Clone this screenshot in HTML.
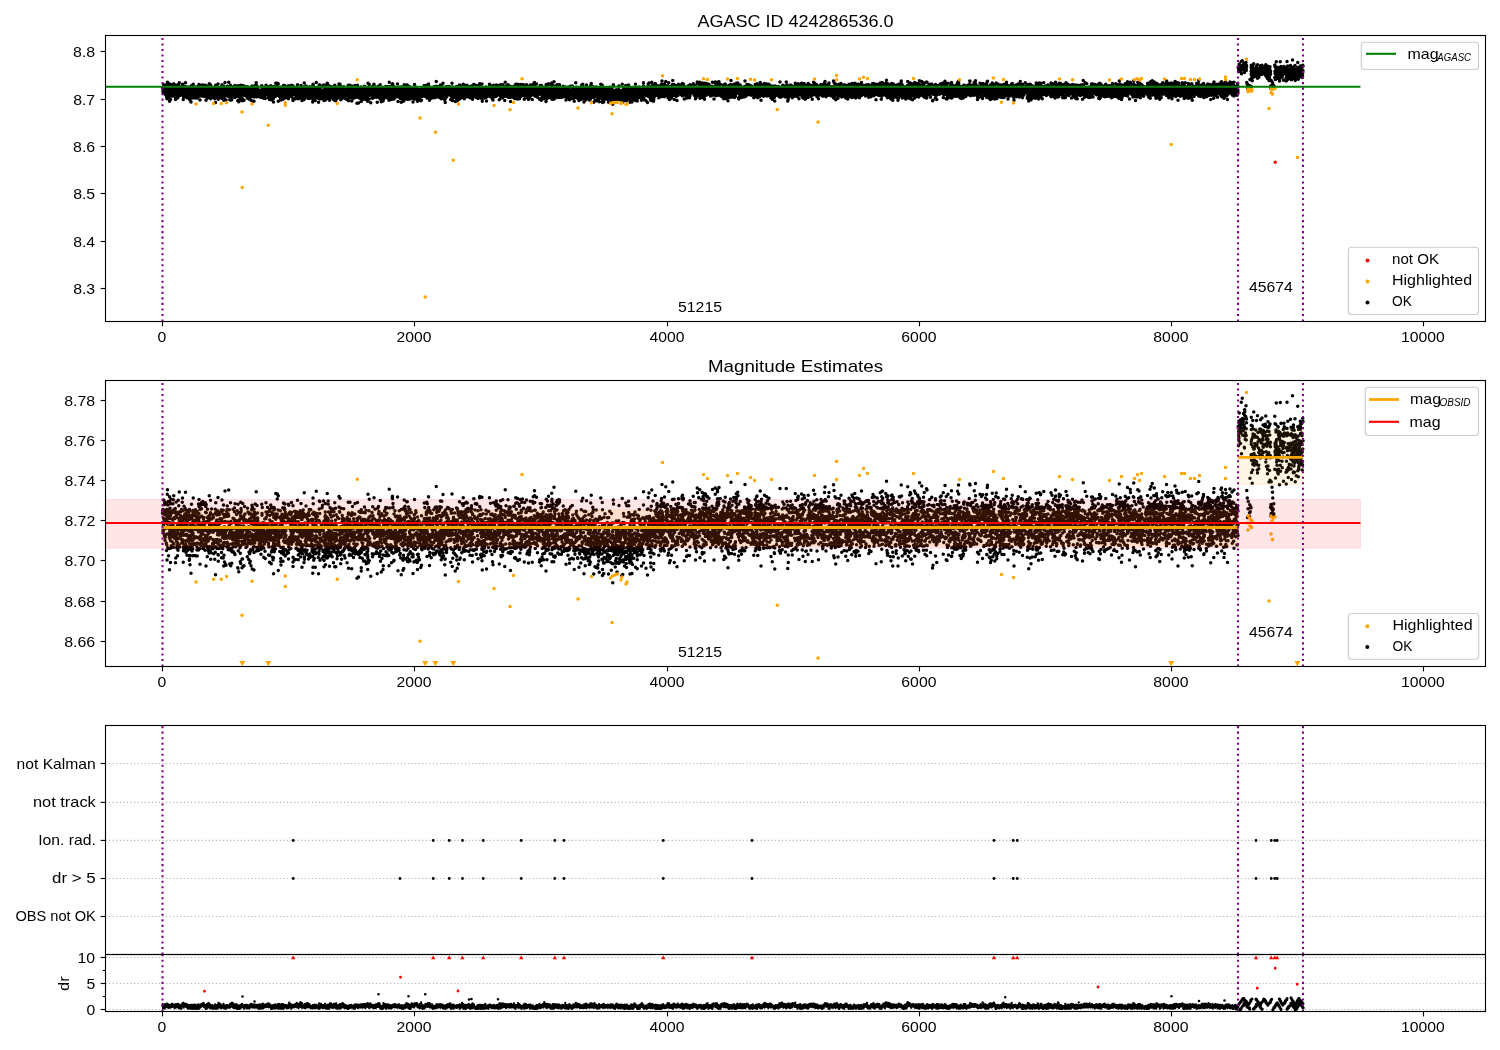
<!DOCTYPE html><html><head><meta charset="utf-8"><title>AGASC 424286536</title><style>html,body{margin:0;padding:0;background:#fff;overflow:hidden}svg{display:block;will-change:transform}text{font-family:"Liberation Sans",sans-serif}</style></head><body>
<svg width="1500" height="1050" viewBox="0 0 1500 1050">
<rect width="1500" height="1050" fill="#fff"/>
<defs>
<clipPath id="c1"><rect x="105.5" y="35.5" width="1380.0" height="286.0"/></clipPath>
<clipPath id="c2"><rect x="105.5" y="380.5" width="1380.0" height="286.0"/></clipPath>
<clipPath id="c3"><rect x="105.5" y="725.5" width="1380.0" height="229.0"/></clipPath>
<clipPath id="c4"><rect x="105.5" y="954.5" width="1380.0" height="57.0"/></clipPath>
</defs>
<g clip-path="url(#c1)">
<path transform="scale(0.25)" d="M1602 394h0m3499 255h0" stroke="#ff0000" stroke-width="14" stroke-linecap="round" fill="none"/>
<path transform="scale(0.25)" d="M650 351h0m1-2h0m1 19h0m0-20h0m0 12h0m1 9h0m0-6h0m0 7h0m1-8h0m0-6h0m1-17h0m1 18h0m1 2h0m1 14h0m0-30h0m1 9h0m0-3h0m0-8h0m0 11h0m1-3h0m0 25h0m0 3h0m0-3h0m1 0h0m0-8h0m0 8h0m2-16h0m2-16h0m0 38h0m0-19h0m1 26h0m0-16h0m1-23h0m0 33h0m0-31h0m0 4h0m0 3h0m1-1h0m0 2h0m0 37h0m0-36h0m0-3h0m1-23h0m0 32h0m0-4h0m1-10h0m0-22h0m0 42h0m1-7h0m0-21h0m0 6h0m0 35h0m2-44h0m1 9h0m0 12h0m0 31h0m0-27h0m0-15h0m2 10h0m0 25h0m0-20h0m1 9h0m0-14h0m0-4h0m0-8h0m1 24h0m0-2h0m0-16h0m0-18h0m0 69h0m1-65h0m0 28h0m1 2h0m0-18h0m0-4h0m0 28h0m0-30h0m0 23h0m1-5h0m0-8h0m0 11h0m0 0h0m1-13h0m0 23h0m0 21h0m0-27h0m1-5h0m0-24h0m0 9h0m0-13h0m0 23h0m1 23h0m1-2h0m2-32h0m0 19h0m0 1h0m0-2h0m0-17h0m1 17h0m0 5h0m0-6h0m1 11h0m0 6h0m0-15h0m0 5h0m1-6h0m1-10h0m1-16h0m0 21h0m0-6h0m1-18h0m1 27h0m0-5h0m0-5h0m1 16h0m0 12h0m0-13h0m0-23h0m0 32h0m0-45h0m1 21h0m2 19h0m0-6h0m1-20h0m0 7h0m0 15h0m0-20h0m2-4h0m1 20h0m0 7h0m0 24h0m1-32h0m0 28h0m1-18h0m1-35h0m0 24h0m0-11h0m1 1h0m0 23h0m1-28h0m1 28h0m0 6h0m0-13h0m0 11h0m2-7h0m0-13h0m0 30h0m0-18h0m1-5h0m0-6h0m0 16h0m0-15h0m1 3h0m0 19h0m0-5h0m1-42h0m0 24h0m0-11h0m2-8h0m0 17h0m1 10h0m0-10h0m0-4h0m0 24h0m1-50h0m0 26h0m0 5h0m0-4h0m1 5h0m0-7h0m0 6h0m1-12h0m0 33h0m1-24h0m0 7h0m0-2h0m1 2h0m1-12h0m0 19h0m0-19h0m0 10h0m1-4h0m0 16h0m0-16h0m0-10h0m1 15h0m0-1h0m1-5h0m1-3h0m0-8h0m0 23h0m0-4h0m1 2h0m0 10h0m0-16h0m1 9h0m1-31h0m0 35h0m0 1h0m1 3h0m0-43h0m1 22h0m0 8h0m1-18h0m0 21h0m1 1h0m0-7h0m0 34h0m1-15h0m0-20h0m0 9h0m0 15h0m0-23h0m0-9h0m1 30h0m0-31h0m1 7h0m0 17h0m0-33h0m1 10h0m0 27h0m0-14h0m1-11h0m1-5h0m1 4h0m0-9h0m1 20h0m1-36h0m0 47h0m1 3h0m0-9h0m0-17h0m0 30h0m1-34h0m0-3h0m0 40h0m1-29h0m0 3h0m1 9h0m0-14h0m0 7h0m1-6h0m0 1h0m0 25h0m1-1h0m0 0h0m0-29h0m0-5h0m0 24h0m0 4h0m0 14h0m0-27h0m1-4h0m0-2h0m1 29h0m1-38h0m0 18h0m0-9h0m1 15h0m1-6h0m0-14h0m0 25h0m1-10h0m0-15h0m0 25h0m0-24h0m1 22h0m0-22h0m0 0h0m1-4h0m0 6h0m0 21h0m0-24h0m0 20h0m1 23h0m0-30h0m1-18h0m0 29h0m0-9h0m0-11h0m0 28h0m0-10h0m0 20h0m0-4h0m0-37h0m0 21h0m1 17h0m0-19h0m0 7h0m0-15h0m0-16h0m0 20h0m1 31h0m0-28h0m0 19h0m0-27h0m0 0h0m0 0h0m0-2h0m0 21h0m2-17h0m0 2h0m0 16h0m1-11h0m0-18h0m1 21h0m0-2h0m0 34h0m1-53h0m0 6h0m0 24h0m1-2h0m0-40h0m0 38h0m0-1h0m1-26h0m0 29h0m0-27h0m0 19h0m0-6h0m1-13h0m0 0h0m0 6h0m0 25h0m0-32h0m0 13h0m1 3h0m0 6h0m0-24h0m0 11h0m2-4h0m0 32h0m0-7h0m0-22h0m1 14h0m0 4h0m0-10h0m0 0h0m0-12h0m0-9h0m0-1h0m0 21h0m1-33h0m1 29h0m0 15h0m0-18h0m1 12h0m1-22h0m0 22h0m1-2h0m1 7h0m1 11h0m1-16h0m0-17h0m1 16h0m0-21h0m1 39h0m0-28h0m0 3h0m0-19h0m1 2h0m1 5h0m1 26h0m0 0h0m1-7h0m0-15h0m1 15h0m0-15h0m1 15h0m0 12h0m0-3h0m0-34h0m0 12h0m1 31h0m0-13h0m0-19h0m0-4h0m1-2h0m0 13h0m0-7h0m1-3h0m0 4h0m1-10h0m0 10h0m0-6h0m1 11h0m1 20h0m0-17h0m0-10h0m0 9h0m0-25h0m1 18h0m0-3h0m1 9h0m0-15h0m0-7h0m0-7h0m0 26h0m2 3h0m0 9h0m0-2h0m0 11h0m0-22h0m1 17h0m0-19h0m0 7h0m1 32h0m0-52h0m0 33h0m0-26h0m0 9h0m0 2h0m1 7h0m0-30h0m1 17h0m0 4h0m0 4h0m0 12h0m1-5h0m1 7h0m0-12h0m0-27h0m1-2h0m0 31h0m0 8h0m1-2h0m0-31h0m0 19h0m0 14h0m1-11h0m0-15h0m0 8h0m0 19h0m1-10h0m1-6h0m2 20h0m0-14h0m0-31h0m3 28h0m0-25h0m0 13h0m0 10h0m0 2h0m0 16h0m0-21h0m0 13h0m0-17h0m1 22h0m0-4h0m1-1h0m0-21h0m1 9h0m2 2h0m0-5h0m1 6h0m0 19h0m1-14h0m0 3h0m0-34h0m0 26h0m1 7h0m0-24h0m0 10h0m1 17h0m0 3h0m0-35h0m1 56h0m1-58h0m0 8h0m0 24h0m0 7h0m0-15h0m1-8h0m0 18h0m0-17h0m1 6h0m0 1h0m0 7h0m0 8h0m1-4h0m1-9h0m0 3h0m0 21h0m1-46h0m0 9h0m0 28h0m2-29h0m0 12h0m1 2h0m0 18h0m1-11h0m0-6h0m0 7h0m1-19h0m0 26h0m0-14h0m1 0h0m0 19h0m1-54h0m0 32h0m0-9h0m0 0h0m1 17h0m0-13h0m0 2h0m0 19h0m1-20h0m0-10h0m1 4h0m1 30h0m0-31h0m1-17h0m0 12h0m0 23h0m1 21h0m1-27h0m0 21h0m0-24h0m1 19h0m0-21h0m0 6h0m1-22h0m0 16h0m0-1h0m1-5h0m0 8h0m2 0h0m1 15h0m0 1h0m1-19h0m1 14h0m0-23h0m0 32h0m0-18h0m0 9h0m0-20h0m1 13h0m1 12h0m0-26h0m0 13h0m1 22h0m0-8h0m1-4h0m1-10h0m0 9h0m0 6h0m1-21h0m1 2h0m0 31h0m1-17h0m0-12h0m0-5h0m1 27h0m0-9h0m0-32h0m0 19h0m1-15h0m0 59h0m1-69h0m0 35h0m1 7h0m0-16h0m1-3h0m0-12h0m0 27h0m0-20h0m2-1h0m0 0h0m1 27h0m0-1h0m0-19h0m0-3h0m0-9h0m0 14h0m1-8h0m0 8h0m0-1h0m0 10h0m1-4h0m0-23h0m0 23h0m1-1h0m0-2h0m0 0h0m1 10h0m0-43h0m0 54h0m1 1h0m0-31h0m0 37h0m0-16h0m0-15h0m0 3h0m1-17h0m0 13h0m0 0h0m1-1h0m0 14h0m1-17h0m1 11h0m0-19h0m1 8h0m0 24h0m0-16h0m1-12h0m0 24h0m0-4h0m0-26h0m1 32h0m3-26h0m0 9h0m0-1h0m0 13h0m1-8h0m0-10h0m0 23h0m0-23h0m1-11h0m0-1h0m1 11h0m0 30h0m0 4h0m1-36h0m1-18h0m2 35h0m0 8h0m0-10h0m0-4h0m1 17h0m0-20h0m1-13h0m1 17h0m0 11h0m0-31h0m0 45h0m1-50h0m0 21h0m0 6h0m1-12h0m0 42h0m0-19h0m1 9h0m1-16h0m0-2h0m0-18h0m0 9h0m0 6h0m0 9h0m1-26h0m0 45h0m1-33h0m1-35h0m0 35h0m1 2h0m0-8h0m1 11h0m0 30h0m1-21h0m0-27h0m1 48h0m1-32h0m0 5h0m0-19h0m1 14h0m1 7h0m0 8h0m0-34h0m1 5h0m0-6h0m0 35h0m0-3h0m1-1h0m0-34h0m0 37h0m1-9h0m1-7h0m1-6h0m1 26h0m0-34h0m1 1h0m1 31h0m0-55h0m0 25h0m1 9h0m0 18h0m1-33h0m1 22h0m1 29h0m0-28h0m1-6h0m0-3h0m0 5h0m0 8h0m1-14h0m1 6h0m0 5h0m0-31h0m1 60h0m0-15h0m1 1h0m0-17h0m0-11h0m1 7h0m1 15h0m0-20h0m1 38h0m0-29h0m0-4h0m0 18h0m1 4h0m1-14h0m2-3h0m0 6h0m0-2h0m1-27h0m0 8h0m0 31h0m1-21h0m0 4h0m0-5h0m0 11h0m0 7h0m1-3h0m0-9h0m1 4h0m1-18h0m1 32h0m0-9h0m0-4h0m1-30h0m0 4h0m1 9h0m0 11h0m0-11h0m1-17h0m0 28h0m0-10h0m0 30h0m1-15h0m0-2h0m0-15h0m1 15h0m1 2h0m0 8h0m0 0h0m1-7h0m1-1h0m0 4h0m0-6h0m0-11h0m0 15h0m1-11h0m0-13h0m0 17h0m0 1h0m1-4h0m1-1h0m0 14h0m0-5h0m1-11h0m0-15h0m0 13h0m0-2h0m1 21h0m1-12h0m0 34h0m1-60h0m0 60h0m0-34h0m0-10h0m1 13h0m0-22h0m0 15h0m0 22h0m0-6h0m1-22h0m0 9h0m0-10h0m0 16h0m1-8h0m0 41h0m0-26h0m0-30h0m1 27h0m0-5h0m1-14h0m0-1h0m1 9h0m0-1h0m0-5h0m1 9h0m0-6h0m0 11h0m1-18h0m0 27h0m1-14h0m0 19h0m0-7h0m0 15h0m0-29h0m1-14h0m0 14h0m1 31h0m0-58h0m0 10h0m1 31h0m0-35h0m1 22h0m0-20h0m0 23h0m0-6h0m0-2h0m1-9h0m0 19h0m1-11h0m0-8h0m1 40h0m0 8h0m0-30h0m0 5h0m1-6h0m0 9h0m0-3h0m0-5h0m1 22h0m0-25h0m1-28h0m0 38h0m0 0h0m1 22h0m0-45h0m0 0h0m1 9h0m0 7h0m1-7h0m0-9h0m0 7h0m1-8h0m0 4h0m0 3h0m0 4h0m1 13h0m0 21h0m0-20h0m0-25h0m0-3h0m1 5h0m1-13h0m0 27h0m1 4h0m0 0h0m1-24h0m0 23h0m0 3h0m2-20h0m2 8h0m0 18h0m0-13h0m0 3h0m1 6h0m0 1h0m0-14h0m1-8h0m0 1h0m1 21h0m0-13h0m0-9h0m1 24h0m1 9h0m0-17h0m1-28h0m1 13h0m0-2h0m0 9h0m1-17h0m0 20h0m0-12h0m1 9h0m0 6h0m0-5h0m1 12h0m0-3h0m1-3h0m0-10h0m0 31h0m1-7h0m1-37h0m0 1h0m0 26h0m1-5h0m0 17h0m0-32h0m0 11h0m1-13h0m0 42h0m1-19h0m0 10h0m0-12h0m1-19h0m0 39h0m1-11h0m0 1h0m0-7h0m1-14h0m1 6h0m0 29h0m1-42h0m0 6h0m0-13h0m0 9h0m0 4h0m2-17h0m0 7h0m0 5h0m0 11h0m1-24h0m0-3h0m1 30h0m0 6h0m0 24h0m0-59h0m1 28h0m1-1h0m0 14h0m0-32h0m1 13h0m0 10h0m0 2h0m1-7h0m0 12h0m0-12h0m0 0h0m2-12h0m0 2h0m0 5h0m0-5h0m1-9h0m0 4h0m0-9h0m0 35h0m0-9h0m0 31h0m0-49h0m0 32h0m1-33h0m1 3h0m0 16h0m0-24h0m0 17h0m0-8h0m1 14h0m0-16h0m0 16h0m0 5h0m0 1h0m2-4h0m0-23h0m0-10h0m1 29h0m0-5h0m1-7h0m1 17h0m0-13h0m1-32h0m1 34h0m0 22h0m1-12h0m1-19h0m0 28h0m0-17h0m0 17h0m0-40h0m1 32h0m0-3h0m0-14h0m1-8h0m0 18h0m1 4h0m0-6h0m0-9h0m0-2h0m1 10h0m0 19h0m0-17h0m1-8h0m0 11h0m1-8h0m0 8h0m1 5h0m0 11h0m0-12h0m0 1h0m1 1h0m0-11h0m0 3h0m1 11h0m1-5h0m1 7h0m0-20h0m1 3h0m1 6h0m0 2h0m0-4h0m1 6h0m0-8h0m0 2h0m1 5h0m1 3h0m0-3h0m0-11h0m0 13h0m0 14h0m1-5h0m0-6h0m0-18h0m0 22h0m0-9h0m1 4h0m0-10h0m1 11h0m0 3h0m0-39h0m1 18h0m0-8h0m0 0h0m0-1h0m1-6h0m0 37h0m1-18h0m0-2h0m1 7h0m0 1h0m0-4h0m0-2h0m0 8h0m1-13h0m1 14h0m0-8h0m0 1h0m2 1h0m0 1h0m0-8h0m0 32h0m0-9h0m1-7h0m0-2h0m1-10h0m0 13h0m1 2h0m1-15h0m0-8h0m0 22h0m0-9h0m0 3h0m0-12h0m1 26h0m0-23h0m1 30h0m1-32h0m1 0h0m0 15h0m0-6h0m1-30h0m0 9h0m0 6h0m1-1h0m0 23h0m1-5h0m1-5h0m1-6h0m1-9h0m0 12h0m0 10h0m0-2h0m1-27h0m0 23h0m0-7h0m1 5h0m0-5h0m0 13h0m0-3h0m2-8h0m1 18h0m0-15h0m0 24h0m0-11h0m1-30h0m1 33h0m1-11h0m1-24h0m0 50h0m0-21h0m1-24h0m0 20h0m0 18h0m0-33h0m1 14h0m1-2h0m0 4h0m1-3h0m1 0h0m0-10h0m0 3h0m0 10h0m0-31h0m0 23h0m0 6h0m1-4h0m0 9h0m0-6h0m1 28h0m0-53h0m0 0h0m1 42h0m1-38h0m0 16h0m1-4h0m0 1h0m0-2h0m0 25h0m0-20h0m1 17h0m0-24h0m0 10h0m0-17h0m0 15h0m1 9h0m0 17h0m0-26h0m1 18h0m0-18h0m1 8h0m0 20h0m0-32h0m1-11h0m0 25h0m1 16h0m0-13h0m0 28h0m1-29h0m0-24h0m0 15h0m1 5h0m0-29h0m0 8h0m0-6h0m1 40h0m0-5h0m0-3h0m0-5h0m1-5h0m0-23h0m1 21h0m0 3h0m1 3h0m1-6h0m0 9h0m0-4h0m0-11h0m0 5h0m1 18h0m0-9h0m0-24h0m0 2h0m1 3h0m0 13h0m0 1h0m0-38h0m0 35h0m0 1h0m1 5h0m1 7h0m2-12h0m0 12h0m0-20h0m1 4h0m0 3h0m0-3h0m0-10h0m1-17h0m0 14h0m0-19h0m1 37h0m0 11h0m1-12h0m1 4h0m0-25h0m0 7h0m0 23h0m0-5h0m1-38h0m0 29h0m0 41h0m0-70h0m1 35h0m0 8h0m1 3h0m0-6h0m0 4h0m1 3h0m1-10h0m0 3h0m0-10h0m1 8h0m1-5h0m0 7h0m0 12h0m1-15h0m1 2h0m0-11h0m0 0h0m0 9h0m0-23h0m0 23h0m1-17h0m0 8h0m1 34h0m0-40h0m0 37h0m1-20h0m0 26h0m0-39h0m0 23h0m1-16h0m0-7h0m0-4h0m0 1h0m1 31h0m2-17h0m0-20h0m0 0h0m0 19h0m0 16h0m0-32h0m1 9h0m0 7h0m0-4h0m1 4h0m0-6h0m0-12h0m0 16h0m1-8h0m0-15h0m1 51h0m1-13h0m0 5h0m1-1h0m0-46h0m0 17h0m0 19h0m0-12h0m0 20h0m0 4h0m2-3h0m0-45h0m0 26h0m0-14h0m1-6h0m0 27h0m0-20h0m1 14h0m0-23h0m1 2h0m0 31h0m1-26h0m0-10h0m1 31h0m0-2h0m0-22h0m0 42h0m1-32h0m0 18h0m1-10h0m0 18h0m0-7h0m1-7h0m0-7h0m0-5h0m0 0h0m2 17h0m0 2h0m1-24h0m1 35h0m0-25h0m0-9h0m0 23h0m1 10h0m1-2h0m1-22h0m1 11h0m0-24h0m0 4h0m0 3h0m2-16h0m0 46h0m0-8h0m0 14h0m1-38h0m0 26h0m0 0h0m0-39h0m1 33h0m1-11h0m0-15h0m1 34h0m0-6h0m0-2h0m1-3h0m0 0h0m1-22h0m0-2h0m1 27h0m0-11h0m0 8h0m0-16h0m1 4h0m1 23h0m1-25h0m0-7h0m0 16h0m1 3h0m0-5h0m0 11h0m1-10h0m0-17h0m0 30h0m0-2h0m0-38h0m0 28h0m0 0h0m1-7h0m1-4h0m0 13h0m1 6h0m0-21h0m1 17h0m0 5h0m0-11h0m1 4h0m1 26h0m0 5h0m0-58h0m0 34h0m0-4h0m0 19h0m1-15h0m1-9h0m1-14h0m0 21h0m1-1h0m0-8h0m1 29h0m0-34h0m0 12h0m1-17h0m0 19h0m0-27h0m1 16h0m0 0h0m0-11h0m0 5h0m0-1h0m1 10h0m0-6h0m0 0h0m0 12h0m1-7h0m1 28h0m0-42h0m0 10h0m1-4h0m0-3h0m0 18h0m1-22h0m0 33h0m1-9h0m1 5h0m0 3h0m1-34h0m0 27h0m0-26h0m1 27h0m1-14h0m0-9h0m1-16h0m0 30h0m0-16h0m1 21h0m1 11h0m0-9h0m0-9h0m0 19h0m1-18h0m0 8h0m0-17h0m0 32h0m0 4h0m1-43h0m0 28h0m0-26h0m0 0h0m0 22h0m1 5h0m1-30h0m0 4h0m1 7h0m0 5h0m0-1h0m0 15h0m2-20h0m0 20h0m0-17h0m0 9h0m1-2h0m0-3h0m0 21h0m1-38h0m0 17h0m0 19h0m0-38h0m0 16h0m1 5h0m0 16h0m0-8h0m1-16h0m0 10h0m0 0h0m0 21h0m1-38h0m0-3h0m0-10h0m1 44h0m0-6h0m1-13h0m0 3h0m0-13h0m1-4h0m0 36h0m0-5h0m0-31h0m0 13h0m1 18h0m0-20h0m0-7h0m0 45h0m1-28h0m0-3h0m1-22h0m0 17h0m0-1h0m1 25h0m0-4h0m0-31h0m0 17h0m2-24h0m1 23h0m0 0h0m0 10h0m1-11h0m1 28h0m0-29h0m0-17h0m0 11h0m1 24h0m0-55h0m0 22h0m1 12h0m0 29h0m0-2h0m1-25h0m0-8h0m0 26h0m0-14h0m2-3h0m0 9h0m1-5h0m0-18h0m2 24h0m0-3h0m0-1h0m0 0h0m0 13h0m0-44h0m1 38h0m0-7h0m1 14h0m0 1h0m0-18h0m1-18h0m0 6h0m0-5h0m1 31h0m0-9h0m0-9h0m1-15h0m0 12h0m1-1h0m0-7h0m0 9h0m1-5h0m0 5h0m0 4h0m1-9h0m1-2h0m0 13h0m0 10h0m0-6h0m0-16h0m0 8h0m1 14h0m0 12h0m0-43h0m1 22h0m0-6h0m0-1h0m0-8h0m0 33h0m1-15h0m1-22h0m0-6h0m0 26h0m0-7h0m1 5h0m1 18h0m1 1h0m0 2h0m1-23h0m0-22h0m1 23h0m1 11h0m0-5h0m0-29h0m2 9h0m0 16h0m0-3h0m1 10h0m1-4h0m0-11h0m0-5h0m0 17h0m1-17h0m0 12h0m0-15h0m0 30h0m1-19h0m0 17h0m0-19h0m0-2h0m1 28h0m0-20h0m0-20h0m1 16h0m0 40h0m0-44h0m1-2h0m0-4h0m0-1h0m0-20h0m0 66h0m1-21h0m0-40h0m0 47h0m0-7h0m0-18h0m1 22h0m0 3h0m1-39h0m0 46h0m0-20h0m1-23h0m0-1h0m1 38h0m0 4h0m0-28h0m0 20h0m0-24h0m0 25h0m0-1h0m1-24h0m0-1h0m1 7h0m1 10h0m1 24h0m1-17h0m0-34h0m0 2h0m0 12h0m0 25h0m1-30h0m0 21h0m0-8h0m0-18h0m0 22h0m1-21h0m0 17h0m1-43h0m0 45h0m0 14h0m0-26h0m0 6h0m1-14h0m1-3h0m0 6h0m0 15h0m0-7h0m3-12h0m1 25h0m1 1h0m0 4h0m1-1h0m0 10h0m0-24h0m1-3h0m0 43h0m2-19h0m0-32h0m0 23h0m0 6h0m1-28h0m0-19h0m0 7h0m1 12h0m0 11h0m0 5h0m1-35h0m0 11h0m0 24h0m0-5h0m1 15h0m0-14h0m0 13h0m0 12h0m0-15h0m1 1h0m1-4h0m2 6h0m0-16h0m0 7h0m1-12h0m0-2h0m0 21h0m1-15h0m1-3h0m0 1h0m1 29h0m0-26h0m0-22h0m0 32h0m0-16h0m2 4h0m0 11h0m0-33h0m2 43h0m0-22h0m0 2h0m1 1h0m0 18h0m0-21h0m0 3h0m0 24h0m0-31h0m1 0h0m0 12h0m0-33h0m1 31h0m1-12h0m0 43h0m0-6h0m1-17h0m1-6h0m0 6h0m0 1h0m0 6h0m1-15h0m1 5h0m0-21h0m0 35h0m0-8h0m0 0h0m1-4h0m0 2h0m0-26h0m0-4h0m0 27h0m0-16h0m0 2h0m1 19h0m0-28h0m0-12h0m0 32h0m0-13h0m0 39h0m1-9h0m0-36h0m0 9h0m0 17h0m0-17h0m0-7h0m0-2h0m1 16h0m0 22h0m0-8h0m1-4h0m1-5h0m0-21h0m0 32h0m0 5h0m2-30h0m0 8h0m0 14h0m1-51h0m0 30h0m0 31h0m0-25h0m0 16h0m1-27h0m0 31h0m1-8h0m1-22h0m0 21h0m0-6h0m0-2h0m0 14h0m0-30h0m1-13h0m0-3h0m0 47h0m0-24h0m0 1h0m0 10h0m0-16h0m1 29h0m0-37h0m0 23h0m1 11h0m0-17h0m1-5h0m0 16h0m1 10h0m0-17h0m0 21h0m0-22h0m0-5h0m0 6h0m1 30h0m0-27h0m0-6h0m0 6h0m0 7h0m0-5h0m1 5h0m1-35h0m0 19h0m0 25h0m0-18h0m0 16h0m1-35h0m0 31h0m1-21h0m2-13h0m0-3h0m0 44h0m1-3h0m0-38h0m0 34h0m0-16h0m0 7h0m1-1h0m0-19h0m0 24h0m1-20h0m0 17h0m0-6h0m0-10h0m2 32h0m0-30h0m0 2h0m1 19h0m1-35h0m0 34h0m1-17h0m0 20h0m1-9h0m0-4h0m0 9h0m1-16h0m0 33h0m0-44h0m0-7h0m0 15h0m1 23h0m0-12h0m0-2h0m1-21h0m1 16h0m0 6h0m0 2h0m0 14h0m0-3h0m1-18h0m0 4h0m1 31h0m0-61h0m1 20h0m0 5h0m0 12h0m0 10h0m1-6h0m0-5h0m1-5h0m0-14h0m0 15h0m0-26h0m1 27h0m0 28h0m1-32h0m0-6h0m1-11h0m0 10h0m1 26h0m0-14h0m1-4h0m1 23h0m0-27h0m0 16h0m1-6h0m0 7h0m1-29h0m0 17h0m0 20h0m1-7h0m1 2h0m1-2h0m1 3h0m0-7h0m0-15h0m1-10h0m0 28h0m1-39h0m0-9h0m1 36h0m1 16h0m0-17h0m0 0h0m0-21h0m1 0h0m0 18h0m1 11h0m0-8h0m0-34h0m0 46h0m0-6h0m2 6h0m0-19h0m0 11h0m0 16h0m1 8h0m0-32h0m0 15h0m1-35h0m0 24h0m0 19h0m0-22h0m2 27h0m0-20h0m0-10h0m1-5h0m0 11h0m0 8h0m0 0h0m1-1h0m0-11h0m1-10h0m0 13h0m0-17h0m1 11h0m0 1h0m0 15h0m0-21h0m1 28h0m0-27h0m0 27h0m1-22h0m0-5h0m0 18h0m0 0h0m2-22h0m0 31h0m0-19h0m0 9h0m1-30h0m0 21h0m1 8h0m0 4h0m0-14h0m1-8h0m0 15h0m0-6h0m0 6h0m0 18h0m1-6h0m0 0h0m0-12h0m2-5h0m0 0h0m0 26h0m0-12h0m1-15h0m0 13h0m0-5h0m0-12h0m3 15h0m0-16h0m0 9h0m2-10h0m0 3h0m0 2h0m0-9h0m1 11h0m0 0h0m1-6h0m0 12h0m0 24h0m1-43h0m0 29h0m1-8h0m0-1h0m1 0h0m0-3h0m1-7h0m0-8h0m1 25h0m0-30h0m0 7h0m0-18h0m0 25h0m1-7h0m0 13h0m0 31h0m0-52h0m0 26h0m1 6h0m1-21h0m0 24h0m0-14h0m0 9h0m1 10h0m1-34h0m0 0h0m0 10h0m1 23h0m0-20h0m0 1h0m1-7h0m0-23h0m1 28h0m0 9h0m0 6h0m1-20h0m0-1h0m0 2h0m1-13h0m0 32h0m0-19h0m0 3h0m2 23h0m0-25h0m0-14h0m0 1h0m1 18h0m0-17h0m0 6h0m0 14h0m1 12h0m0 18h0m0-33h0m1 5h0m0-24h0m0-1h0m1 34h0m0 1h0m1-41h0m1 30h0m1-2h0m0 2h0m1 13h0m1-24h0m0 1h0m0 28h0m0-34h0m0 18h0m1 12h0m0-32h0m0 12h0m0 11h0m0-17h0m1 2h0m0 21h0m1 3h0m0-12h0m0-25h0m0 11h0m1-11h0m0 8h0m0 11h0m0 2h0m0 11h0m1-32h0m0 11h0m0 11h0m1-32h0m1 44h0m0 4h0m2-26h0m1 10h0m0 8h0m1-1h0m0-16h0m1 4h0m1 19h0m1-26h0m0 26h0m0-28h0m0 53h0m1-32h0m0-25h0m1 2h0m0 10h0m0-27h0m0 24h0m0 9h0m1-8h0m0 10h0m1-10h0m2 46h0m0-22h0m0-29h0m1 3h0m0 10h0m0-19h0m0 7h0m0 12h0m0-9h0m1-15h0m0 22h0m1-3h0m1 18h0m1-31h0m0 16h0m1-4h0m0-13h0m0 38h0m0-4h0m0-13h0m1 0h0m0 0h0m0 0h0m1-6h0m0 16h0m0-35h0m2 36h0m1-25h0m0 10h0m0 16h0m0-40h0m0 17h0m0 38h0m0 3h0m1-31h0m0-16h0m0 26h0m1-18h0m0-3h0m0 2h0m1 13h0m1 15h0m1-19h0m1-2h0m0 7h0m0-6h0m0 8h0m1 4h0m0-35h0m0 6h0m1 19h0m0-4h0m0-8h0m0 11h0m1 9h0m0-25h0m0 38h0m3-12h0m1-40h0m1 51h0m1-6h0m0-33h0m0 13h0m1-3h0m0 10h0m0-8h0m0-18h0m0 18h0m1-8h0m0 30h0m0-28h0m1 1h0m0-5h0m1 2h0m0 15h0m0-27h0m0 34h0m1-16h0m0 32h0m1-1h0m1-14h0m0 7h0m0-21h0m0-2h0m1 16h0m0 6h0m0-2h0m1-20h0m1 22h0m1 15h0m0-24h0m0 4h0m0 2h0m0-14h0m0 21h0m0 3h0m0-39h0m0 34h0m1-14h0m0-17h0m0-28h0m0 33h0m0 4h0m1-10h0m0 5h0m0 33h0m0-37h0m1 17h0m0-18h0m0 14h0m1 0h0m0 7h0m0-25h0m1-7h0m0 32h0m1-43h0m0 58h0m0-30h0m0-11h0m0 6h0m2 7h0m0 7h0m1 4h0m1-25h0m1 5h0m0 3h0m0 0h0m1 49h0m1-45h0m0 15h0m3-21h0m0 8h0m0-9h0m1-8h0m1 39h0m0-8h0m0-14h0m0 1h0m1-8h0m0 31h0m0 1h0m1-48h0m0 25h0m0-14h0m0 26h0m1-25h0m0 14h0m0-17h0m1 8h0m1 9h0m0 11h0m0-16h0m2-2h0m0-27h0m0 53h0m1-10h0m0 3h0m1-26h0m0 18h0m0 6h0m0-6h0m1-2h0m1-25h0m1 22h0m0-8h0m1 8h0m0 13h0m1-14h0m0-4h0m0 5h0m0-6h0m1 8h0m0-1h0m0 13h0m0-2h0m0-11h0m0 2h0m0-12h0m1 18h0m0-21h0m0 7h0m0 8h0m1 15h0m0 1h0m1-16h0m0-5h0m0 4h0m0 0h0m1-3h0m0 2h0m0-9h0m1 9h0m0 38h0m1-24h0m0-5h0m0-18h0m0 18h0m0-19h0m0 18h0m1-15h0m0-17h0m1 19h0m0 4h0m0 9h0m0-18h0m1 0h0m0 11h0m1 9h0m0-29h0m0-7h0m0 28h0m0-5h0m0 21h0m0-8h0m1-22h0m0 9h0m1 4h0m0-1h0m0 2h0m0-23h0m0 7h0m1 15h0m1 20h0m1-29h0m0 20h0m0-18h0m0 25h0m0-32h0m0 6h0m1-10h0m0 15h0m1-2h0m0 7h0m0-35h0m0 37h0m0 1h0m1-4h0m0 5h0m0 19h0m1-10h0m1-11h0m0-4h0m0-3h0m1 38h0m0-42h0m1-12h0m1-1h0m0 27h0m1-9h0m0 24h0m0-26h0m0 14h0m1-23h0m0 14h0m1-5h0m0 3h0m1-3h0m0 4h0m1 19h0m0 13h0m0-34h0m0-11h0m1 8h0m0 5h0m0 29h0m0-34h0m1 18h0m0-24h0m1 1h0m0 7h0m0-15h0m1 18h0m0 4h0m2-27h0m0 8h0m0 21h0m0-20h0m2 2h0m0-12h0m0 43h0m1-20h0m0-1h0m0 0h0m0 9h0m1-3h0m1 2h0m0-15h0m0-17h0m1 42h0m0-35h0m1-1h0m0 28h0m1-5h0m1 8h0m0-9h0m1 17h0m0-23h0m0-5h0m0 12h0m0-24h0m0-5h0m1 44h0m0-32h0m1 1h0m2 11h0m0 11h0m0-21h0m1 4h0m0 21h0m0-14h0m0-11h0m0 8h0m1 3h0m1-15h0m0 8h0m0 27h0m0-21h0m0-10h0m1 12h0m0 29h0m0-40h0m1 12h0m0-7h0m0 8h0m0-45h0m0 57h0m0-17h0m1-2h0m0-7h0m1-14h0m1 24h0m0 13h0m1-25h0m0 25h0m0-25h0m0 2h0m2 21h0m0 4h0m0-27h0m0 9h0m1 8h0m0-6h0m1 16h0m0-2h0m0-13h0m1 3h0m0-14h0m0 1h0m0 38h0m1-36h0m0 10h0m0 16h0m2-52h0m0 23h0m1 15h0m0 0h0m0-36h0m0-3h0m1 39h0m0-15h0m1 24h0m0 0h0m0-37h0m0 18h0m0-18h0m0-4h0m0 31h0m0-10h0m1 26h0m0-25h0m1 6h0m1 26h0m0-27h0m0 5h0m1 22h0m0-44h0m0 9h0m0 15h0m0-1h0m0-12h0m1 12h0m0-4h0m3-2h0m0-20h0m1 36h0m0-6h0m0-9h0m0-3h0m0 2h0m0-2h0m1 6h0m0-6h0m0-12h0m0 33h0m0-14h0m1-12h0m0 18h0m1 1h0m0-10h0m0-7h0m0-3h0m1-7h0m0 9h0m1 20h0m0-6h0m0-15h0m0 3h0m1 14h0m0-10h0m0 6h0m0 12h0m1 0h0m0-14h0m0 2h0m0-21h0m1 4h0m0 0h0m1 12h0m0-34h0m0 40h0m2-12h0m0 42h0m0-50h0m0 4h0m1 1h0m1-4h0m0 14h0m0 3h0m1 4h0m0-3h0m1 10h0m0 2h0m0-24h0m1-6h0m0 7h0m0-15h0m0 12h0m1 13h0m1-6h0m0 23h0m0-31h0m1 9h0m0-8h0m0-6h0m0-1h0m1 19h0m0 16h0m1-13h0m1 18h0m1-25h0m0-10h0m0 15h0m0 7h0m1-17h0m0-7h0m0-9h0m0 61h0m1-36h0m0 0h0m1-3h0m0-12h0m0 10h0m1-5h0m1 16h0m0 3h0m1-11h0m0-1h0m0 4h0m2 8h0m0 23h0m0-23h0m0-13h0m0 27h0m1-31h0m1-3h0m0-15h0m0 44h0m0-18h0m0-17h0m1 38h0m0-19h0m0 29h0m1-26h0m0 8h0m0 8h0m0-14h0m0-34h0m1-7h0m0 26h0m1-7h0m0-3h0m1 11h0m0-11h0m0 17h0m0 3h0m1-30h0m0 23h0m1 5h0m0-24h0m0 22h0m0-5h0m1-18h0m1 33h0m0-20h0m0 6h0m0 28h0m1-19h0m1-21h0m0 0h0m1 31h0m0-34h0m1-12h0m1 41h0m1-41h0m1 23h0m0-13h0m0 47h0m0-4h0m0-33h0m2-1h0m0 26h0m0-7h0m1-4h0m0 23h0m0-33h0m0 27h0m0-9h0m0-31h0m0 30h0m1-17h0m0-19h0m1 30h0m1-16h0m1-11h0m0 14h0m0-8h0m1 35h0m0-20h0m0 26h0m1-24h0m0-3h0m1-20h0m0 14h0m0 34h0m1-23h0m0 15h0m0 0h0m0-11h0m0-17h0m1 22h0m0-3h0m1-16h0m0 3h0m0 12h0m0-22h0m0 22h0m1-3h0m0 7h0m1-22h0m0-9h0m1 32h0m0-11h0m0 1h0m1-7h0m0 15h0m1-17h0m0-4h0m0 32h0m1-10h0m0-23h0m1 33h0m0-35h0m1 33h0m0-27h0m1 28h0m0-24h0m0 41h0m0-15h0m1-18h0m1 6h0m0-18h0m0-2h0m1 24h0m0-18h0m1 5h0m0 25h0m0 0h0m1-18h0m0-19h0m0-7h0m1-15h0m0 22h0m0-4h0m0-3h0m0 4h0m1 14h0m1-9h0m0 20h0m2 4h0m1-37h0m1 16h0m0-14h0m1 9h0m0 36h0m0-34h0m1 8h0m0 9h0m1-7h0m1 1h0m1-2h0m0 27h0m0-32h0m1 39h0m0-34h0m0-12h0m0 25h0m0-29h0m0 6h0m0 29h0m1-26h0m0 32h0m1-20h0m0-15h0m0 14h0m1 15h0m1 3h0m0-29h0m1 13h0m0-19h0m0 13h0m0 2h0m1-14h0m0 8h0m0 13h0m2-13h0m0-2h0m0 30h0m0-16h0m0 16h0m1-30h0m1 1h0m0 15h0m0-7h0m1-6h0m0-3h0m2 6h0m0 32h0m0-22h0m1-15h0m0 16h0m0-21h0m1 14h0m0 2h0m1-23h0m0 31h0m0 16h0m1-27h0m0-11h0m0 5h0m0 13h0m1 4h0m0 1h0m0-22h0m1 19h0m1-8h0m2-8h0m0 0h0m1 2h0m0 0h0m0 13h0m0-22h0m1 19h0m0-19h0m0 0h0m1 12h0m0 5h0m2-21h0m0 24h0m0-9h0m0-29h0m1 26h0m1 15h0m0-10h0m0-27h0m0 39h0m0-18h0m1-6h0m0 16h0m0 2h0m0-21h0m1 12h0m0 4h0m0-14h0m1 9h0m0-4h0m0-4h0m1 21h0m1-18h0m1-5h0m0 6h0m0-13h0m0-2h0m1 17h0m1 15h0m0-41h0m1 51h0m0-12h0m0-24h0m0 7h0m1-21h0m0 35h0m0-28h0m0 2h0m0 15h0m0-4h0m0 7h0m1-3h0m0 8h0m1 0h0m0 2h0m0-1h0m0 6h0m1-20h0m0-11h0m0 21h0m0 5h0m1 9h0m0 0h0m1-49h0m0 21h0m0 4h0m1-15h0m1 28h0m1 8h0m0-10h0m1-16h0m0 45h0m0-10h0m0-42h0m1 39h0m0-11h0m0-28h0m1 23h0m0-23h0m0 15h0m0-5h0m2 12h0m0-9h0m0 20h0m1-4h0m0-27h0m1 32h0m1 10h0m1-20h0m0-1h0m1-20h0m0 22h0m1-7h0m0 14h0m0 3h0m1-11h0m0-1h0m1 1h0m0 0h0m0-8h0m1 1h0m0-8h0m0 13h0m0-13h0m0 11h0m0-6h0m1 26h0m1-33h0m0 10h0m0-6h0m1 25h0m1-12h0m0 18h0m0-43h0m0 18h0m0 13h0m1 0h0m3-2h0m0-10h0m1 8h0m0-3h0m0-5h0m1 10h0m0 13h0m0-44h0m0 27h0m1-14h0m0-1h0m0 25h0m0-27h0m1 33h0m0-30h0m1 12h0m0 2h0m0-12h0m1 10h0m0-45h0m0 56h0m0 5h0m1-23h0m0 5h0m0-15h0m0 20h0m1-24h0m0-5h0m0 26h0m0-11h0m1-10h0m0 6h0m0 21h0m1-20h0m0 6h0m0 24h0m0-39h0m3 13h0m0-1h0m1 11h0m1 2h0m0 0h0m0-19h0m0 21h0m0 5h0m0 2h0m2 2h0m0-24h0m0-10h0m0 29h0m1-5h0m1 16h0m0-42h0m1 11h0m0 20h0m0-34h0m0 27h0m1 19h0m0-23h0m0 19h0m0-34h0m0 24h0m1-4h0m0 3h0m1-6h0m0 0h0m0 11h0m0-41h0m0 37h0m0-16h0m0 28h0m1-10h0m1-24h0m0 21h0m0-4h0m0-14h0m1-12h0m0 49h0m1-30h0m0-10h0m1-15h0m0 27h0m0 19h0m0-5h0m0-10h0m1 8h0m0-18h0m0 32h0m1-20h0m1-5h0m0 25h0m0-32h0m0 9h0m1-19h0m0 13h0m0 9h0m0-1h0m1-1h0m0-7h0m0 2h0m0 8h0m0-41h0m0 36h0m0 20h0m1-35h0m0 9h0m1 29h0m0-17h0m1 10h0m0 0h0m1-20h0m0 17h0m0-7h0m1-25h0m2 50h0m1-33h0m0 28h0m0-23h0m0-12h0m0-8h0m1 43h0m0 15h0m1-62h0m1 21h0m0 13h0m1-12h0m0-19h0m0 28h0m1-8h0m0 7h0m1-8h0m0-14h0m0 31h0m0 1h0m1-2h0m1-20h0m0-13h0m0 6h0m0-6h0m0 31h0m1-20h0m1-18h0m0 21h0m0-8h0m0 11h0m0-15h0m1 6h0m0 17h0m1-19h0m0 13h0m2 1h0m0-9h0m0-8h0m1 11h0m0-20h0m1-1h0m1 24h0m0 6h0m0-14h0m1 9h0m0-11h0m0 5h0m1 1h0m0 2h0m0-8h0m1 17h0m0 0h0m1-17h0m1 12h0m0 5h0m1 7h0m0-16h0m0 30h0m1-49h0m0 18h0m0 2h0m0 7h0m0-15h0m1 8h0m0-18h0m0 34h0m2-25h0m0-9h0m1 14h0m0-32h0m0 26h0m0 0h0m1 43h0m0-30h0m0-24h0m1 16h0m0 7h0m0-1h0m1-8h0m0 3h0m0 29h0m1-24h0m1-10h0m1 29h0m0-32h0m0 29h0m0-27h0m0-4h0m1 12h0m0 9h0m1-16h0m0 4h0m1 25h0m0-10h0m0-13h0m2-9h0m0-6h0m1 9h0m0 4h0m0 19h0m0-12h0m1 7h0m0 12h0m0 16h0m1-39h0m0 18h0m1-10h0m1-15h0m1 2h0m0 8h0m1 5h0m0-16h0m0-13h0m1 26h0m0 1h0m0 19h0m0-27h0m0 30h0m1-29h0m1-19h0m0 26h0m0-15h0m0 45h0m1-43h0m0 21h0m0-10h0m1 7h0m0 5h0m0-34h0m0 23h0m1 5h0m1-24h0m0-2h0m1 48h0m3-13h0m0-1h0m0-24h0m0 14h0m1-7h0m0-4h0m0 10h0m0-34h0m1 15h0m0 11h0m0 29h0m0-11h0m0-18h0m0-11h0m0 14h0m1-8h0m0-11h0m1 44h0m0-30h0m2-2h0m0 8h0m1 0h0m1-20h0m0 25h0m0-7h0m1 12h0m0-27h0m0 25h0m1-26h0m0 8h0m0 29h0m1-11h0m0-18h0m0-4h0m1-14h0m0 12h0m2 2h0m0 23h0m2-5h0m0-11h0m0-19h0m0 43h0m0-50h0m0 36h0m0 13h0m1-25h0m0 11h0m0 7h0m0-26h0m1 22h0m0-7h0m0 16h0m0-29h0m2 40h0m0-45h0m0 37h0m0-16h0m0 1h0m1-15h0m0-15h0m0 13h0m1 14h0m0 17h0m0-33h0m1 28h0m0-11h0m0 12h0m1-28h0m1 4h0m0 29h0m1-16h0m0 0h0m1-20h0m0 19h0m0-5h0m0-17h0m1 6h0m0 33h0m0-46h0m0 37h0m1 5h0m0-16h0m1-8h0m0 14h0m0-18h0m2 11h0m0-6h0m0-18h0m2 26h0m0-8h0m0-14h0m1 4h0m0-1h0m0 18h0m0-5h0m1 14h0m0 6h0m2-22h0m0 28h0m0-32h0m0 11h0m1 5h0m0-3h0m0 3h0m1-13h0m0 22h0m1-10h0m1-10h0m1-1h0m0 31h0m0-44h0m0 33h0m1 6h0m0-12h0m0-3h0m1 4h0m0-19h0m0 23h0m0-4h0m0-3h0m1 10h0m2-8h0m0-24h0m1-3h0m0 10h0m0 2h0m0 19h0m0-10h0m0-24h0m1 21h0m0-6h0m0-12h0m0 24h0m1-9h0m1 3h0m0 5h0m0 21h0m1-10h0m0-22h0m0 38h0m0-44h0m0-1h0m0 25h0m0-6h0m1 15h0m0-34h0m0 23h0m0 6h0m2 5h0m0-26h0m2 27h0m0 0h0m0-49h0m1 30h0m0-30h0m1 24h0m0 12h0m0 0h0m1-18h0m1-1h0m1-7h0m1-6h0m1 44h0m0-24h0m0 0h0m2 20h0m1-3h0m0 11h0m1-23h0m0 18h0m0-43h0m0 22h0m1-1h0m0 5h0m1-25h0m0 25h0m0-11h0m0 5h0m0 20h0m0-14h0m1-3h0m0-2h0m0-7h0m1 8h0m0-8h0m0 17h0m1 7h0m0 2h0m0-23h0m1-10h0m0 27h0m0 18h0m1-28h0m1 12h0m1-24h0m1 11h0m0 12h0m0-17h0m0 2h0m1-1h0m0 19h0m1-43h0m0 41h0m0-17h0m1-16h0m0-10h0m1 30h0m0-13h0m1 15h0m1 3h0m0-7h0m0 18h0m0-24h0m0 34h0m0-10h0m1-19h0m1-14h0m0 21h0m0 21h0m0-36h0m1 39h0m0 0h0m0-27h0m1 1h0m0 6h0m0 1h0m0-14h0m0 2h0m1 12h0m0 11h0m0-27h0m1 7h0m0 25h0m0-54h0m0 36h0m0 24h0m0-18h0m1 5h0m0 22h0m0-47h0m0 21h0m1 0h0m0-16h0m1 2h0m0 6h0m1-19h0m0 7h0m0 26h0m1-20h0m0 12h0m1-10h0m0-6h0m1 2h0m0-1h0m0 26h0m0-15h0m0-4h0m0 12h0m2 3h0m0 8h0m1-11h0m0-18h0m1 8h0m0 6h0m0 6h0m1-21h0m0 18h0m0 0h0m1-24h0m0 9h0m0 1h0m1-4h0m1 12h0m1-26h0m0 24h0m1-20h0m0 37h0m0-29h0m1 44h0m1-33h0m0 16h0m1-6h0m0-17h0m1 5h0m0-5h0m1 3h0m0 9h0m1-11h0m1-5h0m1-3h0m1 27h0m0-34h0m0 24h0m0-8h0m0 3h0m1-19h0m0 23h0m0-3h0m1-7h0m0 8h0m0 0h0m0 0h0m1-6h0m1-28h0m0 23h0m1 15h0m1-2h0m0-3h0m1 5h0m0-3h0m0-4h0m0-11h0m0 23h0m1-38h0m0 45h0m0-11h0m1-17h0m0-6h0m0 17h0m1-6h0m2-5h0m1 2h0m0-3h0m0 22h0m1 10h0m1-38h0m0 18h0m0-4h0m1 31h0m0-23h0m0-11h0m1 12h0m0 8h0m1 17h0m0-47h0m1 9h0m0 9h0m1 6h0m0-36h0m1 42h0m1-11h0m0-15h0m0 24h0m1-22h0m1 28h0m0-33h0m1 10h0m0 4h0m0 4h0m0 8h0m0-19h0m0 22h0m1 2h0m1-11h0m0-21h0m1-9h0m1 14h0m0-17h0m0 29h0m1-15h0m0-11h0m0 16h0m1 13h0m0-24h0m0 28h0m0-29h0m0 37h0m0-45h0m1 39h0m0-7h0m0-30h0m2 41h0m0-18h0m0-5h0m1-3h0m0 15h0m0 5h0m1-11h0m0 10h0m1-7h0m1 1h0m1 1h0m0-28h0m1 3h0m0 26h0m1-18h0m1 6h0m0 3h0m1 3h0m0-21h0m0 54h0m0-31h0m0-11h0m1-3h0m0 13h0m1-3h0m0 7h0m0-14h0m1 23h0m0-11h0m1 5h0m0-14h0m0 22h0m1-2h0m0-18h0m0-23h0m0 46h0m1-35h0m0 6h0m0-4h0m0-2h0m0-5h0m1 46h0m0-38h0m0 28h0m1 11h0m0-44h0m1 8h0m0 6h0m0 20h0m2-19h0m0-4h0m0 25h0m0-31h0m0 24h0m1-10h0m0 7h0m0-17h0m1 34h0m1-8h0m0 5h0m0-49h0m1 20h0m0 15h0m0 7h0m1-12h0m1-16h0m0 20h0m1-3h0m0-17h0m1 9h0m0 9h0m0-22h0m0 37h0m1-22h0m2 7h0m0 31h0m0-35h0m1 18h0m1-24h0m0-7h0m0-25h0m0 26h0m1-5h0m0 0h0m1 11h0m0 8h0m0 11h0m1-36h0m0 16h0m1 9h0m1 16h0m2-20h0m1 4h0m0-18h0m0 21h0m3-22h0m0 8h0m0-19h0m1 50h0m1-13h0m0-3h0m1-10h0m0-15h0m0 5h0m1 6h0m0 7h0m0 2h0m0 3h0m1 13h0m0-39h0m1 44h0m1-9h0m0 1h0m0-29h0m0-1h0m0 10h0m1 2h0m0-16h0m0 15h0m0 1h0m1 5h0m0-9h0m0-14h0m1 28h0m0 33h0m0-44h0m0 27h0m0 0h0m1-24h0m0 9h0m0 13h0m1-18h0m0-11h0m1-8h0m0 0h0m0 3h0m1 5h0m0 26h0m0-27h0m2-4h0m0 7h0m0 13h0m1-13h0m0 28h0m1-35h0m0 2h0m2 11h0m0 15h0m0-3h0m0-14h0m0 14h0m0-12h0m0-3h0m1 4h0m0-1h0m0 13h0m0-2h0m0-24h0m1 9h0m0 12h0m1-12h0m0-17h0m1 8h0m1 29h0m0 2h0m0-39h0m1 33h0m0 1h0m0 15h0m0-26h0m1-13h0m0 18h0m1-6h0m1 14h0m0 4h0m0-31h0m0 0h0m0 39h0m2-51h0m0 52h0m0-38h0m0-19h0m1 29h0m0 18h0m1-22h0m0 11h0m0-1h0m0-25h0m1 26h0m1-2h0m0-1h0m1 10h0m0 3h0m0-14h0m1-7h0m0-21h0m1-4h0m1 34h0m0-12h0m0 37h0m1-30h0m0 4h0m0-6h0m1-6h0m0 4h0m0 1h0m1-12h0m0 29h0m0-24h0m1 2h0m0 23h0m1-38h0m0 16h0m1 22h0m1-22h0m0-14h0m0 50h0m0-27h0m0-12h0m0-1h0m0 15h0m1 14h0m1 5h0m1-51h0m0 18h0m1 15h0m1 5h0m1-13h0m0-12h0m0 10h0m0 24h0m1-31h0m0 1h0m0 23h0m0 2h0m0-31h0m0 25h0m1-8h0m0 8h0m0-25h0m1-1h0m0-7h0m1 36h0m1-19h0m0 25h0m1-45h0m0 34h0m0 9h0m1 1h0m1-24h0m0 7h0m1 2h0m1-2h0m0 9h0m0-27h0m1 35h0m0-20h0m1-5h0m1 25h0m0 15h0m1-30h0m0 6h0m0-15h0m0 25h0m1-2h0m0-40h0m1 34h0m0 8h0m1-21h0m2 0h0m0 21h0m0-12h0m0 8h0m0-28h0m1 28h0m0-23h0m0 6h0m0 3h0m1 0h0m0-6h0m0-11h0m0 3h0m0 31h0m1-43h0m0 31h0m0-6h0m1 9h0m0 0h0m1-3h0m0 20h0m0-26h0m2 14h0m0 11h0m2-31h0m0 23h0m0-35h0m0 41h0m1-14h0m0-25h0m1 17h0m0-5h0m0 38h0m2-32h0m0 12h0m0-17h0m1 30h0m0-5h0m0-26h0m1 9h0m0-1h0m0-12h0m1 30h0m0 2h0m0-12h0m1-30h0m0 19h0m0-16h0m0 26h0m1 5h0m0-40h0m1 19h0m0 24h0m0-3h0m0-16h0m2 10h0m0-12h0m0-7h0m2 11h0m0 0h0m0 6h0m1-1h0m0-5h0m0-17h0m1 19h0m1 30h0m0-23h0m1 1h0m0-36h0m1 23h0m0-4h0m0 1h0m1-3h0m0 4h0m0 11h0m0-2h0m1 10h0m0-38h0m0-6h0m2 25h0m2 1h0m0-4h0m0-4h0m0 25h0m1-49h0m0 27h0m0-22h0m0 40h0m0-26h0m1 17h0m0-25h0m0 24h0m1-7h0m1-9h0m0 36h0m0-5h0m1-6h0m0 2h0m1-13h0m0 8h0m2 9h0m0-25h0m0 11h0m1 9h0m0-1h0m0-38h0m3 15h0m0 4h0m0 8h0m0 10h0m1-20h0m0 29h0m0 7h0m0-15h0m0-18h0m1-3h0m0 8h0m0-7h0m0 13h0m0 10h0m2-5h0m0-12h0m0 6h0m1-3h0m0 8h0m1 4h0m0-3h0m2-3h0m1-14h0m0 42h0m0-45h0m1 2h0m0 41h0m0-35h0m1 14h0m0-12h0m1-20h0m0 16h0m1 6h0m1 14h0m1-23h0m0-9h0m0 50h0m0-36h0m0 15h0m1-8h0m0 34h0m0-48h0m0 14h0m1-13h0m0-8h0m0-4h0m1 25h0m0-12h0m1-3h0m0 41h0m1-16h0m0 8h0m1-27h0m0 8h0m0-1h0m1 25h0m0-21h0m1 6h0m0-18h0m0-6h0m1 21h0m0-9h0m0 21h0m0-34h0m0 30h0m0-25h0m1 3h0m0 3h0m0 23h0m1 11h0m1-37h0m1 13h0m0 8h0m1-18h0m0 1h0m0 12h0m0 15h0m1-13h0m1-5h0m0 11h0m0-21h0m1 22h0m1-29h0m1-8h0m0 30h0m0-4h0m1-17h0m0 0h0m0 32h0m0-2h0m0-16h0m0 37h0m1-49h0m0 10h0m0-4h0m0-25h0m0 15h0m1 28h0m0-11h0m1 6h0m0-5h0m0-5h0m0-13h0m1 6h0m0 13h0m0 23h0m0-40h0m0 25h0m2-9h0m0-2h0m0 3h0m0-13h0m0-15h0m0-4h0m1 4h0m1 17h0m0-7h0m0 2h0m1 30h0m0-1h0m0 1h0m0-26h0m0 3h0m1 12h0m0 3h0m0-4h0m0 1h0m0-40h0m1 33h0m0 4h0m0-23h0m1 5h0m1 28h0m0-6h0m0-18h0m0-5h0m0 28h0m1-17h0m0-19h0m1 34h0m1-12h0m0 6h0m0 17h0m3-18h0m0-17h0m0 6h0m0 12h0m0-30h0m0 6h0m0 8h0m0 23h0m0-21h0m0-5h0m1 14h0m0-16h0m3-12h0m0-8h0m0 58h0m0-36h0m1 15h0m0-24h0m0-7h0m0 48h0m0 11h0m0-32h0m2 10h0m0-4h0m0-25h0m0 38h0m1-16h0m0-22h0m0 39h0m1-25h0m0 12h0m1 7h0m0-6h0m0-30h0m1 31h0m1 18h0m0-24h0m0 29h0m1-41h0m0 17h0m0 1h0m0-47h0m1 57h0m0-37h0m1 30h0m0-9h0m0 24h0m0-38h0m0-4h0m1 33h0m0-10h0m1-7h0m0 27h0m0-41h0m1 40h0m1-8h0m0-4h0m1-9h0m1-23h0m0 14h0m0 6h0m1-24h0m0 32h0m0-9h0m1-26h0m0 40h0m0-24h0m1 20h0m0-4h0m1-9h0m0 5h0m0-21h0m0 16h0m1 7h0m0 1h0m0-33h0m1 44h0m0-24h0m0-16h0m1 46h0m0-27h0m0-3h0m2 2h0m0 0h0m0-4h0m1-18h0m0 20h0m0-17h0m1 10h0m0 33h0m1 5h0m0-28h0m0 14h0m1-19h0m1 10h0m0-26h0m0 14h0m0-16h0m1 35h0m1-14h0m1-2h0m0 10h0m1 6h0m0 11h0m1-9h0m1-2h0m0 9h0m0-23h0m0 7h0m0-5h0m1 6h0m0-5h0m1 27h0m0-34h0m0 20h0m1-9h0m1-7h0m0 18h0m1-26h0m0 35h0m0-12h0m0-2h0m1-18h0m0 19h0m1-21h0m1 29h0m0-18h0m0 18h0m1-37h0m0 36h0m0 2h0m1-34h0m0 23h0m1-14h0m1 29h0m1-1h0m1-15h0m0 4h0m0 10h0m0-13h0m1 8h0m0-8h0m1-10h0m1 4h0m0-18h0m0 7h0m0 31h0m1-9h0m0-12h0m0-8h0m0 3h0m1 15h0m0 0h0m1-4h0m0 5h0m0 24h0m1-13h0m0-12h0m0-24h0m1 33h0m0-22h0m1 9h0m0-19h0m0 10h0m1-2h0m0 0h0m0 10h0m0 9h0m0-13h0m0 13h0m1-5h0m0-24h0m1 37h0m0-28h0m0 0h0m1 10h0m0-9h0m1-9h0m0 40h0m0-36h0m1 14h0m0-15h0m0 5h0m0-4h0m0 6h0m1 17h0m0-22h0m0 6h0m0 3h0m0 5h0m1-1h0m0-2h0m0 11h0m0-1h0m0-11h0m0 3h0m0-3h0m0 6h0m1-24h0m0 38h0m1-21h0m1 19h0m0 15h0m0-20h0m0-15h0m0 31h0m1-10h0m2-24h0m1 4h0m0 2h0m0-5h0m0-17h0m1 23h0m0 13h0m0-3h0m2-6h0m0-6h0m1-3h0m0 14h0m0-18h0m0 12h0m0-4h0m0-6h0m0 16h0m1-6h0m0 8h0m0 15h0m1-33h0m0 3h0m1-7h0m0 24h0m0-37h0m1 24h0m0 12h0m1-27h0m0 19h0m1-2h0m1-3h0m0-2h0m0-5h0m1 13h0m0-17h0m0 38h0m1-15h0m0-7h0m0 15h0m1-3h0m0-2h0m1 23h0m1-33h0m1-1h0m0 16h0m1 0h0m0-29h0m0 6h0m0 15h0m0 11h0m1-16h0m0 12h0m2-12h0m0-10h0m0-4h0m0-29h0m1 46h0m0-25h0m1 26h0m1-29h0m0 17h0m0-17h0m0 13h0m0 8h0m1 16h0m0-18h0m0 16h0m1-30h0m0 10h0m1-1h0m1 30h0m0-17h0m1 18h0m1-19h0m0 10h0m1-21h0m0-9h0m1 10h0m0-4h0m1-5h0m0 18h0m1 28h0m0-20h0m1-17h0m0-4h0m1 0h0m0 28h0m1-14h0m0 15h0m0-29h0m1 25h0m1-13h0m0-15h0m0 10h0m1-3h0m1 5h0m0 28h0m0-36h0m1-3h0m1 28h0m0-39h0m0 25h0m1 20h0m0-11h0m0-9h0m1-7h0m0-9h0m0-17h0m1 26h0m0 13h0m1 1h0m0-23h0m1 30h0m0-28h0m1-22h0m1 47h0m1-18h0m0 29h0m0-37h0m1 2h0m0 9h0m1 18h0m0-12h0m0 10h0m1 23h0m0-53h0m0-6h0m0 13h0m1 15h0m1 17h0m0-5h0m1-24h0m0 25h0m0-15h0m1-9h0m0 19h0m0 0h0m1-12h0m0-19h0m0 47h0m2-51h0m0 26h0m0 18h0m0-34h0m1 18h0m0-13h0m0 16h0m0 11h0m1-4h0m0-12h0m0 10h0m1-28h0m0-18h0m0 21h0m1 6h0m0 13h0m0-13h0m2 21h0m2 6h0m0-32h0m0 26h0m1 1h0m0-11h0m1-3h0m0-5h0m0 9h0m0 17h0m0-10h0m1-7h0m0 2h0m0 6h0m1-34h0m0 16h0m1 12h0m0 8h0m0-10h0m0-11h0m1 2h0m0 16h0m0 10h0m0 4h0m1-32h0m0-10h0m1 35h0m0-31h0m0 38h0m0-14h0m1-10h0m0-5h0m1-9h0m0 5h0m0-10h0m0 5h0m0 18h0m0 17h0m1-33h0m0 15h0m0-12h0m1 14h0m0-39h0m0 44h0m0-26h0m1 5h0m0 14h0m0-2h0m0 7h0m1-10h0m0 16h0m0-38h0m0-18h0m1 31h0m0 8h0m0 11h0m1 0h0m0-9h0m0-2h0m1 7h0m0-19h0m0-7h0m0 9h0m1 16h0m1-15h0m1 24h0m0-42h0m0 24h0m1-20h0m0 0h0m1-2h0m1 13h0m0 9h0m0 15h0m1-4h0m0-23h0m0 23h0m0 28h0m0-23h0m1-1h0m0-20h0m0 25h0m1-5h0m0-17h0m0 5h0m0-13h0m1 8h0m0 6h0m0-6h0m0 15h0m1-21h0m0 14h0m0 0h0m1 26h0m0-23h0m2 2h0m0-5h0m0 8h0m0-11h0m0-4h0m1-12h0m0 9h0m0 20h0m1-25h0m1 42h0m0-24h0m0-31h0m0 17h0m1 10h0m0 6h0m0-3h0m0-2h0m0 3h0m2 7h0m0 3h0m1-18h0m0 18h0m1-30h0m0 25h0m0 0h0m0-6h0m0-8h0m0 15h0m1 18h0m0-43h0m1 31h0m0-3h0m0 12h0m0-30h0m1 17h0m0-13h0m1 19h0m0-36h0m0 19h0m1 3h0m0 17h0m0-6h0m1-34h0m0 19h0m0 6h0m0-16h0m0 20h0m0-10h0m1 15h0m0 17h0m0-43h0m0 4h0m1 20h0m1-33h0m2 24h0m0-22h0m0 26h0m0-5h0m2-41h0m0 34h0m0-15h0m0 30h0m1-14h0m1 7h0m0-14h0m0 15h0m1-7h0m1-17h0m1 39h0m0-5h0m1-49h0m0 34h0m1-13h0m0 13h0m0 4h0m0 26h0m0-57h0m0 62h0m1-35h0m0 21h0m1-22h0m0 2h0m1-5h0m0 9h0m0-9h0m0 4h0m1 9h0m0 14h0m0-24h0m1 34h0m0-21h0m0-8h0m0 1h0m0-11h0m1-14h0m1 26h0m0-5h0m0 17h0m0 5h0m1-36h0m0 4h0m1 17h0m0-22h0m1 27h0m0-6h0m0-30h0m1 14h0m1 12h0m1-3h0m1 19h0m1-24h0m0 25h0m1-17h0m2 19h0m0-11h0m0-5h0m1-12h0m0 28h0m0-37h0m0 21h0m0 11h0m0-12h0m1 10h0m0-34h0m0 26h0m0-11h0m0 0h0m1 1h0m0 15h0m0-14h0m1-5h0m0 29h0m0-20h0m0 5h0m1-18h0m0 2h0m0 21h0m0-9h0m0 8h0m1-9h0m0 32h0m0-32h0m1-22h0m0 13h0m1 16h0m0-21h0m0 29h0m1-6h0m0 5h0m2 3h0m0-23h0m0 23h0m0-45h0m2 13h0m1 24h0m0-2h0m0-9h0m1 3h0m0 15h0m1 5h0m1 7h0m0-43h0m0 17h0m1-27h0m1 9h0m1 26h0m0 12h0m2-14h0m0-16h0m0 13h0m0-7h0m1 6h0m0 36h0m0-45h0m1-12h0m0 7h0m0 32h0m1-60h0m0 48h0m0-2h0m1-2h0m0 8h0m0-16h0m0-32h0m2 48h0m1-9h0m0-16h0m1 12h0m0 10h0m0 0h0m1 1h0m1-4h0m0-5h0m0-5h0m1 1h0m0 1h0m0 25h0m1-25h0m0 19h0m1-7h0m1-16h0m0 16h0m0 10h0m0-14h0m0-10h0m1-3h0m0-3h0m0-10h0m0 35h0m1-27h0m0 19h0m0-3h0m0 4h0m1 3h0m1-8h0m0 25h0m1-23h0m0-15h0m0 5h0m0 4h0m1 8h0m1 5h0m0-24h0m0 7h0m0-1h0m1-6h0m1 8h0m0-11h0m0 9h0m1 10h0m0 14h0m0-8h0m1-13h0m0-18h0m0 12h0m0-3h0m0 16h0m0 3h0m0 13h0m1-1h0m0-29h0m0-25h0m0 20h0m0 6h0m1 18h0m1-14h0m0 10h0m0 14h0m0-4h0m0-22h0m1 2h0m0 4h0m1 10h0m0 0h0m1-12h0m0 13h0m0-7h0m1 15h0m1-14h0m0 3h0m0-7h0m0-5h0m0 22h0m1-33h0m0 10h0m0 19h0m1-11h0m0 6h0m1-7h0m0-8h0m0-3h0m1-5h0m0 46h0m1-24h0m1 4h0m0-53h0m0 30h0m1 15h0m1-22h0m0 49h0m0-44h0m1 24h0m1-1h0m0-7h0m0 14h0m0-16h0m0 3h0m0 15h0m1-7h0m0-38h0m1 9h0m1-7h0m0 30h0m0-14h0m0 19h0m0-21h0m1-8h0m0 1h0m1 12h0m0 1h0m0 27h0m1-31h0m0 5h0m1 0h0m0 4h0m1-11h0m1 9h0m0 16h0m0-6h0m0 2h0m1 6h0m0-8h0m0-15h0m0-30h0m1 32h0m1 18h0m0 7h0m1-11h0m0 15h0m1-59h0m1 50h0m0-10h0m0-9h0m1 18h0m0-23h0m0-15h0m0 11h0m1-1h0m1 18h0m0-3h0m1-4h0m1 10h0m1-46h0m1 51h0m0-40h0m0-7h0m1 27h0m0 14h0m0 5h0m0-37h0m1 42h0m1-17h0m0 3h0m1 18h0m0-30h0m0 28h0m0-24h0m0 12h0m0-4h0m0-26h0m0 13h0m1 0h0m0 41h0m0-47h0m0 12h0m1 18h0m0-5h0m1-19h0m0 17h0m0-11h0m0 1h0m1-2h0m0 11h0m0-3h0m1 9h0m0-7h0m0-8h0m0-1h0m1-21h0m0 28h0m0-9h0m0 23h0m0-19h0m0-18h0m0 16h0m1 24h0m0-39h0m0 5h0m1 1h0m0 7h0m0 21h0m0-25h0m0 14h0m0 11h0m1-2h0m0 17h0m0-25h0m0-4h0m1-13h0m0 7h0m0-1h0m0 7h0m0-7h0m1-12h0m0 40h0m0-29h0m0-14h0m1 3h0m1 26h0m0-10h0m1-12h0m1 23h0m0-26h0m0 3h0m1-11h0m0 41h0m0-42h0m1 25h0m0-14h0m1 22h0m0-25h0m1-3h0m0 29h0m0-1h0m0-25h0m0 15h0m0 14h0m0-8h0m1-11h0m1-20h0m0 25h0m1 2h0m1 25h0m0-31h0m0-34h0m0 33h0m0 9h0m1-13h0m0 20h0m2 0h0m1-2h0m1 0h0m0-11h0m0 1h0m1 4h0m0-13h0m0-12h0m0 19h0m1-1h0m0 33h0m0-12h0m0-16h0m0 12h0m0 7h0m0-5h0m1-15h0m2-7h0m0-12h0m0 15h0m1-15h0m1 28h0m0-30h0m1 23h0m0 8h0m0-4h0m0-9h0m1 12h0m1-3h0m0-33h0m0 24h0m1 5h0m1-16h0m0 11h0m0-13h0m0 3h0m1 10h0m0 7h0m0 8h0m1 4h0m1-11h0m0 5h0m0-1h0m0-12h0m0 0h0m1-15h0m0 30h0m1-12h0m0-10h0m0-1h0m2 26h0m0-2h0m0-4h0m0-9h0m0 26h0m1-33h0m1 20h0m0-7h0m0-15h0m2-5h0m0 15h0m1-20h0m0 30h0m0 0h0m0-6h0m1-12h0m0 7h0m0-3h0m0-4h0m2 9h0m0-33h0m0 27h0m0 2h0m0-42h0m0 67h0m1-25h0m0 5h0m1 13h0m1-15h0m0-19h0m0 5h0m1 12h0m0-7h0m1-11h0m1 1h0m0 17h0m1-9h0m0 8h0m0-3h0m0-11h0m0 8h0m3 36h0m1-27h0m0 5h0m1-13h0m0 6h0m0-6h0m0 5h0m1 1h0m0-19h0m1 0h0m1-7h0m1 62h0m0-31h0m1-8h0m0-5h0m1 19h0m0-9h0m0-29h0m0 19h0m1 8h0m0 11h0m0-8h0m0 5h0m0-6h0m0-2h0m0-38h0m1 27h0m0 7h0m0-8h0m1-5h0m1 6h0m0 3h0m0-34h0m1 40h0m0-12h0m0 8h0m0-12h0m1-2h0m0 27h0m0-10h0m0-1h0m0-4h0m1-9h0m0 32h0m0-6h0m1-8h0m0-16h0m1-3h0m0 5h0m0 8h0m0 9h0m0-9h0m1 29h0m0-40h0m0 20h0m0-13h0m1-7h0m0 24h0m0 11h0m0-34h0m1 27h0m0 16h0m0-53h0m1-4h0m1 23h0m0-9h0m1 13h0m0-43h0m0 38h0m1 13h0m0-8h0m1 10h0m0-20h0m0-2h0m0 29h0m1-19h0m0 8h0m1-13h0m1-3h0m0 11h0m0-33h0m0 19h0m1 18h0m0-21h0m1 49h0m1-6h0m1-32h0m0 23h0m1-33h0m0 12h0m1 2h0m0-9h0m1 10h0m0 2h0m0-25h0m0 22h0m0 3h0m1-14h0m0 3h0m0 20h0m0 1h0m1-50h0m0 26h0m1 1h0m0-1h0m1 14h0m0 8h0m0-17h0m0 0h0m0-13h0m0 15h0m0 11h0m1-19h0m0 3h0m0-2h0m1 13h0m0-19h0m0 5h0m0 6h0m1 4h0m0-18h0m0-3h0m1-4h0m0 34h0m1-36h0m0 5h0m0 16h0m1-8h0m0 5h0m1 6h0m0 13h0m0-26h0m0 5h0m1-14h0m0 30h0m0-8h0m1 2h0m1 11h0m0-10h0m1 6h0m0-17h0m0 0h0m0-5h0m1 38h0m0-40h0m1 16h0m1-11h0m0 1h0m0 11h0m1 0h0m0-1h0m0-9h0m0-8h0m0 28h0m1-34h0m0 30h0m0-16h0m0-2h0m1 15h0m0-8h0m0-8h0m1 30h0m0-3h0m0-20h0m1-13h0m0 7h0m0 0h0m1 31h0m0-44h0m1 28h0m0 9h0m0-34h0m0 20h0m1-26h0m0 20h0m0-9h0m0 18h0m1 6h0m0-38h0m0 23h0m0 0h0m1 0h0m0-7h0m0-4h0m1-25h0m1 48h0m0-13h0m0-5h0m0-3h0m0 34h0m1-30h0m0-2h0m0 32h0m0-42h0m1 35h0m0-34h0m1 18h0m0 22h0m1-27h0m0 10h0m0 3h0m0-15h0m1 23h0m0-14h0m1 22h0m0 0h0m0-1h0m0-43h0m1 3h0m1 42h0m0-24h0m0 5h0m1 14h0m0-6h0m0-40h0m2 29h0m0-19h0m0 32h0m0-3h0m1-8h0m1-5h0m0 6h0m1 0h0m0-42h0m0 52h0m1-28h0m0 8h0m0 9h0m1-23h0m0 32h0m0-20h0m1-3h0m1 11h0m0-9h0m0 23h0m1-26h0m0 13h0m0 17h0m1-35h0m0 31h0m0 1h0m1-36h0m1 15h0m0 1h0m0 20h0m0 0h0m1 12h0m0-37h0m0 15h0m0-19h0m2 39h0m1-23h0m0-35h0m0 39h0m1 16h0m0-25h0m1 4h0m1 7h0m0 26h0m0-36h0m1 5h0m0-14h0m0 10h0m1-9h0m0 19h0m1-3h0m0 26h0m1-22h0m0-7h0m1 6h0m0-28h0m0 15h0m1-5h0m0 11h0m0 18h0m1-17h0m0-5h0m0-14h0m1 43h0m1-9h0m0-31h0m0 8h0m1 15h0m0 1h0m0-24h0m0 9h0m0 4h0m0-14h0m1 6h0m0 10h0m1 11h0m0-3h0m0-36h0m0 45h0m0-22h0m0 16h0m0-11h0m1-44h0m0 46h0m0-8h0m1-7h0m0 9h0m0 10h0m1 10h0m1-6h0m0-29h0m2-9h0m0 11h0m1 49h0m0-43h0m0 14h0m0-5h0m0 5h0m1 0h0m1-4h0m0 1h0m0-2h0m0-7h0m1 4h0m0 21h0m0-4h0m1-25h0m1 27h0m1-15h0m0-2h0m0-10h0m1 14h0m0-3h0m0-16h0m0-5h0m0 0h0m1 43h0m0-35h0m0 11h0m1-3h0m1-12h0m1 14h0m0 17h0m0 24h0m0-50h0m0 6h0m0 16h0m1-26h0m0 18h0m0 0h0m0-16h0m0 0h0m1 14h0m0-19h0m0 34h0m1-3h0m0-14h0m0-12h0m1 14h0m0-8h0m0 25h0m1-21h0m0-2h0m0-12h0m1-9h0m0 17h0m0-12h0m0 23h0m0-6h0m2 16h0m0-11h0m1 7h0m1 3h0m1-21h0m0 9h0m1-4h0m0-12h0m1 0h0m0 8h0m0 11h0m1 5h0m0-16h0m1 3h0m0-4h0m1 15h0m1 10h0m0-21h0m1 19h0m1 0h0m0-30h0m1-11h0m0 3h0m0 27h0m0-3h0m1 7h0m0 14h0m0-24h0m0 8h0m1-33h0m0 43h0m0-28h0m0 23h0m0-20h0m0-6h0m0 10h0m1 4h0m1-6h0m0-15h0m2 19h0m0-21h0m1 15h0m0 0h0m1 0h0m0 16h0m0 1h0m0-5h0m0 16h0m1-31h0m0 3h0m0 7h0m0 37h0m1-34h0m1 11h0m0-22h0m1 1h0m0 26h0m0-18h0m0-12h0m0 18h0m1-7h0m0 22h0m0-14h0m0 6h0m0-10h0m3-15h0m1 19h0m1 25h0m0-5h0m0-11h0m0-15h0m2 6h0m0 0h0m1-16h0m1 17h0m0 7h0m0 2h0m1-6h0m0-14h0m0 34h0m0-19h0m0-6h0m1-14h0m0 16h0m2-9h0m0-16h0m1 12h0m0 21h0m2-25h0m1 5h0m0 12h0m0 23h0m0-48h0m1 26h0m0-6h0m1 2h0m0-26h0m0 29h0m0 15h0m1-24h0m1 14h0m0-30h0m1 25h0m0 5h0m0-16h0m0-3h0m1 4h0m0-5h0m1-9h0m1 4h0m0 20h0m2 3h0m0-7h0m0-12h0m0 14h0m1 2h0m0 1h0m1-24h0m0 15h0m0 12h0m0-20h0m2 12h0m0 6h0m1-17h0m0-18h0m0 26h0m1 2h0m0 8h0m0 1h0m0-10h0m1 12h0m0-29h0m1 17h0m0-7h0m1 21h0m0 3h0m0-38h0m0 8h0m0 32h0m1-23h0m0 8h0m0-11h0m0 23h0m2 1h0m0-24h0m0-10h0m0 3h0m1 8h0m0 11h0m0 0h0m0-10h0m0-16h0m0 43h0m1-23h0m0 23h0m0 11h0m1-30h0m0 20h0m0-10h0m0-2h0m1-1h0m0-10h0m1 20h0m0-23h0m0-3h0m0 4h0m0-7h0m1 35h0m1-32h0m0 13h0m1-15h0m1-26h0m0 50h0m0-5h0m0-19h0m0 20h0m1-42h0m1 32h0m1-5h0m1 0h0m0 20h0m1-15h0m1-27h0m0-1h0m1 34h0m0-10h0m1-5h0m0-7h0m1 25h0m0-5h0m0 15h0m0-31h0m0 11h0m1-3h0m0-31h0m0 24h0m0 9h0m1 31h0m0-37h0m0-5h0m2-1h0m0 7h0m1-2h0m0 4h0m0-8h0m1 2h0m2 14h0m0-3h0m0-12h0m0 7h0m0-21h0m1 46h0m0-23h0m0-10h0m1 13h0m1-5h0m0 31h0m0-2h0m0-25h0m0-31h0m0 44h0m0-14h0m1-23h0m0 12h0m1-4h0m0-1h0m0 14h0m1-24h0m0 25h0m1 9h0m0-4h0m0 15h0m0-33h0m1 29h0m0-18h0m0-20h0m0 19h0m1-20h0m0 15h0m0 16h0m0-6h0m1-5h0m0 4h0m0-10h0m0 37h0m0-20h0m0 13h0m1-48h0m0 26h0m0 10h0m0-27h0m0 22h0m1-10h0m0 5h0m0 37h0m0-45h0m0 16h0m0 10h0m1-23h0m0-3h0m0-19h0m0 45h0m1-24h0m0-1h0m1-5h0m0 24h0m1 1h0m0-9h0m0-12h0m0-9h0m0 20h0m0-30h0m1 11h0m0 2h0m1 27h0m0-7h0m0 13h0m1-25h0m0 27h0m1-22h0m0-7h0m0-5h0m1-7h0m0 9h0m0 16h0m1-29h0m1 0h0m0 24h0m1 6h0m0 3h0m1-10h0m0-11h0m0 11h0m0 3h0m0-11h0m1 12h0m0 4h0m0-12h0m1 20h0m0-23h0m0 5h0m0 2h0m1 13h0m0-9h0m0 13h0m1-17h0m1-22h0m0 9h0m0 5h0m1 25h0m0-6h0m1-10h0m1-2h0m1-6h0m0 10h0m1-3h0m0-2h0m0 7h0m0-11h0m1 31h0m0-25h0m1-8h0m0 4h0m0 14h0m0-20h0m1 11h0m1 2h0m0 16h0m0-4h0m1-14h0m0 17h0m0-8h0m0 1h0m1-10h0m1-15h0m0 27h0m0-19h0m1 18h0m1-13h0m0 8h0m0 15h0m0-52h0m1 42h0m1-9h0m1-3h0m0 3h0m0 5h0m0 13h0m0-31h0m0-2h0m1 22h0m0 1h0m0-17h0m0 20h0m1-23h0m0 3h0m0 18h0m1 25h0m0-17h0m0-11h0m1 8h0m1-18h0m0-11h0m3 8h0m0-27h0m0 5h0m0 41h0m0-5h0m1-10h0m0 17h0m0-9h0m1-4h0m1-10h0m0 5h0m0-10h0m0 35h0m1-21h0m0 4h0m0-10h0m0 9h0m0 7h0m1-20h0m0 9h0m0 3h0m0 15h0m1-13h0m0-19h0m0-3h0m0 9h0m0 6h0m1-17h0m0 30h0m0-1h0m0 2h0m0-8h0m1-24h0m0 35h0m1-47h0m0 48h0m0-14h0m0-6h0m0-19h0m0-7h0m0 41h0m2-6h0m0-4h0m1-18h0m0 19h0m0 1h0m1-21h0m0 32h0m0 3h0m0-20h0m1 15h0m0-3h0m0-16h0m0-11h0m0 26h0m0-29h0m0 41h0m1-54h0m0 38h0m2-10h0m0 8h0m1-8h0m0-1h0m0 23h0m1-14h0m0-8h0m0 10h0m0-7h0m0 6h0m1-5h0m0-22h0m0 23h0m0-5h0m0 23h0m0-24h0m1 4h0m0-2h0m1 0h0m0-4h0m0-1h0m0 16h0m0 7h0m0-23h0m1 33h0m0-18h0m1-9h0m0-2h0m1 0h0m1 7h0m1 25h0m0-8h0m0-2h0m2-26h0m0 2h0m0 29h0m0-17h0m1-7h0m0-1h0m0 5h0m0-14h0m0 9h0m1 5h0m1-10h0m0 28h0m0-29h0m0-11h0m1 34h0m1 21h0m1-50h0m0 13h0m0-3h0m1 7h0m0 7h0m0-24h0m1 13h0m0 34h0m0-32h0m0 2h0m1 8h0m1-6h0m0-23h0m0 17h0m1-22h0m1 43h0m0-27h0m1 3h0m0 39h0m1-10h0m0-3h0m1-6h0m0-1h0m1-8h0m0-15h0m0 12h0m0 19h0m1-19h0m1-8h0m0-2h0m1 18h0m0-22h0m1 3h0m0-1h0m0-4h0m0 28h0m0-23h0m1 24h0m0 0h0m1 0h0m0 11h0m0 16h0m1-20h0m1-13h0m0-25h0m0 31h0m0 12h0m0-43h0m0 36h0m1-27h0m0 17h0m0-29h0m0 29h0m1-18h0m0 37h0m1-24h0m1-5h0m0-20h0m1 24h0m1-1h0m0-16h0m0 4h0m0 19h0m0 12h0m0-37h0m0 33h0m2-19h0m0 18h0m0-40h0m1 17h0m0 10h0m1-4h0m0 13h0m0-52h0m1 36h0m0 10h0m1 3h0m0 2h0m0-22h0m0 38h0m1-5h0m0-35h0m0 25h0m0-3h0m1 0h0m0-14h0m0-3h0m0 4h0m0-14h0m2 24h0m0-2h0m0-15h0m1 10h0m1 25h0m0-46h0m0 17h0m0 12h0m2-8h0m0-3h0m1 1h0m0 23h0m0-20h0m0-25h0m0 22h0m1 2h0m1 6h0m0-14h0m1 15h0m0 17h0m0 5h0m1-10h0m0-15h0m0 3h0m0-16h0m1 8h0m0-22h0m0 15h0m1 29h0m0-3h0m0-16h0m1-27h0m0 42h0m0 7h0m1-28h0m1-15h0m0-2h0m1 15h0m0-9h0m0 14h0m0-27h0m1 5h0m0 30h0m1-7h0m0-12h0m1 15h0m0-8h0m0 10h0m2-9h0m0 9h0m0 5h0m0-15h0m1 3h0m0-10h0m0 11h0m0-28h0m0 11h0m1 18h0m0-8h0m0 6h0m0-24h0m1 23h0m0 9h0m1 7h0m0 18h0m1-49h0m0 53h0m0-40h0m0-3h0m1 3h0m0-7h0m0 22h0m0-14h0m0 12h0m0-1h0m1-6h0m0-6h0m0-1h0m1 22h0m0-9h0m0 19h0m0-28h0m1-6h0m0 14h0m0 4h0m1 0h0m0-15h0m1-16h0m0 47h0m1-32h0m0 1h0m0-4h0m1 20h0m0-13h0m0 20h0m1-29h0m0 16h0m0-3h0m0-1h0m1 5h0m0-16h0m1 9h0m0 30h0m0-24h0m1 21h0m0-38h0m0 15h0m1 23h0m0-14h0m1 11h0m0-22h0m0 16h0m1-6h0m0-15h0m0 17h0m0-7h0m1 0h0m0-2h0m1 20h0m0-28h0m1 18h0m1-13h0m0-12h0m0 37h0m0-10h0m0-21h0m0 14h0m1 5h0m0-5h0m0 4h0m0-4h0m1-14h0m0-6h0m0 15h0m1-14h0m1 13h0m0-17h0m0-1h0m1 12h0m0 9h0m0-2h0m0 22h0m1-63h0m1 26h0m0 25h0m0 0h0m1 2h0m0-17h0m0 0h0m1 5h0m0 5h0m0-21h0m1 2h0m0 18h0m0 15h0m0-17h0m1-9h0m1 6h0m0-12h0m0 12h0m0-9h0m1 10h0m0-4h0m0-15h0m1 7h0m0-15h0m2 23h0m0-6h0m0-4h0m0 17h0m0-3h0m1 14h0m0-9h0m0 7h0m1-11h0m0-25h0m0 0h0m1 8h0m0-1h0m0 3h0m1 0h0m1 20h0m0-14h0m0-13h0m0 21h0m0-6h0m1-6h0m0-9h0m0 9h0m0-14h0m0 11h0m1-5h0m0 22h0m0 0h0m1-7h0m0 12h0m0-5h0m0 5h0m1-28h0m0 11h0m0-4h0m0 2h0m2-6h0m0 18h0m1 14h0m0-31h0m1-4h0m1 37h0m1-37h0m0 7h0m0 20h0m0-18h0m1 14h0m0-14h0m0 3h0m1 4h0m1 14h0m0-18h0m1-9h0m0 21h0m2 10h0m0-5h0m0 3h0m1-14h0m0 7h0m0 2h0m2-8h0m0 10h0m0 1h0m1-4h0m0 11h0m0 10h0m0-15h0m2-19h0m1 0h0m0-2h0m0 17h0m1-21h0m0 21h0m1 8h0m0-24h0m0 17h0m0-20h0m1 34h0m0-35h0m0 20h0m0-34h0m1 25h0m0-19h0m0 7h0m0 13h0m0-4h0m0-12h0m1-4h0m0 34h0m0-35h0m0 11h0m0 13h0m1-14h0m0 12h0m0 20h0m0-1h0m1-41h0m0 36h0m0 2h0m1-14h0m0-13h0m0-18h0m1 4h0m0 21h0m0-10h0m0 1h0m0 17h0m0 6h0m1-6h0m0-23h0m0 15h0m0-5h0m0-21h0m0 36h0m1-11h0m0-3h0m0 0h0m0-3h0m1 4h0m1 17h0m0 16h0m0-10h0m1-34h0m0 34h0m0-18h0m1-4h0m0-19h0m0 26h0m0-2h0m1 1h0m0-13h0m0 22h0m1-10h0m0-18h0m0 16h0m0-10h0m1-4h0m0 35h0m1 3h0m1-24h0m0-19h0m0 33h0m0-21h0m1 26h0m0-27h0m0 25h0m0 7h0m0-2h0m1-31h0m1 18h0m0-7h0m0-34h0m1 27h0m0 22h0m1-12h0m0-19h0m1 53h0m0-61h0m1 10h0m0-6h0m0-2h0m1 5h0m0 12h0m0 5h0m0-26h0m0 36h0m2-28h0m0 35h0m1-33h0m0 25h0m0-10h0m1-19h0m0 15h0m1-10h0m0 30h0m0-31h0m0 4h0m1 18h0m0 4h0m1-15h0m0-13h0m0 2h0m0 5h0m0-9h0m0 30h0m1-2h0m0 10h0m0-20h0m0 23h0m1-19h0m0 6h0m0-6h0m0-13h0m1 3h0m0 10h0m0 18h0m0-7h0m2-31h0m0 16h0m0-13h0m0 18h0m0-8h0m0-25h0m1 28h0m0-1h0m0 14h0m1-23h0m0 12h0m1-7h0m0 15h0m1-8h0m0 4h0m0-2h0m1 7h0m0-6h0m0-2h0m0-7h0m1-13h0m0 26h0m0-29h0m0 22h0m1-17h0m0 28h0m1-4h0m0-12h0m1 22h0m0-45h0m1 42h0m0 6h0m0-28h0m1 13h0m0-10h0m1-20h0m0 8h0m1 19h0m0 0h0m0 0h0m0-3h0m1-16h0m1 27h0m0-13h0m0 12h0m1-16h0m0 11h0m1-4h0m0-5h0m0 9h0m1 6h0m0 0h0m0-18h0m0-19h0m0 6h0m1 21h0m1 2h0m0 13h0m0 4h0m1 1h0m1-26h0m0 2h0m1-2h0m0-12h0m0 16h0m0 2h0m0 1h0m1 5h0m0-15h0m0 10h0m0-13h0m1 18h0m1-11h0m0 18h0m0-4h0m0 19h0m0-41h0m2 22h0m0-29h0m0 4h0m1 20h0m0-2h0m1-1h0m1 32h0m1-32h0m0-14h0m0-5h0m1 11h0m0 11h0m0 15h0m1-29h0m1 13h0m1-22h0m1 38h0m0-23h0m0 13h0m1-7h0m0-8h0m0 3h0m1 13h0m0 15h0m0-26h0m1-3h0m0 5h0m0 24h0m1-27h0m0 0h0m0-1h0m0 43h0m0-20h0m1-32h0m0 16h0m1-24h0m1 25h0m0-12h0m1-4h0m1 13h0m0-20h0m0 4h0m1 7h0m0 9h0m1 15h0m0-14h0m1 6h0m0-2h0m0-2h0m1 9h0m0-2h0m1-8h0m1 0h0m1-6h0m0 11h0m0-4h0m2-17h0m1 17h0m0-17h0m0-6h0m0 24h0m1-7h0m0 14h0m0-13h0m0 3h0m1-4h0m0-8h0m1 32h0m1-4h0m0-13h0m0 16h0m0-29h0m1 18h0m1-47h0m1 35h0m1 25h0m0 1h0m1-17h0m1-17h0m1 22h0m1-11h0m1 5h0m0-16h0m1 14h0m0-6h0m1-16h0m0 9h0m0 23h0m0-24h0m0 31h0m0-23h0m0 18h0m1-24h0m1-16h0m0 21h0m0-9h0m0 26h0m1-5h0m1-5h0m1-15h0m0 4h0m0-12h0m1 10h0m1-13h0m1 22h0m1-10h0m0 20h0m1 1h0m0-9h0m0-1h0m1 17h0m1-23h0m1 6h0m0 12h0m0 10h0m2-20h0m0-22h0m0 35h0m0-8h0m1 3h0m0-14h0m0-34h0m0 37h0m0 5h0m1-6h0m0-9h0m0 12h0m1 9h0m0-3h0m0-20h0m1-13h0m0 34h0m1 1h0m0-27h0m2 22h0m0 34h0m0-39h0m0 18h0m0-22h0m1 16h0m0-33h0m0 35h0m0-30h0m1 49h0m0-16h0m0 9h0m1-36h0m0 17h0m0-8h0m0 4h0m0-19h0m2 11h0m1-10h0m0 1h0m1 20h0m0 11h0m0-11h0m2-1h0m0-8h0m0-5h0m1-11h0m0 16h0m0 10h0m1-3h0m0 11h0m0-8h0m0 9h0m0-16h0m0-25h0m1 4h0m0 37h0m0-30h0m2 7h0m0 2h0m1 22h0m0-25h0m0 10h0m1 20h0m0-15h0m0 8h0m2-36h0m0 7h0m0 6h0m0 8h0m0-1h0m0 27h0m1-31h0m1-13h0m0 8h0m0-7h0m1 18h0m1-3h0m0-9h0m0 32h0m0-23h0m1-5h0m3-12h0m1 39h0m0-34h0m0 24h0m1-5h0m1-8h0m0 6h0m0-5h0m0 8h0m1-10h0m0-28h0m0 44h0m1-16h0m1-14h0m0 4h0m1 33h0m0-45h0m1 26h0m0-16h0m1 14h0m0 13h0m0-14h0m0 0h0m1-4h0m2-9h0m0 32h0m0-14h0m0 19h0m0-34h0m0 23h0m0-19h0m0-7h0m1 22h0m1-33h0m0-1h0m0 16h0m1-1h0m0 18h0m0-33h0m0 13h0m0 19h0m1-5h0m0 17h0m0-46h0m0 17h0m0 26h0m1-3h0m0-7h0m2-14h0m0 21h0m0 20h0m1-32h0m1-8h0m0 7h0m1 3h0m0 14h0m0-31h0m1 7h0m0 21h0m0-13h0m0 8h0m0 3h0m1-12h0m0 0h0m0-3h0m0 15h0m0-30h0m0 10h0m2-9h0m0 29h0m0 6h0m1-19h0m2-3h0m0 0h0m0-25h0m0 12h0m1 7h0m0 4h0m1 17h0m0-13h0m0 12h0m1-26h0m0-8h0m0 48h0m1-43h0m0 10h0m1 8h0m0 12h0m1 2h0m0-27h0m0 44h0m1-29h0m0 19h0m0-25h0m1-7h0m0-4h0m2 23h0m0-4h0m0-31h0m1 46h0m0-8h0m1-9h0m0 5h0m0 4h0m0 6h0m0-41h0m1 11h0m1 25h0m1 24h0m0-39h0m1 16h0m0-31h0m0 25h0m0-2h0m1 21h0m0-46h0m2 36h0m0 10h0m1-16h0m0-7h0m1-7h0m2 24h0m0-18h0m0 9h0m1-33h0m0 18h0m1 6h0m0 16h0m1-16h0m0-8h0m0-2h0m0 37h0m0-9h0m1-16h0m0-31h0m1 28h0m0-1h0m0 13h0m1-9h0m0-1h0m0-2h0m0-17h0m0 36h0m2-33h0m0 0h0m0 3h0m1 30h0m0-28h0m0 9h0m0-8h0m0 9h0m0 18h0m1-37h0m0 9h0m0-1h0m0 9h0m0-3h0m0 18h0m1-18h0m1-17h0m2 14h0m1 31h0m1-36h0m1 29h0m0-22h0m0 18h0m1-21h0m0 18h0m1 3h0m0-6h0m1 28h0m1-54h0m0 36h0m0-10h0m0-5h0m1 13h0m1-13h0m1-16h0m0 27h0m0-3h0m0-17h0m0 14h0m1-40h0m0 23h0m0 14h0m0-11h0m0 15h0m1 0h0m0 6h0m0 3h0m0-19h0m0 15h0m1 1h0m0-36h0m0 13h0m0 26h0m1-10h0m0-13h0m1-10h0m1 2h0m0-15h0m0 13h0m1 17h0m0-6h0m0-4h0m1 10h0m0 15h0m1-12h0m0-17h0m1 10h0m0-5h0m0-10h0m0-1h0m1 25h0m0-7h0m1-4h0m0 6h0m1-5h0m0 7h0m0-10h0m0 13h0m1 2h0m0-31h0m0 33h0m1 15h0m1-30h0m0 0h0m1 3h0m0-6h0m0-8h0m1 12h0m0-4h0m0 3h0m1 17h0m0-8h0m0 3h0m1-14h0m0-11h0m0 19h0m1 1h0m0 31h0m1-14h0m0-30h0m1 6h0m0 5h0m0 10h0m1-22h0m0 19h0m1-11h0m0-11h0m1 24h0m1-27h0m0 12h0m0 4h0m0-9h0m0 6h0m1 3h0m0 5h0m0 1h0m1 1h0m0-25h0m0 18h0m0-13h0m1 17h0m0 15h0m0-18h0m1-23h0m1 5h0m0 25h0m1 4h0m0-23h0m0-4h0m0 8h0m0 8h0m0 11h0m0-14h0m1-4h0m0 20h0m0-33h0m0 2h0m1 10h0m0 14h0m1 8h0m0 7h0m1-42h0m1 45h0m1-25h0m0-12h0m0 35h0m1-2h0m0-31h0m0 9h0m0 13h0m1-28h0m0 32h0m1-22h0m0 3h0m0 15h0m0-25h0m0-7h0m0 29h0m1 8h0m0-6h0m0 6h0m1-4h0m0 4h0m1-4h0m0-41h0m1 26h0m0-11h0m0 7h0m1-28h0m0 49h0m0-14h0m0-2h0m1-21h0m1 27h0m1-10h0m0 26h0m0-21h0m1 5h0m0 22h0m0-32h0m0 0h0m1-8h0m0 2h0m0-9h0m0 16h0m1 17h0m0-28h0m0 22h0m0-1h0m0 1h0m1 7h0m1-5h0m1-4h0m0 17h0m1-1h0m1-35h0m1 18h0m0-5h0m0 18h0m1-23h0m1 4h0m0 10h0m0-32h0m0 12h0m1 28h0m0-19h0m1 16h0m0-23h0m0 10h0m0-28h0m1 29h0m1-16h0m0 16h0m1 3h0m0-12h0m0 9h0m0 6h0m0 14h0m0-24h0m0 6h0m1-16h0m0 25h0m0-10h0m0 18h0m0-17h0m2-2h0m0 12h0m0-9h0m0-10h0m0 2h0m0 16h0m2-4h0m0 11h0m1 5h0m0-5h0m0-12h0m0-4h0m1 20h0m1-27h0m0 15h0m1-18h0m0-6h0m1 7h0m0 15h0m1-4h0m1-4h0m0 9h0m0-16h0m1 1h0m1 20h0m0-10h0m0-14h0m0-4h0m1-23h0m0 40h0m0-2h0m0-1h0m1-4h0m0 14h0m0 21h0m0-10h0m1-14h0m0-38h0m1 40h0m0 8h0m0 1h0m0-20h0m0 34h0m1-22h0m1-9h0m0 13h0m1-39h0m0 27h0m1-2h0m0 23h0m1-3h0m0-13h0m0 4h0m1 27h0m1-62h0m0 35h0m0-18h0m0 16h0m0-12h0m2 16h0m0-8h0m1 10h0m0-27h0m0 9h0m0 17h0m0 3h0m0-24h0m1 9h0m0-3h0m1-9h0m0 15h0m0-18h0m1 28h0m0-25h0m0-8h0m1 38h0m0-6h0m1-33h0m0 17h0m0 16h0m0-13h0m0 3h0m0 28h0m1-22h0m0-8h0m0 6h0m0 13h0m1-22h0m0 10h0m0-23h0m0 36h0m0-40h0m1 21h0m0-3h0m0 13h0m0-4h0m2-33h0m0 41h0m1-35h0m0 20h0m0 19h0m1-33h0m0 22h0m0-27h0m1 1h0m0 25h0m0-17h0m0 10h0m1-5h0m1 9h0m0 12h0m0-2h0m0-6h0m0-9h0m2-28h0m0 27h0m1 8h0m0-12h0m0 4h0m0 8h0m0 13h0m2 6h0m1-9h0m2-2h0m1 1h0m0-24h0m0 8h0m1 3h0m0 3h0m0-22h0m1 22h0m0-7h0m0 6h0m1-8h0m0-11h0m0 5h0m1 5h0m1-18h0m1 3h0m0 43h0m0-23h0m0-23h0m1 27h0m1-2h0m0-25h0m0 21h0m0-12h0m1 29h0m0-19h0m0-1h0m1 10h0m1-3h0m0-9h0m0-8h0m0 4h0m1 40h0m0-18h0m0-3h0m1 2h0m0 1h0m1-14h0m0-12h0m1 33h0m0-10h0m0-28h0m0 29h0m0 1h0m0-5h0m1-8h0m0 27h0m0-42h0m1 35h0m0-21h0m1-2h0m0-1h0m2 40h0m0-46h0m0 17h0m0 9h0m1-16h0m0 9h0m0 9h0m0-31h0m1 25h0m0-8h0m1-14h0m0 7h0m1 6h0m0 3h0m1 10h0m0-33h0m0 19h0m0-25h0m0 35h0m1-1h0m0-11h0m0 0h0m0 9h0m1-21h0m0 38h0m0-2h0m1-2h0m0-17h0m0 2h0m1-24h0m1 34h0m1-27h0m0 15h0m0 4h0m0-19h0m0 23h0m0-34h0m1 5h0m1 13h0m0 24h0m0-17h0m1 15h0m0-21h0m0 26h0m1-43h0m1 20h0m0 29h0m1-56h0m1 21h0m0 5h0m0-2h0m0 13h0m1-35h0m0 44h0m1-18h0m1 1h0m0-9h0m0-4h0m1 13h0m1-5h0m0 18h0m1-11h0m0-25h0m1 48h0m0-51h0m0 20h0m0 9h0m2 22h0m0-22h0m0-5h0m0-4h0m0 2h0m0 11h0m0-7h0m1-2h0m0 6h0m0-34h0m0 40h0m1 0h0m0 2h0m1-33h0m0 7h0m0 12h0m0-16h0m0 31h0m2-33h0m0 16h0m0 33h0m0-24h0m1 4h0m0 3h0m0-3h0m0-16h0m0 33h0m0-19h0m1-14h0m0 31h0m0-29h0m0 17h0m1 6h0m0-44h0m0 20h0m0 8h0m1-19h0m0 12h0m1-1h0m0 4h0m0 3h0m0 8h0m1-14h0m0 11h0m0-11h0m1-9h0m1 15h0m1-9h0m0 22h0m0 10h0m1-50h0m0 12h0m1-7h0m0 31h0m1-22h0m0 11h0m0 12h0m0 4h0m0-30h0m1 11h0m0 14h0m1-35h0m0 16h0m1-2h0m0 39h0m0-32h0m0 9h0m1-14h0m0 6h0m1-3h0m0 16h0m0-6h0m0-2h0m1 3h0m0 16h0m0-10h0m1-6h0m0 8h0m0-34h0m0-1h0m0 11h0m1-10h0m0 29h0m0 0h0m0 9h0m0-23h0m0 5h0m0 8h0m1-24h0m1 1h0m0 22h0m0 6h0m1-45h0m0 52h0m0-9h0m0-11h0m1 8h0m0 8h0m0-24h0m0 20h0m0-31h0m0 28h0m1 1h0m0 0h0m0-12h0m1-4h0m0-6h0m1-3h0m1-6h0m1 17h0m1 3h0m0-19h0m0 10h0m0 4h0m1 4h0m0-6h0m0 16h0m0-9h0m0-8h0m0 6h0m1 14h0m0-2h0m0-7h0m1-3h0m0 17h0m0-18h0m1 9h0m1-15h0m1 19h0m1 1h0m0 0h0m1-16h0m0-3h0m0 0h0m0 13h0m1 16h0m0-43h0m2 39h0m0 1h0m0-17h0m0-16h0m0 20h0m2-12h0m0-16h0m0 29h0m0-10h0m1 2h0m0-14h0m0 10h0m0-1h0m1-16h0m0 20h0m0-16h0m1 8h0m0 2h0m0 6h0m0 9h0m0-19h0m1 7h0m0 17h0m0-20h0m1 18h0m0-13h0m0-2h0m0 1h0m2-2h0m0 14h0m1-31h0m1 50h0m0-26h0m1-5h0m1 7h0m0-23h0m0 32h0m0 8h0m1 4h0m0-40h0m1 16h0m0 11h0m1-9h0m0 7h0m2-25h0m0 11h0m2-11h0m0 41h0m0-36h0m0-4h0m1 1h0m1 5h0m0 15h0m0-8h0m0-7h0m1 12h0m0-5h0m1 9h0m0-16h0m0 22h0m0-25h0m1 27h0m0-41h0m1 15h0m0 27h0m2-26h0m0-18h0m0 20h0m2-5h0m0 24h0m0-8h0m0 5h0m1-5h0m0-1h0m0-24h0m0 23h0m1 20h0m0-31h0m0-8h0m1 23h0m0-13h0m0 8h0m0 16h0m0 2h0m0-12h0m0-8h0m0-2h0m0-8h0m2 16h0m0-30h0m1 31h0m0-4h0m0-8h0m0-4h0m1 12h0m0 4h0m0 11h0m0-3h0m1-7h0m1-11h0m0-5h0m1 14h0m0 33h0m0-45h0m1 6h0m0 7h0m0 5h0m0-8h0m1-22h0m0 28h0m1 2h0m0-26h0m0 23h0m0-6h0m0 8h0m1 6h0m0-21h0m1 15h0m0-34h0m0 41h0m0-16h0m1 17h0m0-15h0m1-18h0m1 6h0m0 1h0m0 10h0m1 8h0m0-31h0m1 37h0m2 5h0m0-25h0m1 13h0m0-1h0m1-28h0m0 15h0m1-1h0m0 19h0m0-5h0m1-11h0m0 8h0m1 15h0m0-26h0m0 12h0m0-15h0m0-5h0m0-15h0m1 24h0m0-9h0m0 13h0m1 11h0m0-3h0m1 8h0m1 21h0m0-25h0m0-18h0m1 14h0m0 9h0m1-10h0m0-25h0m0-6h0m0 31h0m0 18h0m1-15h0m0-40h0m0 41h0m0-32h0m1 26h0m0-5h0m1 3h0m0-16h0m0-16h0m0 20h0m0 6h0m0-11h0m0 35h0m1-15h0m0-29h0m0 33h0m1-24h0m0 13h0m0 7h0m0-9h0m1-15h0m1 9h0m1 4h0m0-8h0m0 22h0m0-12h0m0 3h0m1-1h0m0-14h0m0 16h0m1-16h0m0 9h0m0 12h0m1 5h0m0 6h0m0 0h0m1-5h0m0-15h0m1-1h0m0-12h0m1 21h0m1 11h0m1-43h0m0 49h0m0-3h0m1-21h0m0-2h0m1 5h0m1-15h0m0-10h0m0-15h0m1 31h0m0 22h0m0-25h0m0 5h0m1 16h0m0-1h0m0 18h0m0-10h0m1 12h0m0-53h0m0 42h0m1 13h0m1-50h0m0-2h0m0-4h0m0 54h0m1-41h0m0 21h0m1-24h0m0 24h0m1-9h0m0-4h0m0 12h0m0-8h0m1 19h0m0-39h0m0 41h0m1-6h0m0-15h0m0-18h0m1 10h0m1 5h0m0 22h0m0 3h0m3-29h0m0 39h0m0-28h0m2-14h0m0-2h0m0 31h0m0-29h0m1 20h0m0 26h0m0-34h0m1 8h0m0-35h0m0 35h0m1-27h0m0 33h0m1-11h0m0-27h0m0 38h0m0 8h0m0-17h0m1 3h0m0-15h0m0-21h0m0 15h0m1 6h0m0-13h0m1 15h0m1 44h0m0-52h0m0-3h0m0 18h0m0-5h0m0-1h0m0 30h0m0-31h0m0-4h0m1 21h0m0 2h0m0-12h0m1-12h0m0 40h0m0-18h0m0-38h0m1 28h0m0-25h0m1 25h0m0-11h0m1 12h0m0-16h0m0 24h0m1-9h0m1-5h0m1-1h0m0 15h0m0-20h0m0-12h0m1 20h0m1 20h0m1-11h0m1 12h0m0-1h0m1-16h0m1 22h0m0-16h0m0-21h0m0 39h0m1-28h0m0-14h0m1 19h0m0-11h0m1-15h0m0 27h0m1 10h0m1-28h0m0 1h0m1 24h0m1-23h0m0 15h0m0 35h0m1-7h0m0-32h0m0 4h0m1 2h0m0 6h0m0-19h0m1-12h0m0 6h0m0-6h0m2-7h0m0 45h0m0-9h0m0-7h0m1 14h0m0-23h0m1 23h0m1-2h0m0-16h0m0-9h0m1-16h0m0 33h0m1 15h0m1-21h0m0-10h0m0 2h0m1 20h0m0-11h0m0 8h0m1 8h0m0-29h0m0-27h0m1 37h0m0-26h0m1 13h0m0 13h0m1 0h0m0-15h0m1 13h0m0 33h0m1-51h0m1 16h0m0-5h0m2 19h0m0 7h0m0-19h0m1 13h0m0-10h0m0 12h0m1-16h0m0 1h0m0 9h0m1-20h0m0 1h0m0 37h0m0-6h0m1-20h0m0 8h0m0-3h0m1 15h0m0-32h0m0 10h0m0 15h0m0-5h0m0-9h0m0 12h0m1-12h0m0 31h0m0-8h0m1 6h0m0-13h0m0-23h0m0 11h0m0 2h0m1-3h0m0-3h0m0 30h0m0-30h0m1 12h0m0 7h0m0 0h0m0 5h0m0-26h0m1 15h0m0 24h0m0-41h0m0 16h0m1-4h0m0-19h0m0 13h0m0-5h0m1 12h0m0 3h0m1-14h0m0 3h0m1-5h0m0 23h0m0-2h0m0-14h0m1 8h0m0 12h0m0-26h0m1 14h0m0 5h0m0 12h0m1-42h0m0 25h0m0-23h0m1 24h0m0-20h0m0-10h0m0 14h0m0-29h0m0 24h0m0 13h0m0-15h0m1 21h0m1-15h0m0 38h0m1-41h0m0 26h0m0-8h0m0-1h0m1-1h0m0-9h0m0-15h0m2 39h0m1 6h0m0-21h0m1-33h0m0 41h0m0-2h0m0-15h0m0 11h0m0-2h0m2-35h0m0 32h0m1 8h0m0-11h0m0 34h0m1-19h0m0-28h0m0 0h0m0-15h0m1 54h0m0-28h0m1 5h0m0 31h0m0-27h0m0-28h0m2 26h0m0-9h0m0-2h0m1-1h0m0 16h0m1-11h0m0-17h0m0-5h0m0 41h0m0-7h0m1-26h0m0 54h0m0-58h0m1 24h0m0 5h0m0-10h0m1-4h0m1 10h0m0-4h0m0-9h0m0-1h0m1 10h0m0 20h0m1-25h0m0 3h0m1-8h0m0 10h0m1 8h0m0 14h0m0-21h0m1-17h0m0 31h0m0-34h0m0-13h0m0 24h0m1 13h0m0 25h0m0-27h0m1-13h0m0 20h0m1 8h0m1-48h0m0 25h0m0-7h0m1-5h0m0 19h0m0 13h0m0-23h0m1-2h0m0 33h0m0-17h0m0-25h0m1 43h0m0-37h0m0 24h0m0 8h0m2-6h0m1 8h0m0-8h0m1-13h0m0-13h0m0 6h0m1 22h0m1-37h0m0 15h0m0 5h0m0-26h0m1 2h0m0 28h0m0-6h0m1 17h0m1-13h0m0 24h0m0-7h0m0-7h0m1 16h0m0-17h0m0 4h0m0-19h0m0-13h0m0 10h0m1 4h0m1 6h0m0-24h0m0 6h0m0-8h0m1 9h0m0 18h0m0 9h0m0-35h0m0-15h0m1 54h0m0 5h0m0-17h0m1-9h0m0 7h0m0 1h0m1-22h0m1 20h0m0 2h0m1-14h0m1 19h0m1 11h0m1-17h0m0-22h0m1 20h0m0 16h0m0-51h0m1 21h0m0 27h0m0-19h0m0 7h0m1 4h0m0-26h0m0 20h0m0-5h0m1 27h0m0-31h0m0 20h0m0-3h0m1-23h0m0 27h0m1-5h0m0-13h0m0 16h0m0-3h0m1-17h0m0 13h0m1 23h0m0-50h0m0 13h0m1 3h0m0-9h0m1-2h0m0 4h0m0 10h0m0-3h0m0 2h0m1 28h0m0-50h0m0 39h0m2 1h0m0 0h0m0 6h0m1 12h0m0-36h0m0 11h0m1 12h0m0-11h0m0-11h0m0 23h0m2-15h0m0-3h0m0 0h0m0-3h0m0-1h0m1 16h0m0-13h0m1 17h0m0 5h0m0-24h0m0 15h0m0-22h0m1 15h0m0-37h0m0 58h0m1 6h0m0-31h0m1 2h0m0-34h0m0 42h0m1-20h0m0 0h0m0 31h0m1-17h0m0-16h0m0-1h0m1-4h0m1 10h0m0 14h0m1-1h0m2-4h0m0-5h0m0 16h0m0-21h0m1 1h0m0-11h0m2-5h0m0 31h0m1-21h0m0 11h0m0 19h0m0-40h0m1 35h0m0-5h0m0 5h0m0-2h0m0-15h0m1-8h0m1 41h0m0-26h0m1-4h0m0-10h0m0 21h0m1-7h0m0-14h0m0 24h0m0-14h0m0 3h0m2 7h0m0-14h0m1-19h0m0 37h0m0-4h0m1-25h0m1 5h0m1 19h0m0 35h0m0-27h0m1-21h0m0 0h0m1 8h0m0 10h0m0 28h0m2-27h0m0-6h0m1-24h0m0 30h0m1 4h0m0-25h0m0-8h0m1 30h0m0-20h0m0 23h0m3-28h0m1 17h0m1-7h0m0-22h0m0 21h0m0-20h0m0 53h0m1-32h0m0 7h0m0-7h0m1-8h0m0 18h0m0-5h0m0-12h0m1 11h0m0 12h0m0-20h0m0 25h0m1-12h0m0-16h0m0-5h0m1 32h0m0-4h0m0 3h0m0-10h0m0 29h0m1-19h0m0-30h0m1 24h0m0-30h0m1 25h0m0 1h0m0-19h0m1 5h0m0 12h0m0-19h0m1 7h0m0 11h0m0-8h0m1-10h0m0 13h0m1 14h0m0-25h0m0 11h0m1-18h0m1 7h0m0 0h0m1 27h0m0-17h0m1 12h0m0 5h0m0-5h0m1-10h0m2-16h0m0 16h0m0-26h0m0 25h0m0-9h0m0-12h0m2 2h0m0 32h0m1-8h0m0 3h0m1-30h0m0-4h0m1 25h0m0 11h0m1-14h0m1-14h0m0 18h0m0-13h0m1 4h0m1-9h0m0 30h0m1-12h0m1-5h0m0 9h0m1-1h0m0-32h0m0 58h0m1-28h0m0-11h0m0 9h0m1 19h0m1-31h0m0 9h0m0-9h0m1 19h0m1-27h0m0 34h0m1-26h0m1-23h0m0 18h0m0 8h0m0 4h0m0 4h0m1 15h0m0-12h0m0-1h0m0-12h0m0 4h0m0-1h0m0 2h0m0 21h0m1-28h0m0 15h0m1-8h0m0 21h0m1-24h0m0 19h0m1-35h0m0 14h0m0 46h0m2-49h0m0 28h0m0-7h0m1 14h0m0 15h0m2-34h0m0-5h0m0 11h0m0 16h0m0-33h0m0 11h0m0-12h0m1 9h0m1-26h0m0 29h0m0-4h0m1 11h0m1 22h0m0-30h0m0 21h0m1-10h0m1 5h0m0-26h0m0 10h0m1-12h0m1 1h0m0 16h0m1-20h0m0 22h0m0 11h0m1-32h0m0 9h0m1-11h0m0 31h0m1-1h0m1-6h0m0 6h0m0-9h0m1-15h0m0-14h0m1 28h0m0 5h0m1 6h0m0-20h0m0 36h0m0-62h0m1 62h0m0-29h0m0 21h0m0-29h0m1 10h0m1 0h0m0-4h0m0-9h0m0-12h0m1 36h0m0 12h0m0-18h0m1-4h0m0-9h0m0 7h0m0-6h0m1 15h0m0-16h0m0 6h0m1 3h0m0-19h0m0 12h0m1 13h0m0-14h0m1 0h0m0-1h0m0 1h0m1 24h0m0-16h0m0 6h0m1-28h0m0 17h0m1 19h0m0 5h0m0-33h0m1 25h0m0-5h0m0-27h0m0 0h0m1 30h0m0-20h0m0 16h0m1-16h0m0 14h0m0-5h0m0-14h0m0 31h0m1-19h0m1-3h0m0 11h0m0-15h0m0 25h0m1 5h0m0-15h0m0-11h0m0-12h0m0 28h0m0-3h0m1-23h0m0 22h0m0-15h0m0-2h0m1 5h0m0 24h0m0-43h0m1 7h0m0 38h0m0-9h0m0 5h0m0-37h0m0 14h0m2 12h0m0-15h0m0 1h0m1 5h0m0-30h0m1 17h0m0 18h0m1-18h0m0 24h0m1 3h0m1 6h0m0-56h0m0 27h0m0-4h0m1-7h0m0 36h0m0-44h0m0 13h0m0 6h0m1 10h0m0 9h0m0 13h0m1-19h0m1-17h0m0 7h0m0 27h0m1-30h0m1-2h0m0 7h0m0 34h0m0-23h0m0-11h0m1-7h0m0 16h0m0 15h0m0-15h0m1 14h0m1-30h0m0 5h0m0 6h0m1 23h0m0-38h0m0 10h0m0 8h0m1 30h0m2-30h0m2 13h0m0-3h0m0-7h0m0-9h0m1 33h0m1-28h0m0 5h0m0-7h0m1-11h0m0 42h0m0-10h0m0-19h0m0 24h0m1-33h0m0 18h0m0 15h0m1-35h0m0 23h0m0 15h0m1-47h0m0-1h0m0 9h0m0 6h0m0-16h0m1 31h0m0 10h0m0-18h0m1-7h0m0-16h0m0 14h0m0 17h0m0 0h0m1 8h0m0-5h0m0 10h0m0-38h0m1 10h0m0 16h0m0-3h0m0-9h0m1 0h0m1 9h0m0 3h0m0 13h0m0-22h0m0 15h0m1-1h0m0-24h0m0 5h0m1 27h0m0-3h0m0-16h0m1-15h0m0 9h0m1-2h0m1-4h0m0-4h0m0 14h0m0-3h0m1 17h0m1-30h0m0 17h0m0-14h0m0-5h0m2-5h0m0 1h0m1 22h0m0-14h0m0 26h0m0-15h0m2 1h0m0-5h0m0-5h0m0-1h0m1 10h0m0 17h0m0-9h0m1-19h0m0 0h0m0 4h0m1 3h0m0 17h0m0-3h0m1-35h0m0 34h0m1-7h0m0 10h0m1-3h0m0-47h0m0 40h0m1 15h0m0-6h0m0-14h0m0-34h0m0 54h0m1-16h0m0-9h0m0 6h0m0 2h0m0 19h0m0 0h0m1-39h0m0 41h0m0-25h0m1-14h0m1 13h0m0 5h0m0-3h0m1 0h0m0 3h0m1 5h0m0-12h0m0 11h0m1 15h0m0-21h0m0-19h0m0 23h0m0 16h0m0-22h0m1-1h0m0 19h0m0-11h0m0 5h0m1-1h0m1-10h0m1-18h0m0 6h0m1 29h0m2 0h0m0-17h0m0-10h0m1 28h0m0-22h0m0 3h0m1 23h0m0-35h0m1 28h0m0-24h0m0-20h0m1 49h0m1-24h0m0 13h0m1 4h0m0-1h0m1-11h0m0-21h0m0 9h0m1-25h0m0 12h0m2 22h0m1 7h0m1 5h0m0-10h0m1 1h0m0 0h0m0-11h0m0-5h0m0 36h0m0-37h0m1 8h0m0 12h0m1 3h0m0-14h0m1 46h0m0-10h0m1-28h0m0-9h0m0 3h0m0-2h0m0 24h0m1-6h0m0-25h0m1 32h0m0-22h0m0 1h0m1 7h0m0 13h0m1 14h0m2-27h0m1-2h0m0-3h0m0-1h0m1 15h0m1-10h0m0-10h0m0-4h0m0 3h0m0-18h0m1 31h0m1-9h0m0 22h0m0 9h0m1-31h0m0 6h0m0-4h0m1 21h0m0-5h0m1-1h0m1-28h0m0 9h0m0-17h0m0 32h0m2 2h0m1-3h0m0-19h0m1 19h0m0-25h0m0 27h0m0 25h0m1-60h0m1 12h0m0 10h0m0-2h0m1 13h0m0-12h0m0-11h0m0 12h0m1 6h0m0-11h0m0-5h0m0 11h0m1 26h0m1-1h0m0-29h0m1 13h0m1-18h0m0 4h0m1 21h0m0-5h0m1-15h0m0-3h0m0 8h0m0 2h0m0 9h0m1-25h0m0 25h0m0-13h0m1-19h0m0 10h0m1 3h0m1 4h0m0 20h0m0-16h0m1 14h0m0 10h0m1-17h0m0-31h0m0 34h0m1-30h0m0 30h0m0-1h0m0 23h0m0-23h0m1-9h0m0-14h0m0 22h0m0 14h0m1-53h0m0 38h0m1-14h0m0-6h0m0-20h0m0 32h0m0 6h0m1 1h0m0-15h0m1 3h0m0 21h0m1-13h0m0-10h0m0 9h0m1-12h0m1 9h0m0 21h0m1-21h0m0 17h0m0-9h0m1 18h0m0-21h0m0 25h0m0 7h0m1-30h0m1 30h0m0-42h0m1-6h0m0 26h0m0-13h0m0 14h0m1-23h0m0 20h0m0 19h0m0-35h0m0 28h0m0-38h0m0 22h0m1 33h0m0-58h0m1 32h0m1-9h0m0 17h0m0-38h0m1 54h0m0-27h0m1-24h0m0 31h0m0 3h0m0 7h0m0-19h0m1-8h0m0-2h0m0 24h0m1-30h0m0 23h0m1-8h0m0-34h0m0 43h0m0 11h0m1-17h0m0-17h0m1 41h0m0-32h0m1-7h0m0 38h0m0-7h0m0-15h0m1 4h0m0-36h0m0 12h0m1 12h0m1-9h0m0 4h0m0-3h0m0 4h0m0-6h0m0 33h0m0-38h0m1 15h0m0-6h0m0-1h0m1 27h0m0-22h0m0 30h0m0-47h0m1 42h0m0-19h0m1-25h0m0 55h0m0-33h0m0-9h0m2-1h0m1 10h0m0-8h0m0 1h0m0 32h0m0-7h0m0-10h0m1-36h0m0 40h0m0 8h0m1-47h0m1-4h0m0 36h0m0-12h0m1 15h0m0-13h0m1 3h0m0 5h0m0 13h0m0 15h0m0-2h0m1-22h0m0-6h0m0 7h0m0-5h0m0-10h0m1 16h0m1 0h0m1 3h0m0 14h0m1-29h0m1-23h0m1 25h0m1-17h0m0 16h0m0 1h0m1 6h0m0-1h0m0-15h0m1 26h0m0-28h0m1 15h0m0 7h0m1-10h0m0 14h0m1 12h0m0-3h0m0-5h0m1 2h0m1-36h0m0-4h0m0 36h0m1-38h0m0 14h0m1-4h0m0 14h0m0 8h0m0-17h0m2 20h0m0-6h0m1-20h0m0 2h0m0 20h0m0 7h0m1-25h0m0 37h0m0-22h0m0-23h0m0 12h0m0 13h0m1-7h0m0 12h0m0 2h0m0 4h0m0-19h0m1-9h0m1-6h0m0 10h0m0-10h0m0 1h0m1 14h0m0-4h0m0 18h0m0 9h0m0-37h0m1 19h0m1 13h0m0-42h0m0 26h0m0 4h0m1 15h0m0-36h0m0 16h0m0 14h0m1-17h0m0 8h0m0 2h0m0 20h0m1-16h0m0-2h0m0-26h0m1 35h0m0-21h0m0-1h0m0 1h0m0-17h0m1 8h0m0 9h0m0 1h0m0-16h0m0-7h0m2 17h0m1-10h0m1 4h0m0-2h0m0 19h0m0 5h0m0-24h0m2 6h0m0-18h0m1 23h0m0-1h0m0-6h0m0 32h0m0-27h0m0-27h0m0 44h0m0 8h0m1-21h0m1 9h0m1-8h0m0-10h0m1 6h0m0-2h0m0 8h0m1-21h0m1 41h0m0 13h0m1-35h0m0 11h0m0-5h0m1 6h0m0-7h0m0-16h0m1-3h0m1 11h0m0 23h0m0-18h0m0-19h0m1 22h0m0 11h0m1-8h0m0-4h0m0 19h0m1-10h0m1-4h0m1 8h0m0-25h0m1 16h0m0-6h0m1-12h0m2-13h0m1 40h0m1-33h0m0 1h0m0-5h0m0 36h0m1 6h0m1-49h0m1 11h0m0 31h0m1-35h0m0 16h0m1 1h0m1-12h0m1 16h0m0 0h0m0-3h0m1-17h0m0 22h0m0 12h0m0 14h0m0-44h0m0 20h0m0-14h0m0 35h0m1-18h0m0-6h0m0 38h0m1-42h0m2 2h0m1 18h0m0-27h0m0 7h0m0-10h0m2 2h0m1 30h0m0-26h0m0 3h0m0 18h0m1-36h0m0 6h0m1 18h0m0 23h0m1-19h0m0 9h0m0-4h0m0-18h0m1-7h0m0 22h0m1-24h0m1 24h0m0-4h0m0 4h0m1 2h0m0-34h0m1 4h0m0 7h0m1 27h0m1-40h0m1 25h0m0 10h0m0 8h0m0-5h0m1-22h0m1 15h0m0 14h0m1-22h0m0 21h0m0 8h0m1-13h0m0-26h0m0 19h0m1 9h0m1-19h0m0 8h0m1-40h0m1 44h0m0-15h0m0 5h0m1 23h0m0-27h0m1-10h0m0 25h0m1-10h0m0-3h0m0 20h0m0-40h0m1 24h0m0 2h0m0 1h0m1 11h0m0-24h0m0-7h0m0 8h0m0 17h0m1-5h0m0 7h0m0 1h0m0-4h0m0 8h0m2-39h0m0 18h0m0 25h0m0-19h0m0 29h0m1-53h0m0 42h0m1-28h0m0 25h0m0-12h0m0-20h0m1 8h0m0 10h0m0 9h0m1 9h0m1-15h0m0 0h0m0 14h0m1-27h0m0 22h0m0-8h0m0 0h0m0-11h0m1 8h0m0-16h0m1 12h0m1-4h0m0 1h0m1-8h0m0-2h0m0 2h0m1-2h0m0 17h0m0-33h0m1 34h0m0-11h0m1 15h0m0-20h0m0 14h0m0 8h0m1-2h0m0-7h0m0 7h0m0-17h0m1 13h0m1-7h0m0-6h0m0-3h0m0-5h0m1 3h0m0-9h0m0 16h0m0 17h0m2-9h0m0 31h0m0-51h0m1 3h0m0 41h0m1-23h0m0 21h0m0-20h0m0-17h0m0-3h0m1 19h0m1-15h0m0 37h0m0-3h0m0-40h0m1 36h0m0-33h0m0 30h0m1-17h0m0 46h0m0-32h0m0-33h0m1 30h0m0 2h0m0-25h0m0 15h0m1 20h0m0 4h0m0-16h0m1-4h0m0 3h0m0 14h0m1-20h0m0-6h0m0-19h0m0 21h0m1-11h0m0 47h0m1-57h0m0 22h0m1 21h0m0-19h0m0 0h0m1-6h0m0-5h0m0 22h0m0-9h0m1-3h0m0 39h0m0-31h0m0-3h0m1 0h0m0-4h0m1 9h0m0-12h0m1-9h0m0 24h0m0-1h0m1-27h0m1 0h0m0 20h0m0 20h0m0-30h0m0 38h0m0-50h0m1 21h0m0-12h0m0 22h0m1-18h0m0-2h0m0 11h0m0 20h0m1-2h0m0-9h0m1-18h0m1-7h0m1 0h0m0 22h0m1-18h0m0 20h0m1 7h0m1-21h0m0-3h0m1 12h0m0-16h0m0 12h0m1-17h0m1 6h0m0 26h0m0-3h0m0 17h0m1-28h0m1 1h0m0-6h0m0 6h0m0-15h0m0 18h0m1 10h0m0-37h0m1 19h0m0 17h0m0-32h0m0 38h0m0-52h0m1 11h0m0 33h0m0 14h0m0-4h0m0-12h0m0 9h0m1-17h0m0-22h0m1 25h0m1-7h0m0 12h0m0 2h0m0-30h0m0 33h0m1 7h0m1-19h0m0 7h0m0-29h0m0-6h0m0 12h0m1-4h0m0 38h0m0-22h0m1-3h0m1-14h0m0-4h0m0 15h0m0 39h0m1-50h0m0 31h0m0-3h0m0 0h0m0-13h0m1-9h0m0 37h0m1-57h0m0 27h0m0 14h0m0-2h0m1-10h0m0 23h0m1-22h0m1 6h0m0-21h0m1 6h0m0 24h0m0-23h0m0 3h0m0-11h0m1 9h0m0-9h0m0 20h0m0-32h0m0 16h0m0 2h0m1 4h0m0 33h0m0-26h0m0 16h0m0-8h0m0-38h0m1 13h0m0 17h0m0 3h0m1 15h0m0-8h0m1-24h0m1 21h0m0 10h0m0-20h0m0 0h0m0-4h0m1 2h0m0-13h0m1 50h0m0-15h0m2-7h0m0 6h0m0-5h0m1-12h0m1 3h0m0-18h0m1 6h0m1-4h0m0 5h0m0 17h0m0-40h0m1 34h0m0-7h0m1 9h0m0 10h0m1-4h0m0-27h0m0 14h0m1-7h0m1 19h0m0-8h0m1 11h0m2-22h0m1 5h0m0 18h0m0-21h0m1 9h0m0 18h0m0-38h0m1 34h0m0-15h0m0 5h0m0-25h0m1 18h0m0 19h0m0-1h0m1-17h0m0 8h0m0-14h0m2 20h0m0-8h0m0-9h0m0 15h0m1-12h0m0 13h0m0 1h0m0-32h0m1-4h0m0 12h0m0-5h0m0 16h0m0-5h0m1 12h0m0-25h0m0 27h0m0-8h0m0 7h0m1-8h0m0 5h0m0-5h0m1-5h0m1 0h0m1 19h0m1-32h0m2 16h0m1-3h0m0 6h0m0-8h0m0-8h0m0-2h0m0 13h0m0-3h0m1 27h0m0-25h0m1 8h0m0-8h0m1-26h0m1 55h0m0-33h0m0 15h0m1 1h0m0-13h0m1 1h0m0 13h0m1-37h0m1 20h0m1 18h0m0 9h0m0-22h0m1 8h0m0-26h0m0 34h0m0-3h0m1 6h0m0-26h0m1-4h0m0 23h0m1 2h0m0-16h0m0-9h0m1 24h0m0-34h0m0 33h0m0-19h0m0-2h0m0 28h0m1 1h0m0-21h0m0 28h0m0-24h0m0 11h0m0-14h0m1-1h0m1 15h0m0-21h0m0 5h0m1 3h0m0 14h0m0-16h0m0 6h0m0-1h0m1 6h0m0 8h0m0 15h0m1-41h0m0-8h0m0 24h0m0-23h0m0 13h0m1 7h0m0 1h0m0-29h0m0 33h0m0-40h0m0 46h0m1-14h0m0-8h0m0-18h0m0 17h0m1 12h0m0 10h0m1-21h0m0 1h0m0 15h0m0-16h0m0 11h0m1 1h0m0-26h0m0 19h0m0-4h0m0 28h0m1-2h0m0-4h0m0-19h0m0 24h0m1-23h0m0 5h0m0 5h0m1-18h0m0 38h0m0-33h0m1 0h0m0 0h0m0 12h0m0-21h0m0 23h0m1-7h0m0-5h0m1-7h0m0 25h0m1-24h0m0 7h0m0-18h0m0 10h0m1 17h0m0-23h0m0 19h0m0-24h0m1 36h0m0 12h0m0-33h0m0-6h0m0 20h0m0 9h0m1-14h0m0-1h0m0-7h0m0 9h0m0-7h0m0-13h0m1 16h0m0-14h0m0-13h0m0 31h0m1-28h0m0 39h0m0-8h0m0-6h0m0 5h0m0 2h0m0-17h0m1 1h0m2 21h0m0-13h0m0-6h0m1-10h0m0-10h0m0 18h0m1 15h0m0 6h0m1-11h0m0 16h0m0-17h0m0 2h0m1-5h0m2 22h0m0-22h0m1-1h0m0 5h0m0-5h0m0-7h0m1-7h0m0 27h0m1-16h0m0-8h0m0 12h0m0 6h0m1-15h0m0 42h0m0-30h0m1 1h0m1 18h0m0 2h0m1-22h0m0-22h0m1 50h0m0-31h0m0 9h0m1 18h0m1-15h0m1-3h0m1 25h0m1-26h0m0-3h0m1-12h0m0 15h0m1-10h0m0 35h0m1-31h0m0-15h0m1 5h0m0 3h0m0-21h0m1 22h0m1 2h0m0 6h0m0-15h0m0 28h0m1 4h0m0-23h0m1 6h0m0-14h0m0-12h0m0 26h0m1 2h0m0-2h0m0-8h0m0 8h0m1 11h0m0 7h0m0-30h0m0 24h0m1-29h0m1-5h0m0 19h0m0-10h0m1-7h0m0 13h0m0 24h0m1-27h0m0 14h0m0-2h0m1-15h0m0 34h0m1-6h0m0 4h0m0-22h0m0 13h0m0-6h0m1-7h0m1-18h0m0 12h0m0 23h0m0-30h0m1 29h0m0-5h0m1 0h0m0-13h0m0 7h0m1 10h0m0-25h0m1 8h0m0 7h0m1 12h0m0-27h0m0-6h0m1 20h0m0 13h0m0-23h0m0 4h0m1-10h0m0 18h0m0-10h0m0 3h0m1 7h0m0 28h0m0-37h0m0 9h0m1-4h0m1-9h0m0 4h0m2-1h0m0-16h0m1 31h0m1 1h0m0 4h0m1-1h0m0-16h0m0 24h0m0-8h0m1-15h0m0-6h0m0 15h0m2-23h0m0 31h0m0-15h0m0-12h0m0 11h0m1 28h0m1-23h0m0-16h0m0 13h0m0-20h0m1 11h0m0 3h0m0-7h0m0 15h0m0-13h0m1 16h0m0 3h0m0-25h0m1 47h0m0-27h0m0 1h0m1-21h0m0 15h0m1 1h0m0-20h0m0 26h0m0 3h0m1-7h0m0 22h0m0 10h0m1-44h0m0 39h0m0-37h0m1-3h0m0 3h0m0-2h0m1-1h0m0 6h0m0 12h0m0-20h0m0-2h0m1 12h0m1 24h0m0 14h0m0-45h0m1 14h0m0 16h0m1-7h0m0-13h0m0-6h0m1-4h0m0 5h0m0-14h0m1 6h0m2 6h0m0 1h0m0-5h0m0 27h0m1-20h0m0 0h0m0 15h0m1-5h0m0 6h0m0-26h0m1 31h0m0-29h0m0 5h0m1 8h0m1 15h0m0-15h0m1 1h0m0 20h0m0-18h0m0 6h0m1-29h0m1 25h0m0-10h0m0 25h0m1-11h0m0-11h0m0 7h0m1-6h0m0 6h0m1 3h0m0-9h0m0-6h0m1 17h0m0-7h0m1-25h0m1 10h0m1 21h0m0 2h0m0 25h0m0-21h0m1-28h0m1 10h0m1 15h0m0-51h0m1 56h0m0-37h0m0 25h0m1-5h0m0 10h0m0-8h0m0-7h0m1-1h0m0 11h0m1-4h0m0 13h0m0-9h0m1 14h0m0 6h0m0 3h0m1-40h0m0 7h0m0 25h0m0-17h0m2 9h0m0-42h0m0 21h0m0 20h0m1-8h0m0-5h0m0 2h0m2 5h0m0-6h0m1 8h0m0-2h0m0 18h0m1-25h0m1 15h0m0 11h0m0-50h0m0 30h0m1-4h0m0 20h0m0-16h0m2-12h0m1 2h0m0-3h0m1 14h0m0-6h0m1 29h0m0-17h0m2-5h0m2-1h0m0-2h0m0-16h0m0 34h0m1-7h0m0-6h0m0 15h0m0-26h0m1-7h0m0 15h0m1 24h0m1-29h0m0-9h0m0 11h0m0-3h0m1 20h0m0-6h0m0-10h0m2-3h0m0-9h0m1 20h0m0 10h0m0-25h0m0 25h0m0-22h0m1-24h0m0 48h0m0-16h0m0-22h0m1 12h0m1-11h0m0 8h0m0-15h0m0 46h0m1-9h0m0-14h0m1-10h0m0-17h0m0 35h0m1-1h0m0-27h0m0 17h0m1-14h0m0-3h0m0 45h0m0-15h0m1-21h0m1 14h0m1-10h0m0 5h0m1-8h0m0 10h0m1-25h0m0 29h0m1-21h0m0 5h0m0 9h0m1-5h0m0 14h0m2-12h0m0-19h0m1 6h0m0 32h0m1-10h0m1-11h0m0-1h0m2 25h0m0-15h0m1-12h0m1 21h0m0-2h0m1-10h0m0 9h0m1 1h0m1-22h0m1 7h0m1-1h0m0-13h0m1-5h0m0 28h0m1 14h0m0 15h0m1-15h0m0-30h0m1 9h0m0 9h0m0 20h0m0-39h0m1-15h0m0 35h0m0-19h0m0 46h0m1-30h0m0 3h0m1-10h0m1-21h0m1 53h0m0-18h0m0-8h0m1-28h0m0 29h0m1 9h0m0-2h0m0 14h0m0-15h0m0 4h0m0-13h0m1-16h0m0 29h0m0-13h0m1-13h0m0 6h0m1 19h0m0-10h0m0 15h0m0-15h0m0-3h0m2-18h0m0 14h0m2-6h0m0 15h0m0-6h0m0-2h0m2-11h0m0 19h0m0 2h0m1 2h0m0 13h0m1-33h0m0-5h0m0 26h0m0 6h0m1-4h0m0-11h0m0-2h0m1 19h0m0-2h0m0-2h0m0-13h0m0 16h0m0-33h0m1 42h0m0-28h0m0-3h0m0 31h0m1-20h0m0 4h0m1 2h0m0 8h0m1-27h0m0 24h0m1-19h0m1-22h0m0 33h0m1-16h0m0-4h0m0 9h0m0 27h0m1-40h0m0 26h0m0-15h0m0 2h0m2-9h0m1 8h0m1-4h0m0 17h0m0-28h0m0 13h0m1 21h0m0-25h0m1 1h0m0 12h0m1-3h0m0 8h0m0 15h0m1-32h0m0 12h0m0 2h0m0-11h0m0 14h0m0-6h0m1 12h0m0 1h0m0-17h0m0-9h0m1 5h0m0-2h0m0 10h0m0-8h0m1 28h0m0-41h0m0 10h0m0 1h0m0 19h0m0-6h0m0-20h0m1 20h0m1 6h0m0-24h0m0-1h0m0 15h0m0-2h0m1-14h0m0 30h0m1-31h0m1-3h0m0 41h0m2-30h0m0-9h0m0 23h0m0 0h0m1 5h0m0-10h0m1-16h0m1 26h0m0 3h0m0 15h0m1-42h0m0 5h0m0-2h0m0 1h0m1 28h0m1-21h0m0 5h0m1-3h0m0-28h0m0 23h0m0-13h0m2 30h0m1-11h0m1 15h0m0-29h0m0 30h0m1-27h0m0 8h0m0 26h0m1-5h0m1 5h0m0-10h0m0-18h0m1 11h0m0-8h0m0 14h0m1-8h0m0-2h0m1-15h0m1 3h0m0 27h0m0-31h0m2-14h0m1 17h0m0-9h0m1 7h0m0 27h0m0-16h0m1-7h0m0-14h0m1 21h0m0 26h0m0-34h0m0 8h0m1-23h0m0 33h0m0-30h0m1 14h0m0 15h0m1-16h0m0-13h0m2 26h0m0-11h0m1 10h0m0 2h0m1-19h0m0 32h0m0-35h0m0-4h0m1 16h0m0 17h0m0-20h0m1 7h0m0 12h0m0-23h0m0 43h0m1-31h0m0-17h0m0-22h0m1 36h0m0-19h0m0 15h0m0 7h0m1-10h0m2 29h0m0-11h0m0-34h0m0 41h0m1-16h0m0 2h0m0-20h0m0 16h0m1-8h0m0 12h0m1 4h0m0-3h0m1-3h0m1-7h0m0 43h0m0-55h0m1 22h0m0-16h0m0 18h0m0-9h0m1 33h0m0-24h0m1 6h0m0 11h0m1-7h0m0-3h0m0-29h0m0-4h0m0 2h0m0 0h0m1 15h0m1 14h0m1-5h0m0-5h0m0 17h0m1-37h0m0 28h0m0 9h0m0-15h0m0-17h0m1 32h0m1-16h0m1 8h0m1-29h0m0 14h0m0 6h0m1 4h0m0 15h0m0-29h0m1 13h0m0 1h0m0-11h0m0-4h0m0-5h0m0 2h0m0 23h0m1-22h0m0-4h0m0 13h0m0-23h0m1 37h0m0-21h0m0 8h0m1-7h0m0-12h0m1 41h0m0-29h0m1 4h0m3-2h0m1 11h0m0-6h0m0-22h0m0 27h0m1 18h0m0-14h0m0-41h0m0 57h0m0-20h0m0-21h0m0 26h0m1-2h0m0-3h0m0 6h0m1-8h0m0 15h0m0-21h0m0 5h0m0-13h0m1 11h0m0 10h0m1-22h0m0 16h0m1-26h0m0 10h0m0-1h0m1 0h0m0-1h0m0 5h0m0 14h0m1-10h0m1 42h0m0-38h0m1-7h0m0 5h0m1 11h0m0-2h0m1-36h0m0 35h0m1-13h0m0-19h0m0 16h0m1 25h0m1-11h0m0-7h0m0 9h0m1 2h0m0-13h0m1 13h0m0 4h0m1 8h0m1-34h0m0 23h0m0 11h0m1-12h0m0-2h0m1-9h0m0-4h0m0 11h0m0-1h0m1-4h0m0 9h0m0-9h0m0-2h0m1 33h0m0-16h0m1-36h0m0 14h0m1 20h0m0-6h0m0 20h0m1-48h0m0 50h0m0-32h0m0 21h0m0-26h0m0-26h0m1 48h0m0-9h0m1-22h0m0 11h0m0 16h0m1-17h0m0-10h0m0 17h0m0-5h0m1 26h0m0-16h0m0 4h0m0-18h0m0 29h0m1-4h0m0-19h0m1-1h0m0-1h0m0 35h0m1-21h0m0 9h0m0-13h0m0 40h0m1-35h0m0-17h0m1-7h0m0 27h0m0-20h0m1 27h0m0-8h0m1-17h0m0 9h0m0-7h0m0 17h0m1-2h0m0-10h0m0 9h0m0 3h0m1-6h0m1 14h0m0 9h0m1-12h0m0-17h0m0-6h0m0 8h0m1 2h0m0-34h0m1 26h0m0 4h0m1 13h0m0-16h0m0 10h0m1-10h0m0-3h0m0 1h0m0-17h0m0 3h0m1 19h0m1-29h0m0 43h0m0 1h0m0-6h0m1-19h0m0 38h0m0-32h0m2-13h0m0 12h0m0 17h0m1-24h0m0 14h0m0-13h0m0 16h0m1 27h0m0-15h0m0-23h0m0 24h0m2-3h0m0-16h0m0-22h0m0 20h0m1 11h0m0 9h0m0-20h0m1-3h0m0 22h0m1 4h0m1-27h0m0 20h0m0-33h0m0 34h0m0-11h0m1 19h0m1-15h0m0-24h0m1 35h0m1-7h0m0-14h0m2 7h0m0-18h0m0 17h0m1 23h0m1-17h0m2 9h0m0-19h0m2 14h0m1-12h0m2-8h0m1 17h0m0-19h0m1 7h0m0 4h0m1-8h0m0-6h0m0 2h0m0 13h0m2 2h0m0-15h0m0 16h0m1-16h0m0 20h0m0-8h0m0-4h0m0 6h0m0-2h0m1 16h0m0-13h0m0-18h0m0 18h0m1-3h0m0 14h0m0-41h0m0 44h0m0-15h0m1-3h0m0 21h0m2-16h0m0 4h0m0-17h0m0 12h0m0 6h0m0-9h0m1-5h0m0-15h0m0 34h0m0-14h0m0-16h0m0 19h0m1 8h0m0-21h0m0-6h0m0 13h0m1-11h0m0 14h0m0-5h0m0 4h0m0 5h0m0 25h0m0-42h0m2 11h0m0 7h0m0 10h0m1-10h0m0 13h0m0-20h0m1-30h0m1 64h0m0-50h0m1 36h0m0-23h0m0 26h0m0-6h0m0-8h0m1 3h0m0-19h0m0 6h0m0-6h0m0 6h0m1-32h0m0 24h0m0-13h0m0 20h0m1-12h0m0 26h0m1-11h0m0-15h0m1 34h0m0-4h0m0-27h0m0 31h0m2-56h0m0 40h0m0-5h0m1 4h0m0-19h0m1 21h0m0 16h0m0-8h0m1-20h0m1 0h0m0-7h0m1 14h0m1-10h0m0 12h0m0-27h0m0 23h0m0 15h0m1-13h0m0-11h0m0 6h0m1-19h0m0-7h0m0 28h0m0-2h0m1-9h0m0 2h0m0-6h0m1 26h0m0 4h0m0-4h0m0 12h0m1-36h0m1 15h0m1 0h0m0-19h0m0 29h0m0-17h0m0 25h0m1 11h0m0-16h0m0 9h0m0-15h0m0 7h0m1 2h0m0-18h0m0 37h0m1-42h0m0 5h0m0 19h0m1-40h0m0 9h0m0 11h0m0 11h0m0-33h0m0 47h0m0-17h0m1 9h0m1-12h0m0-4h0m0-11h0m0 27h0m0-14h0m1-2h0m0-4h0m0 18h0m0 21h0m1-44h0m1-9h0m0 26h0m0 21h0m1-7h0m0-6h0m1 17h0m0-51h0m0 29h0m0-24h0m2 17h0m0 25h0m1-37h0m0-3h0m0 33h0m0-26h0m2 24h0m0-19h0m0-11h0m0 26h0m1 25h0m0-43h0m0-6h0m0-3h0m1 41h0m0-34h0m0 16h0m1-5h0m1-22h0m1 34h0m0-5h0m0-7h0m0 0h0m1 11h0m0-28h0m0 13h0m1 31h0m0-29h0m1-18h0m0-1h0m0 5h0m0 12h0m1-22h0m1 29h0m1 9h0m1-10h0m0-12h0m1-22h0m0 46h0m0-26h0m0 6h0m1 3h0m1-12h0m1-3h0m0 11h0m0 15h0m1-14h0m0-2h0m1-5h0m0 15h0m0-5h0m1 12h0m1-25h0m0 18h0m0-1h0m0 11h0m1-10h0m0-6h0m0 2h0m0 0h0m1 9h0m0-12h0m1-1h0m0 12h0m0-5h0m1 4h0m0-21h0m0 15h0m0-2h0m1-25h0m0 28h0m1 1h0m0 2h0m0-22h0m1 36h0m0-6h0m0-27h0m1 31h0m0-54h0m0 58h0m1-41h0m1 34h0m0-18h0m0 16h0m0-21h0m0-16h0m1 16h0m0 7h0m1-2h0m0 4h0m1-29h0m1 44h0m0-8h0m0 0h0m0-7h0m2-1h0m0 0h0m0-25h0m0 33h0m1-1h0m0 24h0m0-34h0m0 14h0m1-14h0m0 4h0m0-16h0m0 11h0m0-4h0m1 28h0m0-7h0m1 0h0m0-38h0m0 17h0m1-7h0m0 20h0m1-7h0m0-2h0m1 10h0m0-16h0m0 8h0m0-2h0m0 11h0m1 5h0m0-24h0m1 26h0m1-18h0m0-8h0m0 3h0m1 8h0m0 13h0m0-19h0m0-13h0m0-8h0m0 13h0m1 17h0m0 9h0m0-24h0m0 25h0m0-19h0m1 7h0m0 3h0m0-7h0m1 39h0m0 0h0m0-38h0m0 31h0m1-21h0m0-8h0m0-9h0m0 0h0m0 27h0m1-11h0m0 17h0m1-37h0m0-11h0m0 13h0m2 14h0m0-3h0m0 23h0m0-35h0m0-6h0m1-4h0m0 28h0m0-22h0m0 27h0m0-15h0m0 14h0m1-11h0m0-5h0m1 12h0m0-23h0m2 4h0m0 13h0m0-15h0m0 37h0m1-5h0m1-29h0m0-21h0m0 34h0m0-20h0m1 30h0m0-13h0m1 20h0m0 6h0m1-22h0m0 4h0m0 21h0m0-32h0m0 5h0m1-7h0m0 1h0m0 18h0m1-5h0m0 1h0m1-14h0m0-23h0m1 23h0m0 11h0m0-22h0m1-10h0m1 27h0m0 11h0m0-28h0m0 4h0m1 21h0m0-7h0m1 9h0m0 11h0m0-15h0m0 12h0m1-23h0m0 8h0m0 39h0m0-61h0m1 41h0m1-25h0m1 22h0m0 1h0m0-47h0m1 31h0m0 9h0m0-15h0m1-1h0m0-14h0m0 32h0m0-21h0m0 26h0m0-9h0m0-9h0m1-2h0m0-1h0m1-11h0m0 4h0m0 20h0m0-5h0m0 7h0m0-17h0m1-5h0m0 14h0m0-8h0m1-8h0m0 36h0m0-35h0m1 1h0m1-6h0m0 26h0m0-17h0m0 12h0m1-23h0m0 11h0m1 5h0m0 11h0m0-18h0m0 22h0m0-23h0m0 5h0m1 14h0m0 9h0m1 3h0m0-12h0m0-22h0m0 15h0m0-10h0m1 16h0m0 0h0m1-3h0m0-23h0m0-12h0m1 20h0m0 15h0m0 0h0m0 3h0m1-4h0m0-2h0m0-17h0m0 20h0m1-4h0m0-6h0m0 3h0m0-18h0m1 36h0m0-3h0m1-29h0m0 25h0m0-23h0m0 36h0m1-5h0m0-18h0m0 2h0m0-3h0m1-7h0m0 26h0m0-9h0m1-29h0m0 15h0m0 39h0m1-6h0m1-33h0m0 31h0m0-33h0m1-5h0m1-17h0m0 50h0m1-31h0m0 35h0m1-6h0m0-4h0m0-28h0m0 34h0m0-24h0m1 33h0m1-12h0m0-8h0m1-15h0m0 29h0m0-26h0m1 11h0m0-11h0m1-1h0m0 29h0m0-38h0m0 23h0m0-16h0m2-1h0m0 28h0m2-17h0m0 1h0m0-10h0m1 37h0m0-59h0m1 50h0m0-31h0m1-17h0m0 34h0m0-30h0m1 24h0m0-16h0m0 0h0m1 25h0m0-14h0m1 27h0m0-19h0m1 0h0m0 17h0m0-6h0m0 4h0m1-14h0m0-13h0m1-1h0m0 25h0m1 5h0m0-19h0m1-17h0m0 15h0m0-22h0m0 16h0m1-7h0m1 22h0m0 21h0m2-47h0m0 12h0m0-5h0m0-18h0m1 20h0m0-11h0m0 33h0m1 24h0m1-53h0m0 25h0m0-7h0m0 0h0m1-22h0m0 36h0m0-9h0m1-16h0m0 10h0m0 11h0m1-10h0m0 7h0m1 7h0m1-9h0m1-8h0m0-13h0m0 36h0m0-26h0m0 8h0m1-20h0m0 18h0m1 3h0m1-21h0m0 8h0m0 20h0m2-31h0m1 6h0m0 9h0m0 5h0m0-15h0m0 1h0m1 19h0m0-19h0m0 9h0m0 1h0m1-2h0m0 10h0m1-1h0m0 7h0m0-1h0m1 1h0m1-14h0m0-28h0m0 26h0m0 1h0m1 18h0m1-11h0m0 1h0m0-8h0m1 1h0m0 17h0m1-17h0m0-9h0m0 19h0m0-25h0m1 18h0m0 6h0m1-13h0m0-25h0m1 10h0m0 30h0m0-3h0m0-5h0m0-8h0m1-35h0m0 20h0m0 18h0m0 25h0m0-15h0m0-6h0m0-5h0m0 11h0m1 14h0m0-5h0m1 4h0m0-15h0m0-20h0m0 6h0m0 0h0m1 26h0m0-26h0m1 8h0m0 13h0m1-21h0m0 25h0m0-34h0m1 31h0m0-9h0m0-23h0m0 42h0m0-23h0m0 1h0m0 7h0m1 16h0m0-34h0m0 8h0m0-16h0m2 8h0m1 15h0m1-25h0m0 33h0m1 4h0m0-39h0m0 22h0m0-21h0m0 6h0m1 31h0m0-39h0m0 19h0m0 5h0m0 1h0m1-25h0m0 41h0m1-4h0m1-14h0m0-1h0m0-24h0m0 9h0m1 7h0m0 17h0m1-8h0m0 13h0m1-23h0m0-18h0m0 1h0m0 26h0m1 12h0m0-14h0m0 8h0m0 23h0m0-18h0m1-10h0m0 28h0m0-33h0m0-5h0m1 26h0m0-5h0m0-29h0m0 10h0m1 6h0m0-7h0m0 19h0m1-24h0m0 20h0m0-2h0m0-15h0m1 7h0m0-1h0m0-14h0m0 2h0m0 0h0m1 0h0m0 15h0m1-11h0m3 20h0m0-4h0m0-17h0m0 37h0m1-4h0m0 6h0m0-37h0m2 9h0m0-7h0m1-1h0m0-4h0m0 4h0m1 10h0m1-9h0m0-16h0m0 5h0m0 3h0m1 0h0m2 31h0m0-36h0m0 19h0m0 2h0m0-5h0m1 25h0m0-38h0m0 40h0m0-41h0m0 36h0m1-22h0m0 2h0m1-11h0m0 22h0m0-12h0m1-15h0m0-3h0m0 18h0m1-6h0m0 18h0m0-28h0m1 23h0m0 7h0m0-7h0m1 3h0m0 7h0m1-26h0m0-3h0m1 27h0m0-7h0m0 13h0m0 21h0m1-34h0m0-4h0m1 11h0m0 9h0m0-26h0m1 3h0m0 24h0m0-33h0m2-9h0m0 34h0m0 6h0m0-5h0m1-5h0m0-22h0m0 16h0m1 11h0m0 3h0m0-31h0m1 7h0m0 16h0m0-19h0m0-9h0m0 8h0m0-3h0m2 19h0m0-4h0m1-4h0m0-2h0m0 3h0m0 16h0m1-42h0m0 48h0m0 13h0m1-65h0m1 46h0m2-16h0m0 2h0m0-1h0m1-15h0m0 8h0m0 23h0m0-1h0m0-35h0m1 12h0m0-2h0m0 0h0m1 25h0m0-31h0m0 12h0m1 6h0m0 12h0m1-11h0m0-10h0m0 5h0m0 1h0m0-2h0m1-15h0m0 42h0m1-17h0m0-28h0m0 18h0m1-10h0m0 9h0m0 4h0m0 24h0m1-32h0m0 25h0m0-23h0m0 15h0m1-19h0m0 8h0m1 15h0m0 17h0m0-42h0m2-8h0m0 11h0m0-13h0m0 25h0m1-6h0m0 10h0m1 7h0m0-36h0m0 1h0m0 18h0m1 14h0m0-10h0m0-16h0m1 5h0m1-2h0m1 16h0m0 5h0m0-17h0m2 10h0m0-6h0m0 18h0m1-20h0m0-3h0m0 3h0m0 13h0m0-15h0m0 8h0m0-17h0m1 35h0m0-2h0m1 6h0m0-19h0m1-33h0m0 37h0m0-2h0m2-28h0m0 8h0m0 23h0m0-40h0m1 25h0m0 16h0m0-21h0m0 40h0m0-10h0m0-6h0m1-6h0m1-14h0m0 3h0m0-19h0m1 28h0m0-3h0m0-28h0m0 22h0m1 16h0m1-23h0m0-2h0m0 22h0m1-30h0m1 34h0m0 12h0m0-33h0m0-8h0m1 25h0m0-6h0m1-23h0m0 55h0m1-43h0m0 9h0m0 7h0m0-14h0m0-7h0m1 23h0m0 22h0m0-29h0m1 12h0m0 3h0m0-14h0m0 3h0m1 18h0m1-20h0m0-26h0m1 26h0m0 1h0m0-27h0m0 17h0m0-25h0m1 52h0m0-42h0m1-7h0m1 37h0m0 8h0m0-17h0m0 8h0m1 0h0m0 4h0m1-21h0m0-6h0m0 12h0m0 26h0m1-15h0m1 5h0m0-15h0m0 12h0m1 28h0m0-38h0m0-24h0m1 18h0m0 3h0m0-10h0m0 7h0m0 0h0m1 15h0m0 8h0m1-21h0m0-1h0m0-14h0m1 21h0m1 0h0m1 5h0m0-24h0m0 1h0m1-5h0m0 22h0m0-9h0m1 5h0m0-22h0m2 8h0m0 29h0m0-12h0m0-7h0m0-25h0m0 25h0m1-18h0m0 28h0m0-14h0m1 10h0m1-6h0m0-10h0m3 18h0m1 1h0m0 12h0m0-29h0m1-14h0m0 40h0m1 9h0m0-28h0m0-1h0m0-1h0m0-9h0m1 8h0m1 21h0m0-24h0m1 20h0m0-7h0m1 2h0m0 8h0m0-2h0m1-20h0m0 31h0m0-37h0m1 31h0m0-30h0m0 36h0m1 6h0m0-55h0m1 22h0m0 6h0m2-7h0m0 20h0m1-10h0m0-13h0m1 6h0m1-3h0m0 19h0m1-13h0m0-6h0m0 23h0m0-7h0m2-8h0m1-14h0m0 20h0m1-12h0m0 14h0m1-20h0m0 35h0m0-27h0m0 16h0m1-8h0m0 6h0m1-21h0m1-3h0m0-11h0m1 29h0m0 10h0m0-23h0m1-78h0m0-2h0m1 18h0m1-13h0m0 4h0m1 5h0m0-3h0m0-16h0m0 7h0m1-5h0m0-10h0m0 15h0m0 4h0m0 1h0m1-8h0m2 6h0m1-4h0m0-4h0m1 4h0m0 15h0m1-22h0m0 9h0m0 3h0m0-5h0m2-2h0m0-22h0m1 26h0m0 23h0m0-27h0m0 4h0m1-8h0m0 9h0m2-30h0m0 28h0m1-9h0m0 5h0m0-5h0m1 16h0m1-5h0m0 5h0m0-12h0m1-2h0m1-7h0m0 15h0m0 6h0m0-15h0m2 5h0m1 21h0m1-36h0m0 6h0m0 31h0m1-20h0m0-14h0m0-3h0m2 25h0m0 3h0m1-6h0m1-15h0m0 1h0m1-11h0m1 28h0m0 4h0m0-11h0m1-5h0m0-4h0m1 68h0m2 7h0m1 18h0m2-8h0m1-7h0m4 15h0m1-4h0m0 4h0m1-12h0m1-25h0m1 32h0m2-5h0m1 1h0m1-74h0m0 14h0m0 11h0m0 0h0m0-29h0m0 15h0m0-22h0m0 35h0m1 17h0m0-12h0m1-20h0m2-12h0m0 54h0m2-44h0m0 26h0m0 5h0m0-46h0m0 25h0m1-13h0m1-4h0m0 32h0m2-14h0m0-35h0m0 49h0m1-9h0m0 10h0m0-4h0m1 5h0m0-16h0m1 16h0m0-29h0m1 24h0m0-16h0m0-6h0m0 9h0m0 9h0m4 7h0m0 0h0m0-31h0m0 15h0m3-1h0m0 15h0m0-38h0m0 34h0m0 7h0m0-26h0m2 7h0m1 24h0m1-30h0m0 33h0m0-54h0m1 47h0m1-22h0m0-9h0m2 15h0m1 16h0m0-12h0m0 15h0m2-27h0m0 0h0m1 9h0m1 6h0m0-25h0m2 0h0m0 27h0m0-25h0m1 9h0m0 12h0m0-21h0m0-11h0m3 22h0m1 7h0m2-31h0m1 14h0m0 22h0m2-24h0m0 8h0m0-4h0m1 11h0m0-6h0m0-14h0m0 26h0m1-15h0m0 10h0m1-16h0m0 21h0m1-8h0m5 0h0m0-9h0m0-8h0m0 6h0m1-8h0m2 31h0m0-39h0m0 44h0m0-17h0m0 0h0m0 1h0m1 0h0m1 13h0m0-7h0m1-23h0m0 37h0m0-25h0m1-2h0m0 0h0m1 6h0m0 2h0m0-14h0m1 22h0m0-18h0m0 6h0m0 1h0m0-15h0m1 40h0m0 4h0m2-49h0m0 42h0m0-26h0m1-11h0m1 14h0m1 10h0m1-20h0m0 48h0m1-53h0m1 42h0m1-34h0m0 9h0m1 12h0m0 22h0m0-53h0m1 32h0m0-2h0m1-9h0m0-4h0m0 13h0m0 49h0m1 8h0m0-8h0m1-3h0m1-21h0m0 30h0m1-5h0m1 0h0m0-2h0m0 8h0m1-26h0m2 4h0m0 18h0m1-12h0m1 10h0m1 1h0m1 5h0m1-1h0m0-10h0m4-82h0m0 50h0m1-16h0m0-9h0m0-18h0m1 26h0m0-6h0m0 9h0m0-7h0m1-1h0m0 30h0m1-26h0m0-25h0m0 20h0m1-14h0m0 10h0m0 3h0m0-1h0m0 6h0m0-17h0m1-27h0m0 45h0m1-10h0m0 28h0m0-12h0m0-7h0m0 12h0m1-15h0m1 18h0m0-32h0m0 27h0m2-9h0m1-18h0m0-5h0m0 44h0m0-17h0m0-7h0m1 7h0m0-3h0m1-23h0m0 4h0m0 7h0m0 33h0m1-22h0m0 6h0m0-21h0m0 33h0m1-34h0m0 1h0m1 14h0m0 10h0m0 10h0m0-19h0m1 4h0m0-2h0m1 30h0m0-46h0m0 3h0m0-6h0m0 4h0m1-4h0m2 31h0m0-59h0m0 36h0m1-5h0m0 34h0m0-25h0m1-2h0m0 0h0m1-18h0m0-1h0m0 21h0m1 6h0m1-16h0m1 9h0m0-3h0m1 19h0m1-25h0m0 31h0m1-14h0m0-6h0m1-3h0m1 5h0m0 8h0m1-20h0m0 6h0m0-12h0m1 49h0m0-36h0m1 3h0m1-10h0m0-12h0m0 28h0m1-10h0m0-15h0m1 6h0m0 1h0m5-5h0m1 6h0m0 35h0m1-34h0m0 11h0m0 35h0m1-22h0m1-24h0m0 33h0m0 1h0m1-66h0m0 25h0m1 18h0m1 8h0m0-5h0m0-17h0m1-11h0m1 21h0m1 32h0m0-6h0m0-3h0m1-19h0m0 19h0m0-16h0m1 6h0m0-12h0m1 0h0m1 19h0m1-28h0m2 11h0m1 3h0m1-29h0m0 16h0m1 7h0m0 15h0m1-15h0m0-15h0m0 28h0m0 12h0m1-34h0m0 30h0m1 13h0m0-23h0m1 5h0m1-29h0m0 20h0m0 8h0m0-6h0m1-8h0m1-46h0m0 32h0m1 24h0m1-16h0m0 10h0m0 13h0m0-26h0m1-7h0m0 43h0m1-26h0m0 25h0m0-44h0m0 16h0m0 10h0m0 9h0m1-11h0m1 15h0m1-5h0m0-23h0m0 12h0m0-18h0m1 26h0m0 13h0m1-8h0m1-42h0m0 30h0m1 30h0m0-32h0m0-13h0m1 6h0m2 13h0m0-8h0m1-9h0m0 37h0m0-16h0m1-14h0m1 4h0m0-10h0m1 15h0m0-1h0m0 7h0m0-5h0m1 6h0m1-10h0m0 4h0m1-46h0m0 20h0m0 41h0m1-15h0m0-10h0m0 5h0m0 7h0m1-20h0m0 39h0m1-45h0m0 32h0m1 6h0m0-28h0m0 27h0m0-5h0m0 3h0m1-22h0m0 0h0m0 10h0m1 5h0m0-10h0m1-2h0m0 9h0m0 9h0m2-23h0m0-15h0m1-4h0m1 6h0m0 2h0m0 21h0m0-17h0m0 28h0m1-6h0m0-32h0m1 36h0m1-3h0m0-13h0m0 9h0m1-11h0m0 21h0m0-30h0m0 2h0m1 25h0m0 1h0m0-37h0m0 37h0m1-25h0m0 8h0m1 6h0m0 18h0m0-17h0m1 12h0m0-3h0m1-41h0m0 30h0m1-26h0m0 18h0" stroke="#000" stroke-width="14" stroke-linecap="round" fill="none"/>
<path transform="scale(0.25)" d="M784 416h0m70-2h0m31 0h0m21-3h0m102 5h0m133-5h0m0 10h0m208-7h0m80-95h0m-461 129h0m712 24h0m154-56h0m142 6h0m64 17h0m14-29h0m34-95h0m224 117h0m54-21h0m76 2h0m8-2h0m10-1h0m10-1h0m18 3h0m-4 2h0m24 2h0m-4 2h0m-56 37h0m202-152h0m164 12h0m16 3h0m80-2h0m40-2h0m52 3h0m16 3h0m68-1h0m23 119h0m149-122h0m14 172h0m74-186h0m0 17h0m92-3h0m16-7h0m16 5h0m184 0h0m184 5h0m136-7h0m40 6h0m-8 91h0m48 3h0m184-96h0m52 3h0m148 1h0m48-4h0m52 2h0m12-3h0m16-1h0m-8 6h0m100-4h0m68-2h0m12 0h0m24 4h0m16 0h0m20-2h0m104-8h0m0 10h0m84-81h0m6 117h0m6 2h0m6 2h0m-12 3h0m8 2h0m-8 4h0m14-2h0m2-6h0m76-5h0m8 2h0m8-1h0m-12 4h0m-4 12h0m6 5h0m-14 58h0m-4107 316h0m104-249h0m628 687h0m41-659h0m71 112h0m2872-63h0m505 52h0" stroke="#ffa500" stroke-width="14" stroke-linecap="round" fill="none"/>
<line x1="105.5" y1="86.72" x2="1360.45" y2="86.72" stroke="#008000" stroke-width="2.08"/>
<line x1="162.5" y1="321.5" x2="162.5" y2="35.5" stroke="#800080" stroke-width="2.08" stroke-dasharray="2.08 3.44"/>
<line x1="1238.0" y1="321.5" x2="1238.0" y2="35.5" stroke="#800080" stroke-width="2.08" stroke-dasharray="2.08 3.44"/>
<line x1="1303.0" y1="321.5" x2="1303.0" y2="35.5" stroke="#800080" stroke-width="2.08" stroke-dasharray="2.08 3.44"/>
</g>
<g clip-path="url(#c2)">
<path transform="scale(0.25)" d="M650 2053h0m1-10h0m1 79h0m0-84h0m0 51h0m1 38h0m0-25h0m0 31h0m1-33h0m0-27h0m1-73h0m1 76h0m1 10h0m1 58h0m0-126h0m1 40h0m0-13h0m0-37h0m0 46h0m1-11h0m0 104h0m0 14h0m0-13h0m1 1h0m0-34h0m0 34h0m2-68h0m2-67h0m0 158h0m0-79h0m1 109h0m0-65h0m1-99h0m0 141h0m0-130h0m0 15h0m0 11h0m1-2h0m0 7h0m0 160h0m0-154h0m0-14h0m1-95h0m0 132h0m0-16h0m1-41h0m0-93h0m0 177h0m1-29h0m0-87h0m0 23h0m0 148h0m2-185h0m1 35h0m0 51h0m0 131h0m0-110h0m0-66h0m2 44h0m0 103h0m0-82h0m1 37h0m0-59h0m0-17h0m0-34h0m1 103h0m0-10h0m0-68h0m0-77h0m0 292h0m1-272h0m0 118h0m1 8h0m0-76h0m0-18h0m0 117h0m0-123h0m0 93h0m1-21h0m0-31h0m0 45h0m0 1h0m1-58h0m0 101h0m0 87h0m0-113h0m1-23h0m0-99h0m0 35h0m0-54h0m0 97h0m1 99h0m1-9h0m2-136h0m0 79h0m0 6h0m0-9h0m0-71h0m1 71h0m0 21h0m0-23h0m1 46h0m0 22h0m0-61h0m0 19h0m1-24h0m1-43h0m1-65h0m0 86h0m0-24h0m1-78h0m1 116h0m0-22h0m0-20h0m1 68h0m0 48h0m0-52h0m0-98h0m0 136h0m0-192h0m1 88h0m2 82h0m0-26h0m1-85h0m0 32h0m0 62h0m0-85h0m2-17h0m1 83h0m0 30h0m0 104h0m1-137h0m0 118h0m1-76h0m1-148h0m0 101h0m0-46h0m1 7h0m0 96h0m1-117h0m1 119h0m0 25h0m0-55h0m0 44h0m2-27h0m0-57h0m0 125h0m0-72h0m1-23h0m0-26h0m0 70h0m0-63h0m1 12h0m0 80h0m0-21h0m1-179h0m0 102h0m0-48h0m2-32h0m0 70h0m1 42h0m0-42h0m0-18h0m0 105h0m1-212h0m0 107h0m0 21h0m0-14h0m1 22h0m0-32h0m0 24h0m1-49h0m0 141h0m1-104h0m0 31h0m0-9h0m1 11h0m1-51h0m0 79h0m0-83h0m0 46h0m1-20h0m0 68h0m0-64h0m0-45h0m1 63h0m0-2h0m1-23h0m1-12h0m0-35h0m0 97h0m0-17h0m1 10h0m0 44h0m0-69h0m1 38h0m1-132h0m0 149h0m0 4h0m1 11h0m0-181h0m1 92h0m0 35h0m1-76h0m0 91h0m1 1h0m0-27h0m0 141h0m1-61h0m0-87h0m0 40h0m0 62h0m0-97h0m0-39h0m1 126h0m0-127h0m1 27h0m0 71h0m0-139h0m1 43h0m0 116h0m0-62h0m1-47h0m1-18h0m1 16h0m0-40h0m1 88h0m1-152h0m0 195h0m1 13h0m0-36h0m0-71h0m0 126h0m1-144h0m0-13h0m0 170h0m1-123h0m0 14h0m1 37h0m0-59h0m0 27h0m1-23h0m0 5h0m0 104h0m1-4h0m0-1h0m0-122h0m0-19h0m0 98h0m0 18h0m0 60h0m0-115h0m1-15h0m0-10h0m1 121h0m1-158h0m0 74h0m0-37h0m1 64h0m1-25h0m0-59h0m0 105h0m1-43h0m0-63h0m0 105h0m0-101h0m1 92h0m0-90h0m0-4h0m1-15h0m0 27h0m0 89h0m0-104h0m0 84h0m1 98h0m0-128h0m1-75h0m0 122h0m0-37h0m0-45h0m0 119h0m0-42h0m0 81h0m0-14h0m0-159h0m0 90h0m1 70h0m0-79h0m0 32h0m0-64h0m0-69h0m0 83h0m1 133h0m0-117h0m0 80h0m0-116h0m0-1h0m0 3h0m0-11h0m0 92h0m2-73h0m0 6h0m0 68h0m1-44h0m0-76h0m1 88h0m0-9h0m0 144h0m1-226h0m0 27h0m0 103h0m1-10h0m0-170h0m0 162h0m0-4h0m1-111h0m0 123h0m0-112h0m0 77h0m0-24h0m1-54h0m0-1h0m0 26h0m0 105h0m0-137h0m0 56h0m1 14h0m0 26h0m0-103h0m0 46h0m2-15h0m0 132h0m0-28h0m0-91h0m1 56h0m0 20h0m0-44h0m0 0h0m0-50h0m0-37h0m0-7h0m0 90h0m1-140h0m1 124h0m0 62h0m0-76h0m1 51h0m1-92h0m0 92h0m1-7h0m1 28h0m1 48h0m1-70h0m0-71h0m1 67h0m0-87h0m1 162h0m0-117h0m0 12h0m0-79h0m1 10h0m1 18h0m1 112h0m0-2h0m1-29h0m0-62h0m1 63h0m0-63h0m1 64h0m0 50h0m0-12h0m0-143h0m0 47h0m1 132h0m0-52h0m0-84h0m0-14h0m1-8h0m0 53h0m0-28h0m1-15h0m0 19h0m1-43h0m0 41h0m0-25h0m1 49h0m1 83h0m0-73h0m0-40h0m0 37h0m0-108h0m1 79h0m0-14h0m1 37h0m0-63h0m0-29h0m0-28h0m0 107h0m2 13h0m0 39h0m0-8h0m0 46h0m0-93h0m1 73h0m0-81h0m0 28h0m1 135h0m0-219h0m0 140h0m0-109h0m0 38h0m0 8h0m1 29h0m0-125h0m1 73h0m0 16h0m0 17h0m0 50h0m1-21h0m1 28h0m0-51h0m0-111h0m1-9h0m0 131h0m0 31h0m1-6h0m0-132h0m0 82h0m0 59h0m1-47h0m0-64h0m0 33h0m0 78h0m1-42h0m1-23h0m2 83h0m0-58h0m0-130h0m3 116h0m0-104h0m0 57h0m0 40h0m0 9h0m0 67h0m0-90h0m0 54h0m0-68h0m1 91h0m0-15h0m1-6h0m0-87h0m1 35h0m2 11h0m0-20h0m1 25h0m0 80h0m1-60h0m0 14h0m0-144h0m0 108h0m1 28h0m0-98h0m0 39h0m1 74h0m0 12h0m0-148h0m1 238h0m1-246h0m0 33h0m0 102h0m0 31h0m0-64h0m1-34h0m0 77h0m0-74h0m1 27h0m0 5h0m0 30h0m0 33h0m1-17h0m1-41h0m0 17h0m0 84h0m1-190h0m0 34h0m0 119h0m2-123h0m0 50h0m1 10h0m0 75h0m1-46h0m0-22h0m0 29h0m1-82h0m0 109h0m0-57h0m1-1h0m0 80h0m1-229h0m0 137h0m0-40h0m0 2h0m1 73h0m0-55h0m0 6h0m0 80h0m1-83h0m0-43h0m1 16h0m1 127h0m0-132h0m1-70h0m0 50h0m0 99h0m1 87h0m1-115h0m0 89h0m0-101h0m1 79h0m0-86h0m0 24h0m1-91h0m0 67h0m0-5h0m1-22h0m0 36h0m2 1h0m1 61h0m0 3h0m1-77h0m1 58h0m0-99h0m0 136h0m0-74h0m0 38h0m0-87h0m1 57h0m1 50h0m0-110h0m0 54h0m1 92h0m0-33h0m1-17h0m1-42h0m0 39h0m0 26h0m1-90h0m1 9h0m0 130h0m1-72h0m0-50h0m0-21h0m1 115h0m0-41h0m0-131h0m0 77h0m1-63h0m0 248h0m1-288h0m0 148h0m1 29h0m0-67h0m1-16h0m0-48h0m0 113h0m0-83h0m2-7h0m0 0h0m1 114h0m0-1h0m0-82h0m0-11h0m0-40h0m0 59h0m1-32h0m0 34h0m0-5h0m0 42h0m1-19h0m0-96h0m0 96h0m1-2h0m0-8h0m0 0h0m1 40h0m0-179h0m0 228h0m1 2h0m0-129h0m0 154h0m0-68h0m0-60h0m0 11h0m1-72h0m0 56h0m0-1h0m1-4h0m0 57h0m1-72h0m1 48h0m0-81h0m1 35h0m0 100h0m0-67h0m1-51h0m0 104h0m0-20h0m0-110h0m1 138h0m3-113h0m0 41h0m0-6h0m0 54h0m1-33h0m0-40h0m0 95h0m0-97h0m1-44h0m0-5h0m1 47h0m0 123h0m0 21h0m1-155h0m1-76h0m2 150h0m0 31h0m0-42h0m0-17h0m1 73h0m0-82h0m1-57h0m1 70h0m0 48h0m0-133h0m0 191h0m1-212h0m0 93h0m0 25h0m1-50h0m0 176h0m0-81h0m1 38h0m1-67h0m0-8h0m0-78h0m0 39h0m0 27h0m0 36h0m1-108h0m0 186h0m1-138h0m1-146h0m0 145h0m1 11h0m0-34h0m1 45h0m0 126h0m1-86h0m0-114h0m1 204h0m1-139h0m0 21h0m0-79h0m1 58h0m1 31h0m0 34h0m0-142h0m1 21h0m0-27h0m0 146h0m0-10h0m1-6h0m0-145h0m0 159h0m1-39h0m1-31h0m1-25h0m1 111h0m0-143h0m1 6h0m1 128h0m0-230h0m0 104h0m1 40h0m0 74h0m1-139h0m1 93h0m1 124h0m0-120h0m1-24h0m0-15h0m0 23h0m0 33h0m1-58h0m1 26h0m0 20h0m0-130h0m1 252h0m0-62h0m1 1h0m0-72h0m0-44h0m1 31h0m1 59h0m0-83h0m1 160h0m0-123h0m0-13h0m0 76h0m1 14h0m1-60h0m2-11h0m0 23h0m0-7h0m1-115h0m0 36h0m0 132h0m1-90h0m0 17h0m0-19h0m0 43h0m0 31h0m1-14h0m0-37h0m1 16h0m1-77h0m1 137h0m0-37h0m0-16h0m1-127h0m0 15h0m1 37h0m0 47h0m0-47h0m1-69h0m0 116h0m0-41h0m0 128h0m1-66h0m0-6h0m0-65h0m1 63h0m1 9h0m0 34h0m0 0h0m1-28h0m1-7h0m0 17h0m0-24h0m0-46h0m0 62h0m1-47h0m0-56h0m0 73h0m0 5h0m1-17h0m1-4h0m0 60h0m0-20h0m1-48h0m0-64h0m0 57h0m0-9h0m1 89h0m1-50h0m0 141h0m1-254h0m0 256h0m0-144h0m0-43h0m1 56h0m0-93h0m0 62h0m0 92h0m0-24h0m1-96h0m0 40h0m0-41h0m0 68h0m1-36h0m0 173h0m0-109h0m0-127h0m1 114h0m0-19h0m1-62h0m0-4h0m1 37h0m0-2h0m0-23h0m1 41h0m0-28h0m0 46h0m1-75h0m0 115h0m1-57h0m0 79h0m0-29h0m0 63h0m0-125h0m1-59h0m0 62h0m1 129h0m0-245h0m0 41h0m1 132h0m0-148h0m1 93h0m0-85h0m0 96h0m0-23h0m0-8h0m1-37h0m0 81h0m1-47h0m0-34h0m1 166h0m0 35h0m0-128h0m0 23h0m1-25h0m0 36h0m0-11h0m0-20h0m1 90h0m0-106h0m1-116h0m0 159h0m0 3h0m1 90h0m0-189h0m0-1h0m1 39h0m0 29h0m1-31h0m0-34h0m0 26h0m1-33h0m0 18h0m0 14h0m0 16h0m1 56h0m0 87h0m0-86h0m0-102h0m0-13h0m1 21h0m1-57h0m0 116h0m1 14h0m0 3h0m1-103h0m0 96h0m0 12h0m2-85h0m2 37h0m0 74h0m0-54h0m0 11h0m1 28h0m0 1h0m0-57h0m1-32h0m0 3h0m1 87h0m0-53h0m0-38h0m1 99h0m1 42h0m0-72h0m1-122h0m1 57h0m0-7h0m0 37h0m1-72h0m0 85h0m0-51h0m1 36h0m0 25h0m0-20h0m1 51h0m0-11h0m1-16h0m0-40h0m0 131h0m1-30h0m1-156h0m0 4h0m0 110h0m1-20h0m0 69h0m0-132h0m0 45h0m1-53h0m0 177h0m1-83h0m0 41h0m0-49h0m1-81h0m0 165h0m1-46h0m0 4h0m0-28h0m1-61h0m1 28h0m0 121h0m1-178h0m0 25h0m0-54h0m0 39h0m0 16h0m2-71h0m0 28h0m0 22h0m0 46h0m1-102h0m0-13h0m1 130h0m0 23h0m0 102h0m0-250h0m1 119h0m1-6h0m0 60h0m0-134h0m1 55h0m0 40h0m0 11h0m1-29h0m0 47h0m0-48h0m0 0h0m2-50h0m0 5h0m0 23h0m0-20h0m1-41h0m0 18h0m0-39h0m0 149h0m0-38h0m0 132h0m0-205h0m0 135h0m1-142h0m1 12h0m0 67h0m0-98h0m0 72h0m0-37h0m1 60h0m0-68h0m0 67h0m0 24h0m0 5h0m2-19h0m0-95h0m0-42h0m1 119h0m0-18h0m1-33h0m1 74h0m0-57h0m1-134h0m1 144h0m0 93h0m1-49h0m1-83h0m0 117h0m0-68h0m0 71h0m0-170h0m1 137h0m0-14h0m0-59h0m1-34h0m0 74h0m1 21h0m0-30h0m0-35h0m0-10h0m1 44h0m0 77h0m0-70h0m1-32h0m0 47h0m1-37h0m0 37h0m1 18h0m0 46h0m0-50h0m0 6h0m1 5h0m0-50h0m0 16h0m1 47h0m1-23h0m1 28h0m0-84h0m1 14h0m1 26h0m0 9h0m0-19h0m1 27h0m0-35h0m0 11h0m1 18h0m1 12h0m0-10h0m0-49h0m0 58h0m0 58h0m1-20h0m0-28h0m0-75h0m0 95h0m0-41h0m1 17h0m0-41h0m1 44h0m0 15h0m0-166h0m1 79h0m0-35h0m0 0h0m0-7h0m1-24h0m0 156h0m1-74h0m0-12h0m1 34h0m0 3h0m0-17h0m0-10h0m0 36h0m1-55h0m1 59h0m0-36h0m0 4h0m2 6h0m0 5h0m0-37h0m0 137h0m0-37h0m1-32h0m0-9h0m1-39h0m0 55h0m1 9h0m1-66h0m0-34h0m0 94h0m0-39h0m0 14h0m0-52h0m1 112h0m0-99h0m1 128h0m1-135h0m1 1h0m0 60h0m0-26h0m1-123h0m0 37h0m0 26h0m1-5h0m0 96h0m1-18h0m1-22h0m1-26h0m1-41h0m0 54h0m0 43h0m0-9h0m1-117h0m0 99h0m0-29h0m1 20h0m0-20h0m0 54h0m0-14h0m2-34h0m1 76h0m0-60h0m0 99h0m0-47h0m1-127h0m1 142h0m1-47h0m1-101h0m0 209h0m0-90h0m1-97h0m0 82h0m0 77h0m0-141h0m1 63h0m1-11h0m0 17h0m1-12h0m1-1h0m0-44h0m0 15h0m0 41h0m0-128h0m0 95h0m0 25h0m1-17h0m0 38h0m0-23h0m1 117h0m0-223h0m0-3h0m1 179h0m1-159h0m0 68h0m1-18h0m0 3h0m0-8h0m0 107h0m0-85h0m1 71h0m0-100h0m0 41h0m0-71h0m0 61h0m1 37h0m0 74h0m0-110h0m1 78h0m0-76h0m1 30h0m0 89h0m0-137h0m1-48h0m0 105h0m1 71h0m0-55h0m0 119h0m1-125h0m0-100h0m0 60h0m1 23h0m0-123h0m0 36h0m0-26h0m1 167h0m0-21h0m0-13h0m0-20h0m1-21h0m0-97h0m1 89h0m0 12h0m1 14h0m1-25h0m0 36h0m0-17h0m0-45h0m0 19h0m1 78h0m0-41h0m0-99h0m0 8h0m1 13h0m0 54h0m0 6h0m0-163h0m0 148h0m0 7h0m1 22h0m1 28h0m2-50h0m0 51h0m0-86h0m1 19h0m0 9h0m0-12h0m0-41h0m1-73h0m0 60h0m0-80h0m1 157h0m0 46h0m1-50h0m1 15h0m0-104h0m0 29h0m0 99h0m0-24h0m1-161h0m0 124h0m0 175h0m0-299h0m1 149h0m0 33h0m1 12h0m0-22h0m0 15h0m1 12h0m1-40h0m0 10h0m0-41h0m1 34h0m1-21h0m0 27h0m0 55h0m1-67h0m1 8h0m0-43h0m0-3h0m0 40h0m0-98h0m0 98h0m1-74h0m0 36h0m1 143h0m0-171h0m0 159h0m1-85h0m0 111h0m0-165h0m0 95h0m1-65h0m0-32h0m0-15h0m0 4h0m1 130h0m2-71h0m0-84h0m0 0h0m0 81h0m0 67h0m0-135h0m1 36h0m0 30h0m0-17h0m1 16h0m0-25h0m0-49h0m0 68h0m1-35h0m0-63h0m1 214h0m1-56h0m0 23h0m1-2h0m0-198h0m0 72h0m0 80h0m0-50h0m0 84h0m0 19h0m2-14h0m0-189h0m0 109h0m0-57h0m1-28h0m0 114h0m0-81h0m1 58h0m0-97h0m1 5h0m0 133h0m1-112h0m0-42h0m1 132h0m0-10h0m0-90h0m0 176h0m1-134h0m0 78h0m1-44h0m0 75h0m0-31h0m1-26h0m0-31h0m0-21h0m0 1h0m2 72h0m0 5h0m1-101h0m1 148h0m0-104h0m0-39h0m0 100h0m1 41h0m1-8h0m1-94h0m1 46h0m0-100h0m0 15h0m0 14h0m2-69h0m0 194h0m0-33h0m0 58h0m1-161h0m0 113h0m0 0h0m0-167h0m1 141h0m1-49h0m0-61h0m1 145h0m0-28h0m0-10h0m1-10h0m0 2h0m1-94h0m0-9h0m1 113h0m0-44h0m0 33h0m0-70h0m1 17h0m1 97h0m1-103h0m0-31h0m0 66h0m1 13h0m0-20h0m0 46h0m1-41h0m0-74h0m0 127h0m0-7h0m0-160h0m0 118h0m0 0h0m1-30h0m1-15h0m0 52h0m1 25h0m0-87h0m1 71h0m0 22h0m0-45h0m1 14h0m1 113h0m0 18h0m0-243h0m0 144h0m0-18h0m0 80h0m1-62h0m1-38h0m1-60h0m0 90h0m1-7h0m0-33h0m1 121h0m0-144h0m0 51h0m1-69h0m0 81h0m0-114h0m1 66h0m0 0h0m0-47h0m0 20h0m0-1h0m1 39h0m0-25h0m0 2h0m0 50h0m1-30h0m1 119h0m0-178h0m0 41h0m1-14h0m0-16h0m0 77h0m1-94h0m0 140h0m1-38h0m1 21h0m0 15h0m1-145h0m0 114h0m0-111h0m1 116h0m1-58h0m0-39h0m1-68h0m0 126h0m0-68h0m1 89h0m1 49h0m0-40h0m0-38h0m0 82h0m1-76h0m0 33h0m0-71h0m0 133h0m0 19h0m1-183h0m0 119h0m0-111h0m0-1h0m0 95h0m1 20h0m1-128h0m0 20h0m1 28h0m0 20h0m0-2h0m0 61h0m2-81h0m0 83h0m0-72h0m0 37h0m1-7h0m0-13h0m0 87h0m1-158h0m0 69h0m0 83h0m0-162h0m0 69h0m1 19h0m0 67h0m0-32h0m1-68h0m0 41h0m0 0h0m0 89h0m1-160h0m0-14h0m0-40h0m1 186h0m0-25h0m1-55h0m0 13h0m0-55h0m1-19h0m0 155h0m0-25h0m0-127h0m0 52h0m1 77h0m0-83h0m0-30h0m0 191h0m1-120h0m0-12h0m1-92h0m0 71h0m0-6h0m1 105h0m0-14h0m0-131h0m0 72h0m2-102h0m1 97h0m0-2h0m0 45h0m1-48h0m1 118h0m0-124h0m0-71h0m0 46h0m1 101h0m0-231h0m0 91h0m1 53h0m0 122h0m0-9h0m1-104h0m0-32h0m0 107h0m0-57h0m2-12h0m0 34h0m1-20h0m0-77h0m2 104h0m0-12h0m0-7h0m0 1h0m0 57h0m0-186h0m1 159h0m0-31h0m1 62h0m0 3h0m0-78h0m1-74h0m0 27h0m0-23h0m1 132h0m0-41h0m0-37h0m1-65h0m0 53h0m1-6h0m0-28h0m0 39h0m1-23h0m0 20h0m0 17h0m1-37h0m1-6h0m0 53h0m0 41h0m0-23h0m0-68h0m0 35h0m1 56h0m0 55h0m0-185h0m1 95h0m0-28h0m0-5h0m0-32h0m0 142h0m1-67h0m1-94h0m0-24h0m0 111h0m0-28h0m1 18h0m1 77h0m1 4h0m0 10h0m1-96h0m0-94h0m1 95h0m1 49h0m0-21h0m0-124h0m2 40h0m0 65h0m0-14h0m1 46h0m1-19h0m0-45h0m0-20h0m0 71h0m1-74h0m0 50h0m0-62h0m0 128h0m1-84h0m0 76h0m0-83h0m0-6h0m1 118h0m0-84h0m0-87h0m1 70h0m0 168h0m0-187h0m1-9h0m0-16h0m0-2h0m0-87h0m0 277h0m1-88h0m0-166h0m0 196h0m0-26h0m0-77h0m1 93h0m0 10h0m1-162h0m0 192h0m0-86h0m1-96h0m0-2h0m1 158h0m0 19h0m0-121h0m0 87h0m0-104h0m0 109h0m0-6h0m1-103h0m0 0h0m1 27h0m1 42h0m1 104h0m1-73h0m0-143h0m0 7h0m0 51h0m0 104h0m1-125h0m0 90h0m0-36h0m0-76h0m0 93h0m1-87h0m0 69h0m1-178h0m0 187h0m0 59h0m0-108h0m0 24h0m1-59h0m1-14h0m0 26h0m0 66h0m0-31h0m3-49h0m1 103h0m1 6h0m0 16h0m1-4h0m0 43h0m0-104h0m1-10h0m0 179h0m2-78h0m0-135h0m0 99h0m0 25h0m1-121h0m0-81h0m0 32h0m1 51h0m0 43h0m0 23h0m1-147h0m0 48h0m0 101h0m0-22h0m1 63h0m0-58h0m0 53h0m0 50h0m0-62h0m1 5h0m1-19h0m2 27h0m0-70h0m0 30h0m1-52h0m0-5h0m0 89h0m1-65h0m1-14h0m0 7h0m1 122h0m0-112h0m0-91h0m0 133h0m0-67h0m2 17h0m0 49h0m0-142h0m2 185h0m0-95h0m0 6h0m1 6h0m0 78h0m0-89h0m0 10h0m0 104h0m0-133h0m1-1h0m0 55h0m0-143h0m1 132h0m1-52h0m0 183h0m0-25h0m1-70h0m1-29h0m0 29h0m0 2h0m0 25h0m1-64h0m1 24h0m0-92h0m0 148h0m0-32h0m0-1h0m1-16h0m0 10h0m0-114h0m0-14h0m0 113h0m0-69h0m0 8h0m1 83h0m0-117h0m0-52h0m0 135h0m0-55h0m0 165h0m1-38h0m0-152h0m0 37h0m0 74h0m0-73h0m0-32h0m0-6h0m1 69h0m0 93h0m0-38h0m1-16h0m1-21h0m0-88h0m0 136h0m0 22h0m2-128h0m0 33h0m0 59h0m1-216h0m0 127h0m0 131h0m0-102h0m0 63h0m1-110h0m0 128h0m1-33h0m1-93h0m0 90h0m0-26h0m0-8h0m0 61h0m0-129h0m1-56h0m0-13h0m0 199h0m0-102h0m0 6h0m0 41h0m0-68h0m1 122h0m0-154h0m0 98h0m1 45h0m0-74h0m1-20h0m0 68h0m1 42h0m0-69h0m0 86h0m0-92h0m0-20h0m0 24h0m1 129h0m0-114h0m0-26h0m0 23h0m0 30h0m0-19h0m1 20h0m1-149h0m0 81h0m0 106h0m0-76h0m0 68h0m1-150h0m0 132h0m1-91h0m2-51h0m0-14h0m0 184h0m1-10h0m0-163h0m0 146h0m0-67h0m0 29h0m1-7h0m0-79h0m0 103h0m1-87h0m0 75h0m0-28h0m0-39h0m2 135h0m0-127h0m0 7h0m1 81h0m1-148h0m0 143h0m1-71h0m0 84h0m1-40h0m0-16h0m0 38h0m1-67h0m0 140h0m0-188h0m0-27h0m0 64h0m1 97h0m0-54h0m0-5h0m1-91h0m1 70h0m0 25h0m0 5h0m0 60h0m0-12h0m1-76h0m0 15h0m1 133h0m0-256h0m1 85h0m0 21h0m0 50h0m0 41h0m1-26h0m0-22h0m1-18h0m0-61h0m0 63h0m0-111h0m1 115h0m0 119h0m1-133h0m0-26h0m1-49h0m0 43h0m1 110h0m0-59h0m1-16h0m1 98h0m0-115h0m0 66h0m1-25h0m0 32h0m1-124h0m0 71h0m0 83h0m1-28h0m1 11h0m1-12h0m1 14h0m0-28h0m0-66h0m1-40h0m0 115h0m1-161h0m0-42h0m1 153h0m1 70h0m0-71h0m0-3h0m0-89h0m1 3h0m0 74h0m1 46h0m0-35h0m0-141h0m0 194h0m0-25h0m2 27h0m0-82h0m0 45h0m0 68h0m1 35h0m0-134h0m0 61h0m1-149h0m0 103h0m0 80h0m0-93h0m2 114h0m0-86h0m0-39h0m1-22h0m0 44h0m0 34h0m0 2h0m1-4h0m0-45h0m1-46h0m0 56h0m0-69h0m1 43h0m0 8h0m0 62h0m0-90h0m1 118h0m0-111h0m0 114h0m1-97h0m0-19h0m0 74h0m0 3h0m2-93h0m0 128h0m0-80h0m0 39h0m1-126h0m0 90h0m1 31h0m0 17h0m0-58h0m1-34h0m0 65h0m0-25h0m0 22h0m0 79h0m1-28h0m0 2h0m0-52h0m2-20h0m0 0h0m0 108h0m0-51h0m1-60h0m0 54h0m0-24h0m0-50h0m3 64h0m0-67h0m0 38h0m2-44h0m0 16h0m0 6h0m0-37h0m1 48h0m0-1h0m1-24h0m0 50h0m0 101h0m1-181h0m0 119h0m1-32h0m0-4h0m1 1h0m0-15h0m1-27h0m0-35h0m1 106h0m0-126h0m0 29h0m0-77h0m0 107h0m1-30h0m0 56h0m0 131h0m0-221h0m0 109h0m1 24h0m1-86h0m0 100h0m0-57h0m0 35h0m1 44h0m1-144h0m0 2h0m0 42h0m1 96h0m0-87h0m0 7h0m1-30h0m0-98h0m1 120h0m0 35h0m0 29h0m1-85h0m0-6h0m0 7h0m1-51h0m0 134h0m0-82h0m0 12h0m2 99h0m0-106h0m0-59h0m0 6h0m1 73h0m0-73h0m0 27h0m0 59h0m1 54h0m0 73h0m0-137h0m1 20h0m0-104h0m0-3h0m1 143h0m0 7h0m1-175h0m1 126h0m1-6h0m0 7h0m1 57h0m1-105h0m0 4h0m0 121h0m0-143h0m0 74h0m1 51h0m0-137h0m0 53h0m0 47h0m0-74h0m1 12h0m0 88h0m1 12h0m0-51h0m0-105h0m0 45h0m1-46h0m0 32h0m0 47h0m0 11h0m0 44h0m1-133h0m0 45h0m0 46h0m1-134h0m1 185h0m0 17h0m2-111h0m1 46h0m0 31h0m1-5h0m0-66h0m1 17h0m1 81h0m1-112h0m0 112h0m0-121h0m0 225h0m1-136h0m0-103h0m1 8h0m0 43h0m0-115h0m0 101h0m0 38h0m1-34h0m0 44h0m1-44h0m2 193h0m0-90h0m0-124h0m1 14h0m0 40h0m0-80h0m0 29h0m0 51h0m0-36h0m1-66h0m0 92h0m1-11h0m1 77h0m1-132h0m0 70h0m1-21h0m0-52h0m0 161h0m0-16h0m0-57h0m1 0h0m0 2h0m0-2h0m1-25h0m0 68h0m0-150h0m2 156h0m1-109h0m0 45h0m0 68h0m0-171h0m0 73h0m0 159h0m0 13h0m1-130h0m0-71h0m0 111h0m1-73h0m0-16h0m0 10h0m1 55h0m1 63h0m1-82h0m1-5h0m0 27h0m0-24h0m0 35h0m1 15h0m0-149h0m0 27h0m1 80h0m0-18h0m0-34h0m0 49h0m1 37h0m0-104h0m0 157h0m3-47h0m1-169h0m1 216h0m1-26h0m0-140h0m0 54h0m1-13h0m0 41h0m0-31h0m0-78h0m0 78h0m1-35h0m0 125h0m0-118h0m1 5h0m0-20h0m1 6h0m0 65h0m0-116h0m0 147h0m1-68h0m0 135h0m1-4h0m1-59h0m0 29h0m0-87h0m0-11h0m1 69h0m0 26h0m0-10h0m1-85h0m1 95h0m1 60h0m0-100h0m0 17h0m0 10h0m0-61h0m0 89h0m0 14h0m0-167h0m0 145h0m1-58h0m0-74h0m0-116h0m0 139h0m0 15h0m1-43h0m0 24h0m0 139h0m0-155h0m1 68h0m0-73h0m0 58h0m1-2h0m0 31h0m0-106h0m1-29h0m0 137h0m1-183h0m0 246h0m0-129h0m0-45h0m0 25h0m2 28h0m0 32h0m1 14h0m1-104h0m1 20h0m0 16h0m0-3h0m1 208h0m1-189h0m0 61h0m3-86h0m0 32h0m0-37h0m1-36h0m1 165h0m0-34h0m0-57h0m0 3h0m1-33h0m0 133h0m0 0h0m1-200h0m0 105h0m0-57h0m0 108h0m1-108h0m0 61h0m0-73h0m1 36h0m1 38h0m0 47h0m0-68h0m2-10h0m0-115h0m0 225h0m1-43h0m0 12h0m1-109h0m0 75h0m0 28h0m0-27h0m1-6h0m1-109h0m1 94h0m0-35h0m1 36h0m0 55h0m1-59h0m0-16h0m0 18h0m0-25h0m1 35h0m0-3h0m0 54h0m0-9h0m0-45h0m0 6h0m0-51h0m1 79h0m0-89h0m0 29h0m0 34h0m1 62h0m0 7h0m1-69h0m0-22h0m0 16h0m0 3h0m1-16h0m0 11h0m0-40h0m1 39h0m0 159h0m1-102h0m0-17h0m0-76h0m0 75h0m0-82h0m0 77h0m1-65h0m0-72h0m1 82h0m0 19h0m0 36h0m0-76h0m1-1h0m0 49h0m1 37h0m0-124h0m0-29h0m0 118h0m0-23h0m0 93h0m0-37h0m1-93h0m0 41h0m1 17h0m0-4h0m0 7h0m0-99h0m0 33h0m1 62h0m1 85h0m1-122h0m0 84h0m0-77h0m0 105h0m0-137h0m0 26h0m1-39h0m0 63h0m1-11h0m0 31h0m0-147h0m0 155h0m0 4h0m1-16h0m0 19h0m0 81h0m1-41h0m1-45h0m0-18h0m0-11h0m1 158h0m0-175h0m1-52h0m1-6h0m0 117h0m1-41h0m0 103h0m0-112h0m0 63h0m1-101h0m0 60h0m1-20h0m0 13h0m1-12h0m0 15h0m1 80h0m0 58h0m0-145h0m0-48h0m1 35h0m0 22h0m0 121h0m0-145h0m1 76h0m0-100h0m1 6h0m0 29h0m0-65h0m1 77h0m0 15h0m2-111h0m0 32h0m0 87h0m0-81h0m2 6h0m0-50h0m0 183h0m1-87h0m0-2h0m0-2h0m0 40h0m1-14h0m1 7h0m0-62h0m0-72h0m1 177h0m0-147h0m1-4h0m0 119h0m1-23h0m1 36h0m0-40h0m1 75h0m0-99h0m0-22h0m0 52h0m0-101h0m0-22h0m1 184h0m0-134h0m1 4h0m2 48h0m0 47h0m0-91h0m1 16h0m0 89h0m0-58h0m0-46h0m0 35h0m1 13h0m1-64h0m0 35h0m0 113h0m0-90h0m0-41h0m1 51h0m0 121h0m0-169h0m1 49h0m0-30h0m0 37h0m0-193h0m0 243h0m0-72h0m1-7h0m0-32h0m1-57h0m1 101h0m0 53h0m1-107h0m0 107h0m0-105h0m0 7h0m2 91h0m0 17h0m0-114h0m0 36h0m1 36h0m0-28h0m1 71h0m0-11h0m0-56h0m1 15h0m0-58h0m0 3h0m0 161h0m1-154h0m0 44h0m0 68h0m2-220h0m0 97h0m1 64h0m0-3h0m0-152h0m0-10h0m1 163h0m0-61h0m1 100h0m0-1h0m0-158h0m0 79h0m0-76h0m0-17h0m0 132h0m0-42h0m1 109h0m0-107h0m1 26h0m1 112h0m0-117h0m0 21h0m1 93h0m0-185h0m0 40h0m0 61h0m0-2h0m0-52h0m1 52h0m0-19h0m3-8h0m0-85h0m1 151h0m0-24h0m0-39h0m0-13h0m0 10h0m0-10h0m1 29h0m0-29h0m0-51h0m0 140h0m0-58h0m1-51h0m0 78h0m1 4h0m0-44h0m0-31h0m0-12h0m1-27h0m0 36h0m1 86h0m0-26h0m0-66h0m0 14h0m1 59h0m0-40h0m0 25h0m0 51h0m1-3h0m0-59h0m0 11h0m0-90h0m1 18h0m0 0h0m1 49h0m0-143h0m0 170h0m2-52h0m0 177h0m0-212h0m0 18h0m1 6h0m1-17h0m0 59h0m0 13h0m1 14h0m0-11h0m1 41h0m0 8h0m0-98h0m1-29h0m0 30h0m0-62h0m0 52h0m1 53h0m1-26h0m0 98h0m0-129h0m1 39h0m0-35h0m0-25h0m0-6h0m1 82h0m0 68h0m1-55h0m1 73h0m1-106h0m0-42h0m0 65h0m0 28h0m1-72h0m0-28h0m0-39h0m0 261h0m1-154h0m0-1h0m1-14h0m0-51h0m0 44h0m1-19h0m1 68h0m0 9h0m1-47h0m0-1h0m0 16h0m2 32h0m0 100h0m0-97h0m0-58h0m0 115h0m1-129h0m1-12h0m0-64h0m0 185h0m0-75h0m0-72h0m1 158h0m0-78h0m0 120h0m1-107h0m0 32h0m0 34h0m0-60h0m0-142h0m1-31h0m0 111h0m1-30h0m0-12h0m1 47h0m0-46h0m0 72h0m0 12h0m1-129h0m0 97h0m1 24h0m0-102h0m0 92h0m0-20h0m1-78h0m1 139h0m0-82h0m0 25h0m0 116h0m1-77h0m1-90h0m0 0h0m1 132h0m0-145h0m1-49h0m1 173h0m1-173h0m1 96h0m0-56h0m0 199h0m0-16h0m0-142h0m2-1h0m0 107h0m0-27h0m1-18h0m0 98h0m0-142h0m0 114h0m0-37h0m0-131h0m0 126h0m1-69h0m0-80h0m1 126h0m1-68h0m1-49h0m0 63h0m0-36h0m1 150h0m0-86h0m0 111h0m1-105h0m0-9h0m1-87h0m0 62h0m0 144h0m1-98h0m0 61h0m0 0h0m0-46h0m0-70h0m1 90h0m0-11h0m1-68h0m0 12h0m0 53h0m0-94h0m0 93h0m1-11h0m0 27h0m1-93h0m0-39h0m1 136h0m0-46h0m0 7h0m1-32h0m0 62h0m1-72h0m0-14h0m0 136h0m1-46h0m0-96h0m1 141h0m0-147h0m1 137h0m0-114h0m1 117h0m0-100h0m0 175h0m0-66h0m1-76h0m1 28h0m0-77h0m0-11h0m1 103h0m0-76h0m1 22h0m0 106h0m0 1h0m1-80h0m0-78h0m0-31h0m1-61h0m0 90h0m0-16h0m0-14h0m0 18h0m1 61h0m1-39h0m0 84h0m2 16h0m1-155h0m1 70h0m0-63h0m1 41h0m0 150h0m0-144h0m1 34h0m0 40h0m1-31h0m1 5h0m1-11h0m0 116h0m0-134h0m1 162h0m0-141h0m0-51h0m0 103h0m0-121h0m0 27h0m0 123h0m1-112h0m0 138h0m1-86h0m0-62h0m0 57h0m1 64h0m1 12h0m0-121h0m1 52h0m0-78h0m0 55h0m0 6h0m1-59h0m0 36h0m0 52h0m2-51h0m0-12h0m0 130h0m0-69h0m0 69h0m1-130h0m1 5h0m0 66h0m0-32h0m1-25h0m0-12h0m2 24h0m0 135h0m0-91h0m1-63h0m0 67h0m0-89h0m1 59h0m0 7h0m1-97h0m0 132h0m0 66h0m1-113h0m0-47h0m0 21h0m0 56h0m1 16h0m0 5h0m0-91h0m1 79h0m1-34h0m2-32h0m0-3h0m1 10h0m0 1h0m0 54h0m0-95h0m1 83h0m0-79h0m0-3h0m1 53h0m0 20h0m2-88h0m0 102h0m0-42h0m0-122h0m1 114h0m1 60h0m0-40h0m0-116h0m0 163h0m0-73h0m1-26h0m0 67h0m0 9h0m0-87h0m1 50h0m0 18h0m0-60h0m1 36h0m0-16h0m0-16h0m1 89h0m1-76h0m1-21h0m0 25h0m0-54h0m0-9h0m1 72h0m1 60h0m0-172h0m1 217h0m0-54h0m0-99h0m0 27h0m1-85h0m0 145h0m0-118h0m0 9h0m0 63h0m0-18h0m0 31h0m1-14h0m0 35h0m1 2h0m0 9h0m0-4h0m0 25h0m1-88h0m0-45h0m0 89h0m0 20h0m1 40h0m0-2h0m1-207h0m0 90h0m0 19h0m1-66h0m1 120h0m1 31h0m0-42h0m1-67h0m0 190h0m0-41h0m0-180h0m1 169h0m0-49h0m0-116h0m1 96h0m0-98h0m0 62h0m0-21h0m2 54h0m0-38h0m0 81h0m1-13h0m0-115h0m1 135h0m1 43h0m1-86h0m0-6h0m1-85h0m0 96h0m1-32h0m0 62h0m0 13h0m1-47h0m0-7h0m1 6h0m0-2h0m0-31h0m1 4h0m0-35h0m0 56h0m0-55h0m0 46h0m0-25h0m1 110h0m1-141h0m0 45h0m0-25h0m1 104h0m1-53h0m0 76h0m0-180h0m0 77h0m0 54h0m1-2h0m3-5h0m0-44h0m1 35h0m0-16h0m0-19h0m1 40h0m0 57h0m0-187h0m0 117h0m1-59h0m0-4h0m0 103h0m0-113h0m1 139h0m0-127h0m1 51h0m0 9h0m0-51h0m1 41h0m0-189h0m0 238h0m0 20h0m1-97h0m0 23h0m0-65h0m0 84h0m1-100h0m0-21h0m0 109h0m0-46h0m1-42h0m0 22h0m0 90h0m1-86h0m0 29h0m0 101h0m0-165h0m3 52h0m0 0h0m1 42h0m1 9h0m0 4h0m0-84h0m0 91h0m0 21h0m0 8h0m2 9h0m0-100h0m0-47h0m0 125h0m1-22h0m1 67h0m0-176h0m1 47h0m0 86h0m0-145h0m0 112h0m1 81h0m0-96h0m0 82h0m0-144h0m0 100h0m1-19h0m0 16h0m1-28h0m0 2h0m0 47h0m0-176h0m0 156h0m0-65h0m0 117h0m1-42h0m1-103h0m0 92h0m0-19h0m0-59h0m1-52h0m0 210h0m1-129h0m0-43h0m1-62h0m0 114h0m0 80h0m0-22h0m0-42h0m1 33h0m0-74h0m0 134h0m1-82h0m1-23h0m0 107h0m0-134h0m0 36h0m1-79h0m0 54h0m0 40h0m0-8h0m1-4h0m0-30h0m0 12h0m0 32h0m0-171h0m0 148h0m0 85h0m1-149h0m0 40h0m1 121h0m0-68h0m1 38h0m0 3h0m1-83h0m0 69h0m0-30h0m1-104h0m2 211h0m1-140h0m0 118h0m0-96h0m0-50h0m0-35h0m1 180h0m0 64h0m1-260h0m1 88h0m0 53h0m1-50h0m0-78h0m0 115h0m1-30h0m0 29h0m1-36h0m0-60h0m0 133h0m0 6h0m1-12h0m1-85h0m0-52h0m0 25h0m0-25h0m0 131h0m1-84h0m1-78h0m0 89h0m0-34h0m0 49h0m0-65h0m1 26h0m0 69h0m1-77h0m0 53h0m2 3h0m0-38h0m0-31h0m1 46h0m0-85h0m1-2h0m1 99h0m0 27h0m0-61h0m1 38h0m0-48h0m0 22h0m1 3h0m0 11h0m0-36h0m1 75h0m0-1h0m1-72h0m1 51h0m0 21h0m1 29h0m0-69h0m0 127h0m1-205h0m0 77h0m0 8h0m0 27h0m0-60h0m1 30h0m0-73h0m0 143h0m2-106h0m0-38h0m1 58h0m0-134h0m0 111h0m0-2h0m1 181h0m0-125h0m0-103h0m1 69h0m0 29h0m0-4h0m1-35h0m0 14h0m0 122h0m1-100h0m1-44h0m1 122h0m0-136h0m0 124h0m0-112h0m0-18h0m1 49h0m0 40h0m1-68h0m0 17h0m1 106h0m0-43h0m0-57h0m2-34h0m0-27h0m1 39h0m0 18h0m0 78h0m0-49h0m1 28h0m0 52h0m0 66h0m1-164h0m0 73h0m1-39h0m1-66h0m1 11h0m0 31h0m1 23h0m0-67h0m0-54h0m1 107h0m0 8h0m0 78h0m0-112h0m0 127h0m1-124h0m1-82h0m0 110h0m0-64h0m0 193h0m1-185h0m0 92h0m0-43h0m1 27h0m0 23h0m0-144h0m0 96h0m1 22h0m1-101h0m0-7h0m1 203h0m3-58h0m0-2h0m0-100h0m0 56h0m1-29h0m0-15h0m0 40h0m0-141h0m1 62h0m0 45h0m0 123h0m0-47h0m0-77h0m0-43h0m0 57h0m1-33h0m0-46h0m1 184h0m0-126h0m2-9h0m0 34h0m1 2h0m1-86h0m0 108h0m0-30h0m1 50h0m0-117h0m0 106h0m1-109h0m0 33h0m0 123h0m1-46h0m0-75h0m0-19h0m1-56h0m0 50h0m2 8h0m0 95h0m2-17h0m0-47h0m0-82h0m0 182h0m0-213h0m0 155h0m0 54h0m1-108h0m0 47h0m0 29h0m0-106h0m1 93h0m0-30h0m0 66h0m0-124h0m2 172h0m0-192h0m0 158h0m0-70h0m0 4h0m1-60h0m0-65h0m0 54h0m1 60h0m0 73h0m0-141h0m1 119h0m0-49h0m0 52h0m1-116h0m1 16h0m0 122h0m1-70h0m0 1h0m1-84h0m0 82h0m0-21h0m0-73h0m1 24h0m0 140h0m0-194h0m0 156h0m1 20h0m0-64h0m1-37h0m0 62h0m0-77h0m2 45h0m0-25h0m0-77h0m2 112h0m0-35h0m0-56h0m1 13h0m0-4h0m0 75h0m0-17h0m1 56h0m0 25h0m2-92h0m0 117h0m0-132h0m0 45h0m1 22h0m0-15h0m0 13h0m1-52h0m0 92h0m1-41h0m1-44h0m1-5h0m0 132h0m0-186h0m0 139h0m1 25h0m0-51h0m0-13h0m1 19h0m0-83h0m0 101h0m0-19h0m0-15h0m1 46h0m2-36h0m0-101h0m1-12h0m0 40h0m0 12h0m0 79h0m0-41h0m0-102h0m1 86h0m0-25h0m0-49h0m0 103h0m1-39h0m1 12h0m0 21h0m0 90h0m1-45h0m0-90h0m0 161h0m0-190h0m0-3h0m0 105h0m0-24h0m1 63h0m0-141h0m0 96h0m0 25h0m2 22h0m0-113h0m2 114h0m0 0h0m0-207h0m1 127h0m0-127h0m1 103h0m0 52h0m0 1h0m1-78h0m1-6h0m1-27h0m1-25h0m1 183h0m0-99h0m0-2h0m2 84h0m1-10h0m0 46h0m1-96h0m0 76h0m0-183h0m0 91h0m1-5h0m0 22h0m1-105h0m0 107h0m0-45h0m0 21h0m0 84h0m0-59h0m1-13h0m0-11h0m0-29h0m1 35h0m0-35h0m0 71h0m1 32h0m0 7h0m0-94h0m1-45h0m0 115h0m0 77h0m1-120h0m1 51h0m1-103h0m1 50h0m0 49h0m0-70h0m0 6h0m1-4h0m0 79h0m1-182h0m0 174h0m0-70h0m1-68h0m0-41h0m1 124h0m0-52h0m1 62h0m1 13h0m0-31h0m0 76h0m0-100h0m0 141h0m0-41h0m1-82h0m1-57h0m0 91h0m0 87h0m0-155h0m1 166h0m0 1h0m0-113h0m1 5h0m0 25h0m0 3h0m0-58h0m0 6h0m1 50h0m0 50h0m0-114h0m1 27h0m0 108h0m0-229h0m0 152h0m0 102h0m0-78h0m1 23h0m0 92h0m0-200h0m0 89h0m1 3h0m0-71h0m1 9h0m0 25h0m1-80h0m0 30h0m0 109h0m1-82h0m0 51h0m1-43h0m0-27h0m1 11h0m0-5h0m0 108h0m0-62h0m0-17h0m0 51h0m2 14h0m0 30h0m1-46h0m0-76h0m1 34h0m0 26h0m0 24h0m1-86h0m0 74h0m0 2h0m1-101h0m0 36h0m0 7h0m1-19h0m1 52h0m1-109h0m0 97h0m1-82h0m0 154h0m0-120h0m1 186h0m1-141h0m0 70h0m1-28h0m0-69h0m1 20h0m0-20h0m1 10h0m0 37h0m1-43h0m1-23h0m1-13h0m1 114h0m0-144h0m0 103h0m0-36h0m0 15h0m1-82h0m0 99h0m0-14h0m1-30h0m0 34h0m0 3h0m0-2h0m1-26h0m1-119h0m0 100h0m1 63h0m1-7h0m0-17h0m1 21h0m0-13h0m0-14h0m0-49h0m0 101h0m1-163h0m0 191h0m0-47h0m1-71h0m0-28h0m0 72h0m1-24h0m2-19h0m1 7h0m0-13h0m0 91h0m1 46h0m1-162h0m0 77h0m0-18h0m1 132h0m0-99h0m0-47h0m1 51h0m0 37h0m1 70h0m0-197h0m1 37h0m0 37h0m1 27h0m0-152h0m1 176h0m1-46h0m0-64h0m0 103h0m1-93h0m1 119h0m0-141h0m1 40h0m0 20h0m0 17h0m0 31h0m0-80h0m0 96h0m1 6h0m1-45h0m0-91h0m1-39h0m1 63h0m0-72h0m0 119h0m1-60h0m0-46h0m0 64h0m1 57h0m0-104h0m0 119h0m0-119h0m0 153h0m0-190h0m1 168h0m0-32h0m0-125h0m2 170h0m0-73h0m0-22h0m1-14h0m0 65h0m0 21h0m1-46h0m0 42h0m1-29h0m1 2h0m1 7h0m0-118h0m1 12h0m0 107h0m1-76h0m1 27h0m0 13h0m1 10h0m0-86h0m0 229h0m0-133h0m0-47h0m1-12h0m0 54h0m1-13h0m0 29h0m0-56h0m1 97h0m0-46h0m1 20h0m0-59h0m0 93h0m1-11h0m0-75h0m0-94h0m0 194h0m1-151h0m0 29h0m0-21h0m0-6h0m0-22h0m1 196h0m0-164h0m0 121h0m1 48h0m0-189h0m1 34h0m0 25h0m0 85h0m2-82h0m0-13h0m0 103h0m0-132h0m0 103h0m1-43h0m0 32h0m0-72h0m1 144h0m1-33h0m0 18h0m0-208h0m1 87h0m0 64h0m0 30h0m1-53h0m1-69h0m0 86h0m1-13h0m0-72h0m1 40h0m0 36h0m0-92h0m0 155h0m1-93h0m2 33h0m0 128h0m0-147h0m1 77h0m1-100h0m0-32h0m0-105h0m0 111h0m1-24h0m0 2h0m1 48h0m0 33h0m0 47h0m1-153h0m0 67h0m1 36h0m1 69h0m2-85h0m1 19h0m0-77h0m0 87h0m3-91h0m0 33h0m0-82h0m1 212h0m1-55h0m0-12h0m1-42h0m0-63h0m0 22h0m1 23h0m0 32h0m0 8h0m0 13h0m1 54h0m0-163h0m1 182h0m1-36h0m0 3h0m0-121h0m0-3h0m0 41h0m1 10h0m0-71h0m0 65h0m0 5h0m1 19h0m0-37h0m0-57h0m1 115h0m0 139h0m0-184h0m0 116h0m0 0h0m1-103h0m0 38h0m0 57h0m1-80h0m0-47h0m1-32h0m0 1h0m0 13h0m1 22h0m0 108h0m0-112h0m2-18h0m0 31h0m0 51h0m1-54h0m0 118h0m1-145h0m0 8h0m2 47h0m0 60h0m0-11h0m0-61h0m0 59h0m0-47h0m0-15h0m1 16h0m0-1h0m0 53h0m0-9h0m0-99h0m1 37h0m0 50h0m1-50h0m0-74h0m1 36h0m1 121h0m0 10h0m0-167h0m1 141h0m0 5h0m0 61h0m0-108h0m1-55h0m0 77h0m1-26h0m1 58h0m0 16h0m0-131h0m0-1h0m0 168h0m2-217h0m0 221h0m0-161h0m0-82h0m1 125h0m0 77h0m1-94h0m0 44h0m0-2h0m0-104h0m1 106h0m1-7h0m0-6h0m1 43h0m0 15h0m0-61h0m1-29h0m0-87h0m1-17h0m1 141h0m0-50h0m0 157h0m1-125h0m0 14h0m0-26h0m1-25h0m0 20h0m0 4h0m1-51h0m0 120h0m0-100h0m1 7h0m0 98h0m1-161h0m0 67h0m1 95h0m1-93h0m0-61h0m0 213h0m0-115h0m0-52h0m0-3h0m0 64h0m1 57h0m1 23h0m1-214h0m0 74h0m1 64h0m1 22h0m1-56h0m0-51h0m0 45h0m0 101h0m1-131h0m0 1h0m0 101h0m0 5h0m0-132h0m0 110h0m1-36h0m0 32h0m0-102h0m1-5h0m0-31h0m1 151h0m1-80h0m0 106h0m1-190h0m0 142h0m0 41h0m1 5h0m1-104h0m0 31h0m1 9h0m1-9h0m0 36h0m0-114h0m1 149h0m0-85h0m1-21h0m1 108h0m0 64h0m1-127h0m0 22h0m0-62h0m0 108h0m1-10h0m0-169h0m1 144h0m0 31h0m1-85h0m2-1h0m0 88h0m0-52h0m0 35h0m0-120h0m1 119h0m0-97h0m0 26h0m0 14h0m1-1h0m0-26h0m0-45h0m0 10h0m0 132h0m1-182h0m0 133h0m0-25h0m1 36h0m0 1h0m1-14h0m0 85h0m0-108h0m2 58h0m0 46h0m2-130h0m0 97h0m0-148h0m0 173h0m1-58h0m0-105h0m1 69h0m0-20h0m0 162h0m2-136h0m0 48h0m0-68h0m1 123h0m0-18h0m0-110h0m1 37h0m0-5h0m0-49h0m1 124h0m0 10h0m0-50h0m1-127h0m0 78h0m0-66h0m0 109h0m1 21h0m0-168h0m1 79h0m0 104h0m0-13h0m0-68h0m2 43h0m0-51h0m0-29h0m2 47h0m0-3h0m0 26h0m1-6h0m0-19h0m0-71h0m1 80h0m1 125h0m0-97h0m1 5h0m0-151h0m1 98h0m0-17h0m0 1h0m1-12h0m0 16h0m0 50h0m0-11h0m1 42h0m0-160h0m0-26h0m2 105h0m2 5h0m0-17h0m0-17h0m0 106h0m1-206h0m0 116h0m0-96h0m0 170h0m0-112h0m1 73h0m0-104h0m0 102h0m1-31h0m1-40h0m0 153h0m0-18h0m1-25h0m0 4h0m1-51h0m0 30h0m2 41h0m0-104h0m0 42h0m1 39h0m0-2h0m0-161h0m3 64h0m0 16h0m0 35h0m0 40h0m1-84h0m0 123h0m0 28h0m0-63h0m0-76h0m1-13h0m0 34h0m0-30h0m0 58h0m0 42h0m2-21h0m0-54h0m0 28h0m1-12h0m0 33h0m1 16h0m0-11h0m2-14h0m1-61h0m0 181h0m0-190h0m1 5h0m0 176h0m0-150h0m1 61h0m0-50h0m1-86h0m0 67h0m1 27h0m1 56h0m1-94h0m0-39h0m0 211h0m0-151h0m0 63h0m1-36h0m0 145h0m0-204h0m0 62h0m1-56h0m0-35h0m0-15h0m1 106h0m0-51h0m1-12h0m0 171h0m1-66h0m0 31h0m1-113h0m0 34h0m0-3h0m1 104h0m0-87h0m1 26h0m0-78h0m0-25h0m1 87h0m0-35h0m0 85h0m0-141h0m0 127h0m0-107h0m1 13h0m0 13h0m0 96h0m1 49h0m1-158h0m1 55h0m0 33h0m1-76h0m0 3h0m0 54h0m0 63h0m1-55h0m1-20h0m0 44h0m0-89h0m1 92h0m1-122h0m1-33h0m0 128h0m0-18h0m1-73h0m0 0h0m0 136h0m0-6h0m0-71h0m0 158h0m1-207h0m0 43h0m0-18h0m0-105h0m0 62h0m1 121h0m0-48h0m1 24h0m0-20h0m0-21h0m0-54h0m1 24h0m0 57h0m0 97h0m0-170h0m0 106h0m2-38h0m0-7h0m0 10h0m0-54h0m0-65h0m0-17h0m1 20h0m1 69h0m0-29h0m0 10h0m1 126h0m0-4h0m0 4h0m0-111h0m0 11h0m1 54h0m0 10h0m0-16h0m0 4h0m0-167h0m1 136h0m0 20h0m0-98h0m1 20h0m1 120h0m0-25h0m0-75h0m0-23h0m0 121h0m1-74h0m0-82h0m1 146h0m1-53h0m0 26h0m0 71h0m3-76h0m0-71h0m0 27h0m0 48h0m0-123h0m0 22h0m0 35h0m0 98h0m0-89h0m0-21h0m1 58h0m0-66h0m3-52h0m0-32h0m0 243h0m0-152h0m1 64h0m0-101h0m0-30h0m0 202h0m0 48h0m0-136h0m2 44h0m0-19h0m0-105h0m0 159h0m1-65h0m0-92h0m0 163h0m1-106h0m0 51h0m1 30h0m0-26h0m0-129h0m1 135h0m1 76h0m0-105h0m0 125h0m1-173h0m0 72h0m0 1h0m0-198h0m1 244h0m0-160h0m1 130h0m0-40h0m0 102h0m0-159h0m0-20h0m1 141h0m0-42h0m1-31h0m0 115h0m0-173h0m1 168h0m1-32h0m0-19h0m1-35h0m1-98h0m0 57h0m0 25h0m1-100h0m0 135h0m0-36h0m1-113h0m0 172h0m0-102h0m1 83h0m0-17h0m1-37h0m0 20h0m0-87h0m0 67h0m1 28h0m0 6h0m0-139h0m1 183h0m0-99h0m0-69h0m1 195h0m0-115h0m0-12h0m2 8h0m0 1h0m0-18h0m1-77h0m0 88h0m0-74h0m1 43h0m0 140h0m1 21h0m0-120h0m0 59h0m1-80h0m1 41h0m0-109h0m0 59h0m0-67h0m1 150h0m1-62h0m1-7h0m0 42h0m1 24h0m0 49h0m1-40h0m1-6h0m0 36h0m0-96h0m0 30h0m0-20h0m1 23h0m0-22h0m1 116h0m0-144h0m0 83h0m1-38h0m1-26h0m0 76h0m1-114h0m0 152h0m0-54h0m0-7h0m1-79h0m0 85h0m1-93h0m1 124h0m0-75h0m0 78h0m1-161h0m0 153h0m0 10h0m1-144h0m0 98h0m1-62h0m1 126h0m1-5h0m1-64h0m0 16h0m0 45h0m0-58h0m1 37h0m0-36h0m1-40h0m1 17h0m0-78h0m0 29h0m0 130h0m1-36h0m0-53h0m0-30h0m0 9h0m1 67h0m0 0h0m1-17h0m0 20h0m0 99h0m1-55h0m0-50h0m0-100h0m1 141h0m0-94h0m1 37h0m0-79h0m0 40h0m1-6h0m0 1h0m0 41h0m0 36h0m0-55h0m0 55h0m1-21h0m0-103h0m1 157h0m0-116h0m0-1h0m1 41h0m0-35h0m1-41h0m0 171h0m0-151h0m1 59h0m0-64h0m0 21h0m0-17h0m0 23h0m1 73h0m0-93h0m0 27h0m0 14h0m0 19h0m1-3h0m0-8h0m0 44h0m0-5h0m0-44h0m0 13h0m0-12h0m0 21h0m1-100h0m0 162h0m1-91h0m1 80h0m0 64h0m0-83h0m0-62h0m0 129h0m1-43h0m2-98h0m1 16h0m0 5h0m0-20h0m0-69h0m1 94h0m0 58h0m0-15h0m2-25h0m0-26h0m1-10h0m0 59h0m0-79h0m0 52h0m0-16h0m0-26h0m0 67h0m1-24h0m0 31h0m0 65h0m1-141h0m0 14h0m1-30h0m0 104h0m0-158h0m1 103h0m0 51h0m1-116h0m0 79h0m1-5h0m1-15h0m0-7h0m0-22h0m1 56h0m0-72h0m0 162h0m1-65h0m0-30h0m0 62h0m1-12h0m0-7h0m1 94h0m1-138h0m1-4h0m0 66h0m1 2h0m0-122h0m0 24h0m0 64h0m0 47h0m1-69h0m0 50h0m2-49h0m0-42h0m0-15h0m0-127h0m1 195h0m0-106h0m1 111h0m1-120h0m0 71h0m0-71h0m0 55h0m0 30h0m1 70h0m0-75h0m0 65h0m1-127h0m0 42h0m1-5h0m1 131h0m0-72h0m1 75h0m1-79h0m0 42h0m1-92h0m0-35h0m1 43h0m0-18h0m1-22h0m0 74h0m1 122h0m0-86h0m1-71h0m0-20h0m1 3h0m0 116h0m1-57h0m0 62h0m0-120h0m1 104h0m1-56h0m0-61h0m0 41h0m1-12h0m1 20h0m0 120h0m0-153h0m1-15h0m1 119h0m0-164h0m0 105h0m1 87h0m0-48h0m0-38h0m1-30h0m0-39h0m0-72h0m1 110h0m0 54h0m1 6h0m0-98h0m1 129h0m0-122h0m1-90h0m1 200h0m1-79h0m0 122h0m0-154h0m1 9h0m0 39h0m1 74h0m0-52h0m0 44h0m1 99h0m0-228h0m0-22h0m0 54h0m1 65h0m1 71h0m0-24h0m1-99h0m0 103h0m0-63h0m1-37h0m0 81h0m0-1h0m1-50h0m0-82h0m0 200h0m2-217h0m0 111h0m0 75h0m0-141h0m1 73h0m0-53h0m0 66h0m0 47h0m1-14h0m0-53h0m0 42h0m1-119h0m0-77h0m0 91h0m1 24h0m0 57h0m0-58h0m2 89h0m2 28h0m0-137h0m0 111h0m1 5h0m0-48h0m1-11h0m0-20h0m0 35h0m0 74h0m0-44h0m1-28h0m0 9h0m0 23h0m1-144h0m0 70h0m1 50h0m0 34h0m0-44h0m0-46h0m1 8h0m0 68h0m0 43h0m0 16h0m1-133h0m0-42h0m1 145h0m0-129h0m0 158h0m0-58h0m1-40h0m0-22h0m1-40h0m0 21h0m0-39h0m0 19h0m0 75h0m0 75h0m1-143h0m0 64h0m0-50h0m1 61h0m0-168h0m0 188h0m0-108h0m1 17h0m0 63h0m0-12h0m0 29h0m1-38h0m0 66h0m0-162h0m0-74h0m1 128h0m0 38h0m0 43h0m1 3h0m0-41h0m0-6h0m1 29h0m0-82h0m0-27h0m0 38h0m1 65h0m1-61h0m1 99h0m0-178h0m0 101h0m1-81h0m0-2h0m1-8h0m1 53h0m0 42h0m0 62h0m1-18h0m0-97h0m0 96h0m0 119h0m0-96h0m1-4h0m0-85h0m0 107h0m1-24h0m0-70h0m0 21h0m0-54h0m1 31h0m0 26h0m0-24h0m0 63h0m1-88h0m0 59h0m0-3h0m1 112h0m0-97h0m2 10h0m0-23h0m0 33h0m0-45h0m0-17h0m1-52h0m0 41h0m0 81h0m1-106h0m1 178h0m0-99h0m0-131h0m0 69h0m1 45h0m0 23h0m0-13h0m0-7h0m0 14h0m2 27h0m0 15h0m1-75h0m0 75h0m1-128h0m0 106h0m0 2h0m0-29h0m0-30h0m0 61h0m1 77h0m0-183h0m1 132h0m0-14h0m0 52h0m0-127h0m1 71h0m0-53h0m1 78h0m0-150h0m0 81h0m1 12h0m0 73h0m0-26h0m1-143h0m0 77h0m0 29h0m0-70h0m0 83h0m0-42h0m1 66h0m0 71h0m0-183h0m0 16h0m1 86h0m1-141h0m2 105h0m0-96h0m0 109h0m0-19h0m2-174h0m0 145h0m0-63h0m0 125h0m1-58h0m1 28h0m0-57h0m0 63h0m1-28h0m1-73h0m1 163h0m0-21h0m1-206h0m0 143h0m1-53h0m0 51h0m0 20h0m0 107h0m0-239h0m0 263h0m1-150h0m0 88h0m1-90h0m0 8h0m1-22h0m0 38h0m0-37h0m0 18h0m1 38h0m0 59h0m0-101h0m1 143h0m0-90h0m0-33h0m0 2h0m0-45h0m1-59h0m1 112h0m0-25h0m0 74h0m0 22h0m1-153h0m0 14h0m1 73h0m0-90h0m1 113h0m0-24h0m0-130h0m1 61h0m1 51h0m1-15h0m1 81h0m1-101h0m0 104h0m1-72h0m2 82h0m0-45h0m0-24h0m1-49h0m0 116h0m0-154h0m0 90h0m0 46h0m0-50h0m1 42h0m0-147h0m0 111h0m0-47h0m0 1h0m1 3h0m0 65h0m0-61h0m1-19h0m0 122h0m0-83h0m0 19h0m1-76h0m0 9h0m0 88h0m0-38h0m0 34h0m1-37h0m0 134h0m0-136h0m1-90h0m0 54h0m1 69h0m0-92h0m0 122h0m1-24h0m0 22h0m2 14h0m0-98h0m0 95h0m0-187h0m2 55h0m1 101h0m0-10h0m0-40h0m1 16h0m0 61h0m1 23h0m1 30h0m0-182h0m0 71h0m1-116h0m1 38h0m1 111h0m0 51h0m2-59h0m0-67h0m0 54h0m0-28h0m1 23h0m0 154h0m0-189h0m1-50h0m0 27h0m0 136h0m1-255h0m0 205h0m0-11h0m1-8h0m0 35h0m0-68h0m0-137h0m2 203h0m1-35h0m0-69h0m1 50h0m0 45h0m0-2h0m1 6h0m1-17h0m0-23h0m0-20h0m1 5h0m0 2h0m0 107h0m1-105h0m0 80h0m1-33h0m1-67h0m0 70h0m0 40h0m0-56h0m0-46h0m1-12h0m0-9h0m0-46h0m0 150h0m1-114h0m0 81h0m0-12h0m0 16h0m1 13h0m1-36h0m0 106h0m1-98h0m0-61h0m0 19h0m0 17h0m1 33h0m1 21h0m0-98h0m0 28h0m0-5h0m1-27h0m1 37h0m0-46h0m0 38h0m1 41h0m0 61h0m0-35h0m1-54h0m0-76h0m0 51h0m0-13h0m0 65h0m0 13h0m0 55h0m1-5h0m0-122h0m0-105h0m0 86h0m0 24h0m1 74h0m1-59h0m0 42h0m0 62h0m0-16h0m0-93h0m1 9h0m0 16h0m1 40h0m0-1h0m1-50h0m0 55h0m0-27h0m1 62h0m1-58h0m0 12h0m0-31h0m0-19h0m0 91h0m1-140h0m0 44h0m0 80h0m1-45h0m0 25h0m1-29h0m0-38h0m0-9h0m1-21h0m0 195h0m1-105h0m1 17h0m0-221h0m0 125h0m1 62h0m1-91h0m0 208h0m0-187h0m1 101h0m1-5h0m0-30h0m0 62h0m0-68h0m0 11h0m0 66h0m1-33h0m0-161h0m1 39h0m1-28h0m0 127h0m0-60h0m0 79h0m0-89h0m1-31h0m0 4h0m1 49h0m0 5h0m0 115h0m1-133h0m0 22h0m1-2h0m0 19h0m1-45h0m1 37h0m0 65h0m0-21h0m0 5h0m1 27h0m0-33h0m0-64h0m0-129h0m1 136h0m1 79h0m0 27h0m1-46h0m0 62h0m1-247h0m1 211h0m0-44h0m0-36h0m1 77h0m0-98h0m0-64h0m0 47h0m1-5h0m1 76h0m0-12h0m1-16h0m1 42h0m1-196h0m1 214h0m0-169h0m0-27h0m1 115h0m0 58h0m0 21h0m0-155h0m1 177h0m1-72h0m0 11h0m1 74h0m0-125h0m0 119h0m0-102h0m0 51h0m0-15h0m0-111h0m0 56h0m1-3h0m0 174h0m0-197h0m0 52h0m1 75h0m0-20h0m1-83h0m0 71h0m0-46h0m0 5h0m1-7h0m0 44h0m0-14h0m1 40h0m0-28h0m0-35h0m0-2h0m1-92h0m0 119h0m0-39h0m0 98h0m0-80h0m0-75h0m0 68h0m1 101h0m0-165h0m0 22h0m1 3h0m0 28h0m0 91h0m0-107h0m0 59h0m0 46h0m1-9h0m0 75h0m0-106h0m0-18h0m1-57h0m0 31h0m0-5h0m0 30h0m0-28h0m1-51h0m0 168h0m0-120h0m0-60h0m1 10h0m1 111h0m0-40h0m1-51h0m1 95h0m0-110h0m0 13h0m1-45h0m0 172h0m0-176h0m1 106h0m0-62h0m1 96h0m0-108h0m1-13h0m0 123h0m0-5h0m0-103h0m0 63h0m0 57h0m0-34h0m1-45h0m1-84h0m0 104h0m1 10h0m1 107h0m0-132h0m0-144h0m0 140h0m0 36h0m1-54h0m0 85h0m2-1h0m1-10h0m1 3h0m0-47h0m0 2h0m1 17h0m0-52h0m0-52h0m0 79h0m1-2h0m0 138h0m0-51h0m0-66h0m0 51h0m0 30h0m0-22h0m1-62h0m2-33h0m0-49h0m0 62h0m1-62h0m1 118h0m0-127h0m1 98h0m0 33h0m0-16h0m0-39h0m1 51h0m1-14h0m0-139h0m0 104h0m1 21h0m1-68h0m0 46h0m0-57h0m0 12h0m1 45h0m0 29h0m0 33h0m1 16h0m1-45h0m0 21h0m0-6h0m0-47h0m0-1h0m1-64h0m0 125h0m1-47h0m0-44h0m0-6h0m2 110h0m0-8h0m0-18h0m0-36h0m0 111h0m1-141h0m1 86h0m0-30h0m0-62h0m2-23h0m0 64h0m1-87h0m0 129h0m0-2h0m0-24h0m1-51h0m0 32h0m0-13h0m0-20h0m2 40h0m0-142h0m0 117h0m0 8h0m0-178h0m0 285h0m1-108h0m0 22h0m1 56h0m1-65h0m0-82h0m0 23h0m1 50h0m0-27h0m1-49h0m1 4h0m0 75h0m1-41h0m0 36h0m0-12h0m0-48h0m0 32h0m3 155h0m1-114h0m0 19h0m1-53h0m0 24h0m0-26h0m0 21h0m1 7h0m0-84h0m1 3h0m1-32h0m1 262h0m0-132h0m1-31h0m0-24h0m1 81h0m0-38h0m0-120h0m0 78h0m1 36h0m0 44h0m0-32h0m0 19h0m0-22h0m0-12h0m0-157h0m1 111h0m0 32h0m0-34h0m1-23h0m1 26h0m0 12h0m0-142h0m1 168h0m0-51h0m0 33h0m0-51h0m1-6h0m0 115h0m0-44h0m0-4h0m0-16h0m1-37h0m0 132h0m0-24h0m1-35h0m0-65h0m1-12h0m0 19h0m0 33h0m0 37h0m0-36h0m1 124h0m0-172h0m0 84h0m0-51h0m1-32h0m0 102h0m0 45h0m0-142h0m1 113h0m0 69h0m0-227h0m1-16h0m1 99h0m0-40h0m1 56h0m0-180h0m0 161h0m1 55h0m0-37h0m1 45h0m0-84h0m0-9h0m0 121h0m1-79h0m0 31h0m1-54h0m1-14h0m0 50h0m0-142h0m0 83h0m1 76h0m0-91h0m1 207h0m1-25h0m1-133h0m0 95h0m1-137h0m0 47h0m1 10h0m0-38h0m1 43h0m0 9h0m0-106h0m0 90h0m0 16h0m1-58h0m0 9h0m0 86h0m0 2h0m1-207h0m0 107h0m1 6h0m0-4h0m1 60h0m0 30h0m0-70h0m0-1h0m0-55h0m0 63h0m0 47h0m1-79h0m0 12h0m0-8h0m1 54h0m0-80h0m0 21h0m0 28h0m1 13h0m0-74h0m0-14h0m1-17h0m0 147h0m1-154h0m0 19h0m0 68h0m1-34h0m0 24h0m1 23h0m0 54h0m0-110h0m0 24h0m1-58h0m0 126h0m0-34h0m1 9h0m1 44h0m0-41h0m1 25h0m0-70h0m0-2h0m0-22h0m1 162h0m0-171h0m1 69h0m1-47h0m0 6h0m0 46h0m1 0h0m0-5h0m0-37h0m0-34h0m0 119h0m1-143h0m0 123h0m0-66h0m0-9h0m1 65h0m0-35h0m0-32h0m1 127h0m0-15h0m0-83h0m1-56h0m0 31h0m0-1h0m1 131h0m0-185h0m1 119h0m0 37h0m0-147h0m0 85h0m1-109h0m0 84h0m0-35h0m0 73h0m1 25h0m0-157h0m0 96h0m0-2h0m1 1h0m0-31h0m0-13h0m1-107h0m1 202h0m0-54h0m0-21h0m0-15h0m0 144h0m1-126h0m0-9h0m0 134h0m0-177h0m1 148h0m0-142h0m1 78h0m0 92h0m1-113h0m0 42h0m0 12h0m0-66h0m1 100h0m0-59h0m1 92h0m0-1h0m0-2h0m0-184h0m1 13h0m1 178h0m0-103h0m0 24h0m1 57h0m0-26h0m0-168h0m2 124h0m0-83h0m0 139h0m0-17h0m1-32h0m1-22h0m0 26h0m1-2h0m0-174h0m0 218h0m1-119h0m0 35h0m0 36h0m1-95h0m0 134h0m0-85h0m1-11h0m1 45h0m0-35h0m0 94h0m1-110h0m0 58h0m0 69h0m1-145h0m0 129h0m0 3h0m1-150h0m1 65h0m0 2h0m0 83h0m0 2h0m1 51h0m0-156h0m0 63h0m0-81h0m2 165h0m1-99h0m0-147h0m0 164h0m1 68h0m0-103h0m1 16h0m1 30h0m0 110h0m0-154h0m1 24h0m0-60h0m0 42h0m1-39h0m0 79h0m1-10h0m0 109h0m1-93h0m0-28h0m1 24h0m0-119h0m0 62h0m1-19h0m0 45h0m0 79h0m1-72h0m0-22h0m0-60h0m1 182h0m1-38h0m0-133h0m0 34h0m1 64h0m0 7h0m0-103h0m0 38h0m0 17h0m0-59h0m1 25h0m0 40h0m1 51h0m0-14h0m0-152h0m0 190h0m0-93h0m0 65h0m0-44h0m1-188h0m0 196h0m0-35h0m1-30h0m0 40h0m0 40h0m1 45h0m1-25h0m0-124h0m2-38h0m0 48h0m1 205h0m0-183h0m0 63h0m0-24h0m0 21h0m1 3h0m1-19h0m0 6h0m0-12h0m0-29h0m1 17h0m0 89h0m0-17h0m1-107h0m1 117h0m1-63h0m0-8h0m0-45h0m1 60h0m0-14h0m0-65h0m0-22h0m0-1h0m1 182h0m0-146h0m0 44h0m1-11h0m1-51h0m1 58h0m0 73h0m0 101h0m0-210h0m0 23h0m0 68h0m1-108h0m0 77h0m0-3h0m0-68h0m0 3h0m1 56h0m0-77h0m0 141h0m1-10h0m0-61h0m0-52h0m1 61h0m0-33h0m0 105h0m1-89h0m0-11h0m0-50h0m1-34h0m0 67h0m0-48h0m0 96h0m0-22h0m2 64h0m0-44h0m1 26h0m1 16h0m1-89h0m0 36h0m1-16h0m0-52h0m1 1h0m0 33h0m0 46h0m1 23h0m0-69h0m1 16h0m0-19h0m1 62h0m1 44h0m0-90h0m1 81h0m1-1h0m0-126h0m1-44h0m0 9h0m0 118h0m0-16h0m1 31h0m0 57h0m0-98h0m0 32h0m1-138h0m0 181h0m0-120h0m0 98h0m0-84h0m0-25h0m0 43h0m1 15h0m1-24h0m0-66h0m2 81h0m0-87h0m1 63h0m0-1h0m1 3h0m0 64h0m0 8h0m0-21h0m0 66h0m1-132h0m0 13h0m0 29h0m0 158h0m1-144h0m1 44h0m0-90h0m1 5h0m0 109h0m0-77h0m0-50h0m0 73h0m1-27h0m0 91h0m0-58h0m0 25h0m0-43h0m3-62h0m1 82h0m1 105h0m0-24h0m0-46h0m0-64h0m2 29h0m0 0h0m1-71h0m1 75h0m0 28h0m0 10h0m1-27h0m0-59h0m0 145h0m0-83h0m0-26h0m1-58h0m0 68h0m2-36h0m0-71h0m1 52h0m0 89h0m2-104h0m1 20h0m0 50h0m0 99h0m0-205h0m1 112h0m0-26h0m1 9h0m0-109h0m0 119h0m0 66h0m1-104h0m1 60h0m0-128h0m1 106h0m0 25h0m0-69h0m0-12h0m1 16h0m0-24h0m1-34h0m1 17h0m0 83h0m2 13h0m0-30h0m0-52h0m0 60h0m1 7h0m0 7h0m1-103h0m0 62h0m0 54h0m0-88h0m2 54h0m0 24h0m1-71h0m0-76h0m0 110h0m1 7h0m0 32h0m0 5h0m0-39h0m1 50h0m0-123h0m1 71h0m0-30h0m1 87h0m0 17h0m0-162h0m0 34h0m0 133h0m1-95h0m0 32h0m0-47h0m0 99h0m2 3h0m0-102h0m0-39h0m0 12h0m1 32h0m0 48h0m0-2h0m0-40h0m0-68h0m0 180h0m1-96h0m0 98h0m0 48h0m1-128h0m0 82h0m0-42h0m0-6h0m1-4h0m0-45h0m1 84h0m0-94h0m0-14h0m0 18h0m0-31h0m1 147h0m1-136h0m0 58h0m1-66h0m1-111h0m0 214h0m0-20h0m0-83h0m0 88h0m1-180h0m1 136h0m1-20h0m1-2h0m0 85h0m1-63h0m1-116h0m0-1h0m1 142h0m0-42h0m1-22h0m0-30h0m1 106h0m0-19h0m0 60h0m0-130h0m0 47h0m1-13h0m0-130h0m0 101h0m0 37h0m1 134h0m0-157h0m0-22h0m2-5h0m0 29h0m1-6h0m0 15h0m0-35h0m1 9h0m2 62h0m0-15h0m0-50h0m0 28h0m0-86h0m1 193h0m0-99h0m0-42h0m1 56h0m1-20h0m0 130h0m0-6h0m0-107h0m0-133h0m0 187h0m0-59h0m1-98h0m0 52h0m1-19h0m0-1h0m0 58h0m1-104h0m0 108h0m1 39h0m0-19h0m0 65h0m0-139h0m1 122h0m0-77h0m0-83h0m0 78h0m1-85h0m0 66h0m0 66h0m0-27h0m1-19h0m0 16h0m0-43h0m0 157h0m0-85h0m0 57h0m1-202h0m0 110h0m0 43h0m0-117h0m0 95h0m1-43h0m0 22h0m0 153h0m0-189h0m0 68h0m0 42h0m1-97h0m0-10h0m0-83h0m0 192h0m1-102h0m0-3h0m1-25h0m0 102h0m1 7h0m0-40h0m0-48h0m0-40h0m0 86h0m0-128h0m1 44h0m0 12h0m1 112h0m0-28h0m0 54h0m1-107h0m0 115h0m1-90h0m0-30h0m0-21h0m1-32h0m0 40h0m0 65h0m1-123h0m1-1h0m0 106h0m1 22h0m0 16h0m1-44h0m0-45h0m0 45h0m0 10h0m0-46h0m1 54h0m0 15h0m0-49h0m1 82h0m0-97h0m0 22h0m0 10h0m1 55h0m0-40h0m0 54h0m1-68h0m1-95h0m0 39h0m0 20h0m1 104h0m0-23h0m1-44h0m1-10h0m1-25h0m0 45h0m1-15h0m0-7h0m0 31h0m0-49h0m1 132h0m0-106h0m1-33h0m0 18h0m0 59h0m0-86h0m1 45h0m1 12h0m0 67h0m0-19h0m1-58h0m0 72h0m0-33h0m0 4h0m1-43h0m1-65h0m0 115h0m0-78h0m1 74h0m1-57h0m0 36h0m0 64h0m0-221h0m1 178h0m1-39h0m1-10h0m0 12h0m0 22h0m0 54h0m0-131h0m0-10h0m1 95h0m0 4h0m0-71h0m0 82h0m1-98h0m0 15h0m0 77h0m1 102h0m0-71h0m0-44h0m1 32h0m1-74h0m0-49h0m3 35h0m0-117h0m0 25h0m0 173h0m0-22h0m1-44h0m0 74h0m0-40h0m1-17h0m1-39h0m0 21h0m0-44h0m0 148h0m1-91h0m0 20h0m0-44h0m0 38h0m0 29h0m1-83h0m0 38h0m0 14h0m0 63h0m1-57h0m0-80h0m0-12h0m0 40h0m0 25h0m1-72h0m0 127h0m0-5h0m0 8h0m0-32h0m1-104h0m0 149h0m1-199h0m0 204h0m0-61h0m0-25h0m0-82h0m0-28h0m0 174h0m2-25h0m0-16h0m1-78h0m0 82h0m0 4h0m1-91h0m0 135h0m0 16h0m0-88h0m1 64h0m0-13h0m0-66h0m0-48h0m0 110h0m0-120h0m0 170h0m1-227h0m0 163h0m2-43h0m0 32h0m1-34h0m0-2h0m0 97h0m1-63h0m0-32h0m0 41h0m0-28h0m0 26h0m1-22h0m0-91h0m0 96h0m0-22h0m0 98h0m0-103h0m1 20h0m0-10h0m1-2h0m0-13h0m0-8h0m0 71h0m0 30h0m0-100h0m1 140h0m0-78h0m1-35h0m0-8h0m1-1h0m1 28h0m1 107h0m0-33h0m0-10h0m2-110h0m0 11h0m0 120h0m0-69h0m1-31h0m0-5h0m0 20h0m0-57h0m0 38h0m1 20h0m1-43h0m0 119h0m0-123h0m0-47h0m1 145h0m1 89h0m1-214h0m0 56h0m0-12h0m1 29h0m0 31h0m0-100h0m1 55h0m0 142h0m0-137h0m0 11h0m1 34h0m1-25h0m0-100h0m0 73h0m1-92h0m1 182h0m0-114h0m1 13h0m0 161h0m1-39h0m0-16h0m1-23h0m0-2h0m1-38h0m0-60h0m0 51h0m0 79h0m1-80h0m1-33h0m0-11h0m1 78h0m0-94h0m1 12h0m0-3h0m0-19h0m0 121h0m0-97h0m1 101h0m0-1h0m1 0h0m0 45h0m0 69h0m1-83h0m1-57h0m0-104h0m0 129h0m0 54h0m0-184h0m0 152h0m1-113h0m0 71h0m0-121h0m0 122h0m1-78h0m0 157h0m1-99h0m1-24h0m0-83h0m1 102h0m1-7h0m0-65h0m0 15h0m0 80h0m0 52h0m0-158h0m0 139h0m2-76h0m0 73h0m0-169h0m1 74h0m0 40h0m1-18h0m0 57h0m0-220h0m1 152h0m0 44h0m1 9h0m0 10h0m0-91h0m0 161h0m1-24h0m0-147h0m0 107h0m0-13h0m1-3h0m0-55h0m0-13h0m0 13h0m0-58h0m2 101h0m0-6h0m0-64h0m1 40h0m1 106h0m0-193h0m0 71h0m0 52h0m2-36h0m0-9h0m1 2h0m0 96h0m0-81h0m0-110h0m0 95h0m1 7h0m1 27h0m0-59h0m1 65h0m0 70h0m0 22h0m1-41h0m0-64h0m0 14h0m0-71h0m1 33h0m0-90h0m0 61h0m1 124h0m0-12h0m0-69h0m1-112h0m0 177h0m0 27h0m1-118h0m1-64h0m0-8h0m1 63h0m0-38h0m0 61h0m0-115h0m1 20h0m0 127h0m1-27h0m0-51h0m1 62h0m0-35h0m0 44h0m2-38h0m0 40h0m0 20h0m0-66h0m1 13h0m0-40h0m0 44h0m0-119h0m0 50h0m1 74h0m0-31h0m0 21h0m0-100h0m1 97h0m0 38h0m1 30h0m0 76h0m1-207h0m0 224h0m0-170h0m0-12h0m1 13h0m0-27h0m0 89h0m0-56h0m0 49h0m0-3h0m1-25h0m0-28h0m0-4h0m1 93h0m0-35h0m0 80h0m0-118h0m1-26h0m0 57h0m0 19h0m1-3h0m0-61h0m1-67h0m0 197h0m1-135h0m0 6h0m0-18h0m1 86h0m0-58h0m0 86h0m1-122h0m0 69h0m0-15h0m0-4h0m1 21h0m0-66h0m1 36h0m0 128h0m0-103h0m1 89h0m0-160h0m0 65h0m1 95h0m0-60h0m1 49h0m0-96h0m0 69h0m1-25h0m0-63h0m0 71h0m0-30h0m1 1h0m0-8h0m1 86h0m0-120h0m1 77h0m1-54h0m0-52h0m0 155h0m0-42h0m0-88h0m0 60h0m1 19h0m0-21h0m0 16h0m0-14h0m1-59h0m0-25h0m0 61h0m1-56h0m1 55h0m0-74h0m0-7h0m1 55h0m0 36h0m0-9h0m0 93h0m1-265h0m1 110h0m0 105h0m0-1h0m1 11h0m0-72h0m0 0h0m1 20h0m0 21h0m0-87h0m1 5h0m0 76h0m0 64h0m0-72h0m1-36h0m1 25h0m0-52h0m0 52h0m0-39h0m1 45h0m0-20h0m0-62h0m1 29h0m0-63h0m2 96h0m0-26h0m0-14h0m0 68h0m0-11h0m1 59h0m0-36h0m0 30h0m1-47h0m0-105h0m0-3h0m1 36h0m0-6h0m0 16h0m1-4h0m1 88h0m0-61h0m0-53h0m0 88h0m0-25h0m1-27h0m0-40h0m0 40h0m0-57h0m0 45h0m1-22h0m0 92h0m0 1h0m1-29h0m0 51h0m0-21h0m0 21h0m1-120h0m0 48h0m0-19h0m0 10h0m2-24h0m0 74h0m1 62h0m0-132h0m1-18h0m1 155h0m1-154h0m0 29h0m0 85h0m0-79h0m1 62h0m0-61h0m0 13h0m1 17h0m1 60h0m0-75h0m1-38h0m0 88h0m2 43h0m0-21h0m0 12h0m1-59h0m0 30h0m0 6h0m2-32h0m0 41h0m0 5h0m1-18h0m0 46h0m0 44h0m0-64h0m2-79h0m1 1h0m0-12h0m0 72h0m1-88h0m0 89h0m1 36h0m0-104h0m0 72h0m0-82h0m1 141h0m0-148h0m0 87h0m0-144h0m1 104h0m0-82h0m0 31h0m0 56h0m0-19h0m0-50h0m1-16h0m0 145h0m0-149h0m0 48h0m0 51h0m1-55h0m0 48h0m0 87h0m0-5h0m1-173h0m0 150h0m0 10h0m1-61h0m0-54h0m0-77h0m1 20h0m0 88h0m0-41h0m0 3h0m0 69h0m0 25h0m1-24h0m0-95h0m0 61h0m0-21h0m0-88h0m0 154h0m1-48h0m0-14h0m0 2h0m0-13h0m1 17h0m1 70h0m0 70h0m0-43h0m1-143h0m0 144h0m0-79h0m1-17h0m0-78h0m0 107h0m0-7h0m1 5h0m0-55h0m0 91h0m1-39h0m0-79h0m0 68h0m0-41h0m1-18h0m0 150h0m1 10h0m1-99h0m0-80h0m0 138h0m0-90h0m1 111h0m0-115h0m0 106h0m0 29h0m0-7h0m1-133h0m1 79h0m0-30h0m0-143h0m1 115h0m0 90h0m1-49h0m0-81h0m1 225h0m0-259h0m1 42h0m0-25h0m0-7h0m1 21h0m0 49h0m0 23h0m0-111h0m0 152h0m2-117h0m0 145h0m1-139h0m0 107h0m0-41h0m1-83h0m0 63h0m1-41h0m0 125h0m0-129h0m0 18h0m1 76h0m0 14h0m1-62h0m0-54h0m0 8h0m0 21h0m0-39h0m0 127h0m1-6h0m0 39h0m0-82h0m0 94h0m1-79h0m0 28h0m0-25h0m0-56h0m1 11h0m0 44h0m0 77h0m0-32h0m2-131h0m0 70h0m0-59h0m0 78h0m0-34h0m0-104h0m1 119h0m0-7h0m0 59h0m1-98h0m0 51h0m1-27h0m0 64h0m1-37h0m0 17h0m0-6h0m1 30h0m0-29h0m0-5h0m0-31h0m1-53h0m0 107h0m0-122h0m0 93h0m1-71h0m0 119h0m1-19h0m0-48h0m1 93h0m0-193h0m1 180h0m0 24h0m0-119h0m1 57h0m0-45h0m1-81h0m0 30h0m1 82h0m0 1h0m0-2h0m0-11h0m1-69h0m1 113h0m0-54h0m0 52h0m1-69h0m0 49h0m1-17h0m0-21h0m0 35h0m1 28h0m0 0h0m0-79h0m0-78h0m0 24h0m1 90h0m1 9h0m0 53h0m0 20h0m1 2h0m1-110h0m0 8h0m1-6h0m0-51h0m0 65h0m0 9h0m0 6h0m1 20h0m0-64h0m0 44h0m0-58h0m1 77h0m1-46h0m0 75h0m0-15h0m0 81h0m0-173h0m2 92h0m0-121h0m0 14h0m1 86h0m0-8h0m1-4h0m1 135h0m1-136h0m0-61h0m0-18h0m1 45h0m0 48h0m0 63h0m1-122h0m1 54h0m1-94h0m1 160h0m0-98h0m0 55h0m1-28h0m0-33h0m0 11h0m1 54h0m0 64h0m0-109h0m1-11h0m0 21h0m0 102h0m1-115h0m0-2h0m0-3h0m0 182h0m0-84h0m1-135h0m0 67h0m1-103h0m1 106h0m0-51h0m1-17h0m1 55h0m0-82h0m0 14h0m1 30h0m0 40h0m1 62h0m0-59h0m1 27h0m0-8h0m0-10h0m1 36h0m0-9h0m1-30h0m1-3h0m1-24h0m0 49h0m0-21h0m2-68h0m1 72h0m0-73h0m0-28h0m0 102h0m1-29h0m0 59h0m0-55h0m0 11h0m1-15h0m0-32h0m1 134h0m1-17h0m0-53h0m0 67h0m0-125h0m1 77h0m1-199h0m1 148h0m1 104h0m0 7h0m1-72h0m1-74h0m1 96h0m1-50h0m1 25h0m0-68h0m1 60h0m0-27h0m1-67h0m0 36h0m0 98h0m0-100h0m0 129h0m0-98h0m0 79h0m1-102h0m1-70h0m0 88h0m0-36h0m0 109h0m1-20h0m1-21h0m1-64h0m0 18h0m0-50h0m1 42h0m1-57h0m1 92h0m1-41h0m0 83h0m1 5h0m0-38h0m0-3h0m1 70h0m1-97h0m1 28h0m0 48h0m0 44h0m2-83h0m0-93h0m0 145h0m0-31h0m1 12h0m0-61h0m0-143h0m0 155h0m0 21h0m1-23h0m0-38h0m0 51h0m1 35h0m0-9h0m0-85h0m1-55h0m0 144h0m1 2h0m0-114h0m2 94h0m0 142h0m0-164h0m0 77h0m0-92h0m1 68h0m0-142h0m0 150h0m0-130h0m1 209h0m0-69h0m0 39h0m1-150h0m0 70h0m0-33h0m0 14h0m0-79h0m2 49h0m1-43h0m0 2h0m1 88h0m0 43h0m0-44h0m2-7h0m0-31h0m0-22h0m1-45h0m0 66h0m0 42h0m1-11h0m0 45h0m0-35h0m0 41h0m0-70h0m0-105h0m1 19h0m0 153h0m0-126h0m2 29h0m0 9h0m1 92h0m0-106h0m0 42h0m1 86h0m0-62h0m0 32h0m2-153h0m0 30h0m0 28h0m0 31h0m0-3h0m0 114h0m1-130h0m1-57h0m0 37h0m0-33h0m1 78h0m1-11h0m0-38h0m0 132h0m0-95h0m1-24h0m3-48h0m1 164h0m0-145h0m0 103h0m1-19h0m1-37h0m0 27h0m0-21h0m0 32h0m1-41h0m0-120h0m0 189h0m1-71h0m1-58h0m0 17h0m1 138h0m0-187h0m1 107h0m0-65h0m1 59h0m0 53h0m0-59h0m0-1h0m1-17h0m2-37h0m0 135h0m0-56h0m0 79h0m0-145h0m0 97h0m0-79h0m0-30h0m1 91h0m1-136h0m0-7h0m0 71h0m1-7h0m0 75h0m0-139h0m0 54h0m0 81h0m1-19h0m0 72h0m0-194h0m0 70h0m0 111h0m1-15h0m0-26h0m2-63h0m0 91h0m0 85h0m1-135h0m1-35h0m0 32h0m1 12h0m0 57h0m0-130h0m1 31h0m0 88h0m0-57h0m0 34h0m0 14h0m1-50h0m0-1h0m0-13h0m0 66h0m0-129h0m0 42h0m2-38h0m0 123h0m0 26h0m1-79h0m2-15h0m0-1h0m0-104h0m0 50h0m1 31h0m0 18h0m1 69h0m0-54h0m0 51h0m1-109h0m0-36h0m0 204h0m1-182h0m0 42h0m1 35h0m0 51h0m1 6h0m0-115h0m0 188h0m1-123h0m0 81h0m0-107h0m1-27h0m0-17h0m2 94h0m0-16h0m0-128h0m1 190h0m0-33h0m1-36h0m0 20h0m0 18h0m0 23h0m0-172h0m1 49h0m1 103h0m1 102h0m0-163h0m1 67h0m0-132h0m0 104h0m0-7h0m1 90h0m0-194h0m2 151h0m0 42h0m1-67h0m0-31h0m1-30h0m2 105h0m0-79h0m0 39h0m1-139h0m0 73h0m1 27h0m0 68h0m1-67h0m0-33h0m0-9h0m0 157h0m0-40h0m1-69h0m0-128h0m1 115h0m0-4h0m0 59h0m1-41h0m0-4h0m0-9h0m0-70h0m0 151h0m2-137h0m0-2h0m0 12h0m1 128h0m0-121h0m0 39h0m0-32h0m0 39h0m0 74h0m1-157h0m0 38h0m0-3h0m0 37h0m0-13h0m0 75h0m1-72h0m1-72h0m2 57h0m1 133h0m1-153h0m1 122h0m0-95h0m0 78h0m1-90h0m0 79h0m1 13h0m0-29h0m1 120h0m1-229h0m0 154h0m0-44h0m0-18h0m1 51h0m1-55h0m1-66h0m0 113h0m0-13h0m0-68h0m0 58h0m1-168h0m0 96h0m0 59h0m0-47h0m0 64h0m1-1h0m0 23h0m0 14h0m0-79h0m0 62h0m1 4h0m0-151h0m0 55h0m0 111h0m1-42h0m0-55h0m1-42h0m1 8h0m0-63h0m0 54h0m1 73h0m0-27h0m0-16h0m1 42h0m0 62h0m1-48h0m0-76h0m1 46h0m0-22h0m0-43h0m0-3h0m1 106h0m0-29h0m1-17h0m0 24h0m1-22h0m0 29h0m0-41h0m0 56h0m1 6h0m0-132h0m0 141h0m1 64h0m1-126h0m0-3h0m1 13h0m0-26h0m0-29h0m1 49h0m0-17h0m0 13h0m1 72h0m0-34h0m0 11h0m1-58h0m0-49h0m0 82h0m1 6h0m0 131h0m1-63h0m0-126h0m1 28h0m0 22h0m0 40h0m1-93h0m0 82h0m1-50h0m0-46h0m1 104h0m1-114h0m0 48h0m0 17h0m0-37h0m0 26h0m1 13h0m0 19h0m0 7h0m1 4h0m0-106h0m0 75h0m0-54h0m1 71h0m0 64h0m0-77h0m1-95h0m1 20h0m0 106h0m1 17h0m0-98h0m0-15h0m0 32h0m0 36h0m0 43h0m0-59h0m1-14h0m0 83h0m0-141h0m0 10h0m1 42h0m0 58h0m1 36h0m0 30h0m1-180h0m1 191h0m1-107h0m0-49h0m0 148h0m1-9h0m0-132h0m0 40h0m0 56h0m1-119h0m0 135h0m1-92h0m0 10h0m0 64h0m0-105h0m0-30h0m0 124h0m1 34h0m0-28h0m0 28h0m1-19h0m0 18h0m1-19h0m0-173h0m1 110h0m0-44h0m0 30h0m1-118h0m0 204h0m0-60h0m0-8h0m1-86h0m1 112h0m1-42h0m0 110h0m0-90h0m1 24h0m0 92h0m0-135h0m0-2h0m1-31h0m0 8h0m0-40h0m0 71h0m1 71h0m0-119h0m0 92h0m0-6h0m0 8h0m1 29h0m1-23h0m1-17h0m0 71h0m1-2h0m1-147h0m1 76h0m0-22h0m0 74h0m1-96h0m1 18h0m0 44h0m0-139h0m0 52h0m1 117h0m0-79h0m1 69h0m0-97h0m0 41h0m0-120h0m1 125h0m1-69h0m0 70h0m1 12h0m0-51h0m0 36h0m0 27h0m0 59h0m0-103h0m0 28h0m1-69h0m0 104h0m0-39h0m0 73h0m0-70h0m2-10h0m0 53h0m0-40h0m0-41h0m0 10h0m0 65h0m2-15h0m0 46h0m1 21h0m0-20h0m0-54h0m0-14h0m1 81h0m1-111h0m0 60h0m1-72h0m0-25h0m1 29h0m0 62h0m1-18h0m1-17h0m0 38h0m0-67h0m1 4h0m1 86h0m0-42h0m0-62h0m0-17h0m1-94h0m0 168h0m0-9h0m0-6h0m1-17h0m0 62h0m0 86h0m0-41h0m1-57h0m0-163h0m1 170h0m0 34h0m0 5h0m0-85h0m0 145h0m1-93h0m1-41h0m0 55h0m1-165h0m0 113h0m1-5h0m0 95h0m1-11h0m0-57h0m0 19h0m1 115h0m1-264h0m0 150h0m0-77h0m0 67h0m0-50h0m2 67h0m0-32h0m1 42h0m0-117h0m0 41h0m0 68h0m0 15h0m0-100h0m1 35h0m0-9h0m1-39h0m0 62h0m0-78h0m1 120h0m0-106h0m0-32h0m1 158h0m0-22h0m1-140h0m0 70h0m0 69h0m0-55h0m0 11h0m0 118h0m1-91h0m0-35h0m0 27h0m0 56h0m1-95h0m0 44h0m0-99h0m0 150h0m0-166h0m1 86h0m0-13h0m0 59h0m0-21h0m2-136h0m0 171h0m1-147h0m0 85h0m0 82h0m1-141h0m0 93h0m0-113h0m1 1h0m0 105h0m0-68h0m0 41h0m1-23h0m1 38h0m0 53h0m0-11h0m0-23h0m0-41h0m2-115h0m0 113h0m1 32h0m0-48h0m0 17h0m0 32h0m0 54h0m2 28h0m1-38h0m2-9h0m1 5h0m0-104h0m0 37h0m1 11h0m0 12h0m0-91h0m1 91h0m0-30h0m0 28h0m1-37h0m0-45h0m0 21h0m1 20h0m1-76h0m1 12h0m0 186h0m0-100h0m0-96h0m1 114h0m1-8h0m0-107h0m0 88h0m0-49h0m1 122h0m0-80h0m0-4h0m1 42h0m1-14h0m0-39h0m0-34h0m0 19h0m1 169h0m0-74h0m0-17h0m1 11h0m0 5h0m1-61h0m0-49h0m1 140h0m0-42h0m0-118h0m0 120h0m0 5h0m0-20h0m1-36h0m0 115h0m0-177h0m1 146h0m0-89h0m1-6h0m0-6h0m2 170h0m0-195h0m0 72h0m0 38h0m1-65h0m0 35h0m0 40h0m0-131h0m1 106h0m0-36h0m1-57h0m0 28h0m1 25h0m0 11h0m1 42h0m0-136h0m0 81h0m0-107h0m0 149h0m1-7h0m0-45h0m0 0h0m0 37h0m1-89h0m0 160h0m0-6h0m1-9h0m0-72h0m0 9h0m1-104h0m1 147h0m1-115h0m0 62h0m0 19h0m0-80h0m0 95h0m0-141h0m1 20h0m1 54h0m0 104h0m0-75h0m1 64h0m0-90h0m0 111h0m1-184h0m1 85h0m0 127h0m1-239h0m1 91h0m0 19h0m0-9h0m0 53h0m1-147h0m0 188h0m1-78h0m1 7h0m0-38h0m0-21h0m1 58h0m1-20h0m0 76h0m1-48h0m0-107h0m1 203h0m0-214h0m0 84h0m0 39h0m2 90h0m0-91h0m0-20h0m0-16h0m0 8h0m0 45h0m0-29h0m1-11h0m0 26h0m0-144h0m0 170h0m1 1h0m0 7h0m1-138h0m0 28h0m0 51h0m0-65h0m0 127h0m2-138h0m0 67h0m0 141h0m0-101h0m1 15h0m0 13h0m0-11h0m0-68h0m0 140h0m0-83h0m1-57h0m0 129h0m0-120h0m0 72h0m1 25h0m0-187h0m0 85h0m0 33h0m1-80h0m0 51h0m1-5h0m0 16h0m0 13h0m0 37h0m1-59h0m0 47h0m0-49h0m1-36h0m1 60h0m1-38h0m0 95h0m0 43h0m1-211h0m0 49h0m1-29h0m0 130h0m1-93h0m0 48h0m0 48h0m0 19h0m0-125h0m1 46h0m0 56h0m1-146h0m0 67h0m1-6h0m0 164h0m0-135h0m0 36h0m1-61h0m0 27h0m1-10h0m0 66h0m0-24h0m0-9h0m1 10h0m0 67h0m0-38h0m1-26h0m0 34h0m0-146h0m0-6h0m0 51h0m1-43h0m0 119h0m0 4h0m0 36h0m0-97h0m0 21h0m0 34h0m1-101h0m1 4h0m0 94h0m0 25h0m1-190h0m0 220h0m0-38h0m0-48h0m1 35h0m0 33h0m0-101h0m0 86h0m0-133h0m0 117h0m1 7h0m0-2h0m0-48h0m1-18h0m0-27h0m1-14h0m1-22h0m1 71h0m1 14h0m0-81h0m0 43h0m0 13h0m1 17h0m0-23h0m0 65h0m0-35h0m0-34h0m0 23h0m1 60h0m0-6h0m0-32h0m1-10h0m0 70h0m0-76h0m1 38h0m1-63h0m1 80h0m1 2h0m0 1h0m1-66h0m0-12h0m0-3h0m0 55h0m1 68h0m0-183h0m2 168h0m0 4h0m0-73h0m0-69h0m0 88h0m2-51h0m0-71h0m0 124h0m0-42h0m1 9h0m0-60h0m0 44h0m0-4h0m1-69h0m0 84h0m0-65h0m1 34h0m0 5h0m0 27h0m0 39h0m0-81h0m1 29h0m0 70h0m0-84h0m1 76h0m0-54h0m0-8h0m0 3h0m2-9h0m0 62h0m1-131h0m1 212h0m0-110h0m1-21h0m1 26h0m0-95h0m0 135h0m0 36h0m1 16h0m0-171h0m1 68h0m0 47h0m1-38h0m0 28h0m2-106h0m0 48h0m2-47h0m0 176h0m0-156h0m0-17h0m1 5h0m1 20h0m0 66h0m0-36h0m0-30h0m1 53h0m0-21h0m1 39h0m0-69h0m0 95h0m0-106h0m1 111h0m0-170h0m1 60h0m0 114h0m2-108h0m0-78h0m0 85h0m2-18h0m0 101h0m0-36h0m0 22h0m1-20h0m0-7h0m0-99h0m0 95h0m1 84h0m0-128h0m0-36h0m1 99h0m0-56h0m0 33h0m0 69h0m0 8h0m0-51h0m0-34h0m0-8h0m0-32h0m2 67h0m0-128h0m1 131h0m0-18h0m0-32h0m0-19h0m1 52h0m0 15h0m0 47h0m0-9h0m1-32h0m1-46h0m0-22h0m1 60h0m0 140h0m0-189h0m1 25h0m0 27h0m0 21h0m0-34h0m1-92h0m0 120h0m1 7h0m0-111h0m0 100h0m0-26h0m0 34h0m1 23h0m0-88h0m1 65h0m0-145h0m0 176h0m0-69h0m1 70h0m0-62h0m1-75h0m1 26h0m0 2h0m0 42h0m1 36h0m0-132h0m1 155h0m2 20h0m0-104h0m1 53h0m0-4h0m1-119h0m0 64h0m1-4h0m0 80h0m0-18h0m1-47h0m0 32h0m1 66h0m0-113h0m0 54h0m0-64h0m0-23h0m0-63h0m1 104h0m0-41h0m0 55h0m1 47h0m0-12h0m1 31h0m1 92h0m0-107h0m0-75h0m1 59h0m0 37h0m1-41h0m0-105h0m0-28h0m0 134h0m0 76h0m1-66h0m0-166h0m0 173h0m0-137h0m1 108h0m0-19h0m1 12h0m0-66h0m0-71h0m0 85h0m0 29h0m0-46h0m0 144h0m1-62h0m0-122h0m0 138h0m1-101h0m0 55h0m0 29h0m0-38h0m1-63h0m1 40h0m1 17h0m0-33h0m0 90h0m0-50h0m0 14h0m1-4h0m0-60h0m0 65h0m1-64h0m0 36h0m0 52h0m1 22h0m0 24h0m0-2h0m1-21h0m0-61h0m1-4h0m0-52h0m1 88h0m1 48h0m1-184h0m0 208h0m0-13h0m1-89h0m0-6h0m1 18h0m1-62h0m0-43h0m0-62h0m1 131h0m0 91h0m0-103h0m0 18h0m1 71h0m0-4h0m0 73h0m0-41h0m1 50h0m0-223h0m0 176h0m1 57h0m1-210h0m0-11h0m0-17h0m0 230h0m1-174h0m0 90h0m1-102h0m0 101h0m1-37h0m0-17h0m0 48h0m0-32h0m1 82h0m0-168h0m0 175h0m1-28h0m0-61h0m0-75h0m1 39h0m1 21h0m0 94h0m0 15h0m3-126h0m0 168h0m0-118h0m2-61h0m0-8h0m0 132h0m0-122h0m1 81h0m0 113h0m0-145h0m1 35h0m0-150h0m0 151h0m1-116h0m0 140h0m1-46h0m0-114h0m0 161h0m0 31h0m0-71h0m1 11h0m0-59h0m0-91h0m0 61h0m1 29h0m0-55h0m1 62h0m1 187h0m0-221h0m0-11h0m0 77h0m0-22h0m0-7h0m0 129h0m0-131h0m0-17h0m1 89h0m0 7h0m0-49h0m1-52h0m0 171h0m0-78h0m0-160h0m1 117h0m0-105h0m1 107h0m0-50h0m1 53h0m0-69h0m0 105h0m1-41h0m1-21h0m1-6h0m0 65h0m0-82h0m0-52h0m1 85h0m1 85h0m1-46h0m1 50h0m0-6h0m1-69h0m1 94h0m0-67h0m0-88h0m0 166h0m1-121h0m0-57h0m1 81h0m0-50h0m1-60h0m0 111h0m1 43h0m1-118h0m0 4h0m1 102h0m1-99h0m0 64h0m0 150h0m1-32h0m0-133h0m0 15h0m1 12h0m0 23h0m0-81h0m1-50h0m0 24h0m0-23h0m2-32h0m0 192h0m0-38h0m0-29h0m1 57h0m0-96h0m1 98h0m1-8h0m0-70h0m0-39h0m1-66h0m0 139h0m1 62h0m1-86h0m0-41h0m0 6h0m1 84h0m0-44h0m0 33h0m1 34h0m0-124h0m0-111h0m1 156h0m0-112h0m1 55h0m0 55h0m1-1h0m0-60h0m1 53h0m0 138h0m1-213h0m1 68h0m0-22h0m2 78h0m0 29h0m0-79h0m1 54h0m0-41h0m0 53h0m1-69h0m0 5h0m0 34h0m1-81h0m0 3h0m0 156h0m0-25h0m1-85h0m0 36h0m0-14h0m1 65h0m0-138h0m0 45h0m0 62h0m0-23h0m0-35h0m0 47h0m1-47h0m0 128h0m0-30h0m1 22h0m0-53h0m0-98h0m0 45h0m0 11h0m1-12h0m0-15h0m0 129h0m0-128h0m1 51h0m0 31h0m0-1h0m0 20h0m0-108h0m1 61h0m0 103h0m0-175h0m0 69h0m1-20h0m0-78h0m0 55h0m0-20h0m1 50h0m0 11h0m1-59h0m0 13h0m1-20h0m0 98h0m0-11h0m0-58h0m1 35h0m0 50h0m0-108h0m1 56h0m0 24h0m0 47h0m1-175h0m0 107h0m0-98h0m1 98h0m0-82h0m0-44h0m0 59h0m0-120h0m0 102h0m0 52h0m0-64h0m1 89h0m1-60h0m0 159h0m1-175h0m0 113h0m0-36h0m0-3h0m1-6h0m0-38h0m0-63h0m2 168h0m1 24h0m0-88h0m1-141h0m0 171h0m0-6h0m0-63h0m0 47h0m0-9h0m2-150h0m0 135h0m1 34h0m0-43h0m0 140h0m1-81h0m0-117h0m0-1h0m0-62h0m1 229h0m0-118h0m1 20h0m0 131h0m0-112h0m0-121h0m2 109h0m0-36h0m0-7h0m1-7h0m0 70h0m1-48h0m0-73h0m0-18h0m0 171h0m0-29h0m1-108h0m0 228h0m0-249h0m1 105h0m0 21h0m0-44h0m1-17h0m1 43h0m0-15h0m0-40h0m0-5h0m1 41h0m0 85h0m1-104h0m0 15h0m1-38h0m0 46h0m1 32h0m0 58h0m0-87h0m1-71h0m0 131h0m0-147h0m0-52h0m0 102h0m1 54h0m0 105h0m0-115h0m1-52h0m0 83h0m1 35h0m1-203h0m0 103h0m0-31h0m1-18h0m0 78h0m0 55h0m0-94h0m1-10h0m0 140h0m0-75h0m0-105h0m1 185h0m0-156h0m0 98h0m0 34h0m2-23h0m1 33h0m0-35h0m1-52h0m0-58h0m0 28h0m1 91h0m1-154h0m0 63h0m0 19h0m0-108h0m1 5h0m0 120h0m0-25h0m1 72h0m1-56h0m0 104h0m0-33h0m0-26h0m1 65h0m0-70h0m0 18h0m0-81h0m0-57h0m0 42h0m1 17h0m1 25h0m0-101h0m0 28h0m0-36h0m1 37h0m0 77h0m0 39h0m0-148h0m0-66h0m1 233h0m0 18h0m0-73h0m1-34h0m0 26h0m0 7h0m1-95h0m1 84h0m0 9h0m1-60h0m1 84h0m1 45h0m1-73h0m0-93h0m1 86h0m0 66h0m0-217h0m1 91h0m0 113h0m0-80h0m0 32h0m1 16h0m0-110h0m0 82h0m0-21h0m1 117h0m0-132h0m0 84h0m0-14h0m1-98h0m0 117h0m1-23h0m0-53h0m0 65h0m0-10h0m1-71h0m0 55h0m1 97h0m0-212h0m0 53h0m1 15h0m0-37h0m1-12h0m0 17h0m0 42h0m0-9h0m0 6h0m1 120h0m0-214h0m0 168h0m2 0h0m0 4h0m0 23h0m1 52h0m0-152h0m0 47h0m1 50h0m0-45h0m0-48h0m0 95h0m2-61h0m0-13h0m0 1h0m0-14h0m0-5h0m1 67h0m0-51h0m1 67h0m0 25h0m0-103h0m0 62h0m0-90h0m1 64h0m0-158h0m0 246h0m1 22h0m0-129h0m1 8h0m0-142h0m0 175h0m1-82h0m0-3h0m0 132h0m1-69h0m0-69h0m0-5h0m1-18h0m1 43h0m0 58h0m1-4h0m2-14h0m0-21h0m0 68h0m0-90h0m1 5h0m0-48h0m2-19h0m0 128h0m1-89h0m0 48h0m0 82h0m0-170h0m1 145h0m0-20h0m0 22h0m0-11h0m0-62h0m1-31h0m1 169h0m0-106h0m1-21h0m0-41h0m0 92h0m1-31h0m0-62h0m0 102h0m0-59h0m0 15h0m2 28h0m0-56h0m1-82h0m0 158h0m0-21h0m1-104h0m1 22h0m1 78h0m0 150h0m0-113h0m1-91h0m0 2h0m1 33h0m0 41h0m0 117h0m2-111h0m0-25h0m1-104h0m0 126h0m1 20h0m0-108h0m0-32h0m1 125h0m0-83h0m0 97h0m3-118h0m1 72h0m1-30h0m0-95h0m0 90h0m0-85h0m0 224h0m1-135h0m0 31h0m0-28h0m1-37h0m0 76h0m0-21h0m0-49h0m1 44h0m0 50h0m0-83h0m0 108h0m1-51h0m0-68h0m0-21h0m1 135h0m0-18h0m0 12h0m0-41h0m0 122h0m1-80h0m0-127h0m1 104h0m0-129h0m1 108h0m0 3h0m0-83h0m1 22h0m0 53h0m0-83h0m1 30h0m0 48h0m0-35h0m1-40h0m0 52h0m1 59h0m0-106h0m0 48h0m1-74h0m1 29h0m0-3h0m1 116h0m0-70h0m1 47h0m0 25h0m0-24h0m1-40h0m2-68h0m0 67h0m0-111h0m0 105h0m0-38h0m0-50h0m2 9h0m0 136h0m1-36h0m0 13h0m1-125h0m0-18h0m1 107h0m0 45h0m1-60h0m1-60h0m0 80h0m0-56h0m1 15h0m1-36h0m0 126h0m1-52h0m1-18h0m0 34h0m1-2h0m0-136h0m0 246h0m1-118h0m0-45h0m0 35h0m1 81h0m1-131h0m0 36h0m0-37h0m1 80h0m1-115h0m0 147h0m1-109h0m1-99h0m0 76h0m0 34h0m0 16h0m0 18h0m1 62h0m0-50h0m0-3h0m0-53h0m0 18h0m0-5h0m0 7h0m0 93h0m1-118h0m0 62h0m1-33h0m0 87h0m1-102h0m0 81h0m1-146h0m0 55h0m0 198h0m2-209h0m0 121h0m0-31h0m1 60h0m0 62h0m2-142h0m0-25h0m0 49h0m0 66h0m0-138h0m0 48h0m0-54h0m1 40h0m1-109h0m0 123h0m0-18h0m1 45h0m1 93h0m0-124h0m0 86h0m1-42h0m1 23h0m0-110h0m0 40h0m1-51h0m1 4h0m0 68h0m1-85h0m0 94h0m0 45h0m1-132h0m0 38h0m1-48h0m0 133h0m1-6h0m1-27h0m0 29h0m0-41h0m1-61h0m0-62h0m1 118h0m0 24h0m1 26h0m0-85h0m0 152h0m0-263h0m1 261h0m0-121h0m0 88h0m0-120h0m1 38h0m1 2h0m0-18h0m0-39h0m0-49h0m1 150h0m0 55h0m0-79h0m1-17h0m0-37h0m0 31h0m0-26h0m1 62h0m0-69h0m0 25h0m1 14h0m0-81h0m0 53h0m1 55h0m0-62h0m1 4h0m0-7h0m0 7h0m1 102h0m0-71h0m0 28h0m1-119h0m0 71h0m1 81h0m0 22h0m0-140h0m1 107h0m0-23h0m0-114h0m0 0h0m1 125h0m0-84h0m0 67h0m1-68h0m0 61h0m0-23h0m0-59h0m0 134h0m1-82h0m1-12h0m0 47h0m0-66h0m0 106h0m1 21h0m0-62h0m0-48h0m0-49h0m0 118h0m0-14h0m1-98h0m0 96h0m0-66h0m0-8h0m1 24h0m0 98h0m0-181h0m1 31h0m0 162h0m0-41h0m0 22h0m0-157h0m0 59h0m2 54h0m0-65h0m0 3h0m1 23h0m0-130h0m1 74h0m0 74h0m1-74h0m0 102h0m1 10h0m1 27h0m0-238h0m0 114h0m0-14h0m1-30h0m0 151h0m0-185h0m0 56h0m0 26h0m1 41h0m0 39h0m0 53h0m1-81h0m1-71h0m0 28h0m0 117h0m1-128h0m1-9h0m0 30h0m0 145h0m0-98h0m0-48h0m1-27h0m0 66h0m0 63h0m0-62h0m1 56h0m1-125h0m0 20h0m0 25h0m1 99h0m0-162h0m0 42h0m0 36h0m1 127h0m2-127h0m2 53h0m0-11h0m0-30h0m0-39h0m1 139h0m1-116h0m0 22h0m0-32h0m1-45h0m0 176h0m0-40h0m0-81h0m0 101h0m1-139h0m0 77h0m0 61h0m1-148h0m0 96h0m0 65h0m1-199h0m0-3h0m0 39h0m0 22h0m0-65h0m1 130h0m0 44h0m0-75h0m1-34h0m0-67h0m0 60h0m0 73h0m0-1h0m1 35h0m0-24h0m0 43h0m0-161h0m1 43h0m0 70h0m0-15h0m0-37h0m1-2h0m1 42h0m0 11h0m0 55h0m0-93h0m0 62h0m1-3h0m0-103h0m0 25h0m1 112h0m0-12h0m0-70h0m1-63h0m0 38h0m1-9h0m1-16h0m0-15h0m0 56h0m0-10h0m1 71h0m1-128h0m0 74h0m0-62h0m0-18h0m2-23h0m0 7h0m1 90h0m0-59h0m0 112h0m0-64h0m2 4h0m0-23h0m0-22h0m0-3h0m1 43h0m0 73h0m0-37h0m1-84h0m0 1h0m0 19h0m1 11h0m0 74h0m0-16h0m1-145h0m0 141h0m1-30h0m0 43h0m1-11h0m0-201h0m0 171h0m1 64h0m0-24h0m0-63h0m0-144h0m0 231h0m1-67h0m0-40h0m0 24h0m0 8h0m0 83h0m0-3h0m1-162h0m0 171h0m0-103h0m1-59h0m1 54h0m0 19h0m0-12h0m1 0h0m0 16h0m1 20h0m0-53h0m0 48h0m1 65h0m0-92h0m0-78h0m0 95h0m0 70h0m0-94h0m1-3h0m0 79h0m0-45h0m0 20h0m1-3h0m1-44h0m1-75h0m0 24h0m1 122h0m2 0h0m0-69h0m0-44h0m1 121h0m0-97h0m0 15h0m1 95h0m0-148h0m1 119h0m0-100h0m0-85h0m1 208h0m1-104h0m0 55h0m1 18h0m0-4h0m1-48h0m0-87h0m0 38h0m1-105h0m0 49h0m2 93h0m1 31h0m1 19h0m0-41h0m1 5h0m0 0h0m0-48h0m0-20h0m0 154h0m0-157h0m1 31h0m0 54h0m1 10h0m0-58h0m1 193h0m0-40h0m1-118h0m0-40h0m0 15h0m0-9h0m0 99h0m1-25h0m0-103h0m1 132h0m0-90h0m0 1h0m1 31h0m0 55h0m1 59h0m2-112h0m1-8h0m0-14h0m0-6h0m1 64h0m1-40h0m0-46h0m0-14h0m0 11h0m0-74h0m1 130h0m1-40h0m0 95h0m0 40h0m1-135h0m0 27h0m0-16h0m1 88h0m0-23h0m1-4h0m1-115h0m0 36h0m0-74h0m0 137h0m2 7h0m1-12h0m0-78h0m1 79h0m0-107h0m0 118h0m0 104h0m1-255h0m1 52h0m0 40h0m0-9h0m1 58h0m0-53h0m0-44h0m0 50h0m1 26h0m0-48h0m0-19h0m0 47h0m1 107h0m1-4h0m0-122h0m1 54h0m1-75h0m0 15h0m1 92h0m0-23h0m1-61h0m0-13h0m0 31h0m0 8h0m0 41h0m1-108h0m0 109h0m0-57h0m1-81h0m0 41h0m1 13h0m1 17h0m0 84h0m0-68h0m1 63h0m0 39h0m1-69h0m0-134h0m0 147h0m1-127h0m0 126h0m0-3h0m0 97h0m0-97h0m1-40h0m0-60h0m0 96h0m0 57h0m1-224h0m0 162h0m1-59h0m0-26h0m0-86h0m0 137h0m0 25h0m1 2h0m0-62h0m1 12h0m0 89h0m1-53h0m0-44h0m0 37h0m1-49h0m1 36h0m0 92h0m1-90h0m0 71h0m0-37h0m1 74h0m0-88h0m0 106h0m0 29h0m1-126h0m1 129h0m0-177h0m1-27h0m0 111h0m0-55h0m0 57h0m1-95h0m0 81h0m0 83h0m0-148h0m0 117h0m0-159h0m0 91h0m1 140h0m0-243h0m1 134h0m1-37h0m0 70h0m0-160h0m1 227h0m0-112h0m1-102h0m0 129h0m0 13h0m0 32h0m0-81h0m1-34h0m0-7h0m0 98h0m1-125h0m0 97h0m1-35h0m0-141h0m0 182h0m0 46h0m1-74h0m0-71h0m1 171h0m0-131h0m1-31h0m0 160h0m0-29h0m0-66h0m1 21h0m0-153h0m0 48h0m1 51h0m1-36h0m0 15h0m0-10h0m0 15h0m0-26h0m0 141h0m0-159h0m1 61h0m0-27h0m0-1h0m1 112h0m0-93h0m0 126h0m0-196h0m1 175h0m0-78h0m1-106h0m0 234h0m0-141h0m0-37h0m2-6h0m1 44h0m0-36h0m0 6h0m0 133h0m0-28h0m0-43h0m1-150h0m0 169h0m0 31h0m1-199h0m1-15h0m0 153h0m0-50h0m1 59h0m0-51h0m1 12h0m0 22h0m0 52h0m0 66h0m0-11h0m1-93h0m0-24h0m0 30h0m0-24h0m0-42h0m1 71h0m1-1h0m1 10h0m0 63h0m1-122h0m1-101h0m1 109h0m1-75h0m0 68h0m0 3h0m1 26h0m0-1h0m0-63h0m1 106h0m0-118h0m1 63h0m0 33h0m1-45h0m0 61h0m1 49h0m0-11h0m0-24h0m1 11h0m1-154h0m0-13h0m0 150h0m1-160h0m0 60h0m1-20h0m0 62h0m0 32h0m0-73h0m2 85h0m0-22h0m1-87h0m0 7h0m0 84h0m0 30h0m1-105h0m0 159h0m0-95h0m0-96h0m0 48h0m0 58h0m1-31h0m0 51h0m0 7h0m0 18h0m0-78h0m1-39h0m1-28h0m0 42h0m0-40h0m0 2h0m1 62h0m0-16h0m0 76h0m0 34h0m0-152h0m1 76h0m1 59h0m0-180h0m0 109h0m0 17h0m1 66h0m0-151h0m0 66h0m0 57h0m1-71h0m0 35h0m0 7h0m0 87h0m1-70h0m0-7h0m0-111h0m1 149h0m0-91h0m0-3h0m0 5h0m0-71h0m1 31h0m0 38h0m0 7h0m0-67h0m0-30h0m2 69h0m1-41h0m1 15h0m0-7h0m0 81h0m0 22h0m0-104h0m2 28h0m0-76h0m1 96h0m0-5h0m0-24h0m0 137h0m0-115h0m0-117h0m0 186h0m0 35h0m1-89h0m1 41h0m1-36h0m0-44h0m1 25h0m0-9h0m0 36h0m1-88h0m1 173h0m0 53h0m1-144h0m0 45h0m0-22h0m1 28h0m0-33h0m0-65h0m1-14h0m1 48h0m0 95h0m0-77h0m0-78h0m1 92h0m0 46h0m1-35h0m0-14h0m0 81h0m1-42h0m1-17h0m1 30h0m0-103h0m1 67h0m0-24h0m1-52h0m2-57h0m1 170h0m1-138h0m0 2h0m0-19h0m0 150h0m1 27h0m1-206h0m1 43h0m0 134h0m1-151h0m0 71h0m1 3h0m1-50h0m1 66h0m0 0h0m0-14h0m1-68h0m0 90h0m0 51h0m0 60h0m0-186h0m0 85h0m0-60h0m0 147h0m1-74h0m0-26h0m0 162h0m1-178h0m2 8h0m1 75h0m0-115h0m0 32h0m0-41h0m2 8h0m1 124h0m0-108h0m0 11h0m0 79h0m1-154h0m0 24h0m1 76h0m0 100h0m1-82h0m0 37h0m0-13h0m0-77h0m1-33h0m0 96h0m1-101h0m1 102h0m0-21h0m0 19h0m1 8h0m0-143h0m1 18h0m0 29h0m1 113h0m1-170h0m1 106h0m0 43h0m0 36h0m0-24h0m1-91h0m1 63h0m0 60h0m1-93h0m0 89h0m0 33h0m1-55h0m0-113h0m0 84h0m1 36h0m1-80h0m0 33h0m1-168h0m1 185h0m0-62h0m0 21h0m1 99h0m0-115h0m1-45h0m0 106h0m1-41h0m0-13h0m0 85h0m0-171h0m1 104h0m0 8h0m0 5h0m1 45h0m0-101h0m0-29h0m0 35h0m0 71h0m1-24h0m0 33h0m0 3h0m0-19h0m0 37h0m2-167h0m0 78h0m0 104h0m0-80h0m0 124h0m1-224h0m0 176h0m1-119h0m0 107h0m0-53h0m0-85h0m1 37h0m0 41h0m0 40h0m1 37h0m1-65h0m0 0h0m0 62h0m1-117h0m0 95h0m0-33h0m0-1h0m0-48h0m1 35h0m0-67h0m1 48h0m1-17h0m0 6h0m1-32h0m0-8h0m0 7h0m1-8h0m0 71h0m0-140h0m1 143h0m0-47h0m1 63h0m0-82h0m0 56h0m0 35h0m1-8h0m0-31h0m0 31h0m0-71h0m1 53h0m1-26h0m0-27h0m0-13h0m0-20h0m1 13h0m0-38h0m0 65h0m0 73h0m2-37h0m0 130h0m0-215h0m1 13h0m0 174h0m1-100h0m0 88h0m0-81h0m0-72h0m0-12h0m1 78h0m1-63h0m0 156h0m0-11h0m0-172h0m1 155h0m0-141h0m0 125h0m1-68h0m0 192h0m0-134h0m0-141h0m1 127h0m0 11h0m0-107h0m0 65h0m1 81h0m0 17h0m0-67h0m1-17h0m0 13h0m0 59h0m1-84h0m0-23h0m0-83h0m0 87h0m1-46h0m0 199h0m1-238h0m0 93h0m1 87h0m0-82h0m0 1h0m1-23h0m0-22h0m0 91h0m0-38h0m1-10h0m0 164h0m0-131h0m0-12h0m1 0h0m0-20h0m1 42h0m0-51h0m1-38h0m0 100h0m0-5h0m1-115h0m1 2h0m0 85h0m0 83h0m0-127h0m0 160h0m0-209h0m1 86h0m0-47h0m0 93h0m1-78h0m0-9h0m0 47h0m0 86h0m1-12h0m0-35h0m1-79h0m1-30h0m1 4h0m0 92h0m1-78h0m0 85h0m1 29h0m1-86h0m0-14h0m1 52h0m0-70h0m0 53h0m1-72h0m1 22h0m0 111h0m0-13h0m0 71h0m1-118h0m1 5h0m0-26h0m0 26h0m0-64h0m0 79h0m1 41h0m0-156h0m1 82h0m0 69h0m0-136h0m0 164h0m0-220h0m1 44h0m0 142h0m0 58h0m0-17h0m0-53h0m0 41h0m1-73h0m0-94h0m1 106h0m1-27h0m0 47h0m0 10h0m0-128h0m0 141h0m1 30h0m1-79h0m0 30h0m0-126h0m0-26h0m0 52h0m1-15h0m0 159h0m0-93h0m1-12h0m1-59h0m0-18h0m0 62h0m0 166h0m1-212h0m0 132h0m0-13h0m0 1h0m0-56h0m1-36h0m0 156h0m1-243h0m0 116h0m0 57h0m0-5h0m1-44h0m0 96h0m1-93h0m1 25h0m0-85h0m1 21h0m0 102h0m0-97h0m0 14h0m0-47h0m1 37h0m0-38h0m0 85h0m0-135h0m0 69h0m0 7h0m1 17h0m0 140h0m0-111h0m0 69h0m0-36h0m0-158h0m1 53h0m0 74h0m0 13h0m1 61h0m0-31h0m1-101h0m1 88h0m0 43h0m0-86h0m0-2h0m0-14h0m1 8h0m0-54h0m1 210h0m0-62h0m2-30h0m0 23h0m0-22h0m1-47h0m1 10h0m0-74h0m1 22h0m1-15h0m0 22h0m0 71h0m0-170h0m1 146h0m0-29h0m1 38h0m0 39h0m1-17h0m0-112h0m0 59h0m1-29h0m1 78h0m0-31h0m1 45h0m2-94h0m1 22h0m0 74h0m0-88h0m1 39h0m0 79h0m0-164h0m1 144h0m0-61h0m0 21h0m0-107h0m1 74h0m0 80h0m0-2h0m1-72h0m0 32h0m0-57h0m2 85h0m0-33h0m0-41h0m0 67h0m1-52h0m0 56h0m0 0h0m0-134h0m1-15h0m0 50h0m0-23h0m0 70h0m0-23h0m1 53h0m0-105h0m0 113h0m0-33h0m0 28h0m1-35h0m0 24h0m0-21h0m1-21h0m1-1h0m1 81h0m1-136h0m2 65h0m1-9h0m0 23h0m0-33h0m0-34h0m0-10h0m0 57h0m0-12h0m1 113h0m0-106h0m1 35h0m0-35h0m1-110h0m1 231h0m0-139h0m0 63h0m1 7h0m0-56h0m1 5h0m0 54h0m1-155h0m1 83h0m1 75h0m0 39h0m0-91h0m1 31h0m0-108h0m0 142h0m0-11h0m1 25h0m0-112h0m1-13h0m0 97h0m1 7h0m0-67h0m0-39h0m1 102h0m0-144h0m0 140h0m0-79h0m0-13h0m0 120h0m1 5h0m0-89h0m0 119h0m0-101h0m0 47h0m0-62h0m1-3h0m1 62h0m0-86h0m0 19h0m1 12h0m0 63h0m0-69h0m0 25h0m0-5h0m1 25h0m0 36h0m0 62h0m1-175h0m0-31h0m0 99h0m0-97h0m0 58h0m1 27h0m0 5h0m0-125h0m0 144h0m0-170h0m0 193h0m1-59h0m0-32h0m0-78h0m0 73h0m1 50h0m0 44h0m1-91h0m0 4h0m0 64h0m0-66h0m0 43h0m1 4h0m0-108h0m0 81h0m0-19h0m0 120h0m1-9h0m0-17h0m0-80h0m0 100h0m1-97h0m0 23h0m0 21h0m1-76h0m0 158h0m0-137h0m1-1h0m0 0h0m0 50h0m0-88h0m0 99h0m1-31h0m0-22h0m1-30h0m0 109h0m1-104h0m0 29h0m0-75h0m0 43h0m1 70h0m0-96h0m0 82h0m0-103h0m1 151h0m0 53h0m0-139h0m0-26h0m0 85h0m0 35h0m1-57h0m0-3h0m0-30h0m0 38h0m0-33h0m0-54h0m1 69h0m0-60h0m0-53h0m0 129h0m1-119h0m0 167h0m0-33h0m0-25h0m0 19h0m0 7h0m0-72h0m1 7h0m2 86h0m0-54h0m0-23h0m1-44h0m0-41h0m0 73h0m1 64h0m0 25h0m1-44h0m0 66h0m0-71h0m0 9h0m1-23h0m2 93h0m0-90h0m1-6h0m0 22h0m0-20h0m0-31h0m1-29h0m0 114h0m1-69h0m0-34h0m0 53h0m0 22h0m1-63h0m0 177h0m0-127h0m1 5h0m1 76h0m0 10h0m1-92h0m0-96h0m1 213h0m0-132h0m0 40h0m1 77h0m1-66h0m1-12h0m1 105h0m1-111h0m0-12h0m1-49h0m0 62h0m1-43h0m0 149h0m1-131h0m0-62h0m1 21h0m0 11h0m0-89h0m1 93h0m1 10h0m0 24h0m0-65h0m0 120h0m1 18h0m0-98h0m1 26h0m0-59h0m0-53h0m0 112h0m1 7h0m0-8h0m0-33h0m0 35h0m1 45h0m0 28h0m0-125h0m0 101h0m1-121h0m1-22h0m0 80h0m0-43h0m1-29h0m0 56h0m0 103h0m1-115h0m0 58h0m0-8h0m1-65h0m0 144h0m1-23h0m0 15h0m0-92h0m0 54h0m0-27h0m1-29h0m1-73h0m0 47h0m0 100h0m0-127h0m1 121h0m0-21h0m1-1h0m0-55h0m0 31h0m1 42h0m0-104h0m1 33h0m0 30h0m1 50h0m0-114h0m0-24h0m1 84h0m0 56h0m0-99h0m0 15h0m1-40h0m0 75h0m0-43h0m0 13h0m1 31h0m0 119h0m0-156h0m0 35h0m1-17h0m1-34h0m0 16h0m2-5h0m0-68h0m1 132h0m1 5h0m0 15h0m1-3h0m0-70h0m0 103h0m0-36h0m1-62h0m0-25h0m0 62h0m2-94h0m0 128h0m0-63h0m0-52h0m0 49h0m1 119h0m1-99h0m0-67h0m0 54h0m0-85h0m1 50h0m0 9h0m0-27h0m0 61h0m0-55h0m1 69h0m0 13h0m0-108h0m1 203h0m0-117h0m0 5h0m1-90h0m0 64h0m1 4h0m0-84h0m0 111h0m0 11h0m1-27h0m0 90h0m0 42h0m1-186h0m0 165h0m0-156h0m1-13h0m0 13h0m0-7h0m1-6h0m0 28h0m0 48h0m0-82h0m0-9h0m1 51h0m1 100h0m0 61h0m0-191h0m1 58h0m0 69h0m1-32h0m0-54h0m0-25h0m1-15h0m0 20h0m0-60h0m1 25h0m2 27h0m0 3h0m0-21h0m0 115h0m1-83h0m0-1h0m0 63h0m1-24h0m0 27h0m0-111h0m1 131h0m0-119h0m0 20h0m1 32h0m1 66h0m0-66h0m1 7h0m0 85h0m0-80h0m0 28h0m1-124h0m1 106h0m0-41h0m0 106h0m1-50h0m0-43h0m0 27h0m1-24h0m0 23h0m1 15h0m0-38h0m0-26h0m1 71h0m0-29h0m1-106h0m1 44h0m1 89h0m0 6h0m0 105h0m0-85h0m1-119h0m1 40h0m1 63h0m0-212h0m1 233h0m0-154h0m0 106h0m1-22h0m0 41h0m0-32h0m0-32h0m1-1h0m0 47h0m1-20h0m0 57h0m0-40h0m1 58h0m0 28h0m0 13h0m1-168h0m0 28h0m0 105h0m0-73h0m2 40h0m0-179h0m0 89h0m0 83h0m1-30h0m0-23h0m0 9h0m2 23h0m0-29h0m1 37h0m0-11h0m0 78h0m1-106h0m1 62h0m0 46h0m0-209h0m0 127h0m1-18h0m0 87h0m0-69h0m2-53h0m1 11h0m0-14h0m1 58h0m0-24h0m1 120h0m0-71h0m2-19h0m2-7h0m0-5h0m0-68h0m0 142h0m1-31h0m0-23h0m0 64h0m0-113h0m1-29h0m0 64h0m1 101h0m1-121h0m0-38h0m0 47h0m0-12h0m1 82h0m0-25h0m0-41h0m2-11h0m0-40h0m1 86h0m0 40h0m0-107h0m0 107h0m0-92h0m1-102h0m0 204h0m0-67h0m0-93h0m1 51h0m1-48h0m0 33h0m0-64h0m0 195h0m1-37h0m0-58h0m1-43h0m0-73h0m0 149h0m1-5h0m0-115h0m0 73h0m1-61h0m0-12h0m0 189h0m0-59h0m1-91h0m1 59h0m1-42h0m0 23h0m1-36h0m0 42h0m1-104h0m0 122h0m1-88h0m0 19h0m0 40h0m1-21h0m0 57h0m2-48h0m0-83h0m1 28h0m0 132h0m1-41h0m1-48h0m0-1h0m2 104h0m0-62h0m1-52h0m1 90h0m0-8h0m1-43h0m0 39h0m1 3h0m1-95h0m1 31h0m1-3h0m0-55h0m1-22h0m0 120h0m1 57h0m0 65h0m1-63h0m0-129h0m1 39h0m0 37h0m0 86h0m0-167h0m1-60h0m0 145h0m0-82h0m0 197h0m1-128h0m0 14h0m1-41h0m1-89h0m1 221h0m0-74h0m0-33h0m1-121h0m0 122h0m1 42h0m0-11h0m0 58h0m0-61h0m0 18h0m0-58h0m1-67h0m0 121h0m0-54h0m1-55h0m0 28h0m1 81h0m0-45h0m0 65h0m0-65h0m0-14h0m2-72h0m0 57h0m2-24h0m0 60h0m0-22h0m0-9h0m2-49h0m0 81h0m0 9h0m1 7h0m0 58h0m1-140h0m0-20h0m0 108h0m0 26h0m1-16h0m0-48h0m0-9h0m1 81h0m0-10h0m0-5h0m0-59h0m0 69h0m0-139h0m1 176h0m0-118h0m0-9h0m0 131h0m1-87h0m0 15h0m1 9h0m0 34h0m1-112h0m0 99h0m1-79h0m1-91h0m0 139h0m1-71h0m0-14h0m0 36h0m0 115h0m1-170h0m0 110h0m0-60h0m0 7h0m2-39h0m1 35h0m1-16h0m0 69h0m0-116h0m0 55h0m1 87h0m0-105h0m1 4h0m0 49h0m1-13h0m0 34h0m0 65h0m1-135h0m0 51h0m0 10h0m0-50h0m0 60h0m0-25h0m1 49h0m0 7h0m0-74h0m0-35h0m1 20h0m0-8h0m0 43h0m0-36h0m1 121h0m0-174h0m0 41h0m0 5h0m0 81h0m0-25h0m0-86h0m1 85h0m1 24h0m0-102h0m0-2h0m0 61h0m0-7h0m1-58h0m0 126h0m1-131h0m1-13h0m0 172h0m2-127h0m0-39h0m0 101h0m0-2h0m1 21h0m0-40h0m1-70h0m1 110h0m0 13h0m0 63h0m1-178h0m0 23h0m0-9h0m0 4h0m1 117h0m1-89h0m0 24h0m1-13h0m0-121h0m0 100h0m0-56h0m2 125h0m1-43h0m1 60h0m0-123h0m0 131h0m1-115h0m0 34h0m0 111h0m1-23h0m1 20h0m0-43h0m0-73h0m1 43h0m0-31h0m0 57h0m1-31h0m0-9h0m1-66h0m1 13h0m0 114h0m0-128h0m2-61h0m1 74h0m0-39h0m1 27h0m0 115h0m0-67h0m1-29h0m0-60h0m1 89h0m0 112h0m0-146h0m0 34h0m1-97h0m0 138h0m0-127h0m1 59h0m0 65h0m1-66h0m0-58h0m2 110h0m0-47h0m1 43h0m0 8h0m1-78h0m0 136h0m0-149h0m0-16h0m1 66h0m0 73h0m0-84h0m1 26h0m0 53h0m0-99h0m0 181h0m1-129h0m0-70h0m0-96h0m1 155h0m0-83h0m0 66h0m0 26h0m1-39h0m2 120h0m0-45h0m0-145h0m0 173h0m1-65h0m0 9h0m0-86h0m0 68h0m1-32h0m0 49h0m1 18h0m0-15h0m1-14h0m1-26h0m0 179h0m0-230h0m1 93h0m0-69h0m0 78h0m0-41h0m1 141h0m0-100h0m1 24h0m0 48h0m1-31h0m0-13h0m0-124h0m0-17h0m0 9h0m0 0h0m1 64h0m1 60h0m1-22h0m0-21h0m0 70h0m1-154h0m0 119h0m0 37h0m0-63h0m0-71h0m1 135h0m1-69h0m1 36h0m1-124h0m0 59h0m0 23h0m1 18h0m0 65h0m0-122h0m1 55h0m0 2h0m0-44h0m0-19h0m0-22h0m0 11h0m0 97h0m1-95h0m0-16h0m0 54h0m0-95h0m1 156h0m0-90h0m0 35h0m1-29h0m0-53h0m1 177h0m0-123h0m1 13h0m3-8h0m1 47h0m0-25h0m0-91h0m0 114h0m1 74h0m0-58h0m0-174h0m0 243h0m0-86h0m0-87h0m0 106h0m1-5h0m0-13h0m0 25h0m1-34h0m0 63h0m0-88h0m0 22h0m0-57h0m1 47h0m0 41h0m1-90h0m0 66h0m1-112h0m0 43h0m0-4h0m1 3h0m0-8h0m0 23h0m0 59h0m1-41h0m1 174h0m0-159h0m1-31h0m0 23h0m1 47h0m0-8h0m1-154h0m0 147h0m1-53h0m0-82h0m0 67h0m1 110h0m1-48h0m0-29h0m0 35h0m1 8h0m0-54h0m1 58h0m0 17h0m1 30h0m1-141h0m0 95h0m0 47h0m1-49h0m0-8h0m1-39h0m0-18h0m0 47h0m0-3h0m1-19h0m0 40h0m0-37h0m0-9h0m1 140h0m0-69h0m1-154h0m0 61h0m1 84h0m0-24h0m0 82h0m1-201h0m0 210h0m0-136h0m0 90h0m0-109h0m0-112h0m1 203h0m0-36h0m1-93h0m0 44h0m0 71h0m1-72h0m0-43h0m0 70h0m0-21h0m1 110h0m0-67h0m0 17h0m0-75h0m0 122h0m1-18h0m0-79h0m1-7h0m0 0h0m0 144h0m1-88h0m0 41h0m0-57h0m0 169h0m1-147h0m0-72h0m1-30h0m0 113h0m0-82h0m1 112h0m0-34h0m1-70h0m0 37h0m0-28h0m0 69h0m1-7h0m0-42h0m0 36h0m0 15h0m1-26h0m1 58h0m0 39h0m1-51h0m0-72h0m0-25h0m0 34h0m1 8h0m0-143h0m1 108h0m0 20h0m1 54h0m0-68h0m0 44h0m1-42h0m0-15h0m0 6h0m0-73h0m0 14h0m1 80h0m1-123h0m0 179h0m0 4h0m0-22h0m1-82h0m0 163h0m0-136h0m2-58h0m0 54h0m0 69h0m1-98h0m0 56h0m0-54h0m0 66h0m1 115h0m0-64h0m0-94h0m0 101h0m2-12h0m0-71h0m0-93h0m0 88h0m1 46h0m0 38h0m0-87h0m1-11h0m0 93h0m1 17h0m1-115h0m0 85h0m0-141h0m0 144h0m0-44h0m1 78h0m1-61h0m0-102h0m1 146h0m1-29h0m0-60h0m2 32h0m0-76h0m0 70h0m1 98h0m1-72h0m2 37h0m0-78h0m2 59h0m1-52h0m2-35h0m1 71h0m0-77h0m1 26h0m0 18h0m1-32h0m0-24h0m0 4h0m0 59h0m2 6h0m0-61h0m0 67h0m1-68h0m0 86h0m0-37h0m0-16h0m0 26h0m0-10h0m1 69h0m0-57h0m0-76h0m0 78h0m1-15h0m0 61h0m0-171h0m0 186h0m0-65h0m1-15h0m0 91h0m2-68h0m0 16h0m0-71h0m0 53h0m0 23h0m0-37h0m1-21h0m0-63h0m0 143h0m0-61h0m0-67h0m0 79h0m1 36h0m0-91h0m0-22h0m0 53h0m1-47h0m0 60h0m0-21h0m0 18h0m0 20h0m0 104h0m0-178h0m2 50h0m0 26h0m0 43h0m1-43h0m0 57h0m0-85h0m1-128h0m1 273h0m0-213h0m1 152h0m0-98h0m0 114h0m0-26h0m0-36h0m1 12h0m0-79h0m0 25h0m0-24h0m0 23h0m1-134h0m0 103h0m0-57h0m0 86h0m1-53h0m0 112h0m1-46h0m0-65h0m1 144h0m0-19h0m0-111h0m0 132h0m2-238h0m0 167h0m0-20h0m1 16h0m0-80h0m1 88h0m0 69h0m0-36h0m1-84h0m1 1h0m0-28h0m1 59h0m1-45h0m0 53h0m0-112h0m0 94h0m0 66h0m1-58h0m0-44h0m0 24h0m1-81h0m0-31h0m0 122h0m0-11h0m1-37h0m0 8h0m0-25h0m1 111h0m0 15h0m0-16h0m0 52h0m1-155h0m1 67h0m1-1h0m0-79h0m0 120h0m0-70h0m0 106h0m1 43h0m0-65h0m0 37h0m0-63h0m0 30h0m1 7h0m0-76h0m0 155h0m1-177h0m0 23h0m0 78h0m1-167h0m0 38h0m0 46h0m0 45h0m0-138h0m0 201h0m0-74h0m1 36h0m1-47h0m0-17h0m0-46h0m0 114h0m0-61h0m1-7h0m0-20h0m0 78h0m0 90h0m1-189h0m1-37h0m0 110h0m0 89h0m1-30h0m0-24h0m1 70h0m0-215h0m0 124h0m0-102h0m2 70h0m0 106h0m1-156h0m0-14h0m0 142h0m0-109h0m2 102h0m0-84h0m0-44h0m0 108h0m1 107h0m0-180h0m0-26h0m0-12h0m1 170h0m0-143h0m0 67h0m1-21h0m1-93h0m1 147h0m0-22h0m0-30h0m0-1h0m1 49h0m0-122h0m0 55h0m1 134h0m0-122h0m1-80h0m0-3h0m0 24h0m0 49h0m1-95h0m1 125h0m1 38h0m1-45h0m0-47h0m1-95h0m0 193h0m0-108h0m0 27h0m1 10h0m1-51h0m1-14h0m0 50h0m0 62h0m1-59h0m0-8h0m1-21h0m0 61h0m0-18h0m1 48h0m1-103h0m0 75h0m0-5h0m0 47h0m1-40h0m0-26h0m0 7h0m0 1h0m1 38h0m0-53h0m1-2h0m0 49h0m0-20h0m1 16h0m0-87h0m0 64h0m0-9h0m1-109h0m0 122h0m1 4h0m0 7h0m0-91h0m1 149h0m0-25h0m0-112h0m1 131h0m0-229h0m0 245h0m1-174h0m1 144h0m0-76h0m0 67h0m0-90h0m0-67h0m1 68h0m0 32h0m1-12h0m0 20h0m1-125h0m1 185h0m0-33h0m0 2h0m0-30h0m2-2h0m0-4h0m0-103h0m0 137h0m1-1h0m0 99h0m0-145h0m0 63h0m1-61h0m0 19h0m0-70h0m0 47h0m0-16h0m1 117h0m0-29h0m1 2h0m0-164h0m0 73h0m1-29h0m0 84h0m1-28h0m0-9h0m1 41h0m0-68h0m0 33h0m0-7h0m0 47h0m1 21h0m0-103h0m1 109h0m1-74h0m0-35h0m0 13h0m1 36h0m0 51h0m0-76h0m0-55h0m0-37h0m0 56h0m1 72h0m0 38h0m0-101h0m0 106h0m0-80h0m1 27h0m0 15h0m0-30h0m1 163h0m0 0h0m0-161h0m0 132h0m1-86h0m0-34h0m0-41h0m0 1h0m0 116h0m1-48h0m0 74h0m1-160h0m0-45h0m0 55h0m2 59h0m0-13h0m0 96h0m0-147h0m0-24h0m1-18h0m0 120h0m0-92h0m0 113h0m0-63h0m0 58h0m1-46h0m0-21h0m1 51h0m0-98h0m2 17h0m0 53h0m0-61h0m0 157h0m1-24h0m1-123h0m0-89h0m0 144h0m0-84h0m1 127h0m0-56h0m1 88h0m0 26h0m1-95h0m0 17h0m0 88h0m0-137h0m0 22h0m1-29h0m0 7h0m0 75h0m1-22h0m0 3h0m1-58h0m0-99h0m1 98h0m0 49h0m0-93h0m1-44h0m1 115h0m0 47h0m0-118h0m0 15h0m1 90h0m0-32h0m1 39h0m0 47h0m0-65h0m0 51h0m1-97h0m0 36h0m0 165h0m0-261h0m1 174h0m1-103h0m1 93h0m0 2h0m0-196h0m1 128h0m0 39h0m0-64h0m1-5h0m0-57h0m0 135h0m0-89h0m0 112h0m0-41h0m0-35h0m1-12h0m0-1h0m1-50h0m0 20h0m0 85h0m0-24h0m0 29h0m0-71h0m1-20h0m0 58h0m0-34h0m1-34h0m0 154h0m0-149h0m1 5h0m1-26h0m0 109h0m0-72h0m0 51h0m1-98h0m0 50h0m1 21h0m0 47h0m0-79h0m0 95h0m0-96h0m0 17h0m1 62h0m0 38h0m1 13h0m0-54h0m0-91h0m0 65h0m0-44h0m1 68h0m0 0h0m1-13h0m0-96h0m0-50h0m1 84h0m0 63h0m0-3h0m0 14h0m1-15h0m0-9h0m0-72h0m0 85h0m1-18h0m0-23h0m0 10h0m0-77h0m1 153h0m0-13h0m1-122h0m0 107h0m0-99h0m0 155h0m1-22h0m0-79h0m0 12h0m0-15h0m1-28h0m0 110h0m0-38h0m1-122h0m0 60h0m0 165h0m1-25h0m1-137h0m0 130h0m0-141h0m1-18h0m1-75h0m0 211h0m1-128h0m0 148h0m1-28h0m0-15h0m0-119h0m0 145h0m0-105h0m1 143h0m1-54h0m0-34h0m1-62h0m0 121h0m0-108h0m1 47h0m0-48h0m1-4h0m0 122h0m0-159h0m0 96h0m0-68h0m2-4h0m0 120h0m2-70h0m0 0h0m0-40h0m1 156h0m0-248h0m1 209h0m0-131h0m1-72h0m0 146h0m0-128h0m1 100h0m0-67h0m0-1h0m1 106h0m0-56h0m1 114h0m0-80h0m1 0h0m0 71h0m0-26h0m0 18h0m1-59h0m0-58h0m1-4h0m0 108h0m1 22h0m0-81h0m1-72h0m0 63h0m0-92h0m0 68h0m1-31h0m1 91h0m0 88h0m2-198h0m0 51h0m0-18h0m0-78h0m1 85h0m0-46h0m0 138h0m1 102h0m1-222h0m0 104h0m0-28h0m0-2h0m1-93h0m0 154h0m0-40h0m1-67h0m0 42h0m0 48h0m1-43h0m0 30h0m1 28h0m1-37h0m1-33h0m0-56h0m0 150h0m0-108h0m0 33h0m1-84h0m0 75h0m1 14h0m1-90h0m0 34h0m0 85h0m2-131h0m1 27h0m0 37h0m0 20h0m0-64h0m0 6h0m1 80h0m0-82h0m0 38h0m0 5h0m1-6h0m0 39h0m1-3h0m0 29h0m0-4h0m1 3h0m1-55h0m0-121h0m0 110h0m0 3h0m1 79h0m1-46h0m0 4h0m0-37h0m1 8h0m0 72h0m1-76h0m0-36h0m0 82h0m0-106h0m1 73h0m0 28h0m1-58h0m0-104h0m1 43h0m0 128h0m0-16h0m0-19h0m0-35h0m1-146h0m0 83h0m0 77h0m0 107h0m0-65h0m0-24h0m0-22h0m0 44h0m1 60h0m0-22h0m1 18h0m0-61h0m0-84h0m0 24h0m0 0h0m1 108h0m0-108h0m1 33h0m0 54h0m1-87h0m0 104h0m0-142h0m1 130h0m0-38h0m0-99h0m0 178h0m0-96h0m0 5h0m0 30h0m1 67h0m0-142h0m0 32h0m0-68h0m2 36h0m1 62h0m1-105h0m0 138h0m1 16h0m0-163h0m0 90h0m0-88h0m0 28h0m1 131h0m0-165h0m0 81h0m0 21h0m0 3h0m1-107h0m0 173h0m1-14h0m1-63h0m0-4h0m0-101h0m0 41h0m1 29h0m0 69h0m1-31h0m0 53h0m1-96h0m0-78h0m0 6h0m0 111h0m1 50h0m0-60h0m0 36h0m0 97h0m0-79h0m1-42h0m0 118h0m0-139h0m0-21h0m1 109h0m0-18h0m0-123h0m0 43h0m1 23h0m0-29h0m0 80h0m1-100h0m0 82h0m0-7h0m0-62h0m1 27h0m0-2h0m0-62h0m0 11h0m0-2h0m1 3h0m0 61h0m1-46h0m3 83h0m0-14h0m0-74h0m0 156h0m1-17h0m0 27h0m0-155h0m2 37h0m0-32h0m1-1h0m0-19h0m0 20h0m1 42h0m1-42h0m0-64h0m0 21h0m0 12h0m1 0h0m2 130h0m0-153h0m0 80h0m0 11h0m0-21h0m1 106h0m0-163h0m0 171h0m0-173h0m0 150h0m1-92h0m0 10h0m1-47h0m0 91h0m0-51h0m1-64h0m0-12h0m0 79h0m1-28h0m0 75h0m0-115h0m1 94h0m0 29h0m0-30h0m1 16h0m0 29h0m1-112h0m0-12h0m1 117h0m0-33h0m0 55h0m0 91h0m1-146h0m0-15h0m1 45h0m0 41h0m0-113h0m1 14h0m0 103h0m0-142h0m2-36h0m0 144h0m0 22h0m0-17h0m1-25h0m0-93h0m0 70h0m1 46h0m0 14h0m0-134h0m1 32h0m0 68h0m0-81h0m0-38h0m0 34h0m0-12h0m2 77h0m0-14h0m1-19h0m0-6h0m0 13h0m0 64h0m1-177h0m0 203h0m0 57h0m1-276h0m1 197h0m2-70h0m0 9h0m0-3h0m1-66h0m0 33h0m0 98h0m0-3h0m0-146h0m1 47h0m0-5h0m0-2h0m1 106h0m0-130h0m0 51h0m1 25h0m0 51h0m1-47h0m0-43h0m0 19h0m0 6h0m0-6h0m1-67h0m0 177h0m1-71h0m0-115h0m0 75h0m1-44h0m0 38h0m0 16h0m0 101h0m1-132h0m0 103h0m0-94h0m0 63h0m1-84h0m0 35h0m1 63h0m0 73h0m0-179h0m2-30h0m0 45h0m0-58h0m0 110h0m1-26h0m0 41h0m1 28h0m0-149h0m0 4h0m0 76h0m1 60h0m0-44h0m0-70h0m1 24h0m1-10h0m1 69h0m0 21h0m0-73h0m2 43h0m0-25h0m0 78h0m1-87h0m0-11h0m0 12h0m0 53h0m0-63h0m0 35h0m0-73h0m1 149h0m0-10h0m1 25h0m0-79h0m1-140h0m0 155h0m0-5h0m2-121h0m0 36h0m0 94h0m0-165h0m1 106h0m0 68h0m0-91h0m0 169h0m0-43h0m0-25h0m1-26h0m1-57h0m0 10h0m0-79h0m1 117h0m0-11h0m0-119h0m0 95h0m1 64h0m1-96h0m0-7h0m0 94h0m1-127h0m1 140h0m0 55h0m0-141h0m0-36h0m1 109h0m0-28h0m1-95h0m0 232h0m1-184h0m0 40h0m0 28h0m0-59h0m0-30h0m1 98h0m0 91h0m0-120h0m1 49h0m0 12h0m0-55h0m0 10h0m1 77h0m1-87h0m0-109h0m1 112h0m0 2h0m0-111h0m0 69h0m0-105h0m1 220h0m0-178h0m1-27h0m1 157h0m0 33h0m0-74h0m0 36h0m1 0h0m0 16h0m1-90h0m0-26h0m0 50h0m0 111h0m1-61h0m1 20h0m0-65h0m0 54h0m1 116h0m0-161h0m0-101h0m1 78h0m0 10h0m0-42h0m0 31h0m0-1h0m1 62h0m0 37h0m1-92h0m0-4h0m0-58h0m1 89h0m1 0h0m1 22h0m0-103h0m0 5h0m1-20h0m0 90h0m0-35h0m1 21h0m0-96h0m2 34h0m0 125h0m0-50h0m0-32h0m0-103h0m0 102h0m1-72h0m0 116h0m0-60h0m1 45h0m1-29h0m0-40h0m3 75h0m1 5h0m0 52h0m0-122h0m1-60h0m0 167h0m1 38h0m0-118h0m0-3h0m0-3h0m0-41h0m1 36h0m1 86h0m0-98h0m1 85h0m0-32h0m1 10h0m0 32h0m0-9h0m1-81h0m0 128h0m0-154h0m1 131h0m0-129h0m0 152h0m1 28h0m0-233h0m1 90h0m0 28h0m2-29h0m0 82h0m1-41h0m0-57h0m1 27h0m1-13h0m0 80h0m1-53h0m0-27h0m0 100h0m0-32h0m2-32h0m1-62h0m0 86h0m1-52h0m0 61h0m1-87h0m0 151h0m0-114h0m0 65h0m1-35h0m0 29h0m1-90h0m1-12h0m0-47h0m1 123h0m0 43h0m0-98h0m1-333h0m0-6h0m1 78h0m1-58h0m0 19h0m1 20h0m0-12h0m0-68h0m0 31h0m1-23h0m0-40h0m0 61h0m0 18h0m0 3h0m1-32h0m2 24h0m1-19h0m0-15h0m1 16h0m0 66h0m1-95h0m0 40h0m0 12h0m0-23h0m2-9h0m0-90h0m1 110h0m0 96h0m0-115h0m0 17h0m1-31h0m0 37h0m2-130h0m0 121h0m1-37h0m0 18h0m0-21h0m1 67h0m1-18h0m0 18h0m0-48h0m1-8h0m1-31h0m0 66h0m0 22h0m0-64h0m2 22h0m1 89h0m1-150h0m0 22h0m0 131h0m1-83h0m0-61h0m0-9h0m2 106h0m0 13h0m1-26h0m1-66h0m0 3h0m1-46h0m1 119h0m0 18h0m0-45h0m1-24h0m0-15h0m1 286h0m2 30h0m1 78h0m2-35h0m1-29h0m4 63h0m1-18h0m0 16h0m1-48h0m1-106h0m1 134h0m2-20h0m1 4h0m1-313h0m0 59h0m0 47h0m0-3h0m0-120h0m0 65h0m0-97h0m0 149h0m1 72h0m0-49h0m1-84h0m2-53h0m0 229h0m2-185h0m0 109h0m0 23h0m0-198h0m0 106h0m1-52h0m1-20h0m0 137h0m2-57h0m0-148h0m0 206h0m1-40h0m0 42h0m0-17h0m1 22h0m0-65h0m1 64h0m0-121h0m1 103h0m0-68h0m0-25h0m0 35h0m0 38h0m4 31h0m0 0h0m0-133h0m0 64h0m3-1h0m0 64h0m0-165h0m0 144h0m0 32h0m0-111h0m2 31h0m1 102h0m1-130h0m0 142h0m0-229h0m1 197h0m1-93h0m0-37h0m2 62h0m1 69h0m0-51h0m0 65h0m2-116h0m0-1h0m1 42h0m1 22h0m0-105h0m2-1h0m0 116h0m0-104h0m1 34h0m0 55h0m0-90h0m0-48h0m3 93h0m1 30h0m2-130h0m1 59h0m0 91h0m2-101h0m0 33h0m0-16h0m1 47h0m0-25h0m0-60h0m0 109h0m1-64h0m0 44h0m1-66h0m0 86h0m1-32h0m5 1h0m0-37h0m0-35h0m0 24h0m1-33h0m2 132h0m0-165h0m0 184h0m0-69h0m0-1h0m0 4h0m1-1h0m1 53h0m0-27h0m1-100h0m0 159h0m0-108h0m1-8h0m0 2h0m1 23h0m0 10h0m0-60h0m1 94h0m0-76h0m0 26h0m0 5h0m0-66h0m1 169h0m0 18h0m2-208h0m0 177h0m0-107h0m1-46h0m1 58h0m1 42h0m1-85h0m0 202h0m1-224h0m1 178h0m1-142h0m0 37h0m1 51h0m0 93h0m0-225h0m1 135h0m0-9h0m1-35h0m0-18h0m0 56h0m0 204h0m1 34h0m0-34h0m1-11h0m1-91h0m0 127h0m1-20h0m1 1h0m0-7h0m0 31h0m1-110h0m2 20h0m0 73h0m1-50h0m1 43h0m1 3h0m1 22h0m1-5h0m0-40h0m4-350h0m0 212h0m1-68h0m0-35h0m0-79h0m1 109h0m0-21h0m0 38h0m0-34h0m1 0h0m0 125h0m1-108h0m0-107h0m0 85h0m1-62h0m0 46h0m0 12h0m0-7h0m0 26h0m0-69h0m1-116h0m0 189h0m1-42h0m0 121h0m0-50h0m0-33h0m0 51h0m1-62h0m1 75h0m0-137h0m0 114h0m2-37h0m1-75h0m0-20h0m0 185h0m0-74h0m0-29h0m1 33h0m0-16h0m1-97h0m0 17h0m0 30h0m0 141h0m1-94h0m0 25h0m0-86h0m0 136h0m1-143h0m0 6h0m1 57h0m0 45h0m0 42h0m0-80h0m1 17h0m0-11h0m1 129h0m0-194h0m0 9h0m0-24h0m0 16h0m1-17h0m2 132h0m0-251h0m0 155h0m1-24h0m0 144h0m0-103h0m1-12h0m0 2h0m1-78h0m0-1h0m0 88h0m1 25h0m1-69h0m1 39h0m0-11h0m1 80h0m1-107h0m0 133h0m1-60h0m0-25h0m1-13h0m1 21h0m0 34h0m1-83h0m0 23h0m0-50h0m1 207h0m0-151h0m1 10h0m1-40h0m0-51h0m0 117h0m1-40h0m0-63h0m1 25h0m0 1h0m5-20h0m1 26h0m0 150h0m1-147h0m0 50h0m0 144h0m1-91h0m1-102h0m0 137h0m0 6h0m1-277h0m0 105h0m1 75h0m1 33h0m0-19h0m0-71h0m1-47h0m1 89h0m1 136h0m0-30h0m0-10h0m1-80h0m0 80h0m0-69h0m1 28h0m0-54h0m1 2h0m1 80h0m1-118h0m2 48h0m1 13h0m1-123h0m0 64h0m1 32h0m0 64h0m1-63h0m0-65h0m0 118h0m0 49h0m1-141h0m0 125h0m1 58h0m0-98h0m1 19h0m1-121h0m0 85h0m0 34h0m0-24h0m1-35h0m1-195h0m0 137h0m1 100h0m1-70h0m0 42h0m0 55h0m0-107h0m1-29h0m0 180h0m1-110h0m0 107h0m0-188h0m0 69h0m0 43h0m0 36h0m1-47h0m1 63h0m1-17h0m0-99h0m0 50h0m0-77h0m1 112h0m0 56h0m1-37h0m1-177h0m0 128h0m1 124h0m0-134h0m0-54h0m1 26h0m2 55h0m0-34h0m1-41h0m0 158h0m0-66h0m1-61h0m1 17h0m0-40h0m1 62h0m0-4h0m0 29h0m0-21h0m1 27h0m1-43h0m0 16h0m1-194h0m0 82h0m0 176h0m1-64h0m0-41h0m0 20h0m0 28h0m1-82h0m0 163h0m1-189h0m0 134h0m1 26h0m0-116h0m0 111h0m0-22h0m0 16h0m1-96h0m0 0h0m0 42h0m1 22h0m0-42h0m1-6h0m0 38h0m0 35h0m2-96h0m0-62h0m1-17h0m1 23h0m0 9h0m0 87h0m0-70h0m0 120h0m1-25h0m0-137h0m1 152h0m1-11h0m0-56h0m0 38h0m1-47h0m0 91h0m0-127h0m0 8h0m1 105h0m0 5h0m0-156h0m0 154h0m1-105h0m0 35h0m1 23h0m0 79h0m0-72h0m1 51h0m0-14h0m1-172h0m0 123h0m1-110h0m0 77h0" stroke="#000" stroke-width="14" stroke-linecap="round" fill="none"/>
<path transform="scale(0.25)" d="M784 2328h0m70-11h0m31 0h0m21-11h0m102 19h0m133-21h0m0 42h0m208-29h0m80-400h0m-461 544h0m712 104h0m154-239h0m142 28h0m64 72h0m14-124h0m34-404h0m224 498h0m54-90h0m76 6h0m8-8h0m10-4h0m10-4h0m18 12h0m-4 12h0m24 8h0m-4 8h0m-56 154h0m202-640h0m164 48h0m16 16h0m80-12h0m40-8h0m52 16h0m16 12h0m68-4h0m23 503h0m149-519h0m14 730h0m74-786h0m0 72h0m92-16h0m16-28h0m16 20h0m184 0h0m184 24h0m136-32h0m40 28h0m-8 384h0m48 12h0m184-404h0m52 12h0m148 4h0m48-16h0m52 8h0m12-16h0m16-4h0m-8 28h0m100-16h0m68-12h0m12 0h0m24 20h0m16 0h0m20-12h0m104-32h0m0 44h0m84-344h0m6 494h0m6 8h0m6 8h0m-12 12h0m8 12h0m-8 16h0m14-10h0m2-26h0m76-20h0m8 8h0m8-4h0m-12 16h0m-4 52h0m6 22h0m-14 246h0" stroke="#ffa500" stroke-width="14" stroke-linecap="round" fill="none"/>
<path d="M239.3 660.9h6l-3 5.4zM265.3 660.9h6l-3 5.4zM422.2 660.9h6l-3 5.4zM432.4 660.9h6l-3 5.4zM450.3 660.9h6l-3 5.4zM1168.2 660.9h6l-3 5.4zM1294.4 660.9h6l-3 5.4z" fill="#ffa500"/>
<rect x="105.5" y="499.55" width="1254.95" height="48.52" fill="#ff0000" fill-opacity="0.1" stroke="#ff0000" stroke-opacity="0.1" stroke-width="1.11"/>
<rect x="162.50" y="509.9" width="1075.63" height="35.4" fill="#ffa500" fill-opacity="0.1" stroke="#ffa500" stroke-opacity="0.1" stroke-width="1.11"/>
<rect x="1238.13" y="429.5" width="64.82" height="55" fill="#ffa500" fill-opacity="0.1" stroke="#ffa500" stroke-opacity="0.1" stroke-width="1.11"/>
<line x1="105.5" y1="523" x2="1360.45" y2="523" stroke="#ff0000" stroke-width="2.08"/>
<line x1="162.50" y1="527.5" x2="1238.13" y2="527.5" stroke="#ffa500" stroke-width="2.78"/>
<line x1="1238.13" y1="457.3" x2="1302.95" y2="457.3" stroke="#ffa500" stroke-width="2.78"/>
<line x1="162.5" y1="666.5" x2="162.5" y2="380.5" stroke="#800080" stroke-width="2.08" stroke-dasharray="2.08 3.44"/>
<line x1="1238.0" y1="666.5" x2="1238.0" y2="380.5" stroke="#800080" stroke-width="2.08" stroke-dasharray="2.08 3.44"/>
<line x1="1303.0" y1="666.5" x2="1303.0" y2="380.5" stroke="#800080" stroke-width="2.08" stroke-dasharray="2.08 3.44"/>
</g>
<line x1="105.5" y1="763.5" x2="1485.5" y2="763.5" stroke="#b0b0b0" stroke-width="1.11" stroke-dasharray="1.11 2.45"/>
<line x1="105.5" y1="802.4" x2="1485.5" y2="802.4" stroke="#b0b0b0" stroke-width="1.11" stroke-dasharray="1.11 2.45"/>
<line x1="105.5" y1="840.4" x2="1485.5" y2="840.4" stroke="#b0b0b0" stroke-width="1.11" stroke-dasharray="1.11 2.45"/>
<line x1="105.5" y1="878.5" x2="1485.5" y2="878.5" stroke="#b0b0b0" stroke-width="1.11" stroke-dasharray="1.11 2.45"/>
<line x1="105.5" y1="916.5" x2="1485.5" y2="916.5" stroke="#b0b0b0" stroke-width="1.11" stroke-dasharray="1.11 2.45"/>
<line x1="105.5" y1="957.5" x2="1485.5" y2="957.5" stroke="#b0b0b0" stroke-width="1.11" stroke-dasharray="1.11 2.45"/>
<line x1="105.5" y1="983.5" x2="1485.5" y2="983.5" stroke="#b0b0b0" stroke-width="1.11" stroke-dasharray="1.11 2.45"/>
<line x1="105.5" y1="1009.5" x2="1485.5" y2="1009.5" stroke="#b0b0b0" stroke-width="1.11" stroke-dasharray="1.11 2.45"/>
<path transform="scale(0.25)" d="M1173 3362h0m560 0h0m64 0h0m53 0h0m83 0h0m152 0h0m134 0h0m37 0h0m397 0h0m355 0h0m968 0h0m77 0h0m16 0h0m955 0h0m61 0h0m14 0h0m10 0h0" stroke="#000" stroke-width="11.6" stroke-linecap="round" fill="none"/>
<path transform="scale(0.25)" d="M1173 3514h0m560 0h0m64 0h0m53 0h0m83 0h0m152 0h0m134 0h0m37 0h0m397 0h0m355 0h0m968 0h0m77 0h0m16 0h0m955 0h0m61 0h0m14 0h0m10 0h0m-3509 0h0" stroke="#000" stroke-width="11.6" stroke-linecap="round" fill="none"/>
<g clip-path="url(#c4)">
<path transform="scale(0.25)" d="M650 4024h0m1-7h0m1 17h0m0-9h0m0 2h0m1-2h0m0 0h0m0 5h0m1-4h0m0-7h0m1 2h0m1 8h0m1-2h0m1 5h0m0-5h0m1-1h0m0 4h0m0 0h0m0 4h0m1-8h0m0-1h0m0 7h0m0-13h0m1 3h0m0-5h0m0 4h0m2 8h0m2-3h0m0 2h0m0-8h0m1 7h0m0-4h0m1-1h0m0-1h0m0 4h0m0 1h0m0-8h0m1 5h0m0-3h0m0-5h0m0 3h0m0 6h0m1 4h0m0-2h0m0-8h0m1 7h0m0 0h0m0-4h0m1 1h0m0 2h0m0 3h0m0-3h0m2 7h0m1-8h0m0-1h0m0-4h0m0 6h0m0 5h0m2-8h0m0 1h0m0 7h0m1-4h0m0 2h0m0-1h0m0-1h0m1 1h0m0 2h0m0 3h0m0-3h0m0-2h0m1 1h0m0-1h0m1-1h0m0-1h0m0 5h0m0-2h0m0 2h0m0 0h0m1-3h0m0 2h0m0 1h0m0-1h0m1-5h0m0-2h0m0 4h0m0-1h0m1 1h0m0 4h0m0-8h0m0 0h0m0 1h0m1 7h0m1-2h0m2-3h0m0-8h0m0 7h0m0-3h0m0 2h0m1 4h0m0 2h0m0 0h0m1-5h0m0-7h0m0 5h0m0-1h0m1 6h0m1 1h0m1-4h0m0 4h0m0-8h0m1 2h0m1 4h0m0-3h0m0 0h0m1 1h0m0 1h0m0 0h0m0-1h0m0 2h0m0-6h0m1 2h0m2-3h0m0 10h0m1 5h0m0-13h0m0 6h0m0-7h0m2 10h0m1-7h0m0 8h0m0-4h0m1 1h0m0-2h0m1-1h0m1-3h0m0-4h0m0 6h0m1 6h0m0-2h0m1-6h0m1 1h0m0-5h0m0 3h0m0-3h0m2 6h0m0 0h0m0-3h0m0-1h0m1 1h0m0 7h0m0-11h0m0 12h0m1-6h0m0 1h0m0 3h0m1-4h0m0 3h0m0-3h0m2-4h0m0 12h0m1-2h0m0 5h0m0-8h0m0-5h0m1 2h0m0 6h0m0-6h0m0 2h0m1 10h0m0-5h0m0-8h0m1 11h0m0-7h0m1 0h0m0-2h0m0 4h0m1 0h0m1-2h0m0 2h0m0-2h0m0 2h0m1-5h0m0 1h0m0 8h0m0-1h0m1-6h0m0-3h0m1 3h0m1 1h0m0-3h0m0 13h0m0-13h0m1 2h0m0-6h0m0 8h0m1-5h0m1-6h0m0 7h0m0-1h0m1-2h0m0 6h0m1-8h0m0-2h0m1 2h0m0 0h0m1-5h0m0 12h0m0-4h0m1 1h0m0-9h0m0 4h0m0 5h0m0 2h0m0-4h0m1 11h0m0-7h0m1-3h0m0 4h0m0 2h0m1 0h0m0-6h0m0 1h0m1 5h0m1-7h0m1 2h0m0-3h0m1 7h0m1-9h0m0 2h0m1 1h0m0 6h0m0-5h0m0 6h0m1 1h0m0-1h0m0-4h0m1 2h0m0-5h0m1-3h0m0 9h0m0-6h0m1 1h0m0 0h0m0 1h0m1 4h0m0 1h0m0-1h0m0-5h0m0 3h0m0 1h0m0 4h0m0-5h0m1 7h0m0 1h0m1 2h0m1-5h0m0-4h0m0 5h0m1-3h0m1-1h0m0-5h0m0 8h0m1-6h0m0 5h0m0 2h0m0 4h0m1-6h0m0 7h0m0-3h0m1 4h0m0-6h0m0-3h0m0 0h0m0 8h0m1-1h0m0 0h0m1 0h0m0-8h0m0-3h0m0 5h0m0 2h0m0-3h0m0 8h0m0-5h0m0-2h0m0 1h0m1-6h0m0 10h0m0-3h0m0-2h0m0-2h0m0 0h0m1 7h0m0-11h0m0 9h0m0 0h0m0-1h0m0-2h0m0-1h0m0-2h0m2 8h0m0-7h0m0 9h0m1-7h0m0-4h0m1-3h0m0 4h0m0 1h0m1 3h0m0-1h0m0 2h0m1 1h0m0-1h0m0-1h0m0 1h0m1 4h0m0-1h0m0-6h0m0 9h0m0-1h0m1-2h0m0-3h0m0-2h0m0-7h0m0 4h0m0 6h0m1-7h0m0 12h0m0-8h0m0 6h0m2-2h0m0-9h0m0 8h0m0 0h0m1 3h0m0 2h0m0-7h0m0 0h0m0 0h0m0 2h0m0 0h0m0-6h0m1-2h0m1 1h0m0 7h0m0-1h0m1-3h0m1-3h0m0-4h0m1 16h0m1-13h0m1 2h0m1-5h0m0 2h0m1 7h0m0 3h0m1-5h0m0 4h0m0-6h0m0 0h0m1 11h0m1 0h0m1-5h0m0 5h0m1-8h0m0 8h0m1-4h0m0-2h0m1 2h0m0-3h0m0 7h0m0 0h0m0-13h0m1 9h0m0 4h0m0-15h0m0 14h0m1-3h0m0-8h0m0 4h0m1 0h0m0 0h0m1 0h0m0-1h0m0 4h0m1-1h0m1-3h0m0 1h0m0 8h0m0-17h0m0 5h0m1 6h0m0-3h0m1 9h0m0-4h0m0-11h0m0 11h0m0-4h0m2 7h0m0-3h0m0-1h0m0-7h0m0 3h0m1 0h0m0 5h0m0 0h0m1-6h0m0-1h0m0 6h0m0-7h0m0-1h0m0 5h0m1-5h0m0 2h0m1-1h0m0-4h0m0 1h0m0 3h0m1 5h0m1-6h0m0 5h0m0-7h0m1 2h0m0 1h0m0-3h0m1-2h0m0 8h0m0-9h0m0-1h0m1 2h0m0 4h0m0-2h0m0-1h0m1 4h0m1-5h0m2 3h0m0-4h0m0-2h0m3-3h0m0 5h0m0-2h0m0 4h0m0 0h0m0-2h0m0 0h0m0 9h0m0-5h0m1-6h0m0 8h0m1 5h0m0 0h0m1-5h0m2-3h0m0 4h0m1 4h0m0-5h0m1 4h0m0-2h0m0-4h0m0 7h0m1-2h0m0 9h0m0-10h0m1 1h0m0-2h0m0 1h0m1 7h0m1-5h0m0 1h0m0 6h0m0-6h0m0-3h0m1 4h0m0-1h0m0-3h0m1 5h0m0 5h0m0-18h0m0 9h0m1 2h0m1-2h0m0-1h0m0 1h0m1 4h0m0-5h0m0-5h0m2 2h0m0-7h0m1 3h0m0 4h0m1-10h0m0 6h0m0 1h0m1-3h0m0 5h0m0 3h0m1-8h0m0 5h0m1 4h0m0-3h0m0 1h0m0 7h0m1-2h0m0 0h0m0 3h0m0-7h0m1-7h0m0 8h0m1 1h0m1 1h0m0 0h0m1-1h0m0 4h0m0-3h0m1 6h0m1-1h0m0-8h0m0-1h0m1 1h0m0 2h0m0 3h0m1-7h0m0 11h0m0-11h0m1 6h0m0 3h0m2-4h0m1-6h0m0 8h0m1 6h0m1-3h0m0-2h0m0-1h0m0 6h0m0-1h0m0-9h0m1 2h0m1 2h0m0 2h0m0 2h0m1-7h0m0 2h0m1 1h0m1 0h0m0 4h0m0-3h0m1-1h0m1-6h0m0 11h0m1-8h0m0 8h0m0-11h0m1 4h0m0-9h0m0 16h0m0-10h0m1-4h0m0 2h0m1 2h0m0 7h0m1-5h0m0 4h0m1-1h0m0 0h0m0 6h0m0-7h0m2-1h0m0 7h0m1-6h0m0-1h0m0 1h0m0 0h0m0-3h0m0 6h0m1-7h0m0 4h0m0 2h0m0-9h0m1 1h0m0 3h0m0 1h0m1-4h0m0 12h0m0-4h0m1-5h0m0-1h0m0-1h0m1-4h0m0 0h0m0-2h0m0 4h0m0 4h0m0 1h0m1 1h0m0-15h0m0 12h0m1-5h0m0 11h0m1-6h0m1-2h0m0 1h0m1 2h0m0-2h0m0-6h0m1-2h0m0 13h0m0-7h0m0 6h0m1 1h0m3-9h0m0 5h0m0-4h0m0 4h0m1 1h0m0 8h0m0-12h0m0 3h0m1 2h0m0 7h0m1-12h0m0 5h0m0 7h0m1-9h0m1-1h0m2 5h0m0-4h0m0 2h0m0 2h0m1-1h0m0 1h0m1-3h0m1 5h0m0-9h0m0 4h0m0 2h0m1-5h0m0 8h0m0-14h0m1 10h0m0 2h0m0 2h0m1-4h0m1 6h0m0-4h0m0-6h0m0 5h0m0 1h0m0 5h0m1-10h0m0 5h0m1 1h0m1 5h0m0-2h0m1-7h0m0 3h0m1 1h0m0-6h0m1 12h0m0-11h0m1 10h0m1-7h0m0 3h0m0-1h0m1 2h0m1-10h0m0 10h0m0 0h0m1-7h0m0 5h0m0-7h0m0 3h0m1-2h0m0 1h0m0-3h0m1 6h0m1-3h0m1 0h0m1 6h0m0-5h0m1 3h0m1-3h0m0 6h0m0-4h0m1-2h0m0-3h0m1 0h0m1 3h0m1 0h0m0 4h0m1 1h0m0-7h0m0 2h0m0-8h0m1 0h0m1 8h0m0 3h0m0-3h0m1 3h0m0-10h0m1 6h0m0-4h0m0 5h0m1-4h0m1 1h0m0-10h0m1 6h0m0 5h0m0 3h0m0-4h0m1 2h0m1-4h0m2 2h0m0-10h0m0 8h0m1 2h0m0 5h0m0-3h0m1-3h0m0 4h0m0 6h0m0-5h0m0 0h0m1 1h0m0-2h0m1 4h0m1-2h0m1-8h0m0 13h0m0-5h0m1-2h0m0-7h0m1 4h0m0-2h0m0 2h0m1 7h0m0-3h0m0 0h0m0 5h0m1-11h0m0 4h0m0 1h0m1 5h0m1-7h0m0 1h0m0-4h0m1 1h0m1 2h0m0-6h0m0 14h0m0-8h0m0 2h0m1-7h0m0 17h0m0-12h0m0 7h0m1-5h0m1 1h0m0 0h0m0 8h0m1-13h0m0 5h0m0 7h0m0-4h0m1 4h0m1-8h0m0 5h0m1-4h0m0 4h0m0-6h0m0 7h0m1-8h0m0 11h0m0-9h0m0 1h0m0 9h0m1-8h0m0 8h0m0-4h0m0 2h0m1-5h0m0 7h0m0-12h0m0 7h0m1 5h0m0 0h0m1-4h0m0-2h0m1-2h0m0 2h0m0 6h0m1-4h0m0 0h0m0 0h0m1-8h0m0 9h0m1-7h0m0-4h0m0 3h0m0 6h0m0-6h0m1 9h0m0-2h0m1-4h0m0 4h0m0-3h0m1-8h0m0 4h0m1 0h0m0 2h0m0 0h0m0-6h0m0 9h0m1-7h0m0-3h0m1 2h0m0 0h0m1 1h0m0-6h0m0 5h0m0 2h0m1 1h0m0 3h0m0-5h0m0 2h0m1 0h0m0-3h0m1 4h0m0 2h0m0-1h0m1 3h0m0-3h0m0-2h0m1 3h0m0 0h0m1 1h0m0 3h0m0-2h0m1 2h0m0-6h0m0-2h0m0 4h0m1 3h0m0 5h0m0-8h0m0-2h0m0 0h0m1-1h0m1-3h0m0 12h0m1-6h0m0 1h0m1-3h0m0 3h0m0-7h0m2-1h0m2 1h0m0 6h0m0 2h0m0-7h0m1 3h0m0-4h0m0 9h0m1-4h0m0-3h0m1 5h0m0-2h0m0-1h0m1 9h0m1-14h0m0 13h0m1-6h0m1-2h0m0-3h0m0 10h0m1-9h0m0 0h0m0-1h0m1 4h0m0 1h0m0 1h0m1 0h0m0 3h0m1-7h0m0 6h0m0-5h0m1 2h0m1-3h0m0 1h0m0 2h0m1 0h0m0-1h0m0 3h0m0 5h0m1-8h0m0 5h0m1-12h0m0 3h0m0 4h0m1-3h0m0 5h0m1-5h0m0-2h0m0-3h0m1 7h0m1-2h0m0 2h0m1-3h0m0-6h0m0 5h0m0 4h0m0-8h0m2 12h0m0-5h0m0 4h0m0 0h0m1-5h0m0 6h0m1-3h0m0-1h0m0-4h0m0 1h0m1 2h0m1 3h0m0-7h0m0-2h0m1 12h0m0-4h0m0-3h0m1 1h0m0 2h0m0 2h0m0-4h0m2 2h0m0 0h0m0 1h0m0-4h0m1 2h0m0 3h0m0-1h0m0-2h0m0 2h0m0-6h0m0 1h0m0 5h0m1-1h0m1-4h0m0-1h0m0 6h0m0 2h0m0-9h0m1 10h0m0-3h0m0-3h0m0-6h0m0 13h0m2-5h0m0-2h0m0-3h0m1 0h0m0 6h0m1-6h0m1 2h0m0 3h0m1 0h0m1 3h0m0-5h0m1 4h0m1-8h0m0 7h0m0-2h0m0 1h0m0-2h0m1 7h0m0-5h0m0-2h0m1 8h0m0 1h0m1-4h0m0-4h0m0 3h0m0-4h0m1 4h0m0-3h0m0 4h0m1-3h0m0-3h0m1 3h0m0-2h0m1 1h0m0-3h0m0 1h0m0 5h0m1 1h0m0 6h0m0-16h0m1 8h0m1 0h0m1 4h0m0 4h0m1-17h0m1 10h0m0 1h0m0-4h0m1-1h0m0 2h0m0-1h0m1 0h0m1 6h0m0-1h0m0-2h0m0-3h0m0-2h0m1 5h0m0-2h0m0-4h0m0 12h0m0-14h0m1 4h0m0 3h0m1-7h0m0 5h0m0-2h0m1-3h0m0 4h0m0-6h0m0 8h0m1 1h0m0-1h0m1 6h0m0-6h0m1-1h0m0-10h0m0 9h0m0-6h0m0 10h0m1 0h0m1 5h0m0-6h0m0 1h0m2-6h0m0 8h0m0-2h0m0 2h0m0-3h0m1 2h0m0-4h0m1 1h0m0-5h0m1 8h0m1-5h0m0 2h0m0-6h0m0 6h0m0 3h0m0-10h0m1 7h0m0 0h0m1-3h0m1-1h0m1 0h0m0-2h0m0 2h0m1-4h0m0 10h0m0-4h0m1-6h0m0 2h0m1 2h0m1 0h0m1-2h0m1 5h0m0-7h0m0 8h0m0-4h0m1 0h0m0-2h0m0 7h0m1-12h0m0 11h0m0 2h0m0-3h0m2-2h0m1-6h0m0 6h0m0 2h0m0 4h0m1-15h0m1 7h0m1 2h0m1-2h0m0 0h0m0 0h0m1-1h0m0 1h0m0 0h0m0 2h0m1 5h0m1 0h0m0-7h0m1-2h0m1 11h0m0-4h0m0-1h0m0 5h0m0 1h0m0-1h0m0-6h0m1 11h0m0-9h0m0-1h0m1 1h0m0 4h0m0 3h0m1-6h0m1 2h0m0 6h0m1-5h0m0 3h0m0-6h0m0 7h0m0-2h0m1-6h0m0 9h0m0-7h0m0 4h0m0-4h0m1-2h0m0 6h0m0-7h0m1-3h0m0 3h0m1 1h0m0 0h0m0-1h0m1 4h0m0 0h0m1-7h0m0 1h0m0-1h0m1 8h0m0-4h0m0-5h0m1-1h0m0 1h0m0 7h0m0-4h0m1 2h0m0 7h0m0 0h0m0-2h0m1-5h0m0 3h0m1-9h0m0 13h0m1 1h0m1-8h0m0 0h0m0-2h0m0-1h0m0 6h0m1-1h0m0-10h0m0 10h0m0-7h0m1 10h0m0-10h0m0 8h0m0 0h0m0-9h0m0 7h0m1 5h0m1-10h0m2 2h0m0 6h0m0-9h0m1 12h0m0-11h0m0 3h0m0 7h0m1-5h0m0 1h0m0 1h0m1-1h0m0 0h0m1 2h0m1-6h0m0-4h0m0 8h0m0-2h0m0-4h0m1-6h0m0 11h0m0-1h0m0 2h0m1-5h0m0 0h0m1 12h0m0-13h0m0 1h0m1-3h0m1 11h0m0-14h0m0 13h0m1-9h0m1 2h0m0-2h0m0-1h0m1-2h0m1 4h0m0-2h0m0 8h0m0 6h0m0-9h0m0-1h0m1-1h0m0 1h0m1 3h0m0-3h0m0 3h0m1-1h0m0 4h0m0-8h0m0 4h0m1-2h0m0 1h0m0 3h0m0-6h0m1 0h0m2 2h0m0 11h0m0-18h0m0 13h0m0-3h0m0 1h0m1-3h0m0 0h0m0-1h0m1 0h0m0-3h0m0 3h0m0-1h0m1 1h0m0 1h0m1-8h0m1 7h0m0 10h0m1-5h0m0 6h0m0-6h0m0-3h0m0 5h0m0-5h0m0 0h0m2 6h0m0-3h0m0-3h0m0-2h0m1 5h0m0-4h0m0-4h0m1 3h0m0 0h0m1-3h0m0 3h0m1 3h0m0 0h0m1-3h0m0-3h0m0 8h0m0-1h0m1 0h0m0-2h0m1-3h0m0-3h0m0 3h0m1 1h0m0 3h0m0-3h0m0 3h0m2 1h0m0-1h0m1 6h0m1-1h0m0-9h0m0 4h0m0-2h0m1 3h0m1 1h0m1-6h0m1 4h0m0 0h0m0 1h0m0-1h0m2 3h0m0-8h0m0 5h0m0-5h0m1-5h0m0 15h0m0-7h0m0-2h0m1 0h0m1-4h0m0-8h0m1 9h0m0-6h0m0 7h0m1 1h0m0-4h0m1 1h0m0 5h0m1-5h0m0 8h0m0 1h0m0-5h0m1 3h0m1-9h0m1 13h0m0-10h0m0 7h0m1 2h0m0-8h0m0 14h0m1-3h0m0-6h0m0 2h0m0-4h0m0 1h0m0-1h0m0 2h0m1-1h0m1 0h0m0-3h0m1-1h0m0 3h0m1 6h0m0-6h0m0 3h0m1-6h0m1 4h0m0 3h0m0-4h0m0-3h0m0 2h0m0-3h0m1 7h0m1-2h0m1 1h0m0-6h0m1 7h0m0-1h0m1 3h0m0-5h0m0 1h0m1-6h0m0 7h0m0 2h0m1-7h0m0 5h0m0-5h0m0 4h0m0-4h0m1 5h0m0-2h0m0 2h0m0-7h0m1 1h0m1 0h0m0 1h0m0 3h0m1-3h0m0-5h0m0 4h0m1 1h0m0 3h0m1-1h0m1 6h0m0-7h0m1-10h0m0 4h0m0 7h0m1-2h0m1-6h0m0 6h0m1-2h0m0 5h0m0 1h0m1-9h0m1 8h0m0-2h0m0 6h0m0-10h0m1 4h0m0 0h0m0 0h0m0 8h0m0-3h0m1-7h0m0 4h0m0 3h0m0 5h0m0-4h0m1-2h0m1-5h0m0-1h0m1 9h0m0-10h0m0 0h0m0 4h0m2-9h0m0 8h0m0 3h0m0 2h0m1-9h0m0-3h0m0 5h0m1-2h0m0 6h0m0-3h0m0-9h0m0 9h0m1 0h0m0-12h0m0 14h0m1-7h0m0 6h0m0-1h0m0-2h0m1 6h0m0-3h0m0 4h0m1 1h0m0-5h0m1 8h0m0-2h0m0-5h0m1 1h0m0-5h0m0 5h0m0 4h0m0-8h0m1 9h0m0-16h0m0 9h0m0 1h0m1 3h0m0 5h0m1-2h0m0 1h0m0-6h0m1 3h0m0-4h0m0 5h0m0-3h0m2-1h0m1-1h0m0 2h0m0-2h0m1 4h0m1-4h0m0-2h0m0 10h0m0-8h0m1 8h0m0-5h0m0 2h0m1-11h0m0 14h0m0-4h0m1 1h0m0 2h0m0-6h0m0-1h0m2 9h0m0-10h0m1 1h0m0-1h0m2 6h0m0-2h0m0-6h0m0 3h0m0 5h0m0-7h0m1-2h0m0-4h0m1 10h0m0 5h0m0-8h0m1 0h0m0-7h0m0 8h0m1-1h0m0 4h0m0-4h0m1 5h0m0-2h0m1-6h0m0-4h0m0 9h0m1-6h0m0-5h0m0 8h0m1 6h0m1-6h0m0-1h0m0 8h0m0-6h0m0-4h0m0 11h0m1-8h0m0 3h0m0-1h0m1-1h0m0 4h0m0-4h0m0 1h0m0 3h0m1-3h0m1-3h0m0-3h0m0 9h0m0 1h0m1-7h0m1 9h0m1-6h0m0 1h0m1 0h0m0 1h0m1 3h0m1 5h0m0-9h0m0 5h0m2-3h0m0 4h0m0-6h0m1 7h0m1 1h0m0-3h0m0 3h0m0 1h0m1 0h0m0-7h0m0 2h0m0-2h0m1 7h0m0-7h0m0-2h0m0 3h0m1 2h0m0 4h0m0-7h0m1-4h0m0-1h0m0 5h0m1 1h0m0-3h0m0 3h0m0-6h0m0 5h0m1 6h0m0-8h0m0 5h0m0-6h0m0 2h0m1 3h0m0-3h0m1 3h0m0-6h0m0 0h0m1 4h0m0-3h0m1 4h0m0 1h0m0-4h0m0 5h0m0-2h0m0 6h0m0-7h0m1-3h0m0 3h0m1-7h0m1 5h0m1 8h0m1-7h0m0-3h0m0 0h0m0 4h0m0-2h0m1-1h0m0 9h0m0-7h0m0 0h0m0 1h0m1-3h0m0 5h0m1 0h0m0 0h0m0-5h0m0 0h0m0 3h0m1-3h0m1 0h0m0 8h0m0-11h0m0 6h0m3 4h0m1 1h0m1-6h0m0 5h0m1-4h0m0 0h0m0 3h0m1 6h0m0-2h0m2-9h0m0 4h0m0 3h0m0-17h0m1 11h0m0-1h0m0-3h0m1 8h0m0-7h0m0 5h0m1-3h0m0 10h0m0-6h0m0-5h0m1-3h0m0 12h0m0-4h0m0-9h0m0 11h0m1-11h0m1 9h0m2-4h0m0-2h0m0-6h0m1 8h0m0-2h0m0 4h0m1 3h0m1-6h0m0 0h0m1 8h0m0-11h0m0 6h0m0 1h0m0-4h0m2 6h0m0-6h0m0 3h0m2 0h0m0 1h0m0 5h0m1-6h0m0 5h0m0 0h0m0-9h0m0 5h0m0 1h0m1-2h0m0-3h0m0 2h0m1 4h0m1-9h0m0 7h0m0-5h0m1-2h0m1 4h0m0 0h0m0 2h0m0 4h0m1-10h0m1 9h0m0-13h0m0 0h0m0 11h0m0 0h0m1 1h0m0-12h0m0 9h0m0-5h0m0-4h0m0 5h0m0 4h0m1 9h0m0-7h0m0-4h0m0 10h0m0-6h0m0 3h0m1-2h0m0 3h0m0-2h0m0 3h0m0-4h0m0-4h0m0 1h0m1 3h0m0-1h0m0-2h0m1 0h0m1-1h0m0 8h0m0-7h0m0 6h0m2-6h0m0-3h0m0 4h0m1-4h0m0 1h0m0 2h0m0 3h0m0 1h0m1 6h0m0-8h0m1 3h0m1 0h0m0-11h0m0 10h0m0-1h0m0-2h0m0 0h0m1-5h0m0 5h0m0 1h0m0 3h0m0 0h0m0-2h0m0 5h0m1-1h0m0-5h0m0-5h0m1 10h0m0-4h0m1 7h0m0-1h0m1-8h0m0-3h0m0 2h0m0 3h0m0-2h0m0 0h0m1 5h0m0-8h0m0 0h0m0-5h0m0 6h0m0 1h0m1 0h0m1-11h0m0 10h0m0-10h0m0 5h0m0-2h0m1 8h0m0 0h0m1-4h0m2-7h0m0 8h0m0-4h0m1 8h0m0-8h0m0-1h0m0 7h0m0-3h0m1 2h0m0 2h0m0 5h0m1-3h0m0-8h0m0 7h0m0-6h0m2 7h0m0-2h0m0 2h0m1 4h0m1-8h0m0 3h0m1-5h0m0 8h0m1-5h0m0 7h0m0-1h0m1-8h0m0 3h0m0-1h0m0-2h0m0-3h0m1-2h0m0 0h0m0-1h0m1 5h0m1 1h0m0 1h0m0-7h0m0 1h0m0 6h0m1-6h0m0 6h0m1-4h0m0-2h0m1 10h0m0-2h0m0 0h0m0-8h0m1 6h0m0-1h0m1 0h0m0 5h0m0 5h0m0-11h0m1 0h0m0 5h0m1 1h0m0 5h0m1-18h0m0 13h0m1-2h0m0 2h0m1 1h0m1-3h0m0 9h0m0-12h0m1 8h0m0 3h0m1 2h0m0 0h0m0 0h0m1-13h0m1 8h0m1-2h0m1-7h0m0 0h0m0 3h0m1 0h0m0-2h0m1 5h0m0 7h0m1-10h0m1 10h0m0-1h0m0-8h0m0-6h0m1 6h0m0 3h0m1-9h0m0 0h0m0 4h0m0-6h0m0 7h0m2 3h0m0-5h0m0 0h0m0 1h0m1-4h0m0 5h0m0 9h0m1-4h0m0-2h0m0 2h0m0-3h0m2-2h0m0 1h0m0 4h0m1-6h0m0 7h0m0-5h0m0-8h0m1 8h0m0-5h0m1 6h0m0-7h0m0 9h0m1-11h0m0-4h0m0 1h0m0 0h0m1 2h0m0-3h0m0 8h0m1 5h0m0-3h0m0 0h0m0-4h0m2-2h0m0 3h0m0-1h0m0 4h0m1 4h0m0-1h0m1 4h0m0-6h0m0 0h0m1 8h0m0-10h0m0-4h0m0 5h0m0-2h0m1 6h0m0-7h0m0 9h0m2 0h0m0 2h0m0-7h0m0 3h0m1-2h0m0-1h0m0-1h0m0 8h0m3 1h0m0-2h0m0-8h0m2 4h0m0-1h0m0 5h0m0 1h0m1-4h0m0 0h0m1-2h0m0 8h0m0-4h0m1-5h0m0 11h0m1-11h0m0 6h0m1 5h0m0-7h0m1-1h0m0 4h0m1-5h0m0 6h0m0 3h0m0-5h0m0 5h0m1-4h0m0-1h0m0-5h0m0 6h0m0 4h0m1-11h0m1 5h0m0-6h0m0 3h0m0 5h0m1 1h0m1-10h0m0 8h0m0-3h0m1-2h0m0-1h0m0-2h0m1 2h0m0 4h0m1-1h0m0-1h0m0 3h0m1 3h0m0-7h0m0 2h0m1-6h0m0 3h0m0-3h0m0 1h0m2 1h0m0 3h0m0-6h0m0 4h0m1 5h0m0-4h0m0 2h0m0-4h0m1 5h0m0 1h0m0-3h0m1 0h0m0-2h0m0 0h0m1 5h0m0-4h0m1 3h0m1 1h0m1-2h0m0-2h0m1 2h0m1-4h0m0 2h0m0 5h0m0 5h0m0-10h0m1 7h0m0 0h0m0-2h0m0-2h0m0-3h0m1 3h0m0-4h0m1 3h0m0-7h0m0 9h0m0-7h0m1 8h0m0-6h0m0-2h0m0 0h0m0 1h0m1-4h0m0 7h0m0-4h0m1 12h0m1-9h0m0 3h0m2-8h0m1 4h0m0-6h0m1 6h0m0-1h0m1-1h0m1 1h0m1-4h0m0 7h0m0 2h0m0-6h0m1 5h0m0 1h0m1 3h0m0-2h0m0-9h0m0 10h0m0 0h0m1-8h0m0 10h0m1-10h0m2 3h0m0 3h0m0 2h0m1-7h0m0 3h0m0-2h0m0 1h0m0-6h0m0 5h0m1-1h0m0 6h0m1-7h0m1 0h0m1 2h0m0 4h0m1-6h0m0 5h0m0-6h0m0 3h0m0 2h0m1-1h0m0-4h0m0 9h0m1-7h0m0-3h0m0 1h0m2-3h0m1 1h0m0 1h0m0 2h0m0 0h0m0 7h0m0-9h0m0 1h0m1 2h0m0 6h0m0-4h0m1 2h0m0 1h0m0-10h0m1 10h0m1-1h0m1-1h0m1 4h0m0-4h0m0-2h0m0-3h0m1-1h0m0 7h0m0 1h0m1 2h0m0-1h0m0-12h0m0 8h0m1 1h0m0-9h0m0 8h0m3-1h0m1-2h0m1 3h0m1 2h0m0 3h0m0-7h0m1 2h0m0 2h0m0-11h0m0 7h0m0 5h0m1 4h0m0-10h0m0 6h0m1-3h0m0-7h0m1 0h0m0 6h0m0 0h0m0 4h0m1-4h0m0 0h0m1-1h0m1-6h0m0 1h0m0 7h0m0-1h0m1 1h0m0 0h0m0-7h0m1 7h0m1-11h0m1 8h0m0-3h0m0-6h0m0 10h0m0-5h0m0 3h0m0 6h0m0 0h0m0-2h0m1-3h0m0 1h0m0 4h0m0-10h0m0 7h0m1 4h0m0-9h0m0 1h0m0 0h0m1 3h0m0 6h0m0-9h0m1 7h0m0 0h0m0 3h0m1-3h0m0-2h0m1 7h0m0-5h0m0-2h0m0-1h0m0-7h0m2 9h0m0-10h0m1 5h0m1 8h0m1-14h0m0 12h0m0-13h0m1 9h0m1 2h0m0 1h0m3-2h0m0-3h0m0 7h0m1-2h0m1 4h0m0-2h0m0-3h0m0 1h0m1 4h0m0-10h0m0 0h0m1 5h0m0 5h0m0-2h0m0-7h0m1 7h0m0-3h0m0 1h0m1 5h0m1 1h0m0-8h0m0 0h0m2 3h0m0-2h0m0 6h0m1-1h0m0 2h0m1-12h0m0 3h0m0-2h0m0 5h0m1-1h0m1 2h0m1 2h0m0-8h0m1 4h0m0 2h0m1-3h0m0 8h0m0-5h0m0-4h0m1 4h0m0 0h0m0-3h0m0 4h0m0-10h0m0 5h0m0 5h0m1-4h0m0 0h0m0-5h0m0 2h0m1 1h0m0 4h0m1 2h0m0-4h0m0 4h0m0-2h0m1-4h0m0-4h0m0 6h0m1-5h0m0-2h0m1 0h0m0 0h0m0 7h0m0 3h0m0-3h0m0 0h0m1-4h0m0 2h0m1 1h0m0 0h0m0-2h0m0 2h0m1-5h0m0-4h0m1 8h0m0-1h0m0-4h0m0 7h0m0-2h0m0 6h0m0-7h0m1-2h0m0 0h0m1 1h0m0 0h0m0 1h0m0 3h0m0-11h0m1 6h0m1-4h0m1 3h0m0 3h0m0 2h0m0-5h0m0 4h0m0 4h0m1-4h0m0 3h0m1 3h0m0-2h0m0 5h0m0 2h0m0-9h0m1 2h0m0-3h0m0 12h0m1-6h0m1 3h0m0-4h0m0-4h0m1 4h0m0-2h0m1 8h0m1 0h0m0-5h0m1 0h0m0 6h0m0-8h0m0 6h0m1 0h0m0 2h0m1 0h0m0-11h0m1 11h0m0-6h0m1-7h0m0 11h0m0 0h0m0-11h0m1 6h0m0 1h0m0-4h0m0 8h0m1-8h0m0-12h0m1 13h0m0-4h0m0 5h0m1-2h0m0-5h0m2 9h0m0-6h0m0 5h0m0-6h0m2 4h0m0-5h0m0 4h0m1 2h0m0-6h0m0 7h0m0-11h0m1 6h0m1-2h0m0 1h0m0 3h0m1 10h0m0-2h0m1-9h0m0 7h0m1-12h0m1 12h0m0-8h0m1 0h0m0 2h0m0 3h0m0 0h0m0-2h0m0 1h0m1 1h0m0 2h0m1-12h0m2 10h0m0-4h0m0 3h0m1-2h0m0 6h0m0-9h0m0 2h0m0-5h0m1 6h0m1 2h0m0-8h0m0 6h0m0 8h0m0-6h0m1-5h0m0 7h0m0-1h0m1-8h0m0 9h0m0-7h0m0 6h0m0 2h0m0-1h0m1 3h0m0-2h0m1-5h0m1-1h0m0 7h0m1-5h0m0 5h0m0-4h0m0 0h0m2-5h0m0 6h0m0 6h0m0-11h0m1 5h0m0-4h0m1-2h0m0 4h0m0 3h0m1-3h0m0-1h0m0 0h0m0 8h0m1-11h0m0 3h0m0 6h0m2-9h0m0 6h0m1-5h0m0 6h0m0-5h0m0 0h0m1 1h0m0-1h0m1 1h0m0-3h0m0 0h0m0 2h0m0 5h0m0-7h0m0 5h0m0-3h0m1 4h0m0-9h0m1 5h0m1-6h0m0 7h0m0 0h0m1 1h0m0 3h0m0-1h0m0-4h0m0 1h0m0-2h0m1 3h0m0-1h0m3-4h0m0 2h0m1 2h0m0 0h0m0-8h0m0 8h0m0-6h0m0 8h0m1-3h0m0 0h0m0-3h0m0-2h0m0 0h0m1 4h0m0 6h0m1-4h0m0-3h0m0 3h0m0 4h0m1-9h0m0 6h0m1 3h0m0-5h0m0 5h0m0-4h0m1 1h0m0-3h0m0 4h0m0-1h0m1 3h0m0-6h0m0 3h0m0-1h0m1-2h0m0 4h0m1 4h0m0-7h0m0 2h0m2-7h0m0 5h0m0 2h0m0-3h0m1-3h0m1 0h0m0 3h0m0 1h0m1-2h0m0 3h0m1-1h0m0-6h0m0 9h0m1-2h0m0 3h0m0-8h0m0 4h0m1 3h0m1 1h0m0 4h0m0-4h0m1-1h0m0 3h0m0 0h0m0-1h0m1-4h0m0 2h0m1-1h0m1-3h0m1 0h0m0 1h0m0 3h0m0 1h0m1-1h0m0-3h0m0-1h0m0 2h0m1-1h0m0-1h0m1 4h0m0 0h0m0 8h0m1-7h0m1-2h0m0 3h0m1-7h0m0 12h0m0-2h0m2-1h0m0-6h0m0 5h0m0 0h0m0-2h0m1-6h0m1 13h0m0 0h0m0-3h0m0-6h0m0-1h0m1 1h0m0 2h0m0 1h0m1-3h0m0 1h0m0 4h0m0-5h0m0 6h0m1-8h0m0 5h0m1-3h0m0 3h0m1-3h0m0 3h0m0 1h0m0-5h0m1 3h0m0 2h0m1-3h0m0 0h0m0 0h0m0-8h0m1 5h0m1 3h0m0 0h0m0 0h0m0 4h0m1-9h0m1 1h0m0-4h0m1 4h0m0-10h0m1 11h0m1-4h0m1 4h0m1-4h0m0 0h0m0 0h0m0-1h0m0-2h0m2 14h0m0-7h0m0-8h0m1 6h0m0 0h0m0 9h0m0-11h0m0 4h0m0 7h0m0-4h0m1-9h0m0 13h0m1-13h0m1 9h0m1 4h0m0 3h0m0-1h0m1 2h0m0 0h0m0-9h0m1 8h0m0-1h0m1-13h0m0-1h0m0 14h0m1-6h0m0 8h0m0-2h0m0-1h0m0-6h0m1 7h0m0 0h0m1-2h0m0-4h0m0 7h0m0-6h0m0-1h0m1-1h0m0-2h0m1-2h0m0 2h0m1 4h0m0-5h0m0 3h0m1-1h0m0-11h0m1 9h0m0-1h0m0 0h0m1-5h0m0-1h0m1 7h0m0-3h0m1 2h0m0 3h0m1 2h0m0-9h0m0 4h0m0 4h0m1 1h0m1-3h0m0 1h0m0-5h0m1 1h0m0 0h0m1 9h0m0 0h0m0-13h0m1 0h0m0 12h0m0-2h0m1-2h0m0-11h0m0 7h0m0-3h0m0-1h0m1 7h0m1-2h0m0-5h0m2-1h0m1 0h0m1 0h0m0 5h0m1-7h0m0 7h0m0-8h0m1 5h0m0-3h0m1 8h0m1-2h0m1-7h0m0 4h0m0 3h0m1 3h0m0 0h0m0 0h0m0 0h0m0 5h0m0-9h0m0 9h0m1-7h0m0 3h0m1 4h0m0-8h0m0 1h0m1 0h0m1 0h0m0 7h0m1-6h0m0 3h0m0-6h0m0 3h0m1 1h0m0-4h0m0 5h0m2-6h0m0 4h0m0 1h0m0-1h0m0-3h0m1 13h0m1-17h0m0 11h0m0 0h0m1-2h0m0 6h0m2-8h0m0 5h0m0-6h0m1-9h0m0 13h0m0-16h0m1 8h0m0 6h0m1-3h0m0-5h0m0 10h0m1-3h0m0 2h0m0-1h0m0 5h0m1-3h0m0 5h0m0-8h0m1 12h0m1-3h0m2-2h0m0 0h0m1-8h0m0 12h0m0-7h0m0-4h0m1 9h0m0-1h0m0-5h0m1-2h0m0 8h0m2-9h0m0 11h0m0-8h0m0-1h0m1-3h0m1 5h0m0 1h0m0-3h0m0-2h0m0 1h0m1 1h0m0 3h0m0 3h0m0-2h0m1-3h0m0-5h0m0-1h0m1 5h0m0-4h0m0-5h0m1 9h0m1 2h0m1-10h0m0 8h0m0-6h0m0 0h0m1 3h0m1 4h0m0-5h0m1-5h0m0 6h0m0-3h0m0-3h0m1 3h0m0 3h0m0 2h0m0-6h0m0 2h0m0-2h0m0 3h0m1 6h0m0-8h0m1 7h0m0-6h0m0-5h0m0 1h0m1-3h0m0 10h0m0-5h0m0-1h0m1 3h0m0 7h0m1-4h0m0-5h0m0-1h0m1 2h0m1 0h0m1-2h0m0 7h0m1-2h0m0-9h0m0 9h0m0-2h0m1 4h0m0-2h0m0 4h0m1-1h0m0 0h0m0-7h0m0 12h0m2-6h0m0 0h0m0-1h0m1-5h0m0 4h0m1 6h0m1-5h0m1-2h0m0 2h0m1 3h0m0-2h0m1 8h0m0-14h0m0 2h0m1 8h0m0-9h0m1 3h0m0 11h0m0-8h0m1 5h0m0 5h0m0-13h0m0 8h0m0 3h0m0-4h0m1 2h0m1-2h0m0 2h0m0 1h0m1-4h0m1 0h0m0-2h0m0 8h0m0-7h0m0-2h0m1 6h0m3-3h0m0 3h0m1 1h0m0-6h0m0 2h0m1 2h0m0-2h0m0 3h0m0 1h0m1-7h0m0 0h0m0-2h0m0 6h0m1 0h0m0 3h0m1-5h0m0 3h0m0 0h0m1-7h0m0 9h0m0-12h0m0 6h0m1 5h0m0-9h0m0 0h0m0-3h0m1-2h0m0 13h0m0-5h0m0-1h0m1-3h0m0 7h0m0-3h0m1-3h0m0 1h0m0 6h0m0-8h0m3 7h0m0-2h0m1 0h0m1-7h0m0 4h0m0 6h0m0-6h0m0 1h0m0 6h0m2-10h0m0 5h0m0-5h0m0 2h0m1 4h0m1-8h0m0 6h0m1 2h0m0-2h0m0 2h0m0-4h0m1 1h0m0-3h0m0 6h0m0-4h0m0-5h0m1 8h0m0-3h0m1 8h0m0-5h0m0-1h0m0 7h0m0 0h0m0-7h0m0 3h0m1 0h0m1-1h0m0-2h0m0 1h0m0-6h0m1 9h0m0-1h0m1-5h0m0 1h0m1-5h0m0 6h0m0 4h0m0-6h0m0 2h0m1 1h0m0-5h0m0 7h0m1-3h0m1 0h0m0-5h0m0 11h0m0-10h0m1 9h0m0-8h0m0-1h0m0 0h0m1 4h0m0 3h0m0-2h0m0-2h0m0 3h0m0 4h0m0 4h0m1-2h0m0-8h0m1-1h0m0 8h0m1-1h0m0-1h0m1 3h0m0-1h0m0-2h0m1-1h0m2 6h0m1-8h0m0-4h0m0 4h0m0 6h0m0-8h0m1 5h0m0 2h0m1 4h0m1-3h0m0 3h0m1-10h0m0 0h0m0-2h0m1-2h0m0 0h0m1 0h0m0 8h0m0 1h0m0-2h0m1-7h0m1 8h0m0 2h0m0-4h0m0 0h0m0-1h0m1-2h0m1 2h0m0 0h0m0 3h0m0-7h0m0 8h0m1-13h0m0 0h0m1 10h0m0-9h0m2 8h0m0-1h0m0 1h0m1-5h0m0 7h0m1-5h0m1 6h0m0-6h0m0 1h0m1-8h0m0 10h0m0-2h0m1 1h0m0 1h0m0-4h0m1 4h0m0-12h0m1 10h0m1-5h0m0 6h0m1-6h0m0 2h0m0 11h0m1-6h0m0 1h0m0 2h0m0-7h0m0 13h0m1-7h0m0 1h0m0 0h0m2-10h0m0 5h0m1 0h0m0 4h0m0-5h0m0 1h0m1 5h0m0-6h0m0-1h0m1 9h0m0-7h0m0 9h0m1-1h0m0-8h0m0 4h0m1-2h0m1 9h0m1-7h0m0-1h0m0-8h0m0 2h0m0 8h0m1 2h0m0-7h0m1 4h0m0 4h0m1-6h0m0 5h0m0-8h0m2 2h0m0 0h0m1 5h0m0-4h0m0-2h0m0 3h0m1-1h0m0-2h0m0 6h0m1-4h0m0 0h0m1 1h0m1 0h0m1-4h0m0 5h0m1-3h0m0-2h0m0 7h0m1 1h0m0-6h0m0 7h0m0-6h0m0-3h0m1 4h0m1-4h0m0 7h0m0-7h0m0 0h0m1 2h0m0 0h0m0 1h0m1 2h0m0 1h0m0-3h0m0 0h0m1-2h0m1-2h0m0-1h0m1 5h0m3-4h0m0 8h0m0-6h0m0 0h0m1-6h0m0 8h0m0 0h0m0 6h0m1-13h0m0 8h0m0-4h0m0 11h0m0-5h0m0-3h0m0 6h0m1-6h0m0 9h0m1-8h0m0 1h0m2-1h0m0-1h0m1 0h0m1 3h0m0-8h0m0 5h0m1-3h0m0 6h0m0-11h0m1 3h0m0 0h0m0 3h0m1-3h0m0-9h0m0 10h0m1-4h0m0 9h0m2 3h0m0-5h0m2-8h0m0 11h0m0-6h0m0 11h0m0-7h0m0 0h0m0 1h0m1-1h0m0 6h0m0-7h0m0-2h0m1 12h0m0-9h0m0-1h0m0-4h0m2 4h0m0 7h0m0 3h0m0-11h0m0 2h0m1 1h0m0 2h0m0-6h0m1 4h0m0-1h0m0-2h0m1-1h0m0-3h0m0 12h0m1-10h0m1 7h0m0-1h0m1 1h0m0-6h0m1 4h0m0 8h0m0-4h0m0 0h0m1-7h0m0 7h0m0-3h0m0-2h0m1-1h0m0 4h0m1-9h0m0 2h0m0 2h0m2 4h0m0 2h0m0-4h0m2-4h0m0 0h0m0 2h0m1-1h0m0 8h0m0-3h0m0-1h0m1-8h0m0 3h0m2 8h0m0-14h0m0 14h0m0-9h0m1 3h0m0 6h0m0-8h0m1 2h0m0 0h0m1 2h0m1-2h0m1 0h0m0 5h0m0-3h0m0-5h0m1 6h0m0 3h0m0 5h0m1 0h0m0-9h0m0 4h0m0 2h0m0 0h0m1-9h0m2 10h0m0-5h0m1 4h0m0-3h0m0-3h0m0-1h0m0-7h0m0 10h0m1-3h0m0-7h0m0 9h0m0-8h0m1 10h0m1 2h0m0-2h0m0-11h0m1 11h0m0-10h0m0 3h0m0-3h0m0-5h0m0 18h0m0-7h0m1-9h0m0 12h0m0 1h0m0-6h0m2 8h0m0-6h0m2-1h0m0 3h0m0-2h0m1 0h0m0-6h0m1 4h0m0 0h0m0 1h0m1 2h0m1 6h0m1-2h0m1 5h0m1 0h0m0 0h0m0 0h0m2-5h0m1 2h0m0-4h0m1 1h0m0 5h0m0 1h0m0-2h0m1-1h0m0 2h0m1-1h0m0-4h0m0-2h0m0 1h0m0-2h0m0 3h0m1-1h0m0 7h0m0-4h0m1-9h0m0 0h0m0 3h0m1 2h0m0 0h0m0-5h0m1 1h0m0 3h0m0 2h0m1-6h0m1 1h0m1 12h0m1-13h0m0-2h0m0 4h0m0-3h0m1 8h0m0 2h0m1-8h0m0 1h0m0 4h0m1-8h0m0 3h0m1 0h0m0 1h0m1-1h0m1 3h0m0-4h0m0 0h0m0 1h0m0 1h0m0 11h0m1-5h0m1-9h0m0-1h0m0 8h0m0-2h0m1 3h0m0-6h0m0 0h0m1 4h0m0-1h0m0 4h0m0 0h0m0-7h0m1 12h0m0-5h0m0-4h0m1 2h0m0-4h0m0 2h0m0 1h0m0 4h0m0-4h0m1-5h0m0 3h0m0-5h0m0 7h0m1 3h0m0-4h0m1 8h0m0-8h0m1 7h0m0-7h0m0 7h0m1-3h0m0-7h0m1 2h0m0 8h0m1 2h0m0-11h0m0-3h0m0 10h0m0-4h0m0-5h0m2 2h0m0 3h0m1 0h0m0 8h0m1-2h0m0-7h0m0-2h0m1 1h0m0 5h0m0-10h0m1 2h0m0 0h0m0-6h0m1 15h0m1-5h0m1 6h0m0-7h0m1 0h0m0-2h0m0 3h0m1-2h0m1 5h0m0 4h0m1-9h0m0 2h0m1-3h0m0 3h0m1-2h0m0 0h0m1-2h0m1 3h0m1 0h0m1 2h0m0-3h0m0 11h0m0-6h0m0-1h0m1 2h0m0-8h0m0 8h0m1-10h0m0 4h0m0 2h0m0-2h0m1-3h0m1 6h0m0-1h0m1 0h0m1-7h0m0 5h0m1-2h0m0 4h0m0-1h0m0-2h0m0 3h0m1-3h0m0 1h0m0 4h0m1-3h0m0-1h0m0 1h0m1 3h0m2 4h0m1-11h0m0 8h0m0-1h0m1-2h0m1 5h0m0-4h0m0 1h0m1-3h0m0-3h0m0 6h0m1-3h0m0 1h0m1 2h0m0 5h0m1-9h0m0 3h0m1-2h0m0 3h0m1-1h0m1-7h0m0 6h0m0 0h0m1 1h0m1 0h0m0-3h0m1 6h0m0-3h0m0 0h0m0 0h0m0 6h0m0 0h0m1-3h0m1-4h0m0 5h0m1 1h0m1-7h0m0 5h0m0 3h0m1-3h0m0 0h0m0-3h0m1-5h0m0 6h0m0 4h0m0-4h0m0-2h0m0-2h0m1 4h0m0-2h0m0 4h0m2-3h0m0 1h0m0-2h0m1-6h0m0 13h0m0 0h0m1-10h0m0 2h0m1 3h0m1-4h0m1-1h0m0 2h0m1 10h0m0-7h0m1-6h0m1 5h0m0 2h0m1-10h0m0 5h0m0-1h0m0-8h0m0 14h0m1-5h0m0-10h0m1 7h0m0 0h0m0 3h0m1 1h0m0 1h0m1-4h0m0 1h0m0 0h0m1-3h0m0 14h0m0-13h0m0 1h0m1-3h0m0-2h0m0 2h0m0-5h0m0 3h0m1 2h0m0 3h0m0 3h0m1 4h0m0-9h0m1 2h0m0 5h0m0-6h0m2 2h0m0 1h0m0-3h0m0 4h0m0-7h0m1-2h0m0 12h0m0 2h0m1 0h0m1-10h0m0 6h0m0-12h0m1 5h0m0-1h0m0 0h0m1 3h0m1 7h0m0-4h0m1 2h0m0-5h0m1-5h0m0 5h0m0-2h0m0 3h0m1-3h0m2 3h0m0 4h0m0 1h0m1-6h0m1-1h0m0 3h0m0 5h0m0-6h0m1 2h0m0 1h0m1 1h0m0-5h0m0 1h0m1 10h0m0-15h0m1 12h0m1-2h0m2-9h0m1 4h0m0-1h0m0 1h0m3-3h0m0 10h0m0-3h0m1 2h0m1-2h0m0-3h0m1 4h0m0-8h0m0 5h0m1-1h0m0-5h0m0 6h0m0 0h0m1-2h0m0-4h0m1 2h0m1 4h0m0 6h0m0-1h0m0-2h0m0-4h0m1 2h0m0-3h0m0 8h0m0-3h0m1 2h0m0 1h0m0-1h0m1 0h0m0-5h0m0-2h0m0 7h0m0-5h0m1 3h0m0-4h0m0-6h0m1 4h0m0-5h0m1 9h0m0 1h0m0-4h0m1 7h0m0-4h0m0 2h0m2-5h0m0 2h0m0-3h0m1 3h0m0 2h0m1-2h0m0 0h0m2 0h0m0-1h0m0 5h0m0-5h0m0 0h0m0 5h0m0-2h0m1 0h0m0-6h0m0 8h0m0-10h0m0 12h0m1-3h0m0-5h0m1-1h0m0 0h0m1-7h0m1 10h0m0 3h0m0-5h0m1 5h0m0 4h0m0-1h0m0-4h0m1 5h0m0-6h0m1 0h0m1-1h0m0 3h0m0-5h0m0 13h0m0-6h0m2 4h0m0 1h0m0-6h0m0-2h0m1 2h0m0-2h0m1-4h0m0 6h0m0-6h0m0-1h0m1 5h0m1-4h0m0-1h0m1 6h0m0 0h0m0-6h0m1 2h0m0 0h0m1-1h0m1 2h0m0-6h0m0 4h0m1 3h0m0-12h0m0 14h0m1-7h0m0 3h0m0 8h0m1-5h0m0-8h0m0 9h0m1-2h0m0-6h0m1-3h0m0 6h0m1 2h0m1-4h0m0 10h0m0-4h0m0-3h0m0-1h0m0 4h0m0-3h0m1-4h0m1 6h0m1 0h0m0 3h0m1-6h0m1 2h0m1-1h0m0 1h0m0 1h0m0 0h0m1 5h0m0-3h0m0 1h0m0 7h0m0-5h0m0 3h0m1-8h0m0 0h0m0 10h0m1-9h0m0-1h0m1 1h0m1 4h0m0-2h0m1 1h0m0-4h0m0-1h0m1 2h0m1 1h0m0 3h0m1-2h0m1-2h0m0-3h0m0-2h0m1 3h0m0-5h0m1 5h0m1 11h0m0-7h0m1 2h0m0-3h0m0-11h0m0 6h0m1 3h0m0-9h0m1 8h0m0-7h0m1 3h0m2 10h0m0-5h0m0 2h0m0-9h0m0 9h0m1-10h0m0 8h0m0 5h0m0-7h0m1 0h0m0 9h0m0-7h0m0-7h0m0 7h0m1 3h0m0-4h0m0 4h0m1-1h0m0 2h0m1-5h0m0 3h0m0 5h0m2-7h0m0-3h0m2 3h0m0 0h0m0-2h0m0-2h0m1 6h0m0-1h0m1 2h0m0-2h0m0-4h0m2-3h0m0 1h0m0-1h0m1 5h0m0 1h0m0 0h0m1 6h0m0-4h0m0 1h0m1 0h0m0 0h0m0-6h0m1 2h0m0 1h0m0 4h0m0 4h0m1 2h0m0-7h0m1 1h0m0-10h0m0 13h0m0-11h0m2 10h0m0-2h0m0-7h0m2 6h0m0-2h0m0 4h0m1 1h0m0-5h0m0 7h0m1-10h0m1 2h0m0 3h0m1 2h0m0 1h0m1-5h0m0-4h0m0 7h0m1-1h0m0 1h0m0 6h0m0-1h0m1-3h0m0-1h0m0 0h0m2 3h0m2-6h0m0 3h0m0 2h0m0 3h0m1 0h0m0-3h0m0 2h0m0 1h0m0-4h0m1 3h0m0 1h0m0-1h0m1-3h0m1 1h0m0 3h0m0-5h0m1 1h0m0 4h0m1-6h0m0-5h0m2 4h0m0 0h0m0 7h0m1-12h0m0-2h0m0 2h0m3 11h0m0-10h0m0 0h0m0 6h0m1-5h0m0 0h0m0-4h0m0 5h0m0 9h0m1-3h0m0-7h0m0 3h0m0-3h0m0-3h0m2 6h0m0-6h0m0 7h0m1-6h0m0 8h0m1-3h0m0-4h0m2 0h0m1 7h0m0-15h0m0 12h0m1-1h0m0 5h0m0-12h0m1 5h0m0 1h0m1 5h0m0-7h0m1 0h0m1 2h0m1-4h0m0 0h0m0 1h0m0 4h0m0-5h0m1 9h0m0-8h0m0 6h0m0-6h0m1 5h0m0-3h0m0-2h0m1 3h0m0 2h0m1-4h0m0-3h0m1 1h0m0 6h0m1-1h0m0-9h0m0 6h0m1-5h0m0 1h0m1-3h0m0 6h0m0 3h0m1-8h0m0 4h0m0-1h0m0 6h0m0-9h0m0 1h0m1 6h0m0 5h0m0-14h0m1 2h0m1 1h0m1-10h0m0 3h0m1 10h0m0 0h0m0-5h0m0 4h0m1-6h0m1 5h0m0 0h0m0 4h0m1-6h0m1 4h0m1 5h0m0-7h0m0 0h0m1 2h0m0-2h0m0-4h0m0 4h0m0-2h0m0 12h0m1-8h0m0 4h0m0 0h0m0 4h0m0-11h0m1 3h0m0 0h0m1 6h0m0 4h0m0-15h0m0 13h0m1-12h0m0 8h0m0 0h0m0-9h0m0 2h0m2-3h0m0 2h0m0 4h0m0 1h0m0-2h0m0-3h0m1 0h0m1 3h0m0-3h0m0 0h0m1 5h0m0-6h0m0 8h0m0-2h0m0-2h0m1 6h0m0-9h0m0 3h0m0 1h0m0 3h0m1-5h0m0 9h0m0-6h0m1 6h0m1-10h0m0 11h0m0-4h0m0 1h0m0 1h0m1-2h0m0 4h0m1-12h0m1 9h0m0 4h0m0-5h0m3-2h0m0 8h0m0 0h0m0-3h0m0 3h0m0-3h0m0 6h0m0-13h0m0 13h0m0 0h0m1-6h0m0-4h0m3 2h0m0 0h0m0-3h0m0 4h0m1 2h0m0-7h0m0 9h0m0-6h0m0-4h0m0 1h0m2 1h0m0 10h0m0-10h0m0 11h0m1-18h0m0 11h0m0-3h0m1 3h0m0-4h0m1 7h0m0-4h0m0-5h0m1 10h0m1-8h0m0 4h0m0-3h0m1 9h0m0-8h0m0 0h0m0 5h0m1-6h0m0-3h0m1 3h0m0-6h0m0 11h0m0-13h0m0 14h0m1-4h0m0-7h0m1 4h0m0-1h0m0 2h0m1-3h0m1 0h0m0 5h0m1 2h0m1-7h0m0 6h0m0-9h0m1 0h0m0 12h0m0-8h0m1 0h0m0 0h0m0-1h0m1 6h0m0-3h0m1-5h0m0 7h0m0 0h0m0-8h0m1 6h0m0-2h0m0 7h0m1 1h0m0-6h0m0-2h0m1-2h0m0 4h0m0-4h0m2 12h0m0-11h0m0 1h0m1-4h0m0 2h0m0-3h0m1 5h0m0-2h0m1 4h0m0-2h0m0 6h0m1-3h0m1 2h0m0-8h0m0 11h0m0-10h0m1 5h0m1 1h0m1 6h0m0-7h0m1 1h0m0-2h0m1 5h0m1-6h0m0 10h0m0-7h0m0-2h0m0 3h0m1 1h0m0-6h0m1 0h0m0 7h0m0-2h0m1-2h0m1-2h0m0-2h0m1 1h0m0 10h0m0-13h0m0 7h0m1 3h0m0-9h0m1 10h0m1 0h0m0-1h0m0 0h0m1-1h0m0-2h0m0-6h0m1 6h0m0 1h0m1-3h0m1 0h0m1-2h0m1 4h0m0 1h0m0-1h0m0-5h0m1 2h0m0 7h0m1-8h0m1-11h0m0 11h0m0 11h0m0-9h0m1 7h0m0-4h0m0-4h0m0 3h0m1-2h0m0-1h0m1-3h0m0 5h0m0 1h0m1 1h0m0-3h0m0 4h0m1-3h0m0-5h0m1 10h0m0-6h0m0-4h0m1 13h0m0-7h0m0-1h0m0 7h0m0-5h0m0-5h0m1 5h0m0-1h0m1 6h0m0 1h0m0-2h0m1-3h0m0-2h0m1 5h0m0-6h0m0 3h0m1-6h0m0 8h0m0-3h0m0-1h0m0 1h0m1 3h0m0-10h0m0 5h0m0 5h0m0 4h0m1 0h0m0-3h0m0-5h0m0 0h0m0-8h0m0 16h0m0-10h0m0 5h0m1-10h0m0-1h0m1 2h0m1 4h0m0 0h0m0-5h0m0 6h0m0-9h0m1 7h0m2 0h0m1 5h0m0 0h0m0-5h0m0 1h0m1-3h0m0 5h0m0 3h0m2-5h0m0 1h0m1 9h0m0-7h0m0 0h0m0-1h0m0 3h0m0 3h0m0-8h0m1 5h0m0-2h0m0 2h0m1-5h0m0 5h0m1 5h0m0-7h0m0-2h0m1 8h0m0-4h0m1 3h0m0 0h0m1-8h0m1 7h0m0-1h0m0-13h0m1 4h0m0 7h0m0-9h0m1 3h0m0-1h0m0 9h0m1-9h0m0 5h0m1-6h0m1-1h0m1-2h0m0 1h0m1 6h0m0-2h0m0-4h0m0 0h0m0 4h0m1 4h0m0-7h0m2 9h0m0-17h0m0 4h0m0 7h0m1 2h0m0 0h0m1-5h0m1 1h0m0 4h0m0-7h0m0 8h0m0 2h0m1-7h0m0 1h0m0 3h0m1-4h0m0-5h0m1 14h0m1-14h0m0 7h0m1-2h0m1 5h0m0-2h0m1 2h0m0 0h0m1-2h0m0-2h0m1-6h0m0 6h0m1-1h0m0 1h0m1 7h0m0-9h0m1-1h0m0 6h0m1-2h0m0 2h0m0 6h0m1-11h0m1 7h0m0-1h0m0 0h0m1-6h0m1 2h0m0 4h0m0 6h0m1-10h0m1 4h0m0-1h0m0 3h0m1-5h0m0 0h0m0 7h0m1 1h0m0-5h0m0 2h0m1 0h0m0-3h0m1-2h0m0 3h0m1 4h0m0-4h0m1 5h0m1-10h0m1 3h0m0 6h0m0-6h0m1 5h0m0-10h0m1 13h0m0-10h0m0-1h0m1 3h0m0 3h0m0 1h0m0-7h0m1 4h0m1 6h0m0-11h0m1 5h0m0 6h0m0-2h0m1-6h0m0-6h0m0 3h0m1 1h0m0 6h0m0-7h0m2 7h0m0-8h0m0 3h0m0 8h0m1-6h0m0-2h0m0 5h0m0 1h0m1-13h0m0 12h0m0-3h0m1 9h0m0-4h0m0-4h0m1-4h0m0-1h0m0 2h0m2 6h0m2-1h0m0-1h0m0 1h0m1-4h0m0 3h0m1-2h0m0 0h0m0 1h0m0-2h0m0-4h0m1 10h0m0-9h0m0 0h0m1 3h0m0 2h0m1-3h0m0 6h0m0 1h0m0 0h0m1-6h0m0 5h0m0-4h0m0-4h0m1 11h0m0-4h0m1-4h0m0 7h0m0-7h0m0-1h0m1-2h0m0 2h0m1-5h0m0 8h0m0 2h0m0-12h0m0 7h0m0-1h0m1-1h0m0-2h0m0-4h0m1 7h0m0-3h0m0 7h0m0-7h0m1 5h0m0 2h0m0 2h0m0-4h0m1-5h0m0 3h0m0 3h0m0 1h0m1-6h0m0 8h0m0 3h0m1-16h0m0 5h0m0 5h0m1-7h0m0 5h0m0-2h0m0 9h0m1-2h0m1-3h0m1 6h0m0-5h0m0-2h0m1 5h0m0 0h0m1 0h0m1-10h0m0 4h0m0 2h0m1 7h0m0-7h0m0 2h0m0 0h0m0-4h0m1 5h0m0-10h0m0 11h0m1-5h0m0-1h0m0 6h0m0-4h0m1-11h0m0 9h0m0 1h0m0 1h0m1 4h0m0-7h0m0 3h0m1 6h0m0-10h0m2 7h0m0-7h0m0 7h0m0-7h0m0 1h0m1 2h0m0 5h0m0-8h0m1 7h0m1-7h0m0 7h0m0-2h0m0-3h0m1 11h0m0-6h0m0-6h0m0 6h0m0-5h0m2 3h0m0 4h0m1-1h0m0-6h0m1 1h0m0 5h0m0-3h0m0 9h0m0-6h0m0 4h0m1 0h0m0-4h0m1 5h0m0-2h0m0 1h0m0-3h0m1-2h0m0-1h0m1-3h0m0 0h0m0 0h0m1 2h0m0 4h0m0-5h0m1-7h0m0 17h0m0-9h0m0 5h0m0-8h0m0 9h0m1-8h0m0 9h0m0-4h0m0 2h0m1-4h0m1-3h0m2 4h0m0 0h0m0 3h0m0-6h0m2 3h0m0 1h0m0 1h0m0-4h0m1-4h0m1 1h0m0 4h0m0-5h0m1 7h0m1-4h0m1-5h0m0 7h0m1 2h0m0-2h0m1-3h0m0-2h0m0 6h0m0-5h0m0 8h0m0-10h0m1 9h0m0-7h0m1 2h0m0-1h0m1 1h0m0 8h0m0-12h0m0 4h0m1-2h0m0 1h0m0-2h0m1 9h0m0-14h0m0 2h0m0 3h0m0-5h0m1 4h0m1 0h0m0 1h0m0 5h0m0-6h0m1 6h0m0-4h0m1 3h0m0-5h0m1 4h0m0 1h0m0 0h0m1 5h0m1-3h0m1 4h0m1-8h0m1-2h0m0 3h0m1 4h0m2 1h0m0-5h0m0 3h0m1-1h0m0 1h0m0 3h0m0-8h0m0 4h0m0-3h0m1 6h0m0 0h0m0-1h0m0 2h0m0-10h0m1 4h0m0-5h0m0 4h0m1 8h0m0-3h0m0-3h0m0 6h0m1-4h0m0-2h0m0 0h0m0 1h0m0 3h0m1-3h0m0 4h0m0-8h0m1 2h0m0 1h0m1-2h0m0-2h0m0 5h0m1 1h0m0-2h0m2-5h0m0 3h0m0 6h0m0-3h0m2 1h0m1 5h0m0-9h0m0 5h0m1-6h0m0 5h0m1-9h0m1 3h0m0 1h0m0 3h0m1 0h0m1 3h0m1-8h0m0 9h0m2-4h0m0 2h0m0-9h0m0 12h0m1-2h0m0 0h0m0-6h0m1 2h0m0 5h0m0 1h0m1-7h0m0-2h0m0 8h0m1 1h0m0-1h0m0 3h0m0 1h0m2-2h0m1-7h0m0 1h0m1 7h0m0-1h0m0-2h0m1 2h0m1-2h0m0-2h0m0 8h0m1 0h0m0-11h0m0 4h0m1-8h0m0 7h0m1-8h0m1 6h0m0 2h0m0-6h0m0-1h0m0 0h0m1 7h0m0-7h0m0 5h0m0-4h0m1-4h0m0 2h0m0-4h0m0 5h0m1-4h0m1 6h0m0 0h0m1 2h0m0 0h0m0-4h0m0 5h0m1 3h0m1-7h0m0 1h0m0 3h0m0 7h0m1-8h0m1 1h0m0 0h0m0 0h0m1 7h0m0-10h0m0-3h0m1 2h0m0 0h0m0 3h0m0-2h0m0 3h0m0 4h0m0-6h0m1 6h0m0-2h0m0-1h0m0 3h0m0-4h0m1-5h0m1 1h0m0 3h0m0 6h0m0-7h0m0 4h0m1 2h0m0 2h0m1-5h0m0-6h0m1 1h0m0 5h0m0 4h0m1 4h0m1-11h0m0-3h0m0 5h0m0 2h0m0 3h0m1-8h0m0-2h0m0-1h0m1 10h0m0-7h0m1 3h0m0-1h0m0 6h0m1-1h0m0-5h0m1-1h0m1 2h0m0-3h0m0 3h0m1 7h0m1-12h0m0 12h0m0-3h0m1-2h0m1-2h0m0 7h0m0-3h0m0-1h0m0 2h0m0-2h0m1 4h0m0 1h0m1-1h0m1-1h0m0 4h0m0-11h0m0 7h0m0 0h0m1-1h0m0 0h0m1 3h0m0 2h0m0-4h0m1-12h0m0 12h0m1 4h0m0-10h0m1 0h0m1-5h0m0 5h0m0 3h0m0 5h0m1-4h0m0 3h0m0-10h0m0 7h0m1 3h0m1-11h0m0 5h0m1-2h0m0 6h0m1 1h0m1-5h0m0-7h0m0 14h0m1-9h0m0 8h0m0-3h0m0-1h0m1 7h0m1-10h0m0 1h0m1 3h0m1 4h0m1-6h0m1 8h0m0-1h0m0-9h0m1 5h0m0 3h0m0-3h0m0 0h0m1 5h0m1-5h0m0 0h0m1-1h0m0 1h0m0 0h0m0 3h0m0-3h0m0-4h0m0-1h0m0 0h0m1-1h0m0 1h0m0 1h0m0 5h0m1-4h0m0-3h0m1-2h0m0 1h0m0 6h0m0 1h0m1-9h0m0 6h0m0-1h0m1 9h0m0-13h0m0 5h0m0-7h0m1 2h0m0 3h0m0 3h0m0-2h0m0 7h0m0-10h0m0 5h0m1-10h0m0 11h0m0-7h0m1 2h0m0 2h0m0-3h0m0 0h0m0 5h0m0-7h0m1 5h0m0-3h0m0 2h0m0 2h0m1 3h0m0-6h0m0 5h0m0-3h0m0 8h0m1 1h0m0-4h0m0-10h0m0 3h0m1-3h0m1 5h0m0-4h0m1-3h0m1 15h0m0-11h0m0-3h0m1 6h0m0-6h0m0 0h0m1 10h0m0-4h0m1-10h0m0 3h0m1 3h0m0 0h0m0 0h0m0-1h0m0-7h0m0 6h0m0-2h0m1 8h0m1-8h0m0 4h0m1 2h0m1-5h0m0 1h0m0-2h0m0 5h0m0 3h0m1-5h0m0 0h0m2 8h0m1-8h0m1 5h0m0-1h0m0-2h0m1 7h0m0 3h0m0-4h0m0 1h0m1 0h0m0 2h0m0 3h0m0-1h0m0 1h0m0-10h0m0 7h0m1 3h0m2-2h0m0-3h0m0 0h0m1 5h0m1-3h0m0 3h0m1-1h0m0-1h0m0-2h0m0-1h0m1 2h0m1-7h0m0 3h0m0-7h0m1 3h0m1 11h0m0-15h0m0 1h0m0 10h0m1 1h0m0-6h0m0 3h0m1-10h0m1 4h0m0 4h0m0-4h0m0-1h0m0 7h0m1-9h0m0 3h0m1-1h0m0-5h0m0 3h0m2-4h0m0 3h0m0 7h0m0-7h0m0 2h0m1-7h0m1 6h0m0-7h0m0 7h0m2-3h0m0 9h0m1-1h0m0-1h0m0-6h0m0 8h0m1 0h0m0-1h0m0 4h0m0 1h0m2 0h0m0 0h0m0 3h0m0-3h0m0-1h0m0 3h0m1-3h0m0-6h0m1 6h0m1-4h0m0 8h0m0 2h0m1-1h0m0-10h0m1 2h0m1 2h0m0-4h0m1-1h0m0 1h0m0 2h0m0 0h0m0 2h0m3-1h0m1 0h0m0 1h0m1-3h0m0 10h0m0-3h0m0-3h0m1-7h0m0 7h0m1 0h0m1-4h0m1 4h0m0 3h0m1-2h0m0-3h0m1-1h0m0 5h0m0-3h0m0 4h0m1-4h0m0-5h0m0 1h0m0 5h0m0-3h0m0 1h0m0 1h0m1-3h0m0-8h0m0 6h0m1 7h0m1-4h0m0 3h0m0-9h0m1 2h0m0-2h0m0 0h0m0 6h0m1 1h0m0-10h0m0 4h0m0 1h0m0 8h0m1-1h0m0-3h0m0-11h0m1 10h0m0-4h0m1 5h0m0 1h0m0-12h0m0 3h0m0 14h0m1-11h0m0 4h0m0-4h0m0 3h0m1 2h0m0 5h0m0-3h0m0-8h0m1 0h0m0-1h0m0 3h0m1-3h0m1 9h0m0-10h0m1 4h0m0 10h0m0-8h0m1 3h0m0-2h0m1-3h0m0 4h0m0-2h0m0-7h0m1 11h0m0 5h0m1-9h0m1 7h0m0-6h0m0-7h0m0 11h0m1-2h0m0-2h0m1 0h0m1 2h0m1 1h0m0 0h0m1-2h0m0-5h0m1 7h0m0-5h0m1 0h0m0 9h0m0 0h0m0-3h0m0-1h0m1 1h0m0-7h0m0 1h0m0 11h0m1-5h0m0 2h0m1 0h0m0 4h0m1-8h0m0-8h0m0 10h0m0 6h0m0-5h0m0 1h0m0-3h0m1-4h0m0 5h0m0-7h0m1 10h0m0 0h0m0-3h0m0 6h0m1 0h0m0-10h0m0 6h0m1 0h0m0-8h0m1 0h0m0 12h0m0-11h0m1 7h0m0 0h0m1 2h0m0-12h0m0 7h0m0 3h0m1-3h0m0 2h0m0-2h0m1-7h0m1 8h0m0 0h0m1 4h0m0-9h0m0 11h0m0-7h0m1 5h0m0 1h0m1-1h0m1-4h0m0 1h0m0 5h0m1 0h0m0-7h0m0-4h0m0 4h0m0 6h0m1-4h0m0 5h0m0-9h0m0 1h0m1 0h0m0 6h0m0-11h0m1 1h0m0 6h0m0-2h0m1 8h0m0-5h0m0-7h0m1 6h0m0-5h0m1 0h0m0 0h0m0 0h0m0 7h0m1 0h0m0-4h0m0-2h0m0-2h0m1 1h0m0-2h0m0 2h0m0-4h0m1 15h0m0-10h0m0 1h0m1-3h0m1 7h0m0-3h0m0-5h0m0 3h0m0-2h0m1 3h0m0-2h0m0-3h0m0 7h0m1-4h0m0 4h0m1 2h0m0-4h0m1 0h0m0-9h0m0 9h0m0-3h0m1 0h0m0 4h0m1-3h0m0-3h0m0 6h0m0 2h0m1 3h0m1-8h0m0 5h0m0-3h0m1 0h0m0 2h0m0 0h0m2 1h0m0 2h0m0-5h0m0 2h0m1-3h0m1 2h0m0 1h0m1 1h0m0 1h0m0 1h0m1-8h0m0 3h0m0 1h0m1-7h0m0 6h0m0 2h0m1 1h0m1 1h0m0-3h0m0-6h0m1 3h0m0-2h0m0 0h0m1 5h0m0-10h0m0 5h0m1 0h0m1-9h0m0 12h0m0-1h0m0 6h0m1-4h0m0-6h0m0 0h0m0 5h0m2-1h0m1-2h0m0 6h0m0-4h0m1-10h0m0 8h0m1-6h0m1 10h0m0 0h0m0 5h0m1-5h0m0-2h0m0-1h0m1 4h0m0-6h0m1 1h0m0-2h0m1 11h0m0-7h0m1 0h0m0 6h0m0-3h0m1 5h0m0-1h0m0-2h0m1-5h0m0 5h0m0-4h0m1-4h0m1-1h0m0 6h0m0-1h0m1 1h0m0-4h0m0 4h0m0-6h0m0 3h0m0 1h0m1-3h0m0 8h0m1-6h0m0-3h0m0 4h0m0-1h0m0 1h0m0 6h0m0-12h0m1 9h0m0-1h0m0-1h0m1 3h0m0 7h0m0 0h0m1-12h0m1-5h0m0 9h0m2-12h0m0 11h0m1-4h0m0 3h0m0 4h0m0-11h0m0 3h0m1 0h0m1 4h0m0 1h0m0-8h0m0 7h0m1 2h0m0-2h0m0 0h0m1-1h0m1 1h0m1-3h0m0 5h0m0-1h0m1 1h0m0-1h0m0 2h0m0 2h0m0-11h0m1 8h0m0-7h0m0 9h0m1 1h0m1-1h0m1-8h0m0 3h0m0-5h0m0 1h0m0 4h0m0-3h0m1 1h0m0-2h0m0 10h0m0-2h0m0-3h0m1-3h0m0 2h0m0-5h0m1-4h0m0 3h0m0 1h0m1 4h0m0 3h0m0-4h0m1 6h0m0-8h0m0 6h0m1-3h0m0-3h0m0 1h0m0 6h0m0-8h0m2 5h0m0-4h0m1 9h0m1-3h0m1-1h0m0 0h0m1 0h0m0 1h0m1-4h0m0 1h0m0 4h0m1-1h0m0 1h0m1 4h0m0-11h0m1 10h0m1-8h0m0-5h0m1 10h0m1-6h0m0-1h0m1-1h0m0 5h0m0 0h0m0-9h0m1 5h0m0 4h0m0-2h0m0 4h0m1 5h0m0 3h0m0-9h0m0 3h0m0 2h0m0-5h0m0 5h0m1 2h0m1-2h0m0 1h0m2 0h0m0-6h0m1-7h0m0 13h0m1-6h0m0 10h0m0-11h0m0-1h0m0 2h0m1-6h0m0 3h0m0 0h0m0-1h0m1 5h0m1-7h0m0 1h0m1 4h0m0 2h0m0-4h0m0 1h0m0 4h0m1 0h0m0 4h0m0-6h0m0 1h0m0-4h0m3 4h0m1-10h0m1 4h0m0 10h0m0-1h0m0-8h0m2 10h0m0-3h0m1-3h0m1 2h0m0-4h0m0 4h0m1 4h0m0-13h0m0 15h0m0-1h0m0-7h0m1 5h0m0 2h0m2-6h0m0 0h0m1 4h0m0 0h0m2 0h0m1-9h0m0 11h0m0 3h0m0-13h0m1 6h0m0 2h0m1 1h0m0 4h0m0-7h0m0 2h0m1-6h0m1 3h0m0 0h0m1-4h0m0 9h0m0-11h0m0 6h0m1 0h0m0-7h0m1 4h0m1 4h0m0-6h0m2 2h0m0-4h0m0-1h0m0 0h0m1 6h0m0-2h0m1 4h0m0 5h0m0-6h0m0 3h0m2-3h0m0-6h0m1 0h0m0 0h0m0 0h0m1-5h0m0 4h0m0 7h0m0-7h0m1 7h0m0-6h0m1 6h0m0 1h0m1 1h0m0-4h0m0 0h0m0 1h0m0 1h0m1 2h0m0-9h0m0 2h0m0 3h0m2-4h0m0 2h0m0 4h0m0-6h0m1-1h0m0 6h0m0-3h0m0 1h0m0-3h0m0 7h0m1-7h0m0 3h0m0-1h0m1-4h0m0 3h0m0 4h0m0-1h0m1-5h0m0 8h0m1-6h0m0 5h0m0-6h0m0 9h0m0 2h0m1-2h0m1-6h0m0 8h0m1-2h0m1 0h0m0-1h0m0 5h0m0 2h0m0-3h0m1-3h0m1 5h0m1-12h0m1 5h0m0 1h0m1-4h0m1-3h0m0 9h0m1 0h0m0-3h0m1-6h0m0 9h0m1-4h0m0 0h0m0 0h0m0-3h0m0 5h0m1-4h0m0-4h0m0 0h0m0 2h0m1 4h0m0 1h0m0-2h0m2 2h0m0-5h0m1 9h0m0-11h0m0 11h0m1-2h0m2-3h0m0 8h0m0-9h0m0 2h0m0 8h0m1-4h0m0-6h0m0 6h0m1 1h0m1-8h0m0 2h0m0 2h0m0 0h0m0 1h0m0 3h0m0-1h0m1-2h0m0-4h0m1 4h0m0-7h0m0 4h0m1-1h0m0-2h0m1 12h0m0-7h0m0-5h0m0 0h0m1-2h0m0 2h0m0 3h0m0 1h0m1-2h0m0-1h0m0 3h0m0 1h0m1 2h0m0-4h0m0 5h0m0-3h0m0 3h0m0-5h0m1 1h0m0 0h0m0 2h0m0 6h0m0-10h0m1 10h0m0-14h0m0 7h0m0-1h0m0 8h0m0-8h0m1 6h0m0 0h0m0-3h0m0 3h0m1-1h0m0 1h0m1-4h0m0-3h0m1 4h0m0 1h0m0-10h0m0 6h0m0-4h0m0 7h0m1-4h0m0 3h0m1-4h0m0 0h0m0 7h0m1-5h0m0-8h0m1 8h0m0-3h0m0-8h0m1 4h0m0 1h0m0 3h0m1-5h0m1 1h0m0-2h0m1 1h0m0-6h0m1 10h0m0 0h0m0-3h0m0 2h0m0 1h0m1-1h0m0 5h0m0-3h0m1 2h0m0 5h0m0-2h0m0-1h0m1 4h0m0 1h0m0 2h0m1-8h0m1 4h0m0 2h0m0-6h0m1 0h0m0 4h0m1-6h0m1-4h0m1 9h0m0-7h0m1-1h0m0 4h0m0-3h0m0 0h0m1 6h0m0 0h0m1-2h0m0 2h0m0-6h0m0 6h0m1-3h0m1-1h0m0 4h0m0 4h0m1-2h0m0-4h0m0-6h0m0 2h0m1 4h0m1-1h0m0-5h0m0-3h0m1 6h0m1 5h0m0-2h0m0 8h0m0-12h0m1 4h0m1-4h0m1-6h0m0-2h0m0 10h0m0 1h0m0 0h0m0-4h0m1-6h0m0 4h0m0-1h0m0 6h0m1-6h0m0-5h0m0 11h0m1-8h0m0 2h0m0-2h0m1 8h0m1-7h0m0 2h0m3-1h0m0 1h0m0 2h0m0-2h0m0-3h0m1 1h0m0 5h0m0-1h0m1 7h0m1-5h0m0-9h0m0 8h0m0-2h0m1 0h0m0-8h0m0 7h0m0 3h0m0 2h0m1-11h0m0 8h0m0 3h0m0-3h0m1-1h0m0 6h0m0-2h0m0-1h0m0 2h0m1-2h0m0-10h0m0 11h0m0-1h0m0 3h0m1-3h0m0-1h0m1 9h0m0-9h0m0 1h0m0-2h0m0 4h0m0 0h0m0 7h0m2 0h0m0-8h0m1 10h0m0 0h0m0-8h0m1 5h0m0-7h0m0 3h0m0-7h0m1 13h0m0 0h0m0-3h0m0 4h0m0-9h0m0 2h0m0-4h0m1 10h0m0-10h0m2 9h0m0-8h0m1 7h0m0-5h0m0 4h0m1 0h0m0-2h0m0-2h0m0 1h0m0 3h0m1 1h0m0 3h0m0-11h0m0 3h0m0 1h0m0 4h0m1 2h0m0-2h0m1-14h0m0 6h0m0 8h0m0-3h0m0 0h0m0-7h0m1 7h0m0-6h0m1 3h0m0-4h0m1-6h0m1 0h0m1 0h0m0 10h0m0-7h0m2 3h0m0 1h0m0-5h0m0 2h0m1 3h0m0-7h0m0 0h0m0-1h0m0 9h0m1-4h0m1 2h0m0 1h0m0 2h0m0-7h0m1 2h0m1 9h0m1-5h0m0 3h0m0-3h0m1 3h0m0-9h0m0 5h0m1-4h0m0 1h0m0-2h0m0-5h0m1 12h0m1-4h0m0 7h0m0-4h0m1 4h0m1-10h0m0 8h0m1-4h0m0-1h0m1-6h0m0 5h0m1 9h0m0-7h0m1 1h0m0-1h0m0 5h0m0-8h0m1 9h0m1-6h0m0-5h0m1 12h0m0-4h0m1-8h0m0 6h0m0-2h0m0 6h0m0-3h0m1-1h0m0 4h0m1-8h0m0 7h0m0 3h0m1-9h0m1 15h0m0-8h0m0-2h0m0-1h0m0 6h0m0-5h0m1-3h0m0 3h0m0 5h0m0-7h0m1 3h0m0 9h0m1-8h0m1 0h0m0 0h0m1-2h0m1 4h0m0 5h0m0-10h0m0 5h0m0 3h0m0-2h0m0-9h0m2 3h0m0 8h0m0-3h0m1-3h0m0 4h0m1-2h0m0-1h0m0-5h0m1 1h0m0 0h0m1 1h0m0 4h0m0-6h0m0 1h0m1-1h0m0 2h0m0 11h0m0-8h0m1 2h0m0 2h0m0 0h0m0-5h0m0 3h0m2-6h0m0-2h0m0 8h0m1-6h0m1 4h0m0 5h0m0-6h0m0-1h0m2 0h0m0-7h0m1 11h0m0-3h0m0 5h0m0-8h0m0 1h0m1 1h0m1-7h0m0 9h0m1 8h0m0-5h0m0-9h0m1 9h0m0-4h0m0-3h0m0 12h0m1-4h0m0-2h0m0 1h0m1 3h0m0-3h0m0-4h0m1-2h0m0 11h0m0-10h0m1 7h0m1-6h0m0 0h0m1-2h0m0 2h0m0-4h0m0 6h0m1 7h0m0-10h0m1 1h0m0-4h0m1-4h0m0 6h0m0-4h0m2 0h0m0 10h0m0-15h0m0 5h0m1-3h0m0 10h0m0 2h0m0-4h0m0-6h0m1 3h0m0 5h0m0 4h0m0-8h0m1 0h0m0 2h0m1 3h0m0-3h0m1 6h0m0-2h0m0-1h0m0-2h0m1 5h0m0-5h0m0 6h0m0-7h0m0 5h0m0 0h0m1-5h0m0-6h0m0 0h0m1 4h0m0 3h0m0-6h0m0 7h0m1-9h0m0 4h0m0 1h0m1-4h0m0 5h0m1 5h0m0-10h0m1 0h0m0 3h0m0-7h0m1 9h0m0-3h0m0 11h0m1-5h0m0 2h0m0-1h0m0-1h0m1-5h0m0 10h0m1-11h0m0 8h0m0-3h0m1-2h0m0 1h0m0 3h0m1 2h0m0 2h0m1-3h0m0 3h0m0 1h0m1-1h0m0-8h0m0-1h0m0 6h0m1-12h0m0 8h0m1 1h0m0-5h0m1 4h0m1 6h0m0-8h0m0 3h0m0-2h0m0 6h0m0 0h0m1-5h0m0 0h0m0 3h0m0 0h0m1-10h0m0 8h0m0-7h0m1 11h0m1-5h0m0-6h0m0 4h0m1 5h0m0-11h0m0 1h0m0 5h0m1 4h0m1-2h0m0-1h0m0 9h0m1-2h0m0-4h0m0-4h0m1 1h0m0 3h0m0-1h0m1-7h0m0 4h0m0 5h0m0-3h0m1-1h0m1-2h0m0 1h0m0 4h0m0 0h0m1-3h0m0-3h0m0-2h0m1-2h0m0-2h0m2 7h0m0-3h0m0 5h0m0 2h0m0 0h0m1-10h0m0 7h0m0 1h0m1-1h0m0-2h0m0 1h0m1 3h0m0 1h0m0-5h0m1 1h0m1 5h0m0 2h0m0 0h0m0-2h0m0-4h0m1 0h0m0 9h0m0-9h0m0 10h0m0-5h0m1-3h0m0 8h0m0-7h0m1-1h0m0 10h0m0-6h0m0 1h0m1-7h0m0 4h0m0 3h0m0-3h0m2 2h0m0 5h0m1-7h0m0 3h0m1-5h0m1-1h0m1-3h0m0 10h0m0-8h0m0 3h0m1 2h0m0-2h0m0-1h0m1 1h0m1 8h0m0-11h0m1 8h0m0-11h0m2-2h0m0 17h0m0-16h0m1 8h0m0 6h0m0-6h0m2-4h0m0 4h0m0-1h0m1-1h0m0 3h0m0-4h0m0 3h0m2-3h0m1 2h0m0 5h0m0-4h0m1-4h0m0 1h0m1 2h0m0 0h0m0 4h0m0 1h0m1-2h0m0-2h0m0 4h0m0-6h0m1 1h0m0 3h0m0-4h0m0 1h0m0 0h0m0 7h0m1-3h0m0 1h0m0-1h0m0-10h0m0 6h0m1 1h0m0-5h0m0 6h0m0 2h0m1 4h0m0-2h0m0-6h0m1 0h0m0 9h0m0-7h0m1 2h0m0 1h0m0-1h0m0-4h0m0-2h0m0 0h0m1-1h0m0 3h0m0-2h0m0 11h0m0-8h0m0 3h0m1-1h0m0 0h0m0-11h0m0 11h0m1 1h0m1-1h0m0-6h0m0-1h0m1 4h0m0-8h0m0 7h0m1 2h0m0-7h0m0 2h0m0 4h0m1-5h0m0 7h0m0-3h0m1-8h0m0 1h0m0 1h0m0 6h0m1 3h0m0-6h0m1 7h0m1-6h0m0 3h0m0-4h0m0-1h0m1 10h0m0-2h0m0-10h0m0 11h0m0-2h0m1 0h0m1-2h0m0 7h0m0-9h0m1 4h0m0 1h0m1-4h0m0 2h0m1-2h0m0 0h0m1 1h0m0-3h0m0 3h0m1 3h0m0-4h0m0 3h0m0-4h0m0 8h0m2 1h0m0-2h0m1 1h0m0-7h0m0-4h0m1 6h0m0-3h0m1-5h0m0 2h0m0 8h0m0-3h0m1-2h0m0-4h0m1 0h0m0 0h0m0 0h0m0 1h0m0 2h0m0-5h0m1 1h0m0 7h0m0-8h0m0 4h0m1-2h0m0 6h0m0-3h0m0 3h0m1 0h0m0-3h0m0 2h0m0-2h0m2 0h0m0-11h0m0 4h0m0 4h0m0 3h0m0 2h0m1 1h0m0-1h0m0 5h0m1-8h0m0 4h0m1-1h0m0 2h0m1-5h0m0 4h0m0-6h0m1-2h0m0 9h0m0-11h0m0-1h0m1 11h0m0-7h0m0-2h0m0 7h0m1-9h0m0 6h0m1-2h0m0 6h0m1-7h0m0 4h0m1 4h0m0-10h0m0 1h0m1 4h0m0 6h0m1 0h0m0-3h0m1-3h0m0 1h0m0-1h0m0 1h0m1 0h0m1 10h0m0-13h0m0 3h0m1-3h0m0 12h0m1-9h0m0-1h0m0 0h0m1 3h0m0-4h0m0-1h0m0 5h0m0-3h0m1-1h0m1 0h0m0-2h0m0-1h0m1-2h0m1 4h0m0 3h0m1 1h0m0 5h0m0-1h0m0-10h0m0 7h0m1-8h0m0 8h0m0 5h0m0-11h0m1-3h0m1 8h0m0 1h0m0-2h0m0-3h0m0 11h0m2-8h0m0 3h0m0-3h0m1 5h0m0 1h0m1-2h0m1-6h0m1 6h0m0 1h0m0-4h0m1 4h0m0-1h0m0 1h0m1 0h0m1 4h0m1 0h0m1-6h0m0 7h0m0-2h0m1-3h0m0 4h0m0 4h0m1-10h0m0 7h0m0 1h0m1 1h0m0 0h0m0-6h0m1 7h0m0-5h0m0 2h0m0-6h0m0 2h0m1-5h0m0 7h0m1 2h0m1-7h0m0-2h0m1 3h0m1-5h0m0 4h0m0 3h0m1 0h0m0-1h0m1 2h0m0-4h0m1 2h0m0-1h0m0 5h0m1-9h0m0 3h0m1-2h0m1 3h0m1-5h0m0 6h0m0-6h0m2-1h0m1 14h0m0-12h0m0 3h0m0-1h0m1 0h0m0-1h0m0 4h0m0 1h0m1-7h0m0 7h0m1-14h0m1 5h0m0-1h0m0 4h0m0 7h0m1-11h0m1 3h0m1 6h0m1 2h0m0-9h0m1 4h0m1-5h0m1-7h0m1 9h0m1 5h0m0-10h0m1 7h0m0-3h0m1 0h0m0 3h0m0 1h0m0-13h0m0 6h0m0 8h0m0-12h0m1 13h0m1-4h0m0 2h0m0-4h0m0 1h0m1 1h0m1-5h0m1 1h0m0-1h0m0 14h0m1-14h0m1 2h0m1-1h0m1 5h0m0-3h0m1 8h0m0-12h0m0 12h0m1-4h0m1 5h0m1-1h0m0-5h0m0-2h0m2-3h0m0 4h0m0 3h0m0 1h0m1 3h0m0-1h0m0 5h0m0 0h0m0-2h0m1-5h0m0 0h0m0 1h0m1-4h0m0 6h0m0-4h0m1 0h0m0 2h0m1-9h0m0 13h0m2-3h0m0-3h0m0-5h0m0 2h0m0 4h0m1-7h0m0 3h0m0-2h0m0 6h0m1-1h0m0-4h0m0 4h0m1-11h0m0 8h0m0-5h0m0 9h0m0-2h0m2 1h0m1-1h0m0-3h0m1 10h0m0-12h0m0 7h0m2-3h0m0 0h0m0 1h0m1 1h0m0 2h0m0 5h0m1-3h0m0-2h0m0 1h0m0-7h0m0-1h0m0 6h0m1-2h0m0 1h0m0-9h0m2 11h0m0 0h0m1-5h0m0 2h0m0-5h0m1 5h0m0-3h0m0 9h0m2-5h0m0 0h0m0-11h0m0 6h0m0-2h0m0 11h0m1-8h0m1-8h0m0 9h0m0-1h0m1 2h0m1-4h0m0-5h0m0 2h0m0 4h0m1-1h0m3 4h0m1-4h0m0-3h0m0 10h0m1-4h0m1-7h0m0 3h0m0 7h0m0 3h0m1-4h0m0-3h0m0-10h0m1 10h0m1 4h0m0-6h0m1 3h0m0 2h0m1 1h0m0 3h0m1 0h0m0-5h0m0 2h0m0 2h0m1 0h0m2 0h0m0 1h0m0 0h0m0 3h0m0 1h0m0-4h0m0-7h0m0 8h0m1 6h0m1-12h0m0 9h0m0-4h0m1 0h0m0 2h0m0-5h0m0 0h0m0-4h0m1 9h0m0-7h0m0-2h0m0-1h0m0 9h0m1-4h0m0-1h0m2-4h0m0 4h0m0-2h0m1 6h0m1-4h0m0-2h0m1 6h0m0 1h0m0-1h0m1 0h0m0 7h0m0-7h0m0-1h0m0-1h0m1 4h0m0-5h0m0 7h0m0 3h0m0-12h0m0-6h0m2 16h0m0-7h0m0-1h0m1 6h0m2-4h0m0-2h0m0 4h0m0-5h0m1 11h0m0-6h0m1-7h0m0 5h0m0 6h0m1-7h0m0 0h0m0 2h0m1-6h0m0 2h0m1 10h0m0-10h0m1 7h0m0-4h0m0 1h0m1 5h0m0 0h0m0-10h0m1 8h0m0-12h0m2 5h0m0 1h0m0 5h0m1-6h0m0 1h0m1 2h0m0-5h0m0-3h0m0 5h0m0 7h0m1-11h0m1 7h0m1-4h0m0-3h0m1 9h0m0-7h0m0-4h0m0 5h0m1-3h0m0 9h0m2 2h0m0-11h0m1 13h0m0-4h0m1-7h0m2 4h0m0 2h0m0 4h0m1-3h0m0-9h0m1 10h0m0-2h0m1-2h0m0 6h0m0-3h0m0-3h0m0 3h0m1-6h0m0 11h0m1-8h0m0 7h0m0-9h0m1 1h0m0-2h0m0-5h0m0 2h0m0 3h0m2-3h0m0-3h0m0 5h0m1-1h0m0 5h0m0-6h0m0 5h0m0-7h0m0 0h0m1 4h0m0-3h0m0 2h0m0-5h0m0 9h0m0 0h0m1-6h0m1 0h0m2 8h0m1-6h0m1 2h0m1-7h0m0 2h0m0-3h0m1 11h0m0-1h0m1-3h0m0 1h0m1-6h0m1 8h0m0-4h0m0 8h0m0-9h0m1 3h0m1-2h0m1-2h0m0 2h0m0 2h0m0 0h0m0 0h0m1 5h0m0 0h0m0-4h0m0-6h0m0-3h0m1 11h0m0-2h0m0-1h0m0-8h0m0 7h0m1 4h0m0-6h0m0 4h0m0-3h0m1 3h0m0 0h0m1-4h0m1 6h0m0 4h0m0-5h0m1-6h0m0 10h0m0-4h0m1 2h0m0 0h0m1-3h0m0 1h0m1-4h0m0 11h0m0-15h0m0 9h0m1-4h0m0 2h0m1 6h0m0-10h0m1 1h0m0 2h0m0 4h0m0-5h0m1 6h0m0-6h0m0-1h0m1 7h0m1-5h0m0 0h0m1-4h0m0 5h0m0 3h0m1-2h0m0 8h0m0-5h0m1-2h0m0 1h0m0-2h0m1 1h0m0-2h0m0 6h0m1 3h0m0-2h0m1-4h0m0-2h0m1 3h0m0-4h0m0 6h0m1-5h0m0 6h0m1-5h0m0 0h0m1-2h0m1 3h0m0-1h0m0 0h0m0 1h0m0-2h0m1 3h0m0 0h0m0-2h0m1 4h0m0-3h0m0 4h0m0-3h0m1-6h0m0 6h0m0 0h0m1 1h0m1 1h0m0-2h0m1-2h0m0 8h0m0 0h0m0-9h0m0 10h0m0-11h0m0 3h0m1-2h0m0 10h0m0-6h0m0-2h0m1-1h0m0 0h0m1 3h0m0-3h0m1 4h0m1 4h0m1-12h0m0 4h0m0 3h0m1 0h0m0-3h0m0 2h0m0 1h0m1-9h0m0 9h0m1-9h0m0-1h0m0 6h0m0 2h0m0 5h0m0-2h0m1-6h0m0 1h0m0-4h0m1 3h0m0 2h0m1-5h0m0 0h0m1-6h0m0 8h0m0-2h0m1 3h0m0-6h0m0 0h0m0 3h0m1-8h0m1 6h0m1 2h0m0 0h0m0-6h0m1 11h0m0-6h0m0-6h0m0 4h0m1-1h0m0-1h0m0 2h0m0 2h0m1-2h0m0-4h0m0 10h0m0-6h0m0 0h0m1 9h0m1-5h0m1 3h0m0-1h0m1-8h0m1 8h0m1-3h0m0 5h0m0 0h0m1 2h0m1-3h0m0 10h0m0-10h0m0 0h0m1-6h0m0 8h0m1 2h0m0 1h0m0 0h0m0-3h0m1 0h0m1 2h0m0 4h0m1 2h0m0-10h0m0 2h0m0 1h0m0-5h0m0 12h0m0-2h0m1-13h0m0 6h0m0 0h0m0-2h0m0 3h0m2-10h0m0 8h0m0-4h0m0 2h0m0 2h0m0 4h0m2-6h0m0 4h0m1-2h0m0-4h0m0 8h0m0-10h0m1 1h0m1-1h0m0 1h0m1 10h0m0-3h0m1-3h0m0-3h0m1 0h0m1 6h0m0 1h0m0 1h0m1-5h0m1 0h0m0 5h0m0 2h0m0-8h0m1-4h0m0 3h0m0 1h0m0 6h0m1-8h0m0-1h0m0 1h0m0 2h0m1-3h0m0 4h0m1-3h0m0-5h0m0 6h0m0-7h0m0 2h0m1 8h0m1-3h0m0-3h0m1 8h0m0-6h0m1 1h0m0-3h0m1 1h0m0-5h0m0 17h0m1-7h0m1-2h0m0-1h0m0 2h0m0-1h0m0 0h0m2 0h0m0 1h0m1-4h0m0-1h0m0 4h0m0 4h0m0-4h0m0 5h0m1-8h0m0-7h0m1 7h0m0-2h0m0 8h0m1 2h0m0 1h0m0-9h0m1-2h0m0 2h0m1 7h0m0-2h0m0 3h0m0-8h0m0 6h0m0-3h0m1 3h0m0 1h0m0 0h0m0-5h0m1 7h0m0-1h0m0 5h0m0-6h0m0 5h0m1-2h0m0-5h0m0 10h0m0-12h0m2 1h0m0 3h0m1-3h0m0 11h0m0-14h0m1 9h0m0-5h0m0 4h0m1-6h0m0 1h0m0-4h0m0 7h0m1-4h0m1-4h0m0 9h0m0-11h0m0 10h0m0-9h0m2 8h0m0-9h0m1 3h0m0 4h0m0 0h0m0-2h0m0 4h0m2-5h0m1 10h0m2-1h0m1-9h0m0 5h0m0-3h0m1 5h0m0-4h0m0 0h0m1 8h0m0-2h0m0-3h0m1-2h0m0 9h0m0-8h0m1 1h0m1 3h0m1 5h0m0-7h0m0-9h0m0 10h0m1 2h0m1-7h0m0-4h0m0 1h0m0 1h0m1 1h0m0 3h0m0 0h0m1 2h0m1-9h0m0 4h0m0 1h0m0 1h0m1-7h0m0 8h0m0-11h0m1 6h0m0 4h0m1-6h0m0-2h0m1 2h0m0 1h0m0 4h0m0-9h0m0 6h0m0-3h0m1 4h0m0-6h0m0 11h0m1-6h0m0 1h0m1-2h0m0 5h0m2-1h0m0 1h0m0 4h0m0 0h0m1-1h0m0 0h0m0 0h0m0-3h0m1 4h0m0-7h0m1 6h0m0 7h0m1-8h0m0 6h0m1-8h0m0 2h0m0 4h0m0-2h0m0-3h0m1 9h0m0-7h0m0 0h0m0 6h0m1-6h0m0-5h0m0-1h0m1 8h0m0 1h0m0-1h0m1-8h0m1 4h0m1-1h0m0-3h0m0 4h0m0-6h0m0 9h0m0-1h0m1-7h0m1 10h0m0-3h0m0 7h0m1-8h0m0 0h0m0 0h0m1 2h0m1-2h0m0 3h0m1-2h0m1 5h0m0 1h0m0-7h0m0 3h0m1 3h0m0-7h0m1 3h0m1-4h0m0 6h0m0 4h0m1-9h0m1 9h0m0-13h0m1 8h0m0-1h0m1-3h0m0-7h0m0 12h0m0-6h0m2 5h0m0-5h0m0 6h0m0-2h0m0 0h0m0-1h0m0-5h0m1 4h0m0-4h0m0 1h0m0 6h0m1-3h0m0-5h0m1 4h0m0 3h0m0-2h0m0-1h0m0 2h0m2-6h0m0 9h0m0 0h0m0-4h0m1 5h0m0-4h0m0 4h0m0 3h0m0-2h0m0-1h0m1-3h0m0 4h0m0-2h0m0-5h0m1 0h0m0 0h0m0 5h0m0-3h0m1-2h0m0 5h0m1-1h0m0-3h0m0 1h0m0-1h0m1-5h0m0 5h0m0 1h0m1-2h0m1 0h0m1-3h0m0 2h0m0 3h0m1-7h0m0 9h0m1-3h0m0 1h0m1-1h0m0 8h0m0-5h0m0 1h0m0-3h0m1 5h0m0 0h0m1-4h0m0-2h0m1-1h0m0 7h0m0-2h0m0-6h0m1 3h0m0 4h0m1-1h0m0-6h0m0 4h0m0-4h0m1 3h0m0-7h0m0 14h0m1-8h0m0 3h0m0 1h0m0-6h0m0 5h0m1 2h0m0-2h0m0-4h0m0 0h0m0-1h0m0 3h0m0 3h0m1-6h0m1 5h0m0 5h0m0-8h0m1-5h0m0 5h0m0-1h0m0-6h0m1 7h0m0-3h0m0-2h0m0 7h0m0-8h0m0 1h0m1 8h0m0-4h0m0 2h0m1-2h0m0 8h0m1-8h0m1-3h0m1 7h0m1-6h0m0 6h0m0-3h0m0 2h0m1-7h0m0 5h0m0 6h0m0-7h0m0-4h0m0 5h0m1 1h0m0 2h0m0-2h0m1-1h0m0-4h0m0-6h0m1 5h0m1 0h0m1 5h0m1-6h0m0-2h0m1 5h0m0-5h0m0 8h0m0-7h0m1 5h0m0-3h0m2-1h0m0-1h0m0-3h0m0 1h0m0-2h0m2 4h0m0-2h0m0 0h0m0 7h0m1-10h0m0 7h0m0-6h0m0-1h0m1 4h0m0-7h0m0 16h0m1-3h0m0 1h0m0-3h0m0 5h0m0 2h0m1 2h0m0-4h0m0-4h0m1 4h0m0-7h0m0 12h0m0-10h0m2 3h0m0 0h0m1 1h0m1 3h0m0-1h0m1 2h0m1-4h0m0 4h0m0 3h0m0-4h0m1-5h0m0-1h0m1 11h0m0 0h0m1-1h0m0-5h0m2-2h0m0 1h0m2 0h0m0-8h0m0-2h0m0 4h0m1-2h0m1-2h0m0 1h0m0 1h0m0 5h0m1-2h0m0-3h0m1 6h0m0-2h0m0 1h0m0-7h0m1 12h0m0-2h0m1-9h0m0 2h0m2 1h0m0-5h0m0 8h0m2-12h0m0 11h0m0-6h0m0 5h0m1 0h0m0-3h0m0 4h0m0 6h0m1-11h0m0 4h0m0-2h0m1 11h0m0-7h0m0-5h0m0 0h0m0 9h0m0 5h0m0-8h0m0-2h0m0 0h0m2 3h0m0 0h0m1 6h0m0-10h0m0 5h0m0-6h0m1 1h0m0 2h0m0 2h0m0 0h0m1-6h0m1-2h0m0 7h0m1-5h0m0-3h0m0 11h0m1-3h0m0 0h0m0 1h0m0-5h0m1 3h0m0 0h0m1-3h0m0 1h0m0-1h0m0-1h0m0 3h0m1 3h0m0-4h0m1-3h0m0 3h0m0 2h0m0-9h0m1 9h0m0-8h0m1 8h0m1-9h0m0 12h0m0 1h0m1-5h0m0-4h0m1-2h0m2 5h0m0 2h0m1-9h0m0 14h0m1-9h0m0-2h0m1 6h0m0-2h0m0 8h0m1 4h0m0-7h0m1-3h0m0 5h0m0 1h0m0 2h0m0-4h0m0 1h0m1-1h0m0-4h0m0 0h0m1 7h0m0-6h0m1 5h0m1 4h0m0-9h0m0 4h0m1 2h0m0 3h0m1-8h0m0 5h0m0-3h0m0-4h0m0-1h0m1-2h0m0 9h0m0-5h0m0 3h0m1-4h0m0 5h0m1-5h0m0-3h0m0-1h0m0 6h0m0 2h0m0-6h0m0 5h0m1-9h0m0 4h0m0-2h0m1 3h0m0 3h0m0-5h0m0 3h0m1-6h0m1-4h0m1 7h0m0 4h0m0-3h0m0 1h0m0-4h0m1-1h0m0 5h0m0-7h0m1 3h0m0 4h0m0-9h0m1 2h0m0 11h0m0-7h0m1 12h0m0-8h0m1-7h0m0 14h0m1-5h0m1-4h0m1 3h0m0-5h0m0-11h0m1 13h0m0-5h0m1 4h0m1 0h0m0-5h0m0 2h0m1-1h0m0 0h0m0 8h0m0-5h0m1 1h0m0 3h0m0-5h0m0-2h0m1 8h0m0-7h0m0-8h0m1 13h0m1 2h0m0-11h0m0 2h0m0 6h0m1-8h0m0 8h0m1-4h0m0 7h0m1-10h0m0 0h0m0 2h0m0 3h0m1 7h0m0-9h0m0 4h0m1 3h0m0-14h0m0 8h0m1-1h0m1 10h0m0-9h0m0 2h0m3 0h0m0 4h0m0-5h0m2-5h0m0 16h0m0-14h0m0 6h0m1-3h0m0 5h0m0-1h0m1-3h0m0 2h0m0 6h0m1 2h0m0-2h0m1-9h0m0 7h0m0-7h0m0 6h0m0-5h0m1-2h0m0 6h0m0-1h0m0 4h0m1 1h0m0-6h0m1-4h0m1 6h0m0 5h0m0-5h0m0 0h0m0-2h0m0 2h0m0 2h0m0-4h0m0-4h0m1 5h0m0 5h0m0-9h0m1 2h0m0-5h0m0 5h0m0 2h0m1 5h0m0-10h0m1 5h0m0-5h0m1 5h0m0-2h0m0 2h0m1 0h0m1-6h0m1 5h0m0 1h0m0 5h0m0-10h0m1 8h0m1-6h0m1 2h0m1 2h0m0-4h0m1 1h0m1 7h0m0-8h0m0 5h0m0 0h0m1 3h0m0-11h0m1 6h0m0 7h0m1-9h0m0 2h0m1 5h0m1-6h0m0 1h0m1 2h0m1-4h0m0 2h0m0-5h0m1 9h0m0-5h0m0-1h0m1 0h0m0-2h0m0 8h0m1-11h0m0-3h0m0 3h0m2 9h0m0-3h0m0-1h0m0-4h0m1-1h0m0 6h0m1-4h0m1 3h0m0-2h0m0-3h0m1 4h0m0-2h0m1-2h0m1 5h0m0-2h0m0 1h0m1 4h0m0-4h0m0-2h0m1 2h0m0-2h0m0 10h0m1-10h0m0 4h0m1 0h0m0-1h0m1 0h0m0 5h0m1 5h0m0-6h0m1 3h0m1 5h0m0-3h0m2-7h0m0 9h0m0-6h0m1-4h0m0 8h0m0 3h0m1-1h0m0-1h0m0-3h0m1 5h0m0-1h0m0-6h0m0 3h0m1-4h0m0 3h0m0-2h0m1 0h0m0 4h0m0 3h0m0-7h0m0 2h0m0 1h0m0-9h0m1 12h0m0-10h0m0 0h0m1-3h0m0 4h0m0-2h0m0 3h0m0-4h0m1 3h0m0 2h0m0-8h0m0 8h0m1 2h0m0-3h0m0-6h0m0 10h0m0 1h0m1-2h0m0-2h0m0 0h0m0-6h0m1 9h0m0-11h0m0 1h0m0 8h0m1 6h0m0-13h0m1 5h0m0-3h0m1 8h0m0-15h0m0 5h0m0 5h0m1-6h0m0 2h0m0 0h0m1-10h0m0 14h0m0 0h0m1 1h0m0-14h0m0 5h0m1 1h0m0 1h0m0 4h0m0-10h0m0 7h0m0-6h0m0 6h0m0-12h0m1 10h0m1-1h0m0-2h0m1 6h0m0-7h0m0 0h0m0 5h0m1-8h0m0 9h0m0-5h0m2-1h0m1 2h0m0 0h0m1 1h0m0 0h0m0-4h0m0 6h0m0-4h0m0 7h0m2-4h0m0 0h0m1 7h0m0-2h0m0-1h0m1 5h0m0-2h0m0-4h0m0 6h0m1-7h0m0 6h0m1-7h0m0 2h0m0 1h0m0 8h0m2-4h0m0 0h0m0 0h0m1-4h0m0-1h0m1-1h0m0 3h0m0-6h0m0 6h0m0 2h0m1-7h0m0 0h0m0 3h0m1 0h0m0 2h0m0-2h0m1 1h0m1 0h0m0-6h0m0 7h0m0-3h0m1-3h0m0 2h0m1 2h0m0 4h0m1-7h0m0 7h0m1-5h0m0 1h0m0 4h0m1 4h0m0 0h0m0-6h0m0-1h0m0 7h0m1-1h0m0-4h0m0-4h0m1-1h0m0 8h0m1 2h0m1-9h0m0 8h0m0-9h0m1 6h0m0-2h0m0-2h0m0 4h0m1-8h0m0 1h0m0 9h0m0 4h0m1-5h0m0-6h0m0 0h0m0 3h0m2 0h0m1-3h0m0 9h0m1 1h0m0-7h0m0 1h0m1 1h0m1 3h0m0-10h0m0 4h0m0 6h0m1 2h0m0-4h0m0 1h0m1-9h0m1 5h0m0 8h0m0-6h0m0 7h0m1-5h0m0-2h0m0-9h0m0 5h0m0 4h0m0 1h0m1-2h0m1 7h0m0-4h0m0 1h0m0 4h0m1-8h0m0 10h0m0-3h0m0-7h0m0-4h0m1 1h0m0 0h0m0 11h0m1-6h0m0-3h0m0 3h0m1-1h0m1-8h0m0 0h0m1 1h0m1 6h0m1 3h0m1-1h0m0-9h0m1 9h0m0-4h0m0-2h0m1 0h0m0 7h0m0 4h0m0-2h0m1-4h0m0-2h0m0 0h0m0-1h0m1 3h0m0 0h0m0-6h0m0 8h0m1-12h0m0 10h0m1 4h0m0-6h0m0 1h0m0 2h0m1-1h0m0 3h0m1-10h0m0 3h0m0 0h0m1 12h0m0-8h0m1 5h0m0 1h0m0-4h0m0-1h0m0 2h0m1-2h0m0 3h0m0-7h0m2 9h0m0-2h0m0 2h0m1-1h0m0 3h0m0-1h0m1-4h0m0 0h0m0 5h0m0-4h0m2 1h0m0-2h0m0-5h0m0 11h0m0-8h0m1 3h0m0 1h0m1-6h0m0 3h0m0 0h0m0-4h0m0 3h0m1 4h0m0-11h0m0 5h0m1-3h0m0 5h0m1-3h0m0 9h0m0-16h0m1 10h0m0 6h0m0-6h0m1-1h0m0-7h0m0 3h0m1 9h0m1-6h0m0-1h0m1 9h0m2-13h0m0 5h0m0-2h0m0 6h0m1 1h0m0-6h0m2 0h0m0 4h0m1-1h0m0-5h0m0-2h0m0 6h0m1-5h0m0 7h0m0-6h0m0 5h0m0 0h0m1 4h0m1-10h0m0 5h0m1 3h0m0-3h0m0 1h0m1-7h0m0 8h0m0 1h0m0-4h0m0 5h0m2-4h0m0 3h0m1-2h0m0-3h0m0 9h0m1-11h0m1 13h0m1-9h0m0 0h0m0 2h0m1-7h0m0-5h0m1 11h0m0-5h0m0 5h0m2-3h0m0 5h0m1-8h0m0 2h0m1 2h0m0 2h0m0 1h0m1-1h0m0 3h0m0-10h0m3 3h0m1-3h0m1 8h0m0-5h0m0 2h0m0 1h0m0-3h0m1 3h0m0 3h0m0-6h0m1 9h0m0-11h0m0 5h0m0 0h0m1 4h0m0-1h0m0-8h0m0 9h0m1-10h0m0 6h0m0-7h0m1 0h0m0-2h0m0 11h0m0-5h0m0 9h0m1-10h0m0 4h0m1-5h0m0 14h0m1-10h0m0-8h0m0 16h0m1-15h0m0 10h0m0 0h0m1-4h0m0-1h0m0 11h0m1-10h0m0-6h0m1 10h0m0 2h0m0-5h0m1 8h0m1-8h0m0 0h0m1 4h0m0-10h0m1 9h0m0-4h0m0 2h0m1-5h0m2-1h0m0 12h0m0-11h0m0 5h0m0-2h0m0-2h0m2-2h0m0 7h0m1-6h0m0 0h0m1 4h0m0 1h0m1 0h0m0 6h0m1-13h0m1-1h0m0 8h0m0 2h0m1-3h0m1-6h0m0 6h0m1 3h0m1-1h0m0 0h0m1 3h0m0-7h0m0 1h0m1-2h0m0 11h0m0-3h0m1-1h0m1-4h0m0 4h0m0-7h0m1 2h0m1 2h0m0-5h0m1 10h0m1-11h0m0 7h0m0-2h0m0-8h0m0 14h0m1 0h0m0-1h0m0-11h0m0 8h0m0-7h0m0 6h0m0 4h0m0-6h0m1 2h0m0 1h0m1 1h0m0-9h0m1 2h0m0 6h0m1-2h0m0-2h0m0 11h0m2-8h0m0 3h0m0-6h0m1 1h0m0 3h0m2 1h0m0 1h0m0 2h0m0-1h0m0-4h0m0-1h0m0 8h0m1-2h0m1 2h0m0-1h0m0 3h0m1-5h0m1 3h0m0-1h0m0 0h0m1 3h0m1-2h0m0-7h0m0-1h0m1 10h0m1-13h0m0 8h0m1-5h0m0 0h0m0 0h0m1 7h0m0-7h0m1 4h0m0 1h0m1-2h0m1-2h0m0 4h0m0 1h0m1-9h0m0 2h0m1 6h0m0-3h0m1 0h0m0-1h0m0-2h0m0 2h0m1-1h0m0-3h0m0-3h0m0-1h0m1 10h0m1-8h0m0-2h0m0 2h0m0 9h0m1-8h0m0 2h0m0 0h0m1 7h0m0-12h0m0 8h0m0-7h0m1-3h0m0 4h0m0 9h0m1-11h0m0 3h0m0 6h0m1 0h0m0-6h0m1 3h0m0 7h0m0-6h0m1-3h0m0-5h0m0 3h0m1 4h0m0-1h0m1-1h0m0-5h0m0 11h0m1-6h0m0 3h0m0-2h0m0-4h0m1 2h0m0 0h0m0-4h0m1 11h0m0-5h0m0 0h0m0-4h0m0-1h0m1 6h0m1-1h0m0 0h0m0 3h0m0 0h0m1-5h0m0 5h0m0-1h0m0-8h0m0 8h0m0 0h0m1 0h0m0-3h0m0 7h0m0-3h0m1-4h0m0 10h0m0-9h0m1 1h0m0 0h0m0-6h0m0 8h0m0-1h0m0 9h0m2-6h0m0-1h0m0-2h0m1 1h0m0 0h0m1 5h0m0-9h0m1 3h0m0 0h0m1 4h0m1 2h0m0-1h0m0-4h0m0 3h0m1-4h0m0-1h0m0 4h0m0-3h0m0-1h0m1 2h0m0 8h0m0 1h0m1-3h0m1-3h0m0-2h0m0 4h0m1-2h0m1 4h0m0 2h0m0-8h0m0-5h0m0 8h0m1 0h0m0 3h0m0-3h0m0-2h0m1 3h0m1-4h0m0-8h0m0 10h0m1-8h0m0 6h0m0-7h0m0 2h0m1 5h0m2 4h0m2-6h0m0 4h0m0 1h0m0-1h0m1 5h0m1-4h0m0 1h0m0-1h0m1-1h0m0 1h0m0-4h0m0 2h0m0-5h0m1 5h0m0-3h0m0 0h0m1 3h0m0-5h0m0 4h0m1 5h0m0-5h0m0 0h0m0-2h0m0-8h0m1 3h0m0 4h0m0-1h0m1 6h0m0-2h0m0-6h0m0 6h0m0-6h0m1 9h0m0-10h0m0 7h0m0-2h0m1 3h0m0-8h0m0-1h0m0-2h0m1 9h0m1-9h0m0 10h0m0 3h0m0-5h0m0-2h0m1-2h0m0 2h0m0-2h0m1 7h0m0 4h0m0-7h0m1 3h0m0 5h0m1 2h0m1-8h0m0-4h0m0 1h0m0 9h0m1-9h0m1 4h0m0-1h0m0 2h0m0-1h0m2-5h0m0 6h0m1-6h0m0 6h0m0 1h0m0-1h0m2-2h0m0-1h0m0-4h0m0 3h0m1 1h0m0 3h0m0-2h0m1-3h0m0 3h0m0-6h0m1 4h0m0 6h0m0-4h0m1-6h0m0 4h0m1 0h0m0 4h0m1-4h0m0 3h0m0-4h0m1 2h0m0-1h0m0 5h0m0-17h0m0 11h0m1-2h0m0 0h0m0-5h0m0 2h0m0 9h0m0-9h0m1 1h0m0 2h0m0 6h0m1-3h0m1 0h0m0-11h0m0 5h0m1 5h0m0 2h0m1 1h0m0-3h0m0 0h0m1-6h0m0 9h0m0-7h0m0-4h0m0 4h0m0 3h0m1 0h0m0 4h0m0-3h0m0-4h0m1 1h0m1-2h0m1 7h0m0-1h0m1-8h0m2 10h0m0 0h0m0-2h0m1-2h0m0 5h0m0-8h0m1 0h0m0 8h0m1-1h0m0-6h0m0 6h0m1-2h0m1-8h0m0 6h0m1 0h0m0-3h0m1-3h0m0 4h0m0 0h0m1-3h0m0 8h0m2-6h0m1 3h0m1-1h0m0 5h0m1-1h0m0-4h0m0-3h0m0 2h0m0 2h0m0 3h0m1-5h0m0 8h0m1-4h0m0-3h0m1 10h0m0-4h0m1 0h0m0-3h0m0 1h0m0 7h0m0-4h0m1 0h0m0 3h0m1-9h0m0 5h0m0-2h0m1-2h0m0 2h0m1 4h0m2 1h0m1-3h0m0-7h0m0 0h0m1 2h0m1 2h0m0 6h0m0-5h0m0 2h0m0-1h0m1-7h0m1 11h0m0-4h0m0-2h0m1-8h0m0 1h0m0 5h0m1 6h0m0 1h0m1-10h0m1 0h0m0 5h0m0 6h0m0-7h0m2-3h0m1 4h0m0 3h0m1-3h0m0 3h0m0-4h0m0-14h0m1 19h0m1-4h0m0 5h0m0-3h0m1-6h0m0-8h0m0 5h0m0 2h0m1 5h0m0-7h0m0 4h0m0-1h0m1-3h0m1 7h0m0-4h0m1-2h0m1 1h0m0 2h0m1 4h0m0-2h0m1 0h0m0-3h0m0 13h0m0-11h0m0-2h0m1 2h0m0 3h0m0-2h0m1-3h0m0-3h0m1 3h0m1 8h0m0-7h0m0-2h0m1 11h0m0-9h0m1 6h0m0 7h0m0-11h0m1-1h0m0 1h0m0-1h0m0 5h0m0 0h0m1-4h0m0 0h0m0-3h0m0 6h0m1-5h0m0 5h0m1 3h0m0-6h0m0-1h0m0 2h0m0 2h0m1-1h0m0 3h0m1 0h0m0 0h0m1-6h0m0 2h0m0 9h0m1-8h0m1-2h0m0 3h0m1 2h0m0 0h0m0 2h0m1-12h0m0-3h0m0 6h0m0 4h0m1 1h0m1-2h0m0-6h0m1-4h0m0 6h0m0-4h0m0 3h0m1 6h0m0-12h0m0 2h0m0 5h0m0-3h0m0 1h0m0 3h0m1-1h0m0-3h0m1 5h0m1 1h0m0-3h0m0-1h0m1 5h0m0-4h0m1 5h0m0 4h0m0-15h0m0 12h0m0-3h0m1 5h0m0 0h0m0-11h0m1 9h0m0-1h0m1 0h0m0-4h0m0 6h0m0-9h0m1 4h0m0-1h0m1 3h0m0-3h0m1-3h0m0 2h0m0 0h0m0-4h0m1-4h0m0 7h0m0-2h0m1 1h0m1 3h0m0-3h0m0-4h0m0 9h0m0-13h0m0 7h0m0-4h0m1 3h0m0 4h0m0-4h0m1-3h0m0 7h0m0-2h0m0-6h0m1 13h0m0-4h0m1-4h0m0 6h0m0-5h0m0 8h0m2 0h0m1-6h0m0 8h0m0 4h0m0-7h0m0 9h0m0-6h0m1-1h0m0 6h0m0-2h0m1-2h0m1 4h0m0 1h0m0-4h0m1 2h0m0 2h0m1-6h0m0 4h0m0-7h0m0-4h0m0 2h0m1 2h0m0 4h0m0 1h0m0-8h0m0 2h0m1-3h0m1-2h0m1 6h0m0 1h0m1-4h0m1 2h0m1 5h0m1-7h0m0-1h0m0 8h0m1 1h0m0 2h0m0-5h0m1-2h0m0-4h0m1 5h0m0 1h0m1 0h0m0-2h0m1-2h0m0-1h0m0 2h0m1 5h0m1 0h0m0-5h0m0 4h0m1-3h0m0 3h0m1-9h0m0 0h0m0 9h0m0-2h0m2-2h0m0 3h0m1-4h0m0 1h0m0-1h0m0 9h0m1-5h0m0-5h0m0 4h0m0-3h0m0 0h0m0-7h0m1 3h0m0 2h0m0 3h0m0 1h0m0-4h0m1-7h0m1 5h0m0 4h0m0 2h0m0-6h0m1-5h0m0 3h0m0 1h0m0 1h0m0 2h0m1-2h0m1 6h0m0-5h0m0-10h0m0 15h0m1-7h0m0 6h0m0-3h0m0-1h0m1 8h0m0-8h0m0-3h0m0 3h0m1-2h0m0-3h0m0 12h0m1-8h0m0 10h0m0-12h0m0 6h0m0-2h0m1 3h0m0-4h0m0 2h0m0 3h0m0-7h0m2-1h0m1 7h0m1-7h0m0 9h0m0-9h0m0 2h0m0 1h0m2 5h0m0-9h0m1 5h0m0 8h0m0-10h0m0 5h0m0-6h0m0 4h0m0 0h0m0-3h0m1 11h0m1-3h0m1-2h0m0 1h0m1-5h0m0-3h0m0 3h0m1 1h0m1 0h0m0 7h0m1-3h0m0 0h0m0-5h0m1 4h0m0 3h0m0-9h0m1 8h0m1-7h0m0-3h0m0 8h0m0 4h0m1-5h0m0-1h0m1 5h0m0-2h0m0 1h0m1-2h0m1-7h0m1 3h0m0 3h0m1 9h0m0-6h0m1-10h0m2 3h0m1 2h0m1-11h0m0 12h0m0 0h0m0 2h0m1 2h0m1-5h0m1 0h0m0 1h0m1 5h0m0 3h0m1-4h0m1-6h0m1 0h0m0 2h0m0-3h0m1 4h0m0 0h0m0 3h0m0 0h0m0-6h0m0 0h0m0 0h0m0 7h0m1-5h0m0-1h0m0 1h0m1-2h0m2 2h0m1 3h0m0-1h0m0-6h0m0 5h0m2-6h0m1 8h0m0-3h0m0 0h0m0 3h0m1-1h0m0 1h0m1-4h0m0 7h0m1-5h0m0 4h0m0-3h0m0-3h0m1 1h0m0 9h0m1-6h0m1-1h0m0 4h0m0-6h0m1 8h0m0-5h0m1-6h0m0 5h0m1 5h0m1 0h0m1-11h0m0 10h0m0-2h0m0-3h0m1-5h0m1-2h0m0 6h0m1-11h0m0 7h0m0-1h0m1-4h0m0 1h0m0 3h0m1 3h0m1-7h0m0 8h0m1-4h0m1 0h0m0-1h0m0 2h0m1 2h0m0 7h0m1-6h0m0 7h0m1-8h0m0 9h0m0-8h0m0-1h0m1 8h0m0-8h0m0 5h0m1-1h0m0 7h0m0-10h0m0 4h0m0 1h0m1-3h0m0 3h0m0-4h0m0 11h0m0-4h0m2 3h0m0 1h0m0-16h0m0 9h0m0-3h0m1 0h0m0-1h0m1 3h0m0-2h0m0-4h0m0 5h0m1-4h0m0 13h0m0-7h0m1 3h0m1-9h0m0 4h0m0 0h0m1 2h0m0-7h0m0 9h0m0-8h0m0 3h0m1-3h0m0 8h0m1-5h0m1 0h0m0 5h0m1-5h0m0 8h0m0-3h0m1-7h0m0 6h0m0 0h0m1 2h0m0 3h0m1-5h0m0 6h0m0-12h0m0 9h0m1-4h0m0 5h0m0-3h0m0 5h0m1-11h0m1 7h0m0-1h0m0 1h0m0-1h0m1-4h0m0 7h0m0-1h0m0-2h0m2-4h0m0-4h0m0 8h0m1-2h0m0-11h0m1 13h0m0-9h0m0-1h0m0 1h0m0 8h0m1-17h0m1 16h0m0-11h0m0-1h0m0 13h0m1 1h0m0-9h0m0-5h0m1 5h0m0-4h0m0 2h0m0 4h0m1-2h0m0-6h0m0 6h0m0 2h0m1-5h0m0 3h0m0-1h0m1 0h0m0 0h0m0-2h0m1 10h0m0-6h0m0 12h0m0-9h0m1-4h0m0 13h0m1-7h0m0-3h0m1 4h0m0 2h0m0 0h0m1-2h0m0 5h0m0-9h0m0 4h0m1-2h0m0-2h0m0-3h0m0 3h0m1 2h0m0 0h0m1 1h0m0-4h0m1 7h0m0-2h0m0-2h0m1 3h0m1-2h0m0-1h0m0-5h0m0 6h0m0 4h0m0-5h0m1 9h0m0-1h0m0-7h0m1 0h0m0 3h0m0 0h0m0-6h0m1 4h0m0-3h0m1-7h0m1 3h0m1 7h0m0-3h0m1-6h0m0 6h0m1-1h0m1 3h0m0-3h0m1 3h0m0 7h0m0-12h0m1-2h0m1 5h0m0 0h0m0-2h0m0 0h0m1 6h0m1-2h0m0 1h0m0 3h0m0-4h0m0 5h0m1-11h0m0 5h0m1-1h0m0 0h0m0-2h0m0 3h0m0 0h0m1-2h0m0 1h0m0 8h0m0-6h0m0-4h0m0 6h0m1-3h0m0 6h0m1-1h0m1-5h0m0-4h0m0 5h0m0-2h0m0 0h0m1 4h0m1-4h0m0-11h0m0 12h0m0-3h0m0-1h0m1 0h0m0 4h0m0-7h0m1 8h0m1-3h0m0 6h0m0-2h0m0-3h0m1 0h0m0 3h0m0 5h0m0 2h0m0-11h0m1 4h0m0-2h0m1 6h0m0-2h0m0-6h0m0 0h0m1 10h0m0-6h0m1 5h0m1-5h0m0 1h0m1-5h0m0 6h0m0-4h0m0-4h0m0-1h0m1 9h0m0-6h0m0-4h0m0 2h0m0 3h0m0-9h0m1 8h0m0-3h0m0-4h0m0 4h0m0-1h0m0 2h0m1 1h0m0 1h0m0 0h0m1 4h0m0-9h0m1-3h0m1 16h0m0-8h0m0 3h0m0 1h0m0 0h0m1-2h0m0-1h0m1 5h0m0-6h0m2 11h0m0-4h0m0-3h0m1-5h0m1 1h0m0 11h0m1 0h0m1-13h0m0 8h0m0-5h0m0 10h0m1-2h0m0-11h0m1 7h0m0-1h0m1-6h0m0 0h0m0-2h0m1 6h0m1 0h0m0 4h0m1-3h0m2 4h0m1-9h0m0-3h0m0 15h0m1-3h0m0-1h0m0 5h0m1-1h0m0-1h0m0-3h0m0 2h0m1-5h0m0 0h0m0 3h0m1 5h0m0-17h0m0 10h0m2 4h0m0-12h0m0 11h0m0 3h0m1-3h0m0-3h0m0-5h0m0-1h0m1 9h0m0-3h0m0 0h0m0 3h0m0-15h0m1 12h0m0-3h0m0-4h0m0-1h0m0 14h0m1-5h0m0-6h0m0-9h0m1 13h0m1-8h0m1 7h0m1-5h0m2-4h0m1 5h0m0-3h0m0 8h0m0 4h0m0-5h0m0-6h0m0 4h0m1 1h0m0 0h0m1-3h0m0 6h0m1-5h0m1-5h0m0 5h0m0 1h0m1 5h0m0 2h0m1-2h0m0-4h0m1 8h0m1-12h0m1 10h0m0-2h0m0 0h0m1-1h0m0 5h0m0-10h0m0 6h0m1-3h0m0-4h0m1 5h0m0-1h0m1 1h0m0-7h0m0 11h0m1-7h0m0 2h0m0-2h0m0 0h0m0 1h0m0 1h0m1-3h0m0 9h0m0-7h0m0 4h0m0 1h0m0-6h0m1 0h0m1-6h0m0-2h0m0 1h0m1 0h0m0 5h0m0-1h0m0 0h0m0 3h0m1-3h0m0 6h0m0-2h0m1-1h0m0-4h0m0 5h0m0 1h0m0 2h0m1-6h0m0 3h0m0-6h0m0 5h0m0 2h0m0 0h0m1 2h0m0-1h0m0 1h0m0-6h0m1 4h0m0 0h0m1 6h0m0-2h0m0-4h0m0 0h0m0 1h0m1 2h0m0-4h0m0 8h0m0-4h0m0-9h0m1 14h0m0-6h0m0-2h0m0-7h0m1 10h0m0-9h0m0 4h0m1-6h0m0 8h0m0-5h0m1-4h0m0 4h0m0-2h0m0 5h0m0-4h0m1 10h0m0-15h0m1-5h0m0 9h0m1 0h0m0 7h0m0-3h0m0-1h0m1 1h0m0 3h0m0 1h0m0-14h0m1 11h0m0-8h0m0-2h0m0 13h0m0-2h0m0-1h0m1 3h0m0 4h0m0-5h0m0 9h0m0-3h0m0-2h0m1-2h0m0 5h0m0-4h0m0-3h0m1-1h0m0-2h0m0 3h0m0 6h0m0 0h0m0-6h0m0 6h0m1-5h0m2 5h0m0-4h0m0 2h0m1 2h0m0-4h0m0 7h0m1-5h0m0 0h0m1 5h0m0-14h0m0 14h0m0-1h0m1-8h0m2 9h0m0-12h0m1 7h0m0-2h0m0-2h0m0 2h0m1 0h0m0-2h0m1 5h0m0-1h0m0 2h0m0-5h0m1 8h0m0-7h0m0-2h0m1 4h0m1 0h0m0 1h0m1-1h0m0 0h0m1 0h0m0 0h0m0-5h0m1 2h0m1-1h0m1 6h0m1-4h0m1 2h0m0 5h0m1-19h0m0 7h0m1 5h0m0-4h0m1-1h0m0 5h0m1 7h0m0-8h0m0 4h0m1-1h0m1 5h0m0 0h0m0-6h0m0-2h0m1 2h0m0-1h0m1-4h0m0 7h0m0-9h0m0 3h0m1 6h0m0-5h0m0 2h0m0-4h0m1 3h0m0 4h0m0-10h0m0 5h0m1 2h0m1 0h0m0 2h0m0-11h0m1 6h0m0 0h0m0-4h0m1 9h0m0 5h0m0-12h0m1 4h0m0 1h0m1 2h0m0-5h0m0-5h0m0 4h0m0 8h0m1-4h0m1 1h0m0-4h0m0 10h0m0-3h0m1-2h0m0-3h0m1 6h0m0-2h0m0 0h0m1-5h0m0 1h0m1-8h0m0 5h0m1 3h0m0 4h0m0-12h0m1 15h0m0-12h0m0 4h0m0 1h0m1-1h0m0 2h0m0 2h0m0-14h0m1 8h0m0-5h0m0 4h0m0 1h0m1 1h0m1-6h0m0 5h0m2-1h0m0 3h0m1-3h0m1 6h0m0-12h0m1 9h0m0 1h0m0 1h0m0 3h0m1-7h0m0 0h0m0 0h0m2-2h0m0 4h0m0-2h0m0 4h0m0-8h0m1 3h0m1-2h0m0 2h0m0 6h0m0-5h0m1 3h0m0-2h0m0 2h0m0 3h0m0-5h0m1-2h0m0 6h0m0 6h0m1-13h0m0 0h0m0 1h0m1-2h0m0 8h0m1 0h0m0-10h0m0 3h0m0-1h0m1 11h0m0-9h0m0 10h0m1 1h0m0-6h0m0 5h0m1-8h0m0 0h0m0 4h0m1 4h0m0-2h0m0-8h0m0 8h0m0-8h0m1 7h0m1-6h0m0-1h0m0-3h0m1 2h0m0 12h0m1-5h0m0 2h0m0-7h0m1 4h0m0-2h0m0-1h0m1 1h0m2 6h0m0-4h0m0-3h0m0-15h0m1 15h0m0 0h0m0-4h0m1 1h0m0 0h0m0 7h0m1 1h0m0-4h0m0-2h0m1 0h0m1 1h0m0-3h0m1 1h0m0 6h0m0-1h0m0 4h0m1-6h0m1-4h0m0 6h0m0-8h0m1 9h0m0 3h0m0-6h0m1 4h0m0 0h0m1-5h0m0-7h0m0 8h0m1 3h0m0-3h0m1-1h0m1 4h0m1-4h0m0-2h0m0 3h0m0-1h0m1 5h0m1-5h0m1-3h0m0 4h0m1 4h0m0-6h0m0 3h0m1 0h0m0-3h0m0 2h0m0-9h0m1 11h0m0-4h0m1-1h0m0-2h0m0-5h0m1 4h0m0 0h0m0 0h0m1 9h0m0-9h0m0 4h0m0 0h0m2 1h0m0-5h0m0-5h0m0 10h0m1 2h0m0-4h0m0 6h0m2-7h0m0-2h0m1 4h0m0-2h0m0 5h0m1 2h0m1-14h0m0 1h0m0 7h0m0 1h0m1-8h0m0 4h0m0-3h0m2 1h0m1-1h0m0 13h0m1 0h0m0-2h0m1-11h0m0 10h0m2-3h0m2 0h0m0-3h0m0 3h0m0-4h0m1-2h0m0 9h0m0-13h0m0 3h0m1 6h0m0-1h0m1 2h0m1-4h0m0 10h0m0-6h0m0 1h0m1 3h0m0-10h0m0 6h0m2 1h0m0 4h0m1-10h0m0 4h0m0 1h0m0-1h0m0 4h0m1-2h0m0 1h0m0-5h0m0 7h0m1-4h0m1-7h0m0 5h0m0-4h0m0 10h0m1 0h0m0 1h0m1-9h0m0 5h0m0 4h0m1-4h0m0 3h0m0 2h0m1-2h0m0-3h0m0 3h0m0-4h0m1-1h0m1 4h0m1-4h0m0 0h0m1-2h0m0 1h0m1 3h0m0 0h0m1 4h0m0-7h0m0 2h0m1 10h0m0-12h0m2-3h0m0 9h0m1-7h0m0 8h0m1-5h0m1-6h0m0 1h0m2 6h0m0-6h0m1 7h0m1-1h0m0-7h0m1 8h0m0 6h0m1-5h0m1-2h0m1-5h0m1 11h0m0-2h0m1-4h0m0-3h0m1 2h0m0 0h0m1 0h0m0 2h0m1-5h0m0-1h0m0-3h0m0 16h0m1-7h0m0-4h0m0-1h0m0-2h0m1 2h0m0 0h0m1-1h0m1-2h0m1 9h0m0-10h0m0 4h0m1 5h0m0 1h0m1 8h0m0-8h0m0 3h0m0-4h0m0 5h0m0 2h0m1-7h0m0 4h0m0 2h0m1-11h0m0 8h0m1-1h0m0-5h0m0 0h0m0 7h0m0-3h0m2-5h0m0 2h0m2 4h0m0-1h0m0-2h0m0-1h0m2-6h0m0 1h0m0 4h0m1 1h0m0-1h0m1 5h0m0-8h0m0 3h0m0-5h0m1 8h0m0-1h0m0-2h0m1 0h0m0-3h0m0 3h0m0 3h0m0 2h0m0-12h0m1 7h0m0-5h0m0 8h0m0-4h0m1-7h0m0 0h0m1 11h0m0 4h0m1-9h0m0 5h0m1-4h0m1 6h0m0-8h0m1 10h0m0-6h0m0-2h0m0 6h0m1-8h0m0 3h0m0 3h0m0-1h0m2 4h0m1-7h0m1-1h0m0-1h0m0 8h0m0-1h0m1-7h0m0 5h0m1 2h0m0 7h0m1-5h0m0-10h0m0 2h0m1 0h0m0 5h0m0 1h0m0 2h0m0-4h0m0 3h0m1-7h0m0 8h0m0 0h0m0 5h0m1-13h0m0 6h0m0 5h0m0-7h0m1-1h0m0 4h0m0-3h0m0 10h0m0-4h0m0-3h0m0-8h0m1 3h0m1 3h0m0-3h0m0 6h0m0 1h0m0-2h0m1-3h0m0 3h0m1 1h0m1 3h0m0-1h0m2-7h0m0-2h0m0 1h0m0 5h0m1 3h0m0-1h0m1-5h0m1 6h0m0-5h0m0-2h0m1 5h0m0-8h0m0 3h0m0 4h0m1-10h0m1 7h0m0-7h0m1 6h0m0-2h0m0 0h0m0 0h0m2 9h0m1-9h0m1-7h0m0 7h0m0 2h0m1-2h0m0 2h0m0-3h0m1 0h0m1 3h0m0 0h0m0-1h0m1 5h0m0-8h0m0 4h0m1 2h0m0 0h0m1-1h0m1 5h0m0-8h0m0-3h0m2 4h0m1 9h0m0-10h0m1-1h0m0 3h0m0 4h0m1 4h0m0-6h0m1 4h0m0-2h0m0 0h0m0-6h0m1-1h0m0 6h0m0-4h0m1 2h0m0 0h0m1 4h0m0-4h0m2 6h0m0-5h0m1-5h0m0 1h0m1 6h0m0-2h0m0 9h0m0-11h0m1 2h0m0 3h0m0-4h0m1 0h0m0 5h0m0-6h0m0 6h0m1 0h0m0-4h0m0-6h0m1 4h0m0 3h0m0-5h0m0 4h0m1 1h0m2-1h0m0-2h0m0 1h0m0-6h0m1 1h0m0 8h0m0 4h0m0-8h0m1 4h0m0-3h0m1 1h0m0 1h0m1 4h0m1-11h0m0 7h0m0 4h0m1-10h0m0 11h0m0 3h0m0-1h0m1-8h0m0 0h0m1 0h0m0-6h0m1 8h0m0-2h0m0 2h0m0-1h0m0 2h0m0 0h0m1-7h0m1 10h0m1-1h0m0-1h0m0-3h0m1-4h0m0 2h0m0-2h0m0 4h0m0-3h0m1 3h0m1 1h0m1 0h0m1 6h0m0-3h0m0-5h0m1 5h0m0-3h0m0 1h0m1-4h0m0 6h0m0 2h0m0-7h0m0-1h0m0 4h0m0-4h0m1 10h0m0-9h0m0-4h0m0 4h0m1 7h0m0 1h0m0-8h0m1 1h0m0 4h0m1-6h0m0 2h0m1 2h0m3 6h0m1-4h0m0 2h0m0-1h0m0-4h0m1 7h0m0-8h0m0-2h0m0 4h0m0-1h0m0-2h0m0-4h0m1 7h0m0-9h0m0 9h0m1 3h0m0-7h0m0 8h0m0-9h0m0-4h0m1 8h0m0-10h0m1 7h0m0-1h0m1-1h0m0-3h0m0 6h0m1 3h0m0-4h0m0-6h0m0 4h0m1-1h0m1 3h0m0-1h0m1 7h0m0-8h0m1 4h0m0-7h0m1-1h0m0 5h0m1 0h0m0 2h0m0 3h0m1-2h0m1-6h0m0 14h0m0-14h0m1 12h0m0-5h0m1 0h0m0-1h0m1-8h0m1 6h0m0 3h0m0 5h0m1-5h0m0-9h0m1 14h0m0-8h0m0 0h0m0 1h0m1-5h0m0 14h0m0-9h0m0-5h0m1 6h0m0 2h0m1-3h0m0 1h0m1-7h0m0-8h0m0 6h0m1-1h0m0 6h0m0 0h0m0 1h0m0 6h0m0-5h0m1 1h0m0 4h0m1-7h0m0 2h0m0-8h0m1 9h0m0-8h0m0 8h0m0 1h0m1-10h0m0 7h0m0-3h0m0 12h0m0-8h0m1 0h0m0 1h0m1 2h0m0 1h0m0-1h0m1 4h0m0-8h0m0 2h0m0 4h0m1-6h0m0 0h0m1-1h0m0 0h0m0 7h0m1-6h0m0-1h0m1-2h0m0 12h0m0 0h0m0-2h0m1 0h0m0-2h0m0-5h0m0 8h0m1-2h0m1 5h0m0-9h0m1-4h0m0 4h0m0-4h0m0 0h0m1 11h0m0 0h0m1-2h0m0-5h0m1 0h0m0-3h0m0-6h0m1 6h0m0 2h0m0-1h0m0-4h0m0 0h0m1 0h0m1 6h0m0 2h0m0-8h0m0 10h0m1-12h0m0-1h0m0 8h0m2-2h0m0-4h0m0 15h0m1-10h0m0 9h0m0-9h0m0 5h0m1 3h0m0-4h0m0-11h0m0 11h0m2-2h0m0 3h0m0-5h0m0 8h0m1-5h0m0 5h0m0-10h0m1 12h0m0-7h0m1 8h0m1-12h0m0 7h0m0 1h0m0 1h0m0 0h0m1-5h0m1-6h0m0 8h0m1-3h0m1 5h0m0 1h0m2-2h0m0 1h0m0 2h0m1-1h0m1-4h0m2-2h0m0 9h0m2-2h0m1-3h0m2-3h0m1-3h0m0 8h0m1-1h0m0-3h0m1 5h0m0-2h0m0 4h0m0-5h0m2 3h0m0-7h0m0 5h0m1-5h0m0-1h0m0 9h0m0 1h0m0-7h0m0-1h0m1 5h0m0-2h0m0-6h0m0 10h0m1-1h0m0-6h0m0 2h0m0-1h0m0 6h0m1 1h0m0-9h0m2 5h0m0-4h0m0 4h0m0-6h0m0 5h0m0-10h0m1 12h0m0-7h0m0 0h0m0 3h0m0-5h0m0 2h0m1-2h0m0 6h0m0 1h0m0-6h0m1 11h0m0 0h0m0-4h0m0-6h0m0-4h0m0 3h0m0-4h0m2 9h0m0 1h0m0-7h0m1-3h0m0 6h0m0-3h0m1 1h0m1-3h0m0 1h0m1 1h0m0 3h0m0 1h0m0-2h0m0-5h0m1-2h0m0 12h0m0-7h0m0-7h0m0 13h0m1-1h0m0-3h0m0-4h0m0 1h0m1 3h0m0 6h0m1-8h0m0-6h0m1 0h0m0 10h0m0 0h0m0-3h0m2-1h0m0 4h0m0-4h0m1 6h0m0-9h0m1 3h0m0-1h0m0-1h0m1 5h0m1 2h0m0-2h0m1 7h0m1-16h0m0 9h0m0 5h0m0-6h0m0 2h0m1-6h0m0 2h0m0 0h0m1 11h0m0-9h0m0-2h0m0 6h0m1 1h0m0-3h0m0 0h0m1 1h0m0 3h0m0-1h0m0-2h0m1-7h0m1 2h0m1-2h0m0 2h0m0 3h0m0-1h0m0-2h0m1-4h0m0 7h0m0 3h0m0-6h0m0 3h0m1 1h0m0-9h0m0 6h0m1-2h0m0 12h0m0-4h0m1-6h0m0-10h0m0 6h0m0 4h0m0-7h0m0 9h0m0 0h0m1 3h0m1-9h0m0 2h0m0-8h0m0 10h0m0-7h0m1 10h0m0-4h0m0 1h0m0 0h0m1-1h0m1-2h0m0 0h0m0 4h0m1-3h0m0-2h0m1 2h0m0 2h0m0-6h0m0 4h0m2 4h0m0-2h0m1 1h0m0 0h0m0-4h0m0 5h0m2-6h0m0 2h0m0-2h0m0 10h0m1 1h0m0-4h0m0-6h0m0 14h0m1-8h0m0 5h0m0-12h0m1 8h0m1-1h0m1-6h0m0 1h0m0-1h0m0 12h0m1-8h0m0-3h0m0 2h0m1 0h0m0 2h0m1-6h0m0-2h0m0 1h0m0 3h0m1 2h0m1-6h0m1 8h0m1 0h0m0-1h0m1 0h0m0 2h0m0-6h0m0 6h0m1-2h0m1 2h0m1-10h0m0 15h0m0 2h0m1-10h0m0-1h0m1-7h0m0 7h0m0 6h0m1-1h0m1-3h0m0-1h0m0 6h0m0 0h0m1 1h0m0-11h0m0 5h0m0-1h0m1 2h0m0 2h0m1 0h0m0-4h0m0 4h0m1 2h0m0-6h0m0 3h0m0 4h0m1-8h0m0-3h0m1 9h0m0-8h0m0-2h0m1 9h0m0-3h0m0 2h0m1 4h0m0-5h0m0 2h0m1-8h0m1 7h0m0-4h0m0 8h0m0-3h0m0-5h0m1 10h0m0-5h0m1 1h0m0-6h0m1 0h0m1 3h0m0 1h0m0 2h0m0-2h0m2 2h0m0 2h0m0-6h0m0 6h0m1 1h0m0-8h0m0 3h0m0-4h0m1 7h0m0-1h0m0-5h0m0 7h0m0 2h0m1-10h0m0 1h0m1 4h0m0 4h0m0-6h0m1 8h0m0-12h0m1 10h0m0-3h0m1 1h0m0-9h0m0 3h0m0 9h0m0-3h0m1-6h0m0 5h0m1-1h0m1-6h0m0 11h0m0-10h0m1 4h0m0-5h0m0 8h0m0 1h0m0-7h0m0 8h0m1 2h0m0-6h0m0 2h0m0 0h0m0-2h0m1 3h0m0-2h0m0-5h0m1 5h0m0-3h0m0-3h0m0 10h0m1-12h0m0 2h0m0 2h0m0 1h0m0 8h0m1-2h0m0-3h0m1-2h0m0 4h0m0 0h0m2-6h0m0-6h0m0 11h0m0-2h0m0-1h0m1-1h0m0 8h0m0-7h0m0 6h0m0-5h0m0-1h0m1 7h0m0-8h0m1-3h0m0 5h0m2 1h0m0-9h0m0 12h0m0-15h0m1 13h0m1-2h0m0-2h0m0 0h0m0 5h0m1-5h0m0 7h0m1-7h0m0-8h0m1-2h0m0 10h0m0 1h0m0-2h0m0 0h0m1 2h0m0 0h0m0-9h0m1 9h0m0-4h0m1-7h0m0 8h0m1-3h0m0 1h0m0 3h0m1 0h0m1-2h0m0 2h0m0-5h0m0 4h0m1-2h0m0 1h0m1 0h0m0 5h0m0-8h0m0 7h0m1-4h0m0 3h0m0-4h0m0 3h0m1 3h0m1-3h0m1 0h0m0 1h0m0-7h0m1 3h0m0-3h0m0 13h0m1-15h0m0 11h0m0-9h0m0-1h0m0 11h0m0-4h0m0-4h0m1-2h0m0 1h0m1-3h0m0 7h0m0 2h0m0 0h0m0-7h0m0 6h0m1 1h0m0-8h0m0 8h0m1 1h0m0-5h0m0 1h0m1-5h0m1-1h0m0 7h0m0-2h0m0-2h0m1-2h0m0 3h0m1 1h0m0-6h0m0 4h0m0 4h0m0-4h0m0-2h0m1-1h0m0 3h0m1 0h0m0 4h0m0-2h0m0 2h0m0-3h0m1 4h0m0-4h0m1-1h0m0-4h0m0 0h0m1-2h0m0 11h0m0-1h0m0-8h0m1 8h0m0-1h0m0-2h0m0 4h0m1-1h0m0 4h0m0 0h0m0-8h0m1 12h0m0 3h0m1-9h0m0-3h0m0 1h0m0 6h0m1-4h0m0-4h0m0 8h0m0 4h0m1 1h0m0-3h0m0-3h0m1-11h0m0 7h0m0 9h0m1-9h0m1 2h0m0 0h0m0 8h0m1-6h0m1-8h0m0 5h0m1 1h0m0-1h0m1 0h0m0 6h0m0-13h0m0 6h0m0 1h0m1 4h0m1-5h0m0 1h0m1 0h0m0 6h0m0-11h0m1 12h0m0 2h0m1-7h0m0 0h0m0 1h0m0-9h0m0 15h0m2-9h0m0 2h0m2-4h0m0 4h0m0-9h0m1 7h0m0-2h0m1 1h0m0 3h0m1 0h0m0 6h0m0-1h0m1-8h0m0 3h0m0-5h0m1 10h0m0-4h0m1-3h0m0 1h0m1-3h0m0 0h0m0 0h0m0 11h0m1-18h0m0 14h0m1-3h0m0-8h0m1 14h0m0-10h0m1-2h0m0 8h0m0-11h0m0 4h0m1 2h0m1 5h0m0-5h0m2 2h0m0 2h0m0 0h0m0-9h0m1 5h0m0-4h0m0 4h0m1-3h0m1 2h0m0 2h0m0-2h0m0-7h0m1 10h0m0-5h0m0 2h0m1 3h0m0-7h0m0 3h0m1 2h0m0-2h0m1 1h0m1 2h0m1 1h0m0 4h0m0-5h0m0-3h0m0-4h0m1 9h0m0-1h0m1 3h0m1-4h0m0-1h0m0 0h0m2 0h0m1 4h0m0-3h0m0-4h0m0 2h0m0-1h0m1 5h0m0-10h0m0 8h0m0 3h0m1-2h0m0-3h0m1 4h0m0-6h0m0-1h0m1 3h0m1 1h0m0 1h0m0 2h0m0 7h0m1-12h0m1 7h0m0-1h0m0-5h0m1 5h0m0-5h0m1 3h0m0 5h0m0-5h0m0-4h0m1 9h0m0-3h0m1-1h0m0 5h0m1-7h0m0 6h0m0-11h0m0 9h0m0-7h0m1 7h0m0-5h0m0-4h0m0 6h0m0 2h0m0-1h0m0 2h0m0 2h0m1-7h0m0 1h0m1 4h0m0-7h0m0 5h0m0-3h0m0 1h0m1-4h0m0 7h0m1-3h0m0 6h0m1-5h0m0-1h0m0 6h0m1-8h0m0 6h0m0-6h0m0 3h0m0-1h0m0 2h0m0-1h0m1-4h0m0 3h0m0 6h0m0-7h0m2 0h0m1 7h0m1-8h0m0-3h0m1-5h0m0 12h0m0-3h0m0 0h0m0-5h0m1 7h0m0-5h0m0-3h0m0 0h0m0-1h0m1 7h0m0-4h0m1-6h0m1 11h0m0 1h0m0-6h0m0-3h0m1 10h0m0-2h0m1-6h0m0 3h0m1 5h0m0-2h0m0 2h0m0 4h0m1-9h0m0 5h0m0-1h0m0-4h0m0 8h0m1 1h0m0-8h0m0-4h0m0 6h0m1-3h0m0-6h0m0 6h0m0 3h0m1-7h0m0 1h0m0 0h0m1-5h0m0 9h0m0-6h0m0 2h0m1 12h0m0-14h0m0-1h0m0 15h0m0-12h0m1-1h0m0 6h0m1-9h0m3 7h0m0-7h0m0 4h0m0 4h0m1-1h0m0-3h0m0 4h0m2 6h0m0-11h0m1 3h0m0 4h0m0 5h0m1-12h0m1 7h0m0 1h0m0-4h0m0-1h0m1-2h0m2-7h0m0 13h0m0-5h0m0-1h0m0 0h0m1 1h0m0 1h0m0 2h0m0-8h0m0 6h0m1-1h0m0-2h0m1-1h0m0 3h0m0 2h0m1 8h0m0-7h0m0 0h0m1 2h0m0 1h0m0 2h0m1-12h0m0 3h0m0 4h0m1-3h0m0 6h0m1-5h0m0 4h0m1 1h0m0 3h0m0-8h0m0 6h0m1-1h0m0 3h0m1 1h0m0-4h0m0-5h0m1 9h0m0-8h0m0 6h0m2-7h0m0 4h0m0-1h0m0-4h0m1 2h0m0-2h0m0 0h0m1 12h0m0-17h0m0 0h0m1 10h0m0-3h0m0 2h0m0-3h0m0-2h0m0 14h0m2-10h0m0 0h0m1 4h0m0-3h0m0-4h0m0-1h0m1 7h0m0-2h0m0-2h0m1 0h0m1 4h0m2-7h0m0 10h0m0 0h0m1-7h0m0 4h0m0-6h0m0 7h0m0 3h0m1-3h0m0-3h0m0-2h0m1 8h0m0-9h0m0-6h0m1 10h0m0 1h0m1 0h0m0-7h0m0 9h0m0-4h0m0-1h0m1 3h0m0-3h0m1-3h0m0 2h0m0 4h0m1 0h0m0 0h0m0 2h0m0 0h0m1-3h0m0-1h0m0 3h0m0-5h0m1 7h0m0-2h0m1 3h0m0-7h0m0-5h0m2 15h0m0-7h0m0-4h0m0 0h0m1 1h0m0 0h0m1-4h0m0 1h0m0 2h0m0 3h0m1-7h0m0 2h0m0-2h0m1 6h0m1 1h0m1 0h0m0-4h0m0 5h0m2 8h0m0-3h0m0 3h0m1-11h0m0 1h0m0 1h0m0-1h0m0 6h0m0-3h0m0 1h0m1-9h0m0 13h0m1-5h0m0-2h0m1 5h0m0-8h0m0 4h0m2-4h0m0 3h0m0 0h0m0-2h0m1 0h0m0-2h0m0 1h0m0 3h0m0-5h0m0 0h0m1 10h0m1-8h0m0 2h0m0 5h0m1-10h0m0 6h0m0-1h0m0 1h0m1 5h0m1-1h0m0 1h0m0 0h0m1-1h0m1-2h0m0 5h0m0-6h0m0 8h0m1-7h0m0 7h0m1-5h0m0 1h0m1-3h0m0 3h0m0 2h0m0 1h0m0-2h0m1 2h0m0-5h0m0-4h0m1 2h0m0 6h0m0-2h0m0-7h0m1 4h0m1 1h0m0 5h0m1-1h0m0-12h0m0 5h0m0-6h0m0 3h0m1-3h0m0 0h0m1 4h0m1 5h0m0-9h0m0 4h0m0 0h0m1-4h0m0 8h0m1-6h0m0-2h0m0 2h0m0-2h0m1 3h0m1-3h0m0 0h0m0 8h0m1-8h0m0-1h0m0 7h0m1-5h0m0 11h0m0-2h0m0-7h0m0 5h0m1-10h0m0 3h0m1 7h0m0-5h0m0 1h0m1 2h0m1 1h0m1-8h0m0 3h0m0 5h0m1-2h0m0 2h0m0 1h0m1-3h0m0-5h0m2 7h0m0-4h0m0 7h0m0 1h0m0-9h0m0 11h0m1-8h0m0 6h0m0 0h0m1-7h0m1 8h0m0-6h0m3 5h0m1-3h0m0-3h0m0 4h0m1-1h0m0 2h0m1-1h0m0 2h0m0-7h0m0-3h0m0 7h0m1-1h0m1 8h0m0-5h0m1-4h0m0 4h0m1 4h0m0-7h0m0 2h0m1 6h0m0-7h0m0 1h0m1-5h0m0 8h0m0 3h0m1-11h0m0 6h0m1-2h0m0-4h0m2 2h0m0-3h0m1 1h0m0 8h0m1-12h0m1 7h0m0-1h0m1-3h0m0 4h0m0-5h0m0 7h0m2 2h0m1-6h0m0 4h0m1-1h0m0-2h0m1 2h0m0-3h0m0-3h0m0 5h0m1 6h0m0-8h0m1 9h0m1-14h0m0 9h0m1-4h0m0 2h0m0-2h0" stroke="#000" stroke-width="9.2" stroke-linecap="round" fill="none"/>
<path transform="scale(0.25)" d="M4945 4036h0m2-2h0m-1-3h0m3-2h0m2-2h0m0-1h0m0-2h0m2-4h0m3-3h0m-1 0h0m3-3h0m0-2h0m3-3h0m1 0h0m0-1h0m2-3h0m1 1h0m3-7h0m2 0h0m-2-1h0m3-2h0m1-2h0m4 0h0m1 4h0m1 4h0m3-1h0m0 2h0m2 3h0m3 0h0m0 2h0m0 5h0m3-1h0m0 2h0m2 4h0m1 1h0m-1 0h0m1-2h0m4 0h0m0-2h0m1-2h0m3-4h0m0 1h0m2-4h0m1-1h0m0-3h0m0-2h0m3-3h0m2-1h0m16 0h0m0 2h0m2-1h0m2 5h0m1 2h0m2 2h0m2 3h0m0-2h0m2 4h0m1 3h0m1 3h0m2 4h0m0 0h0m0 0h0m4-2h0m0-4h0m1-2h0m0-1h0m3-1h0m1-3h0m3-2h0m1-1h0m1-2h0m0-1h0m4-4h0m-1-2h0m-1 0h0m4 3h0m0 4h0m0-3h0m3 2h0m2 4h0m-1 2h0m1 4h0m1 1h0m4 1h0m-1 0h0m3 3h0m1 3h0m-1 1h0m2-3h0m2-3h0m1-1h0m1-2h0m3-1h0m2-4h0m0 2h0m1-7h0m0 1h0m2-4h0m0-1h0m2-1h0m31-1h0m-1 0h0m2 2h0m1 4h0m2 1h0m1 4h0m1 3h0m2 2h0m1 0h0m1 0h0m-1 3h0m5 5h0m-1 1h0m1-3h0m1 0h0m1-2h0m1-2h0m3-1h0m1 0h0m2-4h0m-1-4h0m2 0h0m1-4h0m3-1h0m1-1h0m1-5h0m16-3h0m1 2h0m1 2h0m2 5h0m0 0h0m2 3h0m2 0h0m-1 4h0m4 3h0m1 0h0m1 6h0m1 1h0m1 1h0m2 2h0m0 2h0m0-5h0m3-2h0m0 0h0m1-2h0m3-7h0m0-1h0m2-2h0m2 1h0m-2-3h0m3-4h0m1-1h0m2-3h0m0 3h0m5 4h0m0 0h0m1 5h0m3 0h0m2 3h0m1 3h0m2 0h0m0 4h0m2-1h0m-253 27h0m2-6h0m3 2h0m0-4h0m3-3h0m0 0h0m2-5h0m2-1h0m3-1h0m0-5h0m2-3h0m0-1h0m3-2h0m3 0h0m0-2h0m-1 4h0m3 3h0m0 3h0m2-1h0m3 2h0m1 5h0m-2 2h0m4 2h0m1-1h0m2 2h0m3 0h0m0 4h0m1 2h0m14-2h0m2 2h0m0-3h0m1 1h0m3-5h0m1 1h0m2-5h0m3-1h0m0 1h0m0-9h0m3 2h0m1-4h0m2-2h0m2-1h0m-2 2h0m3 0h0m-1 1h0m3 3h0m1 2h0m2 1h0m0 5h0m2 2h0m2 2h0m0 2h0m4 3h0m1 3h0m1-2h0m42 3h0m2-2h0m2-4h0m0-3h0m3 1h0m2-3h0m1-2h0m-1-3h0m3-3h0m2-1h0m0-4h0m2 1h0m1-2h0m1-3h0m0 4h0m3 3h0m2 0h0m0 4h0m2 0h0m0 3h0m1 1h0m2 3h0m1 2h0m1 2h0m3 3h0m0 2h0m24-1h0m1-1h0m2-2h0m0-4h0m3 1h0m0-3h0m1-2h0m2 0h0m3-5h0m1 0h0m2-5h0m0-1h0m0-2h0m0 0h0m1 2h0m4-1h0m-1 5h0m3 1h0m1 5h0m1 0h0m3 4h0m1-2h0m0 4h0m2 2h0m2 0h0m1 6h0m3-2h0m0 1h0m2-2h0m2-5h0m2-2h0m0-4h0m3 0h0m-1-1h0m2-7h0m1 3h0m2-2h0m1-5h0m1-1h0m3-2h0m0 5h0m-1 1h0m3 4h0m2 2h0m0 1h0m3 1h0m1 0h0m0 5h0m3 2h0" stroke="#000" stroke-width="12" stroke-linecap="round" fill="none"/>
<path transform="scale(0.25)" d="M970 3986h0m48 20h0m496-29h0m120 8h0m67-8h0m175 21h0m10-2h0m106 1h0m2029-8h0m665-4h0m110 19h0m102-2h0" stroke="#000" stroke-width="10.4" stroke-linecap="round" fill="none"/>
<path transform="scale(0.25)" d="M818 3965h0m784-56h0m230 55h0m2560-16h0m637 5h0m72-80h0m88 64h0" stroke="#ff0000" stroke-width="11.2" stroke-linecap="round" fill="none"/>
<path d="M291.0 959.3h4.4l-2.2-3.8zM431.0 959.3h4.4l-2.2-3.8zM447.0 959.3h4.4l-2.2-3.8zM460.2 959.3h4.4l-2.2-3.8zM481.0 959.3h4.4l-2.2-3.8zM519.0 959.3h4.4l-2.2-3.8zM552.6 959.3h4.4l-2.2-3.8zM561.8 959.3h4.4l-2.2-3.8zM661.0 959.3h4.4l-2.2-3.8zM749.8 959.3h4.4l-2.2-3.8zM991.8 959.3h4.4l-2.2-3.8zM1011.0 959.3h4.4l-2.2-3.8zM1015.0 959.3h4.4l-2.2-3.8zM1253.8 959.3h4.4l-2.2-3.8zM1269.0 959.3h4.4l-2.2-3.8zM1272.6 959.3h4.4l-2.2-3.8zM1275.0 959.3h4.4l-2.2-3.8z" fill="#ff0000"/>
</g>
<line x1="162.5" y1="954.5" x2="162.5" y2="725.5" stroke="#800080" stroke-width="2.08" stroke-dasharray="2.08 3.44"/>
<line x1="1238.0" y1="954.5" x2="1238.0" y2="725.5" stroke="#800080" stroke-width="2.08" stroke-dasharray="2.08 3.44"/>
<line x1="1303.0" y1="954.5" x2="1303.0" y2="725.5" stroke="#800080" stroke-width="2.08" stroke-dasharray="2.08 3.44"/>
<line x1="162.5" y1="1011.5" x2="162.5" y2="954.5" stroke="#800080" stroke-width="2.08" stroke-dasharray="2.08 3.44"/>
<line x1="1238.0" y1="1011.5" x2="1238.0" y2="954.5" stroke="#800080" stroke-width="2.08" stroke-dasharray="2.08 3.44"/>
<line x1="1303.0" y1="1011.5" x2="1303.0" y2="954.5" stroke="#800080" stroke-width="2.08" stroke-dasharray="2.08 3.44"/>
<rect x="105.5" y="35.5" width="1380.0" height="286.0" fill="none" stroke="#000" stroke-width="1.11"/>
<rect x="105.5" y="380.5" width="1380.0" height="286.0" fill="none" stroke="#000" stroke-width="1.11"/>
<rect x="105.5" y="725.5" width="1380.0" height="229.0" fill="none" stroke="#000" stroke-width="1.11"/>
<rect x="105.5" y="954.5" width="1380.0" height="57.0" fill="none" stroke="#000" stroke-width="1.11"/>
<line x1="162.5" y1="321.5" x2="162.5" y2="326.36" stroke="#000" stroke-width="1.11"/>
<text x="161.90" y="341.80" font-size="14.17" text-anchor="middle" textLength="8.75" lengthAdjust="spacingAndGlyphs" fill="#000" >0</text>
<line x1="414.5" y1="321.5" x2="414.5" y2="326.36" stroke="#000" stroke-width="1.11"/>
<text x="413.90" y="341.80" font-size="14.17" text-anchor="middle" textLength="35.00" lengthAdjust="spacingAndGlyphs" fill="#000" >2000</text>
<line x1="667.5" y1="321.5" x2="667.5" y2="326.36" stroke="#000" stroke-width="1.11"/>
<text x="666.90" y="341.80" font-size="14.17" text-anchor="middle" textLength="35.00" lengthAdjust="spacingAndGlyphs" fill="#000" >4000</text>
<line x1="919.5" y1="321.5" x2="919.5" y2="326.36" stroke="#000" stroke-width="1.11"/>
<text x="918.90" y="341.80" font-size="14.17" text-anchor="middle" textLength="35.12" lengthAdjust="spacingAndGlyphs" fill="#000" >6000</text>
<line x1="1171.5" y1="321.5" x2="1171.5" y2="326.36" stroke="#000" stroke-width="1.11"/>
<text x="1170.90" y="341.80" font-size="14.17" text-anchor="middle" textLength="35.12" lengthAdjust="spacingAndGlyphs" fill="#000" >8000</text>
<line x1="1423.5" y1="321.5" x2="1423.5" y2="326.36" stroke="#000" stroke-width="1.11"/>
<text x="1422.90" y="341.80" font-size="14.17" text-anchor="middle" textLength="43.88" lengthAdjust="spacingAndGlyphs" fill="#000" >10000</text>
<line x1="162.5" y1="666.5" x2="162.5" y2="671.36" stroke="#000" stroke-width="1.11"/>
<text x="161.90" y="686.80" font-size="14.17" text-anchor="middle" textLength="8.75" lengthAdjust="spacingAndGlyphs" fill="#000" >0</text>
<line x1="414.5" y1="666.5" x2="414.5" y2="671.36" stroke="#000" stroke-width="1.11"/>
<text x="413.90" y="686.80" font-size="14.17" text-anchor="middle" textLength="35.00" lengthAdjust="spacingAndGlyphs" fill="#000" >2000</text>
<line x1="667.5" y1="666.5" x2="667.5" y2="671.36" stroke="#000" stroke-width="1.11"/>
<text x="666.90" y="686.80" font-size="14.17" text-anchor="middle" textLength="35.00" lengthAdjust="spacingAndGlyphs" fill="#000" >4000</text>
<line x1="919.5" y1="666.5" x2="919.5" y2="671.36" stroke="#000" stroke-width="1.11"/>
<text x="918.90" y="686.80" font-size="14.17" text-anchor="middle" textLength="35.12" lengthAdjust="spacingAndGlyphs" fill="#000" >6000</text>
<line x1="1171.5" y1="666.5" x2="1171.5" y2="671.36" stroke="#000" stroke-width="1.11"/>
<text x="1170.90" y="686.80" font-size="14.17" text-anchor="middle" textLength="35.12" lengthAdjust="spacingAndGlyphs" fill="#000" >8000</text>
<line x1="1423.5" y1="666.5" x2="1423.5" y2="671.36" stroke="#000" stroke-width="1.11"/>
<text x="1422.90" y="686.80" font-size="14.17" text-anchor="middle" textLength="43.88" lengthAdjust="spacingAndGlyphs" fill="#000" >10000</text>
<line x1="162.5" y1="1011.5" x2="162.5" y2="1016.36" stroke="#000" stroke-width="1.11"/>
<text x="161.90" y="1031.80" font-size="14.17" text-anchor="middle" textLength="8.75" lengthAdjust="spacingAndGlyphs" fill="#000" >0</text>
<line x1="414.5" y1="1011.5" x2="414.5" y2="1016.36" stroke="#000" stroke-width="1.11"/>
<text x="413.90" y="1031.80" font-size="14.17" text-anchor="middle" textLength="35.00" lengthAdjust="spacingAndGlyphs" fill="#000" >2000</text>
<line x1="667.5" y1="1011.5" x2="667.5" y2="1016.36" stroke="#000" stroke-width="1.11"/>
<text x="666.90" y="1031.80" font-size="14.17" text-anchor="middle" textLength="35.00" lengthAdjust="spacingAndGlyphs" fill="#000" >4000</text>
<line x1="919.5" y1="1011.5" x2="919.5" y2="1016.36" stroke="#000" stroke-width="1.11"/>
<text x="918.90" y="1031.80" font-size="14.17" text-anchor="middle" textLength="35.12" lengthAdjust="spacingAndGlyphs" fill="#000" >6000</text>
<line x1="1171.5" y1="1011.5" x2="1171.5" y2="1016.36" stroke="#000" stroke-width="1.11"/>
<text x="1170.90" y="1031.80" font-size="14.17" text-anchor="middle" textLength="35.12" lengthAdjust="spacingAndGlyphs" fill="#000" >8000</text>
<line x1="1423.5" y1="1011.5" x2="1423.5" y2="1016.36" stroke="#000" stroke-width="1.11"/>
<text x="1422.90" y="1031.80" font-size="14.17" text-anchor="middle" textLength="43.88" lengthAdjust="spacingAndGlyphs" fill="#000" >10000</text>
<line x1="100.64" y1="51.5" x2="105.5" y2="51.5" stroke="#000" stroke-width="1.11"/>
<text x="95.18" y="56.50" font-size="14.17" text-anchor="end" textLength="22.12" lengthAdjust="spacingAndGlyphs" fill="#000" >8.8</text>
<line x1="100.64" y1="99.5" x2="105.5" y2="99.5" stroke="#000" stroke-width="1.11"/>
<text x="95.18" y="104.50" font-size="14.17" text-anchor="end" textLength="22.00" lengthAdjust="spacingAndGlyphs" fill="#000" >8.7</text>
<line x1="100.64" y1="146.5" x2="105.5" y2="146.5" stroke="#000" stroke-width="1.11"/>
<text x="95.18" y="151.50" font-size="14.17" text-anchor="end" textLength="22.12" lengthAdjust="spacingAndGlyphs" fill="#000" >8.6</text>
<line x1="100.64" y1="193.5" x2="105.5" y2="193.5" stroke="#000" stroke-width="1.11"/>
<text x="95.18" y="198.50" font-size="14.17" text-anchor="end" textLength="22.00" lengthAdjust="spacingAndGlyphs" fill="#000" >8.5</text>
<line x1="100.64" y1="241.5" x2="105.5" y2="241.5" stroke="#000" stroke-width="1.11"/>
<text x="95.18" y="246.50" font-size="14.17" text-anchor="end" textLength="22.00" lengthAdjust="spacingAndGlyphs" fill="#000" >8.4</text>
<line x1="100.64" y1="288.5" x2="105.5" y2="288.5" stroke="#000" stroke-width="1.11"/>
<text x="95.18" y="293.50" font-size="14.17" text-anchor="end" textLength="22.00" lengthAdjust="spacingAndGlyphs" fill="#000" >8.3</text>
<line x1="100.64" y1="400.5" x2="105.5" y2="400.5" stroke="#000" stroke-width="1.11"/>
<text x="95.18" y="405.50" font-size="14.17" text-anchor="end" textLength="30.88" lengthAdjust="spacingAndGlyphs" fill="#000" >8.78</text>
<line x1="100.64" y1="440.5" x2="105.5" y2="440.5" stroke="#000" stroke-width="1.11"/>
<text x="95.18" y="445.50" font-size="14.17" text-anchor="end" textLength="30.88" lengthAdjust="spacingAndGlyphs" fill="#000" >8.76</text>
<line x1="100.64" y1="480.5" x2="105.5" y2="480.5" stroke="#000" stroke-width="1.11"/>
<text x="95.18" y="485.50" font-size="14.17" text-anchor="end" textLength="30.75" lengthAdjust="spacingAndGlyphs" fill="#000" >8.74</text>
<line x1="100.64" y1="520.5" x2="105.5" y2="520.5" stroke="#000" stroke-width="1.11"/>
<text x="95.18" y="525.50" font-size="14.17" text-anchor="end" textLength="30.75" lengthAdjust="spacingAndGlyphs" fill="#000" >8.72</text>
<line x1="100.64" y1="560.5" x2="105.5" y2="560.5" stroke="#000" stroke-width="1.11"/>
<text x="95.18" y="565.50" font-size="14.17" text-anchor="end" textLength="30.75" lengthAdjust="spacingAndGlyphs" fill="#000" >8.70</text>
<line x1="100.64" y1="601.5" x2="105.5" y2="601.5" stroke="#000" stroke-width="1.11"/>
<text x="95.18" y="606.50" font-size="14.17" text-anchor="end" textLength="31.00" lengthAdjust="spacingAndGlyphs" fill="#000" >8.68</text>
<line x1="100.64" y1="641.5" x2="105.5" y2="641.5" stroke="#000" stroke-width="1.11"/>
<text x="95.18" y="646.50" font-size="14.17" text-anchor="end" textLength="31.00" lengthAdjust="spacingAndGlyphs" fill="#000" >8.66</text>
<line x1="100.64" y1="763.5" x2="105.5" y2="763.5" stroke="#000" stroke-width="1.11"/>
<text x="95.78" y="768.70" font-size="14.17" text-anchor="end" textLength="79.25" lengthAdjust="spacingAndGlyphs" fill="#000" >not Kalman</text>
<line x1="100.64" y1="802.4" x2="105.5" y2="802.4" stroke="#000" stroke-width="1.11"/>
<text x="95.78" y="806.80" font-size="14.17" text-anchor="end" textLength="62.75" lengthAdjust="spacingAndGlyphs" fill="#000" >not track</text>
<line x1="100.64" y1="840.4" x2="105.5" y2="840.4" stroke="#000" stroke-width="1.11"/>
<text x="95.78" y="844.90" font-size="14.17" text-anchor="end" textLength="57.62" lengthAdjust="spacingAndGlyphs" fill="#000" >Ion. rad.</text>
<line x1="100.64" y1="878.5" x2="105.5" y2="878.5" stroke="#000" stroke-width="1.11"/>
<text x="95.78" y="882.80" font-size="14.17" text-anchor="end" textLength="43.75" lengthAdjust="spacingAndGlyphs" fill="#000" >dr &gt; 5</text>
<line x1="100.64" y1="916.5" x2="105.5" y2="916.5" stroke="#000" stroke-width="1.11"/>
<text x="95.78" y="920.90" font-size="14.17" text-anchor="end" textLength="80.38" lengthAdjust="spacingAndGlyphs" fill="#000" >OBS not OK</text>
<line x1="100.64" y1="957.5" x2="105.5" y2="957.5" stroke="#000" stroke-width="1.11"/>
<text x="95.18" y="962.50" font-size="14.17" text-anchor="end" textLength="17.62" lengthAdjust="spacingAndGlyphs" fill="#000" >10</text>
<line x1="100.64" y1="983.5" x2="105.5" y2="983.5" stroke="#000" stroke-width="1.11"/>
<text x="95.18" y="988.50" font-size="14.17" text-anchor="end" textLength="8.75" lengthAdjust="spacingAndGlyphs" fill="#000" >5</text>
<line x1="100.64" y1="1009.5" x2="105.5" y2="1009.5" stroke="#000" stroke-width="1.11"/>
<text x="95.18" y="1014.50" font-size="14.17" text-anchor="end" textLength="8.75" lengthAdjust="spacingAndGlyphs" fill="#000" >0</text>
<line x1="102.72" y1="970.5" x2="105.5" y2="970.5" stroke="#000" stroke-width="1.11"/>
<line x1="102.72" y1="996.5" x2="105.5" y2="996.5" stroke="#000" stroke-width="1.11"/>
<text x="0" y="0" font-size="14.17" text-anchor="middle" transform="translate(68.5,983.7) rotate(-90)" textLength="14.62" lengthAdjust="spacingAndGlyphs">dr</text>
<text x="795.50" y="26.50" font-size="17.00" text-anchor="middle" textLength="196.25" lengthAdjust="spacingAndGlyphs" fill="#000" >AGASC ID 424286536.0</text>
<text x="795.50" y="372.00" font-size="17.00" text-anchor="middle" textLength="175.25" lengthAdjust="spacingAndGlyphs" fill="#000" >Magnitude Estimates</text>
<text x="678.00" y="312.00" font-size="14.17" text-anchor="start" textLength="44.00" lengthAdjust="spacingAndGlyphs" fill="#000" >51215</text>
<text x="678.00" y="657.00" font-size="14.17" text-anchor="start" textLength="44.00" lengthAdjust="spacingAndGlyphs" fill="#000" >51215</text>
<text x="1249.00" y="292.00" font-size="14.17" text-anchor="start" textLength="43.88" lengthAdjust="spacingAndGlyphs" fill="#000" >45674</text>
<text x="1249.00" y="637.00" font-size="14.17" text-anchor="start" textLength="43.88" lengthAdjust="spacingAndGlyphs" fill="#000" >45674</text>
<rect x="1361.3" y="42.3" width="117.2" height="27.2" rx="3" ry="3" fill="#fff" fill-opacity="0.8" stroke="#cccccc" stroke-width="1.11"/>
<line x1="1366" y1="53.8" x2="1396" y2="53.8" stroke="#008000" stroke-width="2.08"/>
<text x="1407.50" y="59.00" font-size="14.17" text-anchor="start" textLength="31.00" lengthAdjust="spacingAndGlyphs" fill="#000" >mag</text>
<text x="1437.30" y="61.00" font-size="10.60" text-anchor="start" textLength="33.75" lengthAdjust="spacingAndGlyphs" font-style="italic" fill="#000" >AGASC</text>
<rect x="1348.4" y="247.3" width="130.1" height="67.2" rx="3" ry="3" fill="#fff" fill-opacity="0.8" stroke="#cccccc" stroke-width="1.11"/>
<circle cx="1367.5" cy="260.5" r="2" fill="#ff0000"/>
<text x="1392.00" y="264.10" font-size="14.17" text-anchor="start" textLength="47.00" lengthAdjust="spacingAndGlyphs" fill="#000" >not OK</text>
<circle cx="1367.5" cy="281.5" r="2" fill="#ffa500"/>
<text x="1392.00" y="285.10" font-size="14.17" text-anchor="start" textLength="80.12" lengthAdjust="spacingAndGlyphs" fill="#000" >Highlighted</text>
<circle cx="1367.5" cy="302.5" r="2" fill="#000"/>
<text x="1392.00" y="306.10" font-size="14.17" text-anchor="start" textLength="19.88" lengthAdjust="spacingAndGlyphs" fill="#000" >OK</text>
<rect x="1365.3" y="387.3" width="113.2" height="48.2" rx="3" ry="3" fill="#fff" fill-opacity="0.8" stroke="#cccccc" stroke-width="1.11"/>
<line x1="1369" y1="399.5" x2="1399" y2="399.5" stroke="#ffa500" stroke-width="2.78"/>
<line x1="1369" y1="421.8" x2="1399" y2="421.8" stroke="#ff0000" stroke-width="2.08"/>
<text x="1410.00" y="404.00" font-size="14.17" text-anchor="start" textLength="31.00" lengthAdjust="spacingAndGlyphs" fill="#000" >mag</text>
<text x="1439.50" y="406.00" font-size="10.60" text-anchor="start" textLength="31.00" lengthAdjust="spacingAndGlyphs" font-style="italic" fill="#000" >OBSID</text>
<text x="1409.50" y="426.50" font-size="14.17" text-anchor="start" textLength="31.00" lengthAdjust="spacingAndGlyphs" fill="#000" >mag</text>
<rect x="1348.4" y="613.5" width="130.3" height="45.8" rx="3" ry="3" fill="#fff" fill-opacity="0.8" stroke="#cccccc" stroke-width="1.11"/>
<circle cx="1367.3" cy="626.3" r="2" fill="#ffa500"/>
<text x="1392.50" y="630.10" font-size="14.17" text-anchor="start" textLength="80.12" lengthAdjust="spacingAndGlyphs" fill="#000" >Highlighted</text>
<circle cx="1367.3" cy="647.1" r="2" fill="#000"/>
<text x="1392.50" y="650.90" font-size="14.17" text-anchor="start" textLength="19.88" lengthAdjust="spacingAndGlyphs" fill="#000" >OK</text>
</svg></body></html>
